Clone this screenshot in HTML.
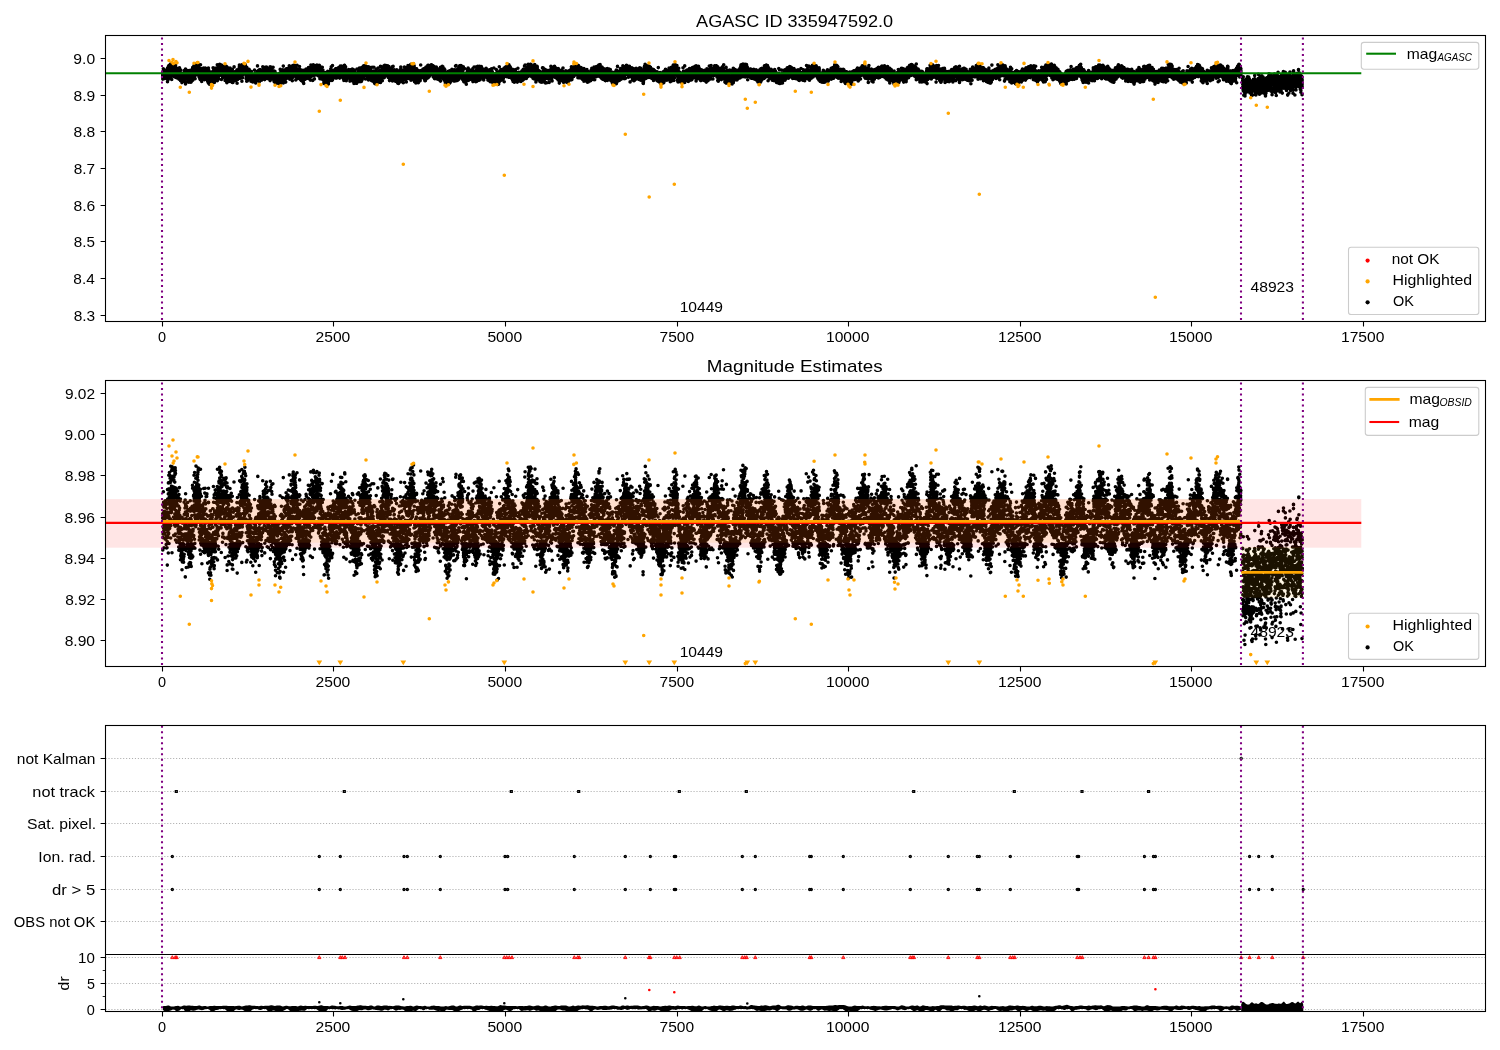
<!DOCTYPE html>
<html><head><meta charset="utf-8"><title>AGASC ID 335947592.0</title>
<style>html,body{margin:0;padding:0;background:#fff}body{width:1500px;height:1050px;overflow:hidden;font-family:"Liberation Sans",sans-serif}</style></head>
<body>
<svg width="1500" height="1050" viewBox="0 0 1500 1050" style="display:block;will-change:transform">
<rect width="1500" height="1050" fill="#fff"/>
<defs>
<clipPath id="c1"><rect x="105.5" y="35.5" width="1380" height="286"/></clipPath>
<clipPath id="c2"><rect x="105.5" y="380.5" width="1380" height="286"/></clipPath>
<clipPath id="c3"><rect x="105.5" y="725.5" width="1380" height="286"/></clipPath>
</defs>
<g clip-path="url(#c1)">
<g font-family="Liberation Sans, sans-serif" fill="#000" style="font-kerning:none;opacity:.999">
<text x="679.65" y="312.2" font-size="14.2" textLength="43.42" lengthAdjust="spacingAndGlyphs">10449</text>
<text x="1250.49" y="292.2" font-size="14.2" textLength="43.53" lengthAdjust="spacingAndGlyphs">48923</text>
</g>
<path d="M162.8 73.4V76.9M163.3 71.1V76.2M163.9 70.7V75.6M164.5 70.8V75.5M165.1 70.5V76.2M165.7 71.1V74.5M166.3 74.0V77.0M166.9 70.9V78.7M167.5 70.0V77.5M168.2 69.1V76.6M168.7 68.4V76.2M169.3 68.2V74.8M169.9 66.3V73.7M170.5 66.9V73.5M171.1 68.1V72.2M171.7 64.9V73.8M172.3 64.7V71.6M172.9 66.1V71.1M173.5 67.8V73.2M174.1 64.5V71.5M174.8 65.3V74.6M175.4 64.9V76.2M175.9 68.8V72.8M176.5 70.2V77.4M177.1 70.2V73.5M177.7 70.2V74.8M178.3 69.7V76.0M178.9 71.9V78.5M179.5 71.6V77.1M180.1 72.9V78.8M180.7 73.5V80.2M181.3 76.1V80.0M181.9 76.5V80.5M182.4 78.2V80.2M183.1 77.9V80.6M183.7 75.2V80.3M184.3 72.7V78.1M184.9 72.8V77.2M185.5 70.2V78.6M186.1 74.2V79.1M186.7 74.7V77.3M187.3 72.6V77.5M187.9 71.9V78.2M188.4 74.9V79.9M189.1 74.3V81.5M189.7 75.7V81.5M190.3 71.6V79.8M190.9 75.6V81.9M191.5 72.0V77.3M192.0 71.9V80.0M192.7 68.1V78.3M193.3 74.2V75.7M193.9 68.5V76.5M194.5 67.0V77.1M195.1 69.2V73.3M195.7 66.3V73.6M196.3 67.9V73.5M196.9 67.1V73.3M197.6 66.1V72.8M198.1 64.8V70.5M198.7 67.8V73.3M199.3 69.0V76.7M199.9 68.9V76.8M200.5 68.2V77.8M201.1 72.0V76.1M201.7 74.2V78.2M202.3 72.3V77.6M202.9 71.4V78.2M203.5 72.4V74.1M204.0 72.1V77.8M204.7 70.2V79.5M205.3 70.8V78.5M205.9 70.7V77.7M206.6 73.8V78.8M207.1 75.4V78.1M207.7 76.4V79.4M208.4 70.5V80.0M208.8 72.9V79.4M209.5 75.1V83.5M210.1 73.6V82.2M210.7 75.3V83.1M211.3 73.2V78.1M211.9 76.3V80.9M212.5 73.3V79.3M213.1 71.7V77.5M213.6 76.0V80.6M214.3 69.8V81.9M214.9 72.1V79.1M215.5 68.9V78.2M216.1 69.8V77.1M216.7 69.9V73.4M217.3 67.8V75.2M217.9 69.4V78.3M218.6 68.7V76.5M219.1 66.9V73.1M219.7 65.2V73.1M220.3 66.5V70.6M220.9 66.0V73.5M221.4 65.7V74.6M222.1 67.7V71.9M222.7 68.8V76.7M223.3 68.5V71.7M223.9 69.3V74.5M224.5 67.4V74.4M225.1 69.0V74.4M225.7 67.0V74.9M226.3 69.4V72.5M226.9 67.8V81.7M227.5 68.0V74.0M228.1 69.6V75.2M228.7 70.1V78.6M229.3 69.8V76.2M230.0 73.9V79.5M230.5 70.2V77.4M231.1 72.3V78.9M231.7 71.7V78.0M232.3 71.6V81.7M232.9 73.3V80.8M233.5 73.2V79.8M234.1 75.8V79.7M234.7 74.0V79.7M235.3 71.9V79.6M235.8 74.6V80.3M236.5 73.0V79.3M237.1 70.6V78.9M237.6 72.2V78.7M238.3 73.7V78.6M238.9 71.7V78.1M239.4 66.7V76.6M240.1 70.8V77.9M240.7 68.6V76.0M241.4 69.7V76.3M241.9 65.9V76.0M242.5 67.5V74.9M243.2 66.5V73.7M243.7 66.7V70.6M244.3 66.5V73.0M245.0 65.4V72.4M245.4 67.7V72.4M246.1 68.3V76.0M246.7 67.9V74.0M247.3 71.0V79.1M247.9 71.4V78.7M248.5 70.5V76.6M249.1 70.7V76.0M249.7 74.0V78.6M250.3 71.6V77.3M250.9 73.5V78.6M251.4 74.3V79.9M252.1 77.7V78.7M252.7 77.4V80.0M253.3 76.8V80.2M253.8 75.9V79.9M254.5 74.4V79.1M255.1 73.7V80.0M255.7 74.7V79.3M256.3 75.2V78.9M256.9 76.8V79.6M257.5 71.2V80.2M258.1 73.5V77.2M258.7 71.7V78.1M259.3 72.8V78.6M259.9 69.8V73.7M260.5 71.4V75.3M261.2 70.5V77.2M261.7 73.7V79.3M262.3 71.1V76.1M262.8 71.6V75.3M263.5 69.1V72.2M264.1 69.2V73.3M264.7 68.7V77.8M265.3 68.7V73.8M265.9 68.8V75.6M266.5 67.8V75.1M267.1 69.7V75.7M267.7 69.9V77.4M268.3 72.2V77.1M268.9 70.2V74.3M269.5 71.6V77.0M270.1 68.4V76.4M270.7 70.9V76.8M271.3 73.5V77.5M271.9 68.7V76.5M272.5 71.6V77.7M273.1 71.3V77.4M273.7 73.0V77.0M274.3 73.4V81.2M274.9 73.8V79.1M275.5 74.4V82.7M276.1 75.8V79.9M276.7 76.0V80.6M277.3 76.4V80.2M277.9 76.4V79.9M278.5 74.4V81.5M279.1 75.2V80.6M279.7 75.4V84.0M280.2 72.9V82.9M280.9 75.3V78.9M281.5 72.7V81.1M282.1 72.9V79.6M282.7 75.0V78.0M283.3 73.3V78.2M283.9 73.2V79.2M284.5 72.2V79.4M285.0 71.3V78.0M285.7 71.9V78.9M286.3 70.1V78.3M286.9 73.9V77.4M287.5 70.4V75.1M288.1 69.3V76.9M288.7 71.5V77.3M289.3 71.9V78.0M289.8 73.5V74.5M290.5 71.9V77.2M291.1 67.3V75.6M291.6 69.5V74.4M292.3 69.9V78.1M292.9 65.8V71.9M293.5 66.3V72.1M294.1 67.4V72.3M294.7 65.6V71.5M295.3 66.2V73.3M295.8 67.9V77.0M296.5 69.6V75.5M297.1 69.1V77.0M297.7 70.9V76.5M298.4 72.6V76.0M298.9 72.0V77.3M299.5 69.2V77.9M300.1 72.8V78.3M300.6 75.6V78.6M301.3 73.0V80.1M301.9 75.4V78.8M302.5 73.9V80.6M303.1 72.2V80.9M303.7 73.2V79.6M304.4 75.1V79.4M304.9 71.3V77.9M305.5 72.7V76.4M306.1 71.1V78.0M306.7 70.9V77.9M307.3 73.8V76.0M307.9 71.7V77.3M308.5 68.3V75.0M309.1 72.9V78.0M309.7 68.2V77.4M310.3 69.1V75.2M310.9 70.6V74.1M311.5 70.6V75.4M312.1 68.2V73.9M312.7 68.2V75.6M313.3 67.7V73.7M313.9 66.9V74.1M314.4 68.3V75.1M315.1 66.9V72.3M315.7 68.3V70.2M316.3 67.2V71.7M316.9 66.3V71.8M317.5 67.6V70.5M318.0 67.8V74.1M318.7 66.6V75.8M319.3 66.4V74.4M319.9 66.9V75.1M320.5 68.0V76.6M321.1 69.4V76.9M321.7 72.0V78.2M322.3 70.6V77.7M322.9 72.2V79.3M323.6 76.4V78.1M324.1 75.9V83.5M324.7 75.0V80.1M325.3 72.8V79.9M325.9 75.5V82.0M326.4 73.6V80.0M327.1 72.9V81.6M327.7 72.9V81.9M328.3 72.5V83.5M328.9 76.3V80.8M329.6 73.5V78.4M330.1 72.8V79.1M330.7 72.6V79.6M331.3 72.0V75.8M331.9 73.1V80.1M332.5 71.3V77.1M333.1 71.9V75.9M333.7 71.0V76.4M334.3 71.5V76.9M334.9 71.3V77.1M335.5 70.6V76.5M336.1 73.6V76.7M336.7 71.7V77.5M337.3 70.3V76.4M337.9 69.4V75.1M338.5 69.0V76.8M339.1 67.6V71.5M339.7 68.9V75.4M340.3 68.1V74.6M340.9 67.9V74.1M341.5 67.2V73.3M342.1 68.2V74.1M342.7 69.2V71.1M343.3 69.0V77.6M343.9 69.1V73.7M344.5 65.5V76.0M345.1 70.3V75.8M346.3 71.2V76.0M346.9 70.6V78.1M347.5 70.7V78.0M348.0 72.9V73.5M348.7 71.8V74.2M349.4 71.4V75.1M349.9 72.7V75.5M350.5 71.4V77.6M351.1 72.0V77.8M351.7 71.6V77.4M352.3 74.3V78.7M352.9 70.8V80.9M353.5 73.9V79.8M354.0 74.1V80.0M354.7 72.3V79.4M355.2 77.1V81.3M355.8 75.1V79.9M356.5 78.3V83.2M357.0 76.4V81.5M357.7 74.4V80.0M358.3 77.7V80.6M358.8 70.6V78.5M360.0 69.4V81.0M360.7 73.8V76.2M361.3 69.8V79.7M362.0 67.8V78.2M362.5 69.6V72.5M363.1 68.9V72.3M363.7 66.6V73.7M364.2 67.1V70.7M364.8 66.1V70.8M365.5 67.3V74.6M366.1 68.8V71.8M366.7 67.5V73.5M367.3 69.6V76.1M367.9 70.5V75.6M368.5 68.7V76.6M369.2 70.4V76.5M369.7 70.0V76.5M370.3 68.2V76.9M370.9 72.0V77.7M371.5 73.3V78.7M372.1 71.9V78.1M372.7 72.2V80.6M373.3 73.6V80.2M373.9 71.1V80.3M374.5 77.7V82.6M375.1 74.1V80.5M375.7 76.9V82.4M376.3 77.2V82.9M376.9 75.6V82.1M377.5 72.4V81.4M378.1 72.7V78.6M378.7 75.5V81.2M379.4 76.5V78.8M379.8 73.1V79.8M380.5 72.2V80.4M381.2 71.3V75.9M381.8 70.3V75.4M382.3 67.9V76.5M382.8 68.6V75.2M383.5 69.1V75.6M384.0 66.6V77.5M384.7 66.1V75.5M385.2 68.9V73.6M386.0 67.1V72.4M386.6 67.3V70.0M387.0 69.3V74.7M387.7 67.7V72.8M388.3 68.2V74.3M388.9 68.8V74.7M389.5 73.6V75.0M390.1 72.7V76.2M390.7 73.6V78.5M391.2 69.6V74.9M391.9 74.0V76.2M392.5 71.6V79.2M393.1 73.8V75.7M393.7 72.1V77.4M394.3 71.8V78.1M395.0 74.9V78.5M395.5 75.0V80.5M396.1 76.0V81.1M396.7 70.8V80.2M397.3 75.9V80.7M397.9 74.6V83.0M398.5 74.3V82.6M399.2 73.3V81.0M399.7 74.5V78.5M400.3 74.3V80.7M400.8 70.5V79.8M401.5 72.1V78.4M402.0 74.4V78.8M402.7 70.4V77.6M403.3 75.1V80.2M403.9 70.9V76.2M404.4 70.8V75.6M405.1 70.8V77.0M405.7 72.2V76.3M406.3 69.2V76.6M406.9 69.8V77.9M407.4 70.5V74.9M408.0 68.8V76.2M408.7 68.3V77.2M409.3 69.9V75.9M409.8 67.8V71.5M410.5 65.5V74.6M411.0 66.3V73.8M411.6 66.4V76.2M412.3 66.9V73.1M413.0 66.8V72.4M413.5 68.0V69.8M414.1 67.2V78.6M414.6 74.6V80.9M415.3 70.0V81.3M415.9 73.6V82.3M416.5 69.1V79.1M417.1 71.9V81.2M417.7 72.5V79.8M418.3 74.5V81.2M418.9 72.2V79.4M419.5 72.0V80.8M420.1 72.2V79.2M420.7 70.9V76.0M421.3 70.8V76.0M421.9 70.5V75.7M422.5 72.0V77.1M423.1 71.6V76.5M423.7 71.0V74.6M424.3 70.3V78.4M424.9 71.6V79.5M425.5 73.8V77.4M426.1 70.2V76.2M426.7 71.8V76.6M427.3 71.8V77.1M427.9 68.8V76.7M428.6 67.5V75.8M429.1 69.0V76.1M429.7 67.5V75.0M430.3 68.4V72.4M430.9 65.4V72.2M431.5 65.6V73.7M432.1 65.8V72.0M432.7 66.6V72.3M433.3 67.5V72.9M433.8 67.8V74.1M434.5 69.8V75.9M435.1 68.8V73.2M435.7 68.4V75.9M436.3 70.4V75.9M436.9 70.6V76.3M437.5 70.9V77.8M438.1 70.9V78.8M438.7 72.0V77.7M439.3 72.6V75.1M439.9 72.3V74.7M440.5 70.9V78.3M441.1 71.1V75.7M441.7 70.4V75.1M442.3 70.4V77.0M442.9 72.6V76.9M443.4 71.4V78.0M444.2 72.9V75.5M444.8 75.0V79.6M445.3 72.7V80.5M445.9 75.1V81.8M446.4 74.2V79.0M447.0 74.0V83.2M447.8 75.1V83.2M448.4 72.7V82.4M448.9 75.9V83.6M449.6 71.6V78.8M450.1 74.0V81.8M450.7 73.7V80.2M451.3 74.8V79.0M451.9 70.9V79.1M452.5 74.5V78.9M453.1 72.6V77.7M453.7 72.5V79.9M454.3 72.0V77.7M454.9 71.0V77.3M455.5 70.1V77.1M456.1 71.3V79.2M456.7 71.5V78.1M457.3 73.2V78.4M457.9 69.4V77.8M458.5 70.0V77.1M459.1 67.5V73.3M459.7 66.3V75.7M460.2 67.9V70.6M460.9 67.9V73.2M461.4 67.7V72.4M462.1 68.1V77.9M462.7 70.0V78.0M463.3 75.0V80.0M463.9 75.7V80.4M464.5 75.1V81.7M465.1 77.7V79.6M465.7 74.8V80.6M466.3 73.9V79.9M466.9 75.8V78.6M467.5 69.8V76.9M468.1 74.5V77.0M468.7 72.1V78.1M469.3 72.2V79.2M469.9 73.0V78.6M470.5 73.5V78.3M471.1 71.0V73.0M471.6 71.8V76.7M472.3 71.8V77.5M472.9 71.0V79.5M473.5 75.4V77.2M474.1 72.9V78.8M474.7 74.4V80.0M475.3 73.9V80.3M475.8 70.7V80.6M476.5 72.8V79.5M477.1 69.4V79.7M477.7 67.0V78.9M478.3 67.8V79.8M478.9 68.4V79.9M479.6 67.0V75.8M480.1 67.2V75.6M480.7 67.4V75.6M481.3 67.4V75.7M481.9 69.8V73.0M482.5 69.6V76.9M483.1 70.0V75.7M483.7 70.7V74.4M484.3 71.2V76.9M484.9 70.3V76.3M485.5 70.0V75.5M486.1 70.7V76.5M486.7 72.0V76.7M487.3 71.6V76.2M487.9 73.4V77.7M488.5 72.3V77.5M489.1 71.5V76.9M489.7 70.0V78.5M490.3 72.6V77.8M490.9 71.7V78.6M491.5 70.5V78.7M492.1 72.1V79.1M492.7 77.0V80.0M493.3 78.6V83.2M493.9 74.6V82.5M494.5 76.7V81.8M495.1 74.8V83.0M495.6 76.3V81.2M496.3 74.9V82.2M496.9 75.0V82.4M497.5 72.9V80.5M498.2 76.0V79.9M498.7 74.7V79.0M499.3 72.4V79.8M499.9 71.9V77.3M500.5 73.5V77.1M501.1 72.1V78.4M501.7 71.8V77.3M502.3 72.7V78.2M502.9 74.2V78.8M503.4 70.0V77.3M504.2 71.1V76.0M504.7 72.7V75.7M505.4 70.1V76.2M505.9 68.2V73.4M506.5 68.7V75.8M507.1 68.9V70.3M507.6 66.5V75.1M508.4 66.1V74.3M508.9 66.4V74.0M509.5 66.6V76.6M510.1 67.6V76.6M510.6 70.3V74.8M511.3 70.7V75.0M511.9 72.0V72.4M512.5 72.7V79.6M513.1 71.3V77.9M513.7 72.2V78.0M514.3 71.8V77.1M514.9 72.0V78.1M515.5 72.8V78.6M516.2 73.9V79.8M516.7 75.2V78.8M517.3 77.9V79.7M517.9 73.1V80.3M518.5 73.1V79.5M519.2 76.3V79.7M519.7 75.2V79.1M520.3 73.4V79.5M520.9 73.4V79.6M521.4 73.5V76.8M522.1 72.4V77.5M522.7 72.3V77.9M523.3 70.8V74.4M523.9 70.9V77.1M524.5 69.7V77.4M525.1 69.0V74.7M525.7 72.3V74.9M526.3 71.1V76.8M526.9 70.2V74.1M527.5 69.6V72.7M528.2 66.4V72.5M528.7 65.5V70.7M529.3 65.9V73.1M529.9 65.0V72.8M530.4 67.4V72.1M531.1 65.9V75.5M531.7 68.0V75.1M532.3 66.8V72.9M533.0 67.8V76.7M533.4 70.4V75.8M534.2 69.5V74.8M534.7 68.3V78.4M535.3 69.5V75.7M535.9 69.1V78.1M536.5 71.0V76.6M537.1 67.2V79.0M537.7 71.7V77.5M538.3 70.8V78.5M538.8 72.0V76.1M539.5 71.3V76.7M540.1 73.1V81.0M540.7 75.6V81.1M541.3 76.7V81.2M541.9 74.7V80.3M542.5 71.8V78.9M543.0 76.4V81.0M543.8 70.0V81.3M544.3 73.6V78.9M544.9 70.8V78.9M545.5 71.8V78.7M546.1 70.4V78.1M546.7 72.0V77.2M547.3 72.9V75.4M547.9 71.4V76.2M548.5 70.9V78.2M549.1 72.8V76.6M549.7 72.3V76.5M550.3 70.9V76.6M550.9 71.3V73.6M551.5 70.4V77.8M552.1 67.7V73.3M552.7 68.0V72.7M553.3 68.2V76.2M553.9 67.7V72.3M554.5 67.8V74.4M555.2 70.3V77.1M555.7 68.4V77.0M556.3 69.6V75.5M556.9 70.4V74.4M557.5 70.3V74.5M558.1 68.9V76.8M558.7 72.1V76.1M559.3 72.9V79.2M559.9 71.5V79.2M560.5 73.2V78.0M561.2 72.4V78.2M561.7 73.0V79.3M562.3 72.7V78.9M563.0 71.6V78.1M563.5 75.7V81.8M564.1 74.8V81.7M564.7 76.0V80.6M565.4 73.9V81.1M565.8 72.9V79.5M566.5 73.5V81.7M567.1 74.9V79.4M567.7 75.2V82.3M568.3 74.5V80.0M568.9 72.8V77.9M569.5 72.1V76.9M570.1 73.8V78.3M570.7 72.0V79.2M571.4 69.2V74.8M571.9 70.0V77.4M572.5 69.8V75.7M573.1 69.1V74.2M573.7 69.5V75.7M574.3 67.1V73.5M574.9 68.5V71.8M575.6 65.4V70.6M576.0 67.2V72.1M576.7 68.0V73.3M577.3 67.8V73.9M577.9 68.5V71.6M578.5 68.6V73.0M579.1 68.7V77.0M579.7 69.0V75.3M580.3 70.7V76.4M580.9 67.9V74.9M581.5 69.7V76.7M582.1 74.5V77.1M582.7 71.0V78.1M583.3 72.0V79.4M583.9 72.7V78.7M584.5 70.4V77.2M585.1 70.9V75.9M585.6 71.6V78.2M586.3 75.1V79.4M586.9 73.5V81.2M587.5 74.1V80.9M588.8 76.4V79.0M589.3 74.9V80.0M589.9 72.9V80.5M590.5 72.6V80.3M591.1 74.2V77.8M591.8 71.0V77.8M592.3 71.4V77.6M592.9 71.5V77.2M593.5 70.3V78.6M594.1 71.1V76.0M594.7 70.5V76.7M595.3 69.1V73.4M595.9 68.1V72.4M596.5 68.0V74.6M597.1 67.5V72.9M597.7 67.6V73.2M598.3 67.9V72.6M598.9 65.3V74.1M599.5 67.8V73.6M600.1 68.5V74.2M600.7 69.0V71.8M601.3 69.6V77.6M601.9 68.5V74.6M602.5 70.6V78.0M603.1 70.3V77.2M603.7 71.3V74.4M604.3 71.1V79.2M604.9 70.9V76.8M605.4 71.2V80.5M606.1 74.9V77.9M606.7 70.8V78.1M607.3 69.7V78.1M607.9 71.2V76.8M608.5 70.8V77.8M609.1 73.0V77.3M609.7 71.6V79.5M610.3 72.5V79.6M610.9 76.4V79.2M611.5 76.6V80.4M612.1 72.7V80.7M612.7 73.3V83.3M613.3 76.8V82.9M613.9 74.0V80.0M614.6 74.7V83.0M615.1 78.2V80.9M615.7 72.4V81.1M616.3 72.6V82.0M617.0 73.1V78.7M617.5 72.5V80.1M618.1 72.3V77.4M618.7 74.3V78.1M619.3 74.0V78.0M619.9 72.4V76.6M620.4 70.6V77.2M621.1 69.9V78.4M621.7 71.0V77.3M622.3 70.0V74.1M622.9 67.5V76.2M623.5 69.0V77.0M624.1 67.3V77.8M624.7 68.3V75.8M625.3 67.8V74.3M626.0 67.7V73.3M626.5 67.4V71.0M627.1 68.1V71.8M627.7 70.0V72.8M628.4 68.8V72.4M628.9 68.2V71.7M629.5 69.5V74.8M630.1 69.9V73.8M630.7 69.1V75.6M631.3 70.6V75.6M631.9 71.9V72.9M632.5 70.4V77.7M633.1 71.0V77.3M633.7 72.5V77.6M634.3 72.8V76.5M634.9 72.5V76.2M635.5 72.2V77.3M636.1 70.1V77.4M636.7 71.8V77.6M637.3 71.3V74.8M637.9 72.1V77.8M638.5 73.1V78.5M639.1 71.5V77.9M639.7 71.3V78.8M640.3 72.9V78.0M640.9 76.5V79.8M641.6 70.9V80.0M642.1 72.3V79.4M642.7 74.2V78.7M643.3 74.3V82.9M643.8 70.0V79.3M644.5 67.0V74.4M645.1 68.9V76.2M645.8 66.5V71.1M646.3 67.9V74.4M646.9 68.6V71.8M647.5 67.5V73.0M648.1 67.3V75.4M648.6 69.2V72.5M649.3 67.4V74.7M649.9 69.8V76.0M650.5 67.5V75.1M651.1 71.5V75.7M651.7 69.9V77.8M652.3 70.8V78.4M652.9 72.9V77.8M653.5 70.5V77.1M654.1 73.0V77.3M654.7 71.1V75.8M655.3 72.0V75.4M655.9 72.5V78.3M656.6 72.9V78.5M657.1 74.6V79.3M657.6 75.9V78.5M658.3 73.2V80.2M658.9 76.8V81.6M659.5 74.7V81.6M660.1 74.3V80.9M660.7 76.4V81.4M661.3 75.1V80.2M661.9 76.3V82.4M662.5 76.6V82.7M663.2 73.6V80.2M663.7 75.6V81.9M664.3 71.9V80.2M664.9 71.4V79.5M665.5 73.4V76.6M666.1 73.0V78.4M666.8 75.8V77.9M667.3 74.2V76.3M667.9 70.6V78.3M668.5 71.6V77.0M669.1 72.3V77.8M669.7 73.1V76.3M670.3 70.2V79.8M670.9 72.9V77.9M671.5 68.6V79.6M672.1 70.2V75.1M672.7 72.0V74.6M673.3 68.0V73.3M673.9 68.9V76.1M674.5 66.3V72.1M675.1 65.0V73.2M675.7 67.1V72.3M676.3 68.7V72.8M676.9 69.7V71.5M677.5 69.1V76.5M678.1 71.1V81.2M678.7 72.2V80.3M679.3 73.4V80.8M680.0 74.7V79.0M680.4 75.4V80.6M681.1 77.3V79.8M681.8 77.7V78.9M682.3 75.2V81.0M683.0 73.5V80.7M683.5 72.3V81.2M684.1 73.4V80.1M684.7 74.5V78.1M685.3 76.2V79.1M685.9 71.6V79.4M686.5 73.1V77.3M687.0 71.3V76.2M687.7 70.5V78.5M688.3 71.1V78.9M688.9 71.5V77.0M689.5 70.1V77.8M690.1 71.8V77.0M690.7 71.9V76.5M691.3 70.4V78.5M691.9 69.9V76.9M692.5 69.8V73.6M693.1 69.6V75.5M693.8 67.4V75.3M694.3 69.2V75.5M694.9 67.8V70.8M695.5 67.0V73.0M696.1 66.6V76.1M696.7 67.3V73.8M697.3 68.4V73.3M697.9 68.6V74.1M698.5 69.3V74.0M699.1 69.7V75.9M700.3 70.5V78.7M700.9 70.6V80.2M701.5 71.7V78.7M702.1 70.8V78.1M702.7 75.5V79.1M703.2 77.5V79.4M703.8 73.8V79.9M704.5 73.2V79.9M705.0 74.4V78.7M705.7 75.6V79.6M706.3 74.3V80.3M706.9 70.7V78.0M707.5 71.1V77.1M708.1 72.2V76.9M708.7 71.5V76.0M709.3 70.3V76.0M709.9 71.5V74.9M710.5 71.3V76.4M711.1 70.2V75.9M712.3 70.9V74.3M712.9 70.6V75.3M713.5 69.6V74.5M714.2 68.6V70.9M714.7 66.3V72.7M715.3 68.1V71.4M715.9 66.7V71.1M716.4 66.5V69.1M717.1 68.0V71.3M717.7 69.7V76.5M718.3 69.7V74.2M718.9 68.9V77.1M719.5 70.9V77.5M720.1 70.5V77.8M720.7 71.3V77.2M721.3 72.9V78.5M721.9 68.2V74.5M722.5 70.1V76.2M723.1 71.7V76.4M723.7 68.2V78.1M724.3 71.7V77.8M724.9 73.0V79.3M725.5 72.3V79.5M726.1 72.4V79.5M726.7 72.7V79.7M727.3 70.7V78.3M727.9 72.4V80.4M728.4 73.4V80.8M729.1 76.2V83.1M729.7 76.8V82.3M730.3 77.2V80.7M731.0 75.8V81.8M731.5 77.9V82.4M732.1 75.8V81.8M732.6 74.3V80.8M733.3 74.5V81.6M733.9 72.8V78.7M734.5 72.8V78.6M735.1 72.2V79.3M735.7 72.1V76.8M736.3 73.1V77.5M736.9 71.7V78.8M737.6 72.0V78.2M738.1 72.0V75.8M738.7 71.1V75.7M739.3 71.9V76.0M739.9 70.0V76.2M740.4 67.8V77.0M741.1 65.8V76.8M741.7 67.1V74.5M742.3 66.1V72.8M743.0 67.7V73.5M743.5 65.8V73.9M744.1 65.9V75.1M744.7 65.2V69.6M745.2 67.8V71.4M745.9 67.4V75.4M746.5 68.3V74.9M747.2 68.3V75.0M747.7 70.9V76.5M748.4 70.7V75.6M748.9 69.5V73.4M749.5 72.7V73.1M750.1 71.5V73.7M750.7 69.9V76.2M751.3 70.5V76.1M751.9 71.6V77.4M752.5 71.6V76.7M753.1 71.7V77.2M753.7 74.9V77.8M754.3 72.9V78.1M754.9 71.8V76.2M755.6 75.3V77.8M756.1 70.6V77.6M756.7 75.1V79.4M757.3 73.2V77.9M757.9 73.1V80.5M758.5 76.7V79.8M759.1 72.0V80.0M759.8 73.1V82.5M760.3 73.3V80.2M761.0 69.1V79.5M761.5 72.3V78.5M762.0 72.4V78.2M762.7 70.7V76.5M763.3 68.7V73.7M763.9 69.1V77.9M764.5 67.5V75.5M765.1 67.4V70.8M765.7 65.7V71.6M766.3 65.6V73.3M767.0 67.9V74.5M767.5 67.1V73.0M768.1 67.8V75.5M768.7 70.2V76.9M769.3 70.0V76.5M769.9 73.2V76.8M770.5 70.1V74.0M771.1 70.1V74.8M771.7 70.9V76.1M772.3 71.5V76.4M773.0 75.5V77.3M773.6 74.3V76.6M774.1 71.4V79.5M774.7 73.0V78.9M775.3 71.4V79.2M776.0 72.8V79.8M776.6 77.1V81.8M777.1 73.6V78.1M777.7 75.5V81.7M778.3 78.0V81.9M778.8 73.2V80.9M779.5 74.8V83.1M780.1 77.7V83.0M780.7 75.1V82.4M781.3 74.8V82.4M781.9 74.4V79.8M782.5 75.6V80.9M783.1 73.0V77.4M783.7 76.3V76.9M784.3 73.2V78.7M784.9 73.6V79.7M785.5 70.7V74.7M786.1 71.8V77.4M786.7 70.8V77.4M787.3 69.2V75.1M787.9 68.5V72.8M788.4 68.4V76.1M789.1 68.6V72.4M789.7 67.8V73.1M790.3 67.2V75.5M791.0 67.6V71.7M791.5 68.1V75.6M792.1 70.3V76.4M792.7 71.5V76.7M793.3 70.3V78.2M793.9 70.6V76.5M794.5 71.1V76.0M795.1 72.8V77.0M795.7 72.1V77.5M796.2 71.9V77.9M797.5 71.8V74.7M798.1 72.1V76.1M798.7 74.1V79.6M799.3 74.1V77.9M799.9 72.5V75.7M800.5 75.9V77.9M801.0 75.3V77.8M801.7 73.6V77.6M802.4 73.5V79.6M802.9 74.1V78.6M803.5 71.5V78.7M804.1 71.8V78.5M804.7 74.1V79.4M805.3 74.4V78.4M805.9 72.7V77.9M806.5 69.9V76.0M807.1 71.7V76.2M807.7 72.7V77.0M808.3 70.3V76.6M808.8 70.3V78.6M809.5 72.9V76.7M810.1 70.4V76.1M810.6 72.6V76.3M811.3 68.1V76.8M811.9 69.0V76.2M812.5 68.8V74.4M813.1 69.4V75.0M813.7 65.6V72.7M814.3 66.5V70.5M814.9 68.5V73.4M815.5 69.3V72.0M816.1 66.7V75.0M816.7 68.5V73.0M817.3 69.9V73.3M817.9 69.9V76.0M818.5 70.8V76.7M819.1 69.3V79.9M819.7 74.9V77.9M820.3 74.7V79.8M820.9 75.1V79.1M821.5 75.0V79.2M822.1 73.5V81.5M822.6 76.9V80.1M823.3 72.9V79.6M823.9 73.7V82.1M824.5 76.3V79.7M825.1 78.1V80.4M825.7 75.8V80.4M826.3 74.0V79.2M826.9 72.8V74.7M827.5 70.7V79.1M828.1 73.3V80.4M828.7 71.0V75.5M829.3 72.1V77.3M829.9 72.7V74.2M830.6 70.9V76.6M831.2 69.4V74.6M831.7 71.2V75.2M832.3 72.6V76.1M832.9 69.2V76.4M833.4 71.9V78.1M834.1 69.8V71.9M834.7 66.3V73.9M835.3 66.9V73.3M835.9 68.3V71.8M836.5 67.4V72.0M837.1 67.2V72.8M837.7 67.1V73.4M838.3 69.6V77.0M838.9 71.8V77.5M839.5 72.1V75.5M840.1 72.9V77.5M840.7 71.9V77.9M841.2 74.9V78.4M841.9 72.7V79.0M842.5 72.1V78.6M843.2 70.6V77.4M843.7 71.9V80.5M844.3 73.1V78.9M844.9 75.1V80.7M845.5 72.9V81.6M846.1 73.2V79.6M846.7 74.9V80.3M847.3 77.8V81.4M847.9 77.6V82.7M848.5 73.9V83.5M849.1 74.0V79.8M849.7 73.0V82.9M850.3 75.3V80.0M850.9 75.2V80.7M851.5 74.5V83.9M852.1 72.9V79.6M852.7 72.5V78.6M853.3 73.8V78.5M853.8 71.2V78.8M854.6 71.8V75.7M855.1 72.4V79.2M855.7 72.4V76.0M856.3 70.5V75.1M856.9 71.3V77.5M857.5 71.6V77.7M858.2 71.1V79.1M858.7 73.2V77.5M859.3 70.0V76.5M860.0 73.2V75.6M860.5 69.4V75.7M861.1 68.8V71.5M861.8 68.6V73.7M862.3 67.1V72.0M862.9 66.9V74.3M863.5 66.3V72.0M864.0 66.5V73.5M864.7 66.4V73.7M865.3 68.2V77.9M865.9 70.1V75.3M866.5 69.6V78.1M867.1 68.5V78.0M867.7 68.5V78.7M868.3 70.1V78.5M868.9 70.4V76.5M869.5 73.6V78.0M870.2 74.4V78.1M870.7 70.4V78.0M871.3 71.6V76.9M871.9 72.8V76.9M872.5 72.6V78.9M873.1 71.6V78.8M873.7 72.1V75.7M874.3 70.5V78.0M874.9 70.6V73.5M875.5 71.5V75.8M876.1 70.9V77.0M876.7 71.8V76.5M877.3 71.2V76.5M877.9 70.3V74.6M878.5 69.6V76.6M879.1 69.7V77.0M879.7 71.5V77.2M880.3 71.3V76.0M880.9 70.5V74.7M881.5 67.7V74.5M882.0 69.8V73.7M882.7 68.7V75.0M883.3 68.8V74.5M883.9 68.3V72.1M884.5 67.5V76.7M885.1 68.5V76.8M885.8 69.8V77.6M886.2 69.4V73.6M886.9 69.8V77.2M887.6 73.9V75.7M888.0 73.8V79.5M888.7 73.3V76.7M889.2 71.9V78.1M889.8 74.7V81.2M890.5 71.4V78.0M891.1 70.1V78.4M891.7 74.6V78.7M892.4 75.7V80.1M892.9 72.7V78.5M893.5 72.0V81.0M894.1 72.9V81.7M894.8 78.2V80.3M895.2 77.4V81.9M896.0 79.2V81.1M896.5 73.5V78.9M897.1 75.9V80.2M897.7 72.9V81.1M898.3 72.8V80.3M898.9 72.9V81.0M899.5 74.1V78.8M900.1 75.2V79.7M900.7 72.9V74.9M901.4 74.0V78.8M901.9 72.7V74.1M902.6 71.5V76.6M903.1 72.0V74.8M903.7 73.9V79.6M904.3 69.6V75.3M904.9 72.7V78.8M905.5 71.7V77.0M906.1 73.0V79.9M906.7 72.8V75.0M907.3 70.6V75.8M907.9 69.5V75.6M908.5 69.4V75.9M909.1 69.3V75.2M909.7 68.7V74.8M910.3 66.7V74.4M910.9 67.5V74.5M911.5 64.7V73.5M912.1 66.7V72.0M912.7 66.2V74.5M913.3 67.9V72.2M914.0 66.7V73.1M914.5 68.8V75.8M915.1 69.6V72.2M915.8 68.7V75.4M916.3 68.9V76.4M916.9 73.6V77.8M917.5 70.0V76.1M918.1 69.8V76.5M918.7 74.0V77.8M919.3 71.8V77.0M919.9 72.4V77.9M920.5 73.4V79.4M921.1 73.5V78.9M921.7 77.0V80.1M922.3 73.9V80.6M922.9 74.9V80.6M923.5 77.4V79.8M924.1 75.2V79.9M924.7 74.4V81.2M925.3 75.5V79.4M925.9 77.1V81.8M926.5 72.6V79.2M927.1 69.1V79.3M927.7 73.0V79.0M928.3 72.7V78.1M928.9 72.1V75.7M929.5 70.2V77.1M930.1 67.7V74.1M930.8 66.1V71.1M931.3 68.9V72.1M931.9 67.7V73.6M932.5 66.5V72.2M933.1 67.5V73.1M933.7 66.9V76.8M934.3 69.9V73.6M934.9 67.9V74.9M935.5 69.8V72.7M936.1 68.7V77.3M936.7 69.2V77.4M937.3 69.9V75.0M937.9 72.1V77.6M938.5 71.4V76.0M939.1 71.1V76.3M939.7 73.6V78.2M940.4 69.9V76.9M940.9 71.4V81.8M941.5 71.7V79.0M942.1 72.1V76.4M942.7 71.5V75.2M943.3 70.2V74.7M943.9 70.9V74.9M944.5 71.8V78.2M945.1 72.8V81.3M945.7 75.2V79.2M946.3 74.1V78.1M946.9 71.7V79.1M947.5 74.2V80.0M948.1 76.7V81.3M948.7 76.1V80.7M949.3 74.2V80.9M949.9 74.3V79.2M950.5 71.9V79.5M951.1 74.5V77.8M951.7 70.3V77.9M952.3 72.4V76.9M952.9 70.7V79.1M953.5 69.8V73.9M954.1 69.0V76.6M954.7 67.8V75.4M955.3 68.4V74.8M955.9 68.2V73.5M956.5 68.7V74.6M957.1 69.4V72.8M957.7 68.9V76.5M958.3 69.8V75.7M958.9 73.0V74.4M959.5 70.0V77.2M960.1 70.1V76.9M960.7 71.4V75.2M961.3 73.6V76.9M961.9 71.1V77.3M962.5 70.8V78.6M963.1 72.1V75.2M963.7 71.6V77.4M964.3 70.4V78.3M964.9 71.7V78.1M965.5 73.4V77.9M966.1 72.1V78.7M966.7 72.4V78.7M967.3 74.8V79.4M967.9 74.6V79.1M968.5 75.5V79.9M969.1 74.6V80.2M969.7 75.0V78.6M970.3 72.2V77.9M970.9 74.2V80.2M971.5 70.4V75.1M972.1 70.5V75.7M972.7 70.4V76.0M973.3 70.7V75.9M974.0 70.2V74.4M974.5 69.7V74.9M975.2 69.4V73.0M975.7 69.2V74.8M976.3 69.6V75.0M976.9 68.1V74.2M977.5 68.7V73.6M978.1 66.1V77.4M978.7 66.0V72.9M979.3 65.1V72.4M979.9 65.8V75.2M980.5 68.5V75.3M981.2 71.1V72.7M981.7 68.2V72.9M982.3 69.5V75.6M982.9 71.0V76.4M983.5 68.7V79.9M984.0 70.1V77.8M984.8 74.4V78.7M985.2 70.6V79.0M985.9 70.3V79.8M986.5 77.0V80.9M987.1 77.0V80.2M987.7 77.1V79.7M988.3 77.8V80.8M988.9 70.2V80.9M989.5 76.0V79.0M990.1 75.3V80.7M990.7 75.2V81.5M991.3 73.6V79.9M991.9 72.6V78.5M992.5 71.8V78.5M993.1 72.2V76.8M993.7 71.0V77.0M994.3 70.6V75.8M994.9 70.4V76.5M995.5 70.9V75.0M996.1 69.8V77.2M996.7 69.4V73.1M997.4 69.6V75.3M997.9 68.0V74.4M998.5 69.5V76.1M999.1 69.2V73.6M999.7 67.1V75.3M1000.3 69.6V73.8M1000.9 67.8V71.4M1001.6 67.9V74.5M1002.1 65.0V74.7M1002.8 68.0V72.1M1003.3 68.3V73.2M1003.9 67.3V72.7M1004.5 68.0V75.6M1005.1 67.0V75.9M1005.7 73.6V74.7M1006.3 69.9V75.2M1007.5 73.9V77.8M1008.1 71.8V78.3M1008.7 72.7V77.9M1009.3 71.5V77.2M1009.9 71.1V74.8M1010.5 70.7V75.5M1011.1 74.7V76.3M1011.7 73.0V78.7M1012.3 73.0V79.4M1012.9 73.8V78.0M1013.5 75.2V80.2M1014.1 76.4V80.0M1014.7 76.7V81.7M1015.3 77.2V81.6M1015.8 74.3V83.7M1016.5 72.5V82.1M1017.1 75.9V79.9M1017.7 74.2V82.9M1018.3 73.3V80.8M1018.9 78.1V79.7M1019.5 73.9V79.5M1020.0 74.5V81.2M1020.7 74.2V77.9M1021.3 73.2V77.9M1021.9 72.2V79.4M1022.5 70.3V75.8M1023.1 72.8V79.2M1023.8 73.8V78.6M1024.3 73.5V78.1M1024.9 72.8V77.8M1025.5 69.8V77.1M1026.1 69.6V73.8M1026.7 69.1V75.6M1027.3 70.2V75.4M1027.8 69.9V76.8M1028.5 67.5V75.4M1029.1 68.5V75.8M1029.7 67.2V74.8M1030.3 66.7V72.1M1030.8 67.6V74.9M1031.4 68.9V74.9M1032.1 71.8V74.7M1032.8 69.9V73.2M1033.3 69.3V73.7M1033.9 68.5V78.4M1034.5 69.6V76.9M1035.1 72.6V78.4M1035.7 71.0V78.2M1036.2 71.8V78.2M1036.9 76.1V76.4M1037.5 75.9V80.0M1038.1 76.4V79.9M1038.7 73.0V79.0M1039.3 72.6V77.5M1039.9 73.2V78.7M1040.5 71.3V77.8M1041.1 72.1V78.9M1041.7 70.3V77.2M1042.3 69.6V78.4M1042.9 69.8V76.0M1043.5 72.7V76.4M1044.1 70.8V75.6M1044.6 73.3V76.2M1045.3 70.3V75.9M1045.9 66.3V76.3M1046.5 68.0V76.0M1047.1 69.0V71.9M1047.7 68.1V72.8M1048.3 65.9V72.2M1049.0 66.7V72.3M1049.5 66.0V73.4M1050.1 67.2V73.6M1050.7 66.3V75.5M1051.4 64.6V73.6M1051.9 70.5V76.0M1052.4 68.9V76.0M1053.0 69.3V75.1M1053.7 68.6V76.9M1054.3 68.8V74.3M1054.9 68.6V76.7M1055.5 70.1V74.1M1056.1 70.2V76.9M1056.7 70.9V76.6M1057.3 72.0V75.9M1057.9 70.7V79.2M1058.5 71.2V78.2M1059.1 72.8V78.9M1059.7 73.5V78.9M1060.3 74.3V78.1M1060.9 74.2V83.1M1061.5 76.7V83.3M1062.1 77.0V83.0M1062.7 77.9V80.1M1063.3 75.7V82.3M1063.9 76.8V82.9M1064.5 75.4V81.0M1065.1 75.7V80.4M1065.7 73.7V80.2M1066.3 74.7V79.6M1066.9 72.4V79.1M1067.6 72.5V73.6M1068.1 71.7V75.0M1068.7 70.9V78.8M1069.3 70.7V76.9M1069.9 72.4V77.1M1070.5 72.8V75.6M1071.1 71.2V79.2M1071.7 71.6V73.0M1072.3 71.6V78.9M1072.9 75.5V77.9M1073.4 71.8V74.6M1074.2 72.0V79.1M1074.7 73.6V77.8M1075.3 69.4V76.6M1075.9 70.0V76.8M1076.5 68.9V76.1M1077.1 68.6V72.1M1077.8 67.8V74.8M1078.3 69.3V74.5M1078.9 68.2V71.6M1079.5 65.9V71.5M1080.1 65.2V72.0M1080.7 67.7V75.4M1081.3 69.8V74.8M1081.9 69.7V77.4M1082.4 73.8V80.2M1083.2 72.0V78.0M1083.7 70.3V79.9M1084.3 73.3V79.4M1084.9 73.0V80.4M1085.5 74.0V80.4M1086.1 77.1V81.5M1086.7 75.2V79.2M1087.3 76.9V79.4M1087.9 75.6V79.8M1088.6 72.2V80.2M1089.1 76.9V77.9M1089.7 75.5V78.9M1090.2 74.2V78.8M1090.9 73.3V79.5M1091.5 77.9V79.7M1092.1 73.1V78.3M1092.8 74.4V80.3M1093.3 70.0V78.6M1093.9 70.8V78.3M1094.5 70.4V78.4M1095.1 71.2V76.9M1095.7 67.1V76.2M1096.3 70.7V73.5M1096.9 70.3V75.9M1097.5 68.0V75.8M1098.1 68.3V73.6M1098.7 69.2V73.9M1099.4 66.5V73.6M1099.9 65.6V74.5M1100.5 66.0V75.9M1101.1 71.1V74.1M1101.7 68.0V76.4M1102.4 66.4V70.9M1102.9 66.5V76.6M1103.6 70.1V72.3M1104.1 67.4V74.5M1104.8 70.6V77.5M1105.4 71.4V78.2M1105.9 70.4V78.6M1106.6 70.1V77.3M1107.1 70.2V78.5M1107.7 71.0V78.0M1108.3 69.1V78.3M1108.9 71.5V78.4M1109.5 71.7V78.9M1110.1 74.4V79.7M1110.7 74.3V79.8M1111.3 75.5V78.7M1111.9 71.4V79.7M1112.5 73.6V79.8M1113.2 75.9V78.2M1113.7 73.9V82.1M1114.3 73.1V78.6M1114.9 70.3V79.3M1115.5 71.8V75.6M1116.1 71.3V76.6M1116.6 69.8V76.8M1117.3 70.6V76.9M1117.8 68.2V72.1M1118.4 67.1V75.4M1119.0 66.5V71.4M1119.7 68.5V73.6M1120.2 67.8V72.6M1120.9 68.2V72.8M1121.5 68.2V73.9M1122.1 68.2V75.1M1122.7 68.6V77.8M1123.3 70.6V74.6M1123.9 69.4V75.7M1124.5 70.9V74.7M1125.1 71.4V76.9M1125.7 69.6V76.8M1126.3 71.1V73.7M1126.9 70.3V77.8M1127.5 69.6V76.9M1128.1 70.1V79.0M1128.7 71.8V75.2M1129.3 70.7V77.1M1129.9 71.1V79.0M1130.4 72.1V78.5M1131.1 71.5V80.0M1131.7 71.3V79.0M1132.3 76.5V80.5M1132.9 76.0V81.6M1133.4 71.7V81.2M1134.1 76.0V81.5M1134.7 73.2V81.2M1135.3 75.9V79.7M1135.9 75.5V78.4M1136.5 76.3V79.4M1137.1 72.1V78.9M1137.7 73.5V79.2M1138.3 74.6V80.3M1138.9 71.4V78.0M1139.5 71.8V76.4M1140.1 70.2V74.9M1140.7 74.4V79.2M1141.3 71.2V76.2M1141.9 71.0V76.9M1142.5 71.6V80.3M1143.1 70.1V74.2M1143.7 68.7V76.5M1144.3 68.7V75.8M1144.9 73.5V76.8M1145.6 71.4V74.3M1146.1 69.0V75.0M1146.8 69.3V74.7M1147.3 66.8V74.8M1147.9 66.7V76.2M1148.5 69.3V74.6M1149.1 66.6V76.6M1149.7 67.6V73.7M1150.3 68.7V75.2M1150.9 69.8V75.8M1151.5 69.3V76.2M1152.1 72.5V74.0M1152.7 73.7V78.6M1153.3 69.5V79.3M1153.9 73.4V79.8M1154.4 75.8V80.0M1155.0 73.7V81.4M1155.6 77.0V79.8M1156.3 73.4V79.9M1156.9 75.0V79.4M1157.5 72.7V78.8M1158.1 73.8V80.4M1158.7 72.2V78.2M1159.3 71.7V77.9M1159.9 71.3V77.0M1160.5 70.6V78.0M1161.2 72.8V79.3M1161.7 72.1V79.1M1162.3 71.7V80.1M1162.9 70.3V78.6M1163.4 72.8V79.6M1164.1 71.4V79.8M1164.7 70.8V76.7M1165.3 70.2V76.5M1165.8 68.6V79.0M1166.5 71.2V74.5M1167.0 75.3V77.1M1167.7 69.3V75.0M1168.3 68.0V74.1M1168.9 68.0V71.3M1169.5 66.2V72.4M1170.2 65.1V73.3M1170.7 71.0V75.0M1171.3 67.2V75.2M1171.9 66.2V73.6M1172.5 70.4V77.4M1173.1 70.0V73.0M1173.7 73.5V77.4M1174.2 71.1V73.7M1174.9 71.2V76.7M1175.5 72.0V77.6M1176.1 72.7V77.8M1176.8 70.6V78.6M1177.3 72.1V77.7M1177.9 71.9V78.9M1178.5 71.9V78.7M1179.1 72.3V78.4M1179.7 74.6V79.4M1180.3 73.9V81.7M1180.8 75.6V80.1M1181.5 73.6V81.1M1182.1 77.0V81.2M1182.7 78.1V81.6M1183.2 74.2V80.9M1183.9 75.4V82.5M1184.5 75.5V80.3M1185.1 75.3V81.2M1185.7 78.3V80.9M1186.3 76.1V80.0M1187.5 72.8V78.2M1188.1 73.6V78.1M1188.7 72.0V76.3M1189.3 71.3V76.2M1189.9 72.6V77.3M1190.5 69.9V74.4M1191.0 74.4V76.1M1191.7 70.7V76.5M1192.3 72.6V78.7M1192.9 69.9V75.7M1193.5 70.1V72.6M1194.1 69.8V75.4M1194.7 71.0V76.3M1195.3 69.7V74.3M1195.9 70.0V75.0M1196.5 66.7V74.4M1197.1 67.2V71.1M1197.7 64.8V72.3M1198.2 68.2V74.5M1198.9 65.6V71.0M1199.5 66.4V74.7M1200.0 69.7V72.7M1200.7 68.5V74.3M1201.3 68.3V77.4M1201.9 71.2V76.2M1202.5 69.9V74.8M1203.0 72.6V79.1M1203.7 72.4V77.8M1204.3 72.8V79.0M1204.9 73.6V79.1M1205.5 75.1V80.2M1206.1 75.3V78.9M1206.7 75.1V80.9M1207.3 75.0V79.6M1207.9 75.1V79.2M1208.6 72.0V75.0M1209.1 71.6V77.3M1209.6 71.7V75.9M1210.3 73.8V79.0M1210.9 71.7V78.1M1211.5 71.6V77.9M1212.1 72.5V75.4M1212.7 70.4V77.2M1213.3 69.3V76.1M1213.9 68.0V73.4M1214.5 68.7V74.0M1215.1 68.2V74.8M1215.6 66.2V72.7M1216.3 67.2V74.3M1216.9 67.1V75.2M1217.4 66.5V71.6M1218.2 66.7V77.4M1218.6 69.0V70.4M1219.3 68.0V73.1M1219.8 67.5V73.7M1220.5 67.1V75.4M1221.1 68.3V73.0M1221.7 69.5V74.6M1222.3 68.7V75.9M1222.9 68.6V73.9M1223.5 69.2V77.7M1224.1 70.0V78.5M1224.7 69.8V75.5M1225.3 70.4V75.0M1225.9 70.6V75.6M1226.5 70.5V75.7M1227.1 70.1V79.8M1227.7 66.5V75.0M1228.3 71.4V79.6M1229.0 75.1V79.8M1229.5 74.2V79.9M1230.1 75.2V80.6M1230.7 71.4V81.6M1231.3 74.4V83.2M1231.9 76.6V81.1M1232.5 75.6V79.8M1233.1 73.1V79.2M1233.7 73.6V78.8M1234.4 72.5V76.9M1234.9 72.3V78.1M1235.5 70.9V78.7M1236.1 69.7V74.1M1236.7 68.5V75.7M1237.3 68.2V74.7M1237.9 66.2V72.1M1238.5 67.4V73.9M1239.0 64.8V72.5M1239.7 67.8V71.6M1240.4 68.6V74.8M1240.8 70.2V76.2" stroke="#000" fill="none" stroke-linecap="round" stroke-width="3.6"/>
<path d="M162.8 72.6h0m0 6.5h0m.5-10.4h0m0 7.5h0m.6-5.7h0m0 8.2h0m.6-8.2h0m0 5h0m.6-5.2h0m0 6.8h0m.6-6.2h0m0 4h0m.6-2.3h0m0 5.5h0m.6-7.4h0m0 8h0m.6-10.4h0m0 13.5h0m.7-14.7h0m0 12.5h0m.5-13.9h0m0 12.2h0m.6-12.6h0m0 10h0m.6-9.6h0m0 9.5h0m.6-11.1h0m0 12.8h0m.6-10.4h0m0 8.2h0m.6-10.3h0m0 15.1h0m.6-15.3h0m0 7.5h0m.6-6.9h0m0 6.9h0m.6-5.8h0m0 10.5h0m.6-11.9h0m0 9h0m.7-8.5h0m0 11.4h0m.6-12h0m0 12.9h0m.5-9.3h0m0 5.6h0m.6-5.3h0m0 9.4h0m.6-9.1h0m0 4.9h0m.6-5h0m0 8.2h0m.6-7.4h0m0 6.7h0m.6-6.8h0m0 9.9h0m.6-11.2h0m0 9.8h0m.6-7.4h0m0 8.7h0m.6-9h0m0 10.8h0m.6-5.4h0m0 5.1h0m.6-7.3h0m0 9.4h0m.5-8.3h0m0 6.9h0m.7-3.9h0m0 3.5h0m.6-7.2h0m0 7.6h0m.6-10.6h0m0 9.2h0m.6-8.2h0m0 7.2h0m.6-9.8h0m0 14.9h0m.6-12.7h0m0 11h0m.6-10.9h0m0 7.4h0m.6-6.6h0m0 6.1h0m.6-7.6h0m0 8.1h0m.5-4.7h0m0 8.1h0m.7-8h0m0 7.9h0m.6-8.4h0m0 8.4h0m.6-11.7h0m0 9.7h0m.6-6.4h0m0 8.4h0m.6-10.4h0m0 6.3h0m.5-6.6h0m0 9.2h0m.7-13h0m0 12.7h0m.6-10.7h0m0 7.1h0m.6-10.9h0m0 12.9h0m.6-13.4h0m0 12.7h0m.6-9.6h0m0 10.4h0m.6-14.6h0m0 10.8h0m.6-7.1h0m0 6.8h0m.6-8.8h0m0 7.5h0m.7-7.7h0m0 8.1h0m.5-9.3h0m0 6.7h0m.6-3.6h0m0 7.8h0m.6-7h0m0 9h0m.6-8.6h0m0 10.4h0m.6-14.4h0m0 15.1h0m.6-10.3h0m0 7.9h0m.6-6.3h0m0 10.4h0m.6-9.4h0m0 6.1h0m.6-7.3h0m0 8.4h0m.6-11.2h0m0 7.5h0m.5-4.9h0m0 7.9h0m.7-9.7h0m0 10.7h0m.6-11.5h0m0 11h0m.6-9.6h0m0 9.1h0m.7-9.1h0m0 9.8h0m.5-10.2h0m0 9.6h0m.6-5.7h0m0 8.4h0m.7-13.4h0m0 15.1h0m.4-12.5h0m0 9.1h0m.7-5.2h0m0 9.8h0m.6-12.2h0m0 10.4h0m.6-8.8h0m0 9.9h0m.6-10.9h0m0 8.8h0m.6-8h0m0 8.4h0m.6-10.2h0m0 10h0m.6-14h0m0 10.2h0m.5-7.3h0m0 10.6h0m.7-12h0m0 13.2h0m.6-14h0m0 10.7h0m.6-10.8h0m0 11.1h0m.6-9.6h0m0 10.7h0m.6-11.2h0m0 7.7h0m.6-12.3h0m0 16.1h0m.6-12.3h0m0 9.9h0m.7-10.2h0m0 10.7h0m.5-12.2h0m0 7.2h0m.6-9.6h0m0 10.8h0m.6-10.3h0m0 7.3h0m.6-6.5h0m0 9.5h0m.5-10.1h0m0 14.5h0m.7-12.8h0m0 5.6h0m.6-4.9h0m0 10.3h0m.6-10.4h0m0 5.3h0m.6-6.3h0m0 10.5h0m.6-10.2h0m0 10.3h0m.6-8h0m0 11.5h0m.6-14h0m0 11.7h0m.6-11.9h0m0 8.7h0m.6-7.8h0m0 15.6h0m.6-14.9h0m0 8.9h0m.6-7.1h0m0 10.5h0m.6-10.2h0m0 11.2h0m.6-11.7h0m0 7.6h0m.7-8.9h0m0 13.4h0m.5-11.8h0m0 9.1h0m.6-9.8h0m0 11.1h0m.6-9.7h0m0 9.7h0m.6-10.6h0m0 13h0m.6-9.2h0m0 9.2h0m.6-10.2h0m0 8.1h0m.6-13.5h0m0 12.9h0m.6-7.8h0m0 8.5h0m.6-8.8h0m0 8.2h0m.5-5.5h0m0 6.1h0m.7-7.7h0m0 7.3h0m.6-10.4h0m0 13.5h0m.5-11.6h0m0 7.8h0m.7-6.7h0m0 6.1h0m.6-8.1h0m0 7.6h0m.5-13.3h0m0 12.6h0m.7-7.1h0m0 7.7h0m.6-11.3h0m0 9.9h0m.7-10.1h0m0 9.8h0m.5-11.8h0m0 16.6h0m.6-15.1h0m0 11.5h0m.7-12.3h0m0 8.7h0m.5-9h0m0 6.4h0m.6-6.5h0m0 8.5h0m.7-9.2h0m0 8.4h0m.4-6.9h0m0 7.7h0m.7-5.9h0m0 10.9h0m.6-11.2h0m0 13.9h0m.6-12.2h0m0 11.9h0m.6-11.7h0m0 10.2h0m.6-9.2h0m0 7.2h0m.6-8.1h0m0 8.6h0m.6-6.6h0m0 7.5h0m.6-7.8h0m0 7h0m.6-5.9h0m0 9.1h0m.5-9.6h0m0 8.7h0m.7-4.4h0m0 3.1h0m.6-1.8h0m0 4.7h0m.6-5.8h0m0 4.5h0m.5-5.3h0m0 5h0m.7-10.2h0m0 9.3h0m.6-5.8h0m0 7.4h0m.6-7.7h0m0 9.7h0m.6-9.8h0m0 7.1h0m.6-5h0m0 4.6h0m.6-14h0m0 14.5h0m.6-8.9h0m0 7.6h0m.6-8.8h0m0 8.2h0m.6-5.8h0m0 9.1h0m.6-12.3h0m0 7.5h0m.6-6.3h0m0 7.5h0m.7-7.8h0m0 7.7h0m.5-7.8h0m0 9.8h0m.6-9.7h0m0 8.2h0m.5-11.9h0m0 9.1h0m.7-7.2h0m0 4.5h0m.6-4h0m0 5.6h0m.6-6.3h0m0 11.2h0m.6-12.2h0m0 7.9h0m.6-7.1h0m0 9.2h0m.6-10.4h0m0 8.1h0m.6-5.5h0m0 8.9h0m.6-8.7h0m0 7.6h0m.6-6h0m0 7.2h0m.6-10.1h0m0 7.6h0m.6-5.1h0m0 6.6h0m.6-10.8h0m0 13.8h0m.6-12.7h0m0 11.1h0m.6-5.7h0m0 4.9h0m.6-10.8h0m0 9.2h0m.6-5h0m0 7h0m.6-11.3h0m0 12h0m.6-6.6h0m0 4.8h0m.6-6.4h0m0 10.6h0m.6-10.4h0m0 8h0m.6-6.2h0m0 10.5h0m.6-8.1h0m0 5.1h0m.6-5.9h0m0 6h0m.6-4.4h0m0 6.8h0m.6-8.5h0m0 5.6h0m.6-6.2h0m0 8.4h0m.6-7.2h0m0 7.9h0m.6-8.8h0m0 9.8h0m.5-14.7h0m0 14.6h0m.7-11.1h0m0 6.1h0m.6-7.8h0m0 10.3h0m.6-8.7h0m0 7.7h0m.6-10.8h0m0 8.7h0m.6-12.3h0m0 16.9h0m.6-11h0m0 8.3h0m.6-8.4h0m0 9h0m.5-11.1h0m0 9h0m.7-7.6h0m0 10.9h0m.6-13.2h0m0 9.5h0m.6-8.9h0m0 8.6h0m.6-7.7h0m0 7h0m.6-9h0m0 9.3h0m.6-8.1h0m0 8.2h0m.6-12.1h0m0 12.4h0m.5-5.3h0m0 6.4h0m.7-10.7h0m0 8.9h0m.6-10.7h0m0 9.1h0m.5-7.2h0m0 8h0m.7-8.2h0m0 12.3h0m.6-15.2h0m0 6.5h0m.6-6.8h0m0 9.9h0m.6-8.1h0m0 6.9h0m.6-8.3h0m0 6.4h0m.6-6.3h0m0 8.3h0m.5-6.5h0m0 12.4h0m.7-11.2h0m0 7.2h0m.6-10.6h0m0 13.4h0m.6-8.5h0m0 6.8h0m.7-6.1h0m0 5.8h0m.5-7.2h0m0 8.1h0m.6-11h0m0 11.5h0m.6-7.2h0m0 8.1h0m.5-6.7h0m0 7.5h0m.7-9.7h0m0 10.5h0m.6-8.3h0m0 7.4h0m.6-6.8h0m0 8.1h0m.6-10.6h0m0 11.6h0m.6-10.1h0m0 11.5h0m.7-11h0m0 7h0m.5-9.3h0m0 8.9h0m.6-7.1h0m0 5.7h0m.6-8.5h0m0 9.6h0m.6-9.2h0m0 8.8h0m.6-5h0m0 3.1h0m.6-6h0m0 7.5h0m.6-10.4h0m0 8.8h0m.6-5.2h0m0 7.6h0m.6-11.1h0m0 10.6h0m.6-9.5h0m0 11.4h0m.6-15h0m0 11.7h0m.6-10.1h0m0 8.7h0m.6-8.1h0m0 7.9h0m.6-7.8h0m0 13h0m.6-15.6h0m0 10.2h0m.6-9.7h0m0 9.7h0m.5-8.1h0m0 12h0m.7-12.9h0m0 8.5h0m.6-8.1h0m0 3.9h0m.6-5h0m0 9.7h0m.6-9.9h0m0 7h0m.6-5.1h0m0 3.6h0m.5-3.2h0m0 7.3h0m.7-9h0m0 10.3h0m.6-10.7h0m0 9.9h0m.6-8.6h0m0 12.2h0m.6-10.8h0m0 8.7h0m.6-7.4h0m0 9.5h0m.6-7.1h0m0 6.6h0m.6-11.1h0m0 10.8h0m.6-7.9h0m0 9.4h0m.7-3.2h0m0 2.9h0m.5-4h0m0 8.3h0m.6-10.8h0m0 9h0m.6-9.1h0m0 7.6h0m.6-6.9h0m0 9.1h0m.5-8.8h0m0 8.4h0m.7-9.3h0m0 10.3h0m.6-11.6h0m0 10.6h0m.6-10.2h0m0 12.3h0m.6-7.9h0m0 4.8h0m.7-7.6h0m0 6.1h0m.5-8.2h0m0 9h0m.6-11.3h0m0 10.9h0m.6-13.1h0m0 10.5h0m.6-6.1h0m0 9.2h0m.6-14.8h0m0 14.1h0m.6-9.4h0m0 6.5h0m.6-6h0m0 6.3h0m.6-5.9h0m0 6.2h0m.6-6.2h0m0 6.3h0m.6-8.8h0m0 9.2h0m.6-9.3h0m0 8.8h0m.6-7.3h0m0 7.8h0m.6-8.9h0m0 7.5h0m.6-7.4h0m0 7.5h0m.6-8.7h0m0 9h0m.6-9.4h0m0 8.7h0m.6-8.4h0m0 10.3h0m.6-12h0m0 9.8h0m.6-8.9h0m0 7.6h0m.6-8.5h0m0 9.3h0m.6-8.1h0m0 9.8h0m.6-9.9h0m0 6.7h0m.6-5.6h0m0 10.3h0m.6-10.2h0m0 12h0m.6-15.1h0m0 11h0m.6-6.5h0m0 8.1h0m.5-11h0m0 4.6h0m0 1h0m0 4.3h0m.7-5.7h0m0 9.6h0m.6-10.6h0m0 8.4h0m.6-8.3h0m0 8.1h0m.5-5.4h0m0 1.4h0m.7-4.8h0m0 5h0m.7-3.1h0m0 6.9h0m.5-7.8h0m0 10.6h0m.6-11.2h0m0 8.7h0m.6-6.8h0m0 7.8h0m.6-9.2h0m0 9.4h0m.6-10.8h0m0 10.5h0m.6-10.3h0m0 11.9h0m.6-8.7h0m0 8.5h0m.5-9h0m0 11.6h0m.7-13.3h0m0 9.2h0m.5-4.3h0m0 7.8h0m.6-10.1h0m0 8h0m.7-4h0m0 6.5h0m.5-14.2h0m0 13.1h0m.7-7.9h0m0 6.6h0m.6-8.3h0m0 9.2h0m.5-12.9h0m0 10.1h0m.6-11h0m0 6.2h0m0 2.2h0m0 1.1h0m.6-8.2h0m0 12.3h0m.7-11.6h0m0 10.5h0m.6-10.9h0m0 11.9h0m.7-14.1h0m0 12.5h0m.5-12.3h0m0 6.6h0m.6-7.3h0m0 7.2h0m.6-8.3h0m0 12.1h0m.5-10.9h0m0 8.6h0m.6-9.9h0m0 7.8h0m.7-7.6h0m0 13.1h0m.6-12.5h0m0 5.4h0m.6-5.4h0m0 8.9h0m.6-7.7h0m0 10.7h0m.6-8h0m0 5.6h0m.6-9.3h0m0 13.3h0m.7-10.2h0m0 8.6h0m.5-8.9h0m0 7.5h0m.6-9.5h0m0 11.3h0m.6-7.6h0m0 8.6h0m.6-7h0m0 7.8h0m.6-13.4h0m0 11.4h0m.6-7.2h0m0 9.5h0m.6-7.8h0m0 7.1h0m.6-12.9h0m0 13.2h0m.6-3.3h0m0 5.9h0m.6-11.8h0m0 12.5h0m.6-7.1h0m0 6.9h0m.6-14.2h0m0 14h0m.6-11.1h0m0 11.4h0m.6-11.8h0m0 10.3h0m.6-14.2h0m0 12.1h0m.6-4.9h0m0 6.4h0m.7-5.6h0m0 6.2h0m.4-11.7h0m0 10.8h0m.7-14.9h0m0 16h0m.7-11.2h0m0 7.2h0m.6-8.5h0m0 6.8h0m.5-9h0m0 13.1h0m.5-13.7h0m0 10.1h0m.7-9h0m0 8.4h0m.5-10.9h0m0 12h0m.7-12.3h0m0 10.4h0m.5-8.5h0m0 7.5h0m.8-9.3h0m0 10.3h0m.6-9.3h0m0 4.8h0m.4-3.2h0m0 7.8h0m.7-10.1h0m0 9.7h0m.6-7.4h0m0 9.4h0m.6-10.9h0m0 11h0m.6-7.2h0m0 10.2h0m.6-11.4h0m0 8.6h0m.6-8.5h0m0 9.2h0m.5-9.3h0m0 6.9h0m.7-7.8h0m0 9.7h0m.6-11.5h0m0 14.4h0m.6-14.5h0m0 9.8h0m.6-4.4h0m0 6.6h0m.6-8.5h0m0 9.9h0m.7-5.4h0m0 6h0m.5-10.2h0m0 11.1h0m.6-7.7h0m0 7.8h0m.6-11.5h0m0 11.2h0m.6-6.1h0m0 6.4h0m.6-7h0m0 8.7h0m.6-10.1h0m0 10.4h0m.7-12.2h0m0 10h0m.5-8.8h0m0 7.9h0m.6-10.7h0m0 12.1h0m.5-14.7h0m0 14.6h0m.7-10.4h0m0 7.6h0m.5-8.2h0m0 10.2h0m.7-10.6h0m0 8.2h0m.6-5.1h0m0 9.4h0m.6-13h0m0 7.4h0m.5-10.1h0m0 10.5h0m.7-7h0m0 9.1h0m.6-10.2h0m0 8.7h0m.6-10.3h0m0 14.1h0m.6-14h0m0 10.7h0m.5-9.6h0m0 8.5h0m.6-12h0m0 11.5h0m.7-8.9h0m0 10.3h0m.6-9.2h0m0 7.1h0m.5-9.2h0m0 4.5h0m.7-6.8h0m0 11.6h0m.5-12h0m0 15.9h0m.6-14h0m0 11.6h0m.7-13.5h0m0 14.2h0m.7-13.5h0m0 7.6h0m.5-8.8h0m0 6.5h0m.6-4.7h0m0 14.6h0m.5-10h0m0 11.5h0m.7-12.6h0m0 12.2h0m.6-8h0m0 9.5h0m.6-14h0m0 12.3h0m.6-9.7h0m0 10.7h0m.6-11.9h0m0 12.2h0m.6-8h0m0 8.2h0m.6-10.8h0m0 8h0m.6-8.4h0m0 9.4h0m.6-10.1h0m0 9.9h0m.6-15.7h0m0 11.1h0m.6-5.4h0m0 5.4h0m.6-5.9h0m0 5.8h0m.6-4.7h0m0 5.9h0m.6-8.2h0m0 8.7h0m.6-6.8h0m0 5.8h0m.6-8.2h0m0 10h0m.6-6.9h0m0 9.1h0m.6-10.7h0m0 10.6h0m.6-13.5h0m0 10.4h0m.6-6.1h0m0 6.5h0m.6-9.9h0m0 10.3h0m.6-13.1h0m0 12.1h0m.7-11.7h0m0 11.6h0m.5-9.4h0m0 8.7h0m.6-9.8h0m0 8.8h0m.6-8.2h0m0 7.8h0m.6-10h0m0 7.2h0m.6-7.6h0m0 9.6h0m.6-8.8h0m0 8.9h0m.6-8.9h0m0 8h0m.6-7.2h0m0 10.6h0m.5-10.6h0m0 8h0m.7-5.5h0m0 9.8h0m.6-10.6h0m0 7.9h0m.6-8.2h0m0 8.6h0m.6-9.2h0m0 11.6h0m.6-9h0m0 7.2h0m.6-8.2h0m0 10h0m.6-8.8h0m0 9.4h0m.6-7.4h0m0 7.7h0m.6-8.6h0m0 5.2h0m.6-5.6h0m0 5.2h0m.6-8.4h0m0 13.7h0m.6-10.6h0m0 5.9h0m.6-6.4h0m0 7.1h0m.6-10.8h0m0 11.6h0m.6-11h0m0 10.4h0m.5-6.2h0m0 7.7h0m.8-10h0m0 11.5h0m.6-10.5h0m0 10.5h0m.5-8.2h0m0 10.7h0m.6-8.9h0m0 8h0m.5-7.9h0m0 8.4h0m.6-10.4h0m0 12.1h0m.8-11.6h0m0 11.1h0m.6-12.4h0m0 12.5h0m.5-11.8h0m0 11.8h0m.7-13h0m0 10h0m.5-7.5h0m0 9.4h0m.6-8.9h0m0 6.5h0m.6-6.5h0m0 6.4h0m.6-10.7h0m0 9.9h0m.6-5.1h0m0 5h0m.6-7.1h0m0 6h0m.6-5.7h0m0 8.6h0m.6-11.3h0m0 9.2h0m.6-8.7h0m0 10.8h0m.6-14.9h0m0 12.6h0m.6-13.1h0m0 15.1h0m.6-9.4h0m0 7.2h0m.6-6.6h0m0 8.5h0m.6-11.6h0m0 11.2h0m.6-11.1h0m0 10.5h0m.6-12h0m0 8.2h0m.6-9.8h0m0 10h0m.5-10h0m0 5.6h0m.7-5.8h0m0 8.8h0m.5-7.6h0m0 10.6h0m.7-11.2h0m0 12.8h0m.6-10.9h0m0 10.6h0m.6-11.9h0m0 13.5h0m.6-5.5h0m0 7h0m.6-13.2h0m0 13.2h0m.6-8.1h0m0 6h0m.6-5.7h0m0 7.2h0m.6-7.7h0m0 10.7h0m.6-11.5h0m0 8.2h0m.6-11.6h0m0 9.9h0m.6-11.2h0m0 9.1h0m.6-8.1h0m0 11.3h0m.6-9.7h0m0 8.9h0m.6-7.2h0m0 7.1h0m.6-6.4h0m0 6.3h0m.6-8.9h0m0 3h0m.5-1.9h0m0 6.6h0m.7-8.1h0m0 8.1h0m.6-9.5h0m0 13h0m.6-6.5h0m0 3.5h0m.6-11.5h0m0 11.7h0m.6-5h0m0 6.2h0m.6-6.9h0m0 7.9h0m.5-14h0m0 14.8h0m.7-12h0m0 11.6h0m.6-13.7h0m0 12.4h0m.6-13.7h0m0 14.2h0m.6-13.9h0m0 13.4h0m.6-12.1h0m0 12.2h0m.7-13.9h0m0 9.8h0m.5-8.9h0m0 12.6h0m.6-13.1h0m0 11.4h0m.6-11.5h0m0 9.9h0m.6-8.4h0m0 6.6h0m.6-5.7h0m0 8h0m.6-7.1h0m0 8.1h0m.6-8.5h0m0 10.4h0m.6-10h0m0 7.2h0m.6-7.7h0m0 7h0m.6-6.6h0m0 6.6h0m.6-8.1h0m0 8.3h0m.6-4.7h0m0 5.6h0m.6-6.6h0m0 6.4h0m.6-7.3h0m0 10.1h0m.6-9.6h0m0 8.8h0m.6-8.1h0m0 6h0m.6-7.4h0m0 11.2h0m.6-10.2h0m0 10.9h0m.6-10.5h0m0 9.2h0m.6-11.6h0m0 10.5h0m.6-7.5h0m0 9.4h0m.6-5.1h0m0 5.3h0m.6-7.8h0m0 9.7h0m.6-15.3h0m0 15h0m.6-6.3h0m0 5.6h0m.6-8.3h0m0 9.4h0m.5-8.6h0m0 8.1h0m.7-13.3h0m0 13.4h0m.6-10.6h0m0 10.5h0m.6-10.1h0m0 11.6h0m.7-8.4h0m0 4h0m.5-8h0m0 12.1h0m.6-17.3h0m0 15h0m.6-11h0m0 8.1h0m.6-5.9h0m0 7.6h0m.6-11h0m0 8.8h0m.6-6.7h0m0 8.3h0m.6-8.1h0m0 6.3h0m.6-8.1h0m0 9h0m.5-10h0m0 9.1h0m.8-10.1h0m0 13.6h0m.5-10.1h0m0 4.9h0m.7-6.5h0m0 6.3h0m.5-9.6h0m0 9h0m.6-7.5h0m0 8.4h0m.6-9.5h0m0 4.6h0m.5-6.1h0m0 10.3h0m.8-11.3h0m0 12.5h0m.5-12.2h0m0 10.8h0m.6-9.6h0m0 11.2h0m.6-10.4h0m0 10.1h0m.5-8.4h0m0 7h0m.7-5.1h0m0 7.2h0m.6-6.7h0m0 7.5h0m.6-9.3h0m0 10.6h0m.6-9.5h0m0 11.2h0m.6-10.1h0m0 7.5h0m.6-8.1h0m0 11.4h0m.6-11h0m0 7.1h0m.6-8.8h0m0 10.7h0m.7-7.8h0m0 7.4h0m.5-5.8h0m0 5.8h0m.6-3.9h0m0 6.2h0m.6-13.8h0m0 12.3h0m.6-8.2h0m0 7.8h0m.7-6.3h0m0 7h0m.5-7.1h0m0 6.4h0m.6-7.4h0m0 6.9h0m.6-7.6h0m0 9.3h0m.5-9.3h0m0 6h0m.7-7.4h0m0 7.9h0m.6-7.6h0m0 9.2h0m.6-10.9h0m0 5.1h0m.6-4.8h0m0 9.6h0m.6-13.2h0m0 11.9h0m.6-12.8h0m0 10.8h0m.6-3.9h0m0 4.7h0m.6-6.1h0m0 7.8h0m.6-10.6h0m0 8.2h0m.6-8.5h0m0 8.2h0m.7-11.4h0m0 12.2h0m.5-11.2h0m0 6.3h0m.6-6.7h0m0 9.2h0m.6-9.4h0m0 9.4h0m.5-9.8h0m0 10.5h0m.7-10.3h0m0 11.1h0m.6-9.8h0m0 11h0m.6-10.2h0m0 8.2h0m.7-7.9h0m0 11.3h0m.4-8.3h0m0 8.7h0m.8-11.9h0m0 10.5h0m.5-12.6h0m0 14.3h0m.6-10.1h0m0 7.3h0m.6-8.9h0m0 14.8h0m.6-13.4h0m0 10.3h0m.6-12.5h0m0 13.5h0m.6-9.7h0m0 8.7h0m.6-8.5h0m0 8.3h0m.5-7.3h0m0 4.9h0m.7-5h0m0 8.5h0m.6-6.7h0m0 8.6h0m.6-6.2h0m0 5.6h0m.6-6.1h0m0 7.3h0m.6-9.8h0m0 8.8h0m.6-13.4h0m0 13.3h0m.5-13.3h0m0 14.1h0m.8-13.5h0m0 13.1h0m.5-9.2h0m0 6.8h0m.6-9.7h0m0 12.5h0m.6-10.7h0m0 11.7h0m.6-12.6h0m0 7.7h0m.6-7.3h0m0 11.9h0m.6-12.1h0m0 6.3h0m.6-6h0m0 6h0m.6-6.4h0m0 8.6h0m.6-7.4h0m0 10.8h0m.6-12.4h0m0 8.8h0m.6-9.2h0m0 7.9h0m.6-11.2h0m0 7.8h0m.6-5.2h0m0 10.2h0m.6-11.7h0m0 13.4h0m.6-13.3h0m0 5.3h0m.6-5.7h0m0 9.6h0m.6-10h0m0 5.7h0m.6-6.3h0m0 9.2h0m.7-6.4h0m0 8.2h0m.5-9.2h0m0 9.3h0m.6-8.5h0m0 7.2h0m.6-5.8h0m0 8.2h0m.6-8.8h0m0 8.9h0m.6-10h0m0 11.5h0m.6-8.7h0m0 4.9h0m.6-3.9h0m0 10.8h0m.6-12.7h0m0 10.3h0m.6-7.7h0m0 5.9h0m.7-8.7h0m0 8.8h0m.5-6.2h0m0 7.5h0m.6-8.6h0m0 8.9h0m.7-12.5h0m0 13.5h0m.5-7.1h0m0 7.7h0m.6-8.5h0m0 8.2h0m.6-6.5h0m0 5.6h0m.7-9.3h0m0 9.8h0m.4-10.6h0m0 10.5h0m.7-10.1h0m0 10.4h0m.6-10.3h0m0 8.3h0m.6-4.8h0m0 7.9h0m.6-9.8h0m0 8.3h0m.6-10.6h0m0 9.4h0m.6-8.5h0m0 6.8h0m.6-5.4h0m0 6.4h0m.6-9.6h0m0 10.2h0m.7-13.2h0m0 11.8h0m.5-10.2h0m0 11.2h0m.6-10.2h0m0 7.5h0m.6-9.5h0m0 7.1h0m.6-6.4h0m0 8.4h0m.6-10.5h0m0 8.2h0m.6-8.4h0m0 6.2h0m.7-7h0m0 6.5h0m.4-6.9h0m0 8.6h0m.7-5.5h0m0 7.3h0m.6-9.5h0m0 8.7h0m.6-8.9h0m0 12.5h0m.6-12.2h0m0 9.4h0m.6-7.9h0m0 10.6h0m.6-9.7h0m0 7.6h0m.6-5.2h0m0 7.6h0m.6-10.5h0m0 9.9h0m.6-8.3h0m0 7.6h0m.6-4.4h0m0 5h0m.6-8h0m0 10.2h0m.6-9.7h0m0 9.8h0m.6-11.1h0m0 12.7h0m.6-10.9h0m0 7.6h0m.6-7.6h0m0 6.4h0m.5-5.4h0m0 7.2h0m.7-5h0m0 7.1h0m.6-11.1h0m0 11.7h0m.6-9.9h0m0 10.9h0m.7-6.8h0m0 .6h0m0 2.5h0m0 3.4h0m.6-5.9h0m0 4.7h0m.5-7.9h0m0 8.5h0m.6-9.5h0m0 8.8h0m.6-8.8h0m0 9h0m.6-10.5h0m0 7.6h0m.7-9.7h0m0 10.4h0m.5-7.3h0m0 6.9h0m.6-8.5h0m0 9.8h0m.6-9.3h0m0 9.3h0m.6-12.5h0m0 9.6h0m.6-6.4h0m0 9.5h0m.6-11.2h0m0 5h0m.6-5.7h0m0 4.9h0m.6-6.2h0m0 10.1h0m.6-9.5h0m0 7.7h0m.6-7.5h0m0 5.9h0m.6-5.3h0m0 4.9h0m.6-7.8h0m0 11.2h0m.6-9.4h0m0 7.6h0m.6-9.8h0m0 12.2h0m.6-8.9h0m0 7.5h0m.6-7.1h0m0 9.8h0m.6-11.1h0m0 9h0m.6-8.3h0m0 11.4h0m.6-9.4h0m0 8h0m.6-6.6h0m0 5.1h0m.6-7.2h0m0 10.7h0m.6-10.7h0m0 8.2h0m.5-6.6h0m0 10h0m.7-6.2h0m0 3.7h0m.6-7.8h0m0 9.1h0m.6-10.9h0m0 12h0m.6-10.8h0m0 7.6h0m.6-7.3h0m0 9.4h0m.6-10.4h0m0 9.6h0m.6-7.2h0m0 8.4h0m.6-10.2h0m0 10.4h0m.6-6.3h0m0 6.8h0m.6-6h0m0 5.9h0m.6-8.1h0m0 9.9h0m.6-9.9h0m0 11h0m.6-6.5h0m0 6.4h0m.6-9.4h0m0 7.6h0m.7-6.9h0m0 9.4h0m.5-6h0m0 5.3h0m.6-11.6h0m0 12.1h0m.6-13.6h0m0 13.7h0m.7-12.3h0m0 10.6h0m.5-15.7h0m0 14h0m.6-8.7h0m0 8.6h0m.6-9h0m0 9h0m.6-8.6h0m0 8.8h0m.6-8.6h0m0 5.3h0m.5-8.7h0m0 9.7h0m.7-8.4h0m0 9.4h0m.6-9.3h0m0 8h0m.6-8.3h0m0 5.2h0m.6-9h0m0 11.1h0m.6-9.9h0m0 11h0m.6-11.5h0m0 12.1h0m.6-10.5h0m0 8h0m.6-8.6h0m0 10.9h0m.7-10.9h0m0 7h0m.5-9.1h0m0 7.4h0m.6-6.3h0m0 5.5h0m.6-4h0m0 6.2h0m.7-7.8h0m0 10.8h0m.5-9.1h0m0 5.2h0m.6-6.9h0m0 8.5h0m.6-5.8h0m0 12.8h0m.6-14.2h0m0 9h0m.6-7.4h0m0 6.6h0m.6-8h0m0 7.1h0m.6-4.7h0m0 9.5h0m.6-10.3h0m0 9.6h0m.6-10.2h0m0 11.9h0m.6-8.4h0m0 8.2h0m.6-9.2h0m0 6.4h0m.6-6.2h0m0 6.2h0m.6-9.4h0m0 9.6h0m.6-6.7h0m0 7.7h0m.6-10.3h0m0 7h0m.6-5.1h0m0 7.4h0m.6-6h0m0 7.1h0m.6-8.8h0m0 9.2h0m.6-11.8h0m0 12h0m.6-10.7h0m0 9.1h0m.6-9.9h0m0 12.1h0m.7-10h0m0 9.7h0m.5-8.2h0m0 7.9h0m.6-6.8h0m0 6.4h0m.6-6.8h0m0 11h0m.5-13.6h0m0 9.6h0m.7-13.1h0m0 10.3h0m.6-12.5h0m0 14.3h0m.7-13.2h0m0 13.2h0m.5-11.6h0m0 7.8h0m.6-7.2h0m0 5.6h0m.6-5.7h0m0 9.6h0m.6-11.1h0m0 11.5h0m.5-8.6h0m0 3.9h0m.7-6.3h0m0 9.4h0m.6-7.1h0m0 8.8h0m.6-10.1h0m0 8.8h0m.6-5.1h0m0 6.5h0m.6-8h0m0 8.7h0m.6-9.1h0m0 9.3h0m.6-6.6h0m0 6.9h0m.6-9.2h0m0 10.9h0m.6-8.1h0m0 5h0m.6-6.6h0m0 6.4h0m.6-5.4h0m0 4.8h0m.6-4.4h0m0 6.7h0m.7-6.1h0m0 6.6h0m.5-7.7h0m0 9.1h0m.5-5.5h0m0 4.5h0m.7-12.2h0m0 12.7h0m.6-3.7h0m0 5h0m.6-7.8h0m0 8h0m.6-9.2h0m0 9.3h0m.6-7h0m0 8.5h0m.6-8.6h0m0 7.1h0m.6-6.8h0m0 8.3h0m.6-7.1h0m0 6.8h0m.7-11.4h0m0 8.7h0m.5-5.5h0m0 7.9h0m.6-11.3h0m0 8.8h0m.6-9.8h0m0 9.2h0m.6-10.3h0m0 7.6h0m.6-5.3h0m0 7.6h0m.7-4h0m0 5h0m.5-6.3h0m0 4.6h0m.6-8.3h0m0 9.4h0m.6-8.2h0m0 5.6h0m.6-9h0m0 10.3h0m.6-7.5h0m0 5.8h0m.6-7.4h0m0 12.5h0m.6-12.5h0m0 10.8h0m.6-12.7h0m0 13.5h0m.6-11.5h0m0 9.3h0m.6-8.4h0m0 4.6h0m.6-9.8h0m0 8.7h0m.6-6.7h0m0 13.3h0m.6-14.1h0m0 11.5h0m.6-13.1h0m0 10h0m.6-9.5h0m0 8h0m.6-6.6h0m0 6.8h0m.6-7.8h0m0 7.7h0m.6-5.3h0m0 12.2h0m.6-9.3h0m0 11.1h0m.6-13.8h0m0 12.4h0m.6-7.4h0m0 7.6h0m.7-8.6h0m0 7.5h0m.4-4.4h0m0 5.5h0m.7-4.4h0m0 5.9h0m.7-5.4h0m0 2.1h0m.5-5.3h0m0 7.6h0m.7-13.6h0m0 14.6h0m.5-11.1h0m0 10.1h0m.6-9.5h0m0 9.6h0m.6-15.5h0m0 16.6h0m.6-6.8h0m0 4.4h0m.6-9.2h0m0 9.6h0m.6-9.7h0m0 6.8h0m.5-7.6h0m0 8.3h0m.7-7.9h0m0 9.3h0m.6-10h0m0 11.7h0m.6-10.5h0m0 6.4h0m.6-8.7h0m0 10.2h0m.6-7.1h0m0 8.6h0m.6-10.9h0m0 7.2h0m.6-6.5h0m0 9.9h0m.6-11.9h0m0 11.3h0m.6-11.9h0m0 9h0m.6-7.3h0m0 7.9h0m.7-9.7h0m0 10.4h0m.5-10.6h0m0 9.9h0m.6-9.5h0m0 3.3h0m.6-4.9h0m0 12h0m.6-12.1h0m0 15.1h0m.6-14h0m0 9.1h0m.6-8.3h0m0 6.7h0m.6-6.6h0m0 10.6h0m.6-12.3h0m0 9.6h0m.6-7.7h0m0 10.6h0m.4-9.7h0m0 .1h0m0 4.5h0m0 1.9h0m.8-5.2h0m0 9.6h0m.6-10h0m0 10.7h0m.6-10.9h0m0 9h0m.6-8.1h0m0 8.5h0m.6-6.7h0m0 7.3h0m.5-4.7h0m0 4.6h0m.6-6.6h0m0 7.1h0m.7-9.8h0m0 10.3h0m.5-8.8h0m0 7.8h0m.7-4.8h0m0 4.8h0m.6-9.1h0m0 11.6h0m.6-13.4h0m0 10.5h0m.6-8.3h0m0 6.2h0m.6-5.2h0m0 8.7h0m.6-10.8h0m0 8.6h0m.6-12.3h0m0 12.8h0m.6-9.3h0m0 7h0m.6-6.8h0m0 9.2h0m.6-13.4h0m0 10.5h0m.6-8h0m0 1.3h0m0 4h0m0 5.3h0m.6-8h0m0 4h0m.6-5.5h0m0 9.8h0m.6-9.6h0m0 6.3h0m.7-7.9h0m0 5.2h0m.5-7.1h0m0 9.3h0m.6-8.8h0m0 6.5h0m.6-7.1h0m0 6.1h0m.5-6.2h0m0 5.4h0m.7-3.4h0m0 9.5h0m.6-10.3h0m0 13.6h0m.6-12.2h0m0 13h0m.6-13.1h0m0 9h0m.6-6.6h0m0 8.2h0m.6-8.9h0m0 8.5h0m.6-7.4h0m0 6.4h0m.6-6.3h0m0 8.5h0m.6-12h0m0 8h0m.6-8.9h0m0 12h0m.6-8.7h0m0 8.4h0m.6-13.6h0m0 13.9h0m.6-7.5h0m0 7.2h0m.6-7h0m0 10.6h0m.6-10.5h0m0 11.1h0m.6-15.2h0m0 15.7h0m.6-10.7h0m0 8.5h0m.6-10.7h0m0 8.8h0m.6-7.9h0m0 11.7h0m.5-10.7h0m0 9h0m.7-6.2h0m0 8.3h0m.6-13.1h0m0 12.4h0m.6-5.4h0m0 4.9h0m.7-9.9h0m0 11.4h0m.5-7.2h0m0 7.2h0m.6-13.2h0m0 13.6h0m.5-12.8h0m0 10h0m.7-12.9h0m0 14.5h0m.6-11.5h0m0 9.2h0m.6-8.1h0m0 7.5h0m.6-10.3h0m0 9.8h0m.6-7.6h0m0 6.9h0m.6-6.4h0m0 5.3h0m.6-6.9h0m0 9.4h0m.7-8.4h0m0 7.5h0m.5-7.3h0m0 4.3h0m.6-6.2h0m0 8h0m.6-8.4h0m0 8.2h0m.6-8.6h0m0 8.8h0m.5-10.3h0m0 9.5h0m.7-12.2h0m0 12h0m.6-10.9h0m0 8.8h0m.6-9.8h0m0 8.5h0m.7-9.5h0m0 12.6h0m.5-10.9h0m0 9.1h0m.6-10h0m0 10.5h0m.6-10.4h0m0 9.8h0m.5-10.3h0m0 12.5h0m.7-9.9h0m0 9.1h0m.6-11.6h0m0 11.6h0m.7-9.3h0m0 8.6h0m.5-4.9h0m0 9.2h0m.7-9.8h0m0 6.2h0m.5-6.8h0m0 5.2h0m.6-2.2h0m0 1.9h0m.6-5.1h0m0 7.5h0m.6-7.5h0m0 8.7h0m.6-7.4h0m0 7.9h0m.6-8.1h0m0 8h0m.6-8.2h0m0 7h0m.6-5.3h0m0 6.1h0m.6-8.4h0m0 9.3h0m.6-8.9h0m0 8.9h0m.6-7h0m0 7.6h0m.7-7.1h0m0 5.6h0m.5-8.1h0m0 8.9h0m.6-6.5h0m0 8.2h0m.6-7.6h0m0 6.3h0m.6-6.7h0m0 9.7h0m.6-5.8h0m0 4.3h0m.6-9.9h0m0 9.5h0m.7-10.4h0m0 13.1h0m.5-11h0m0 10.2h0m.7-13.1h0m0 12.3h0m.5-10.7h0m0 8.2h0m.5-10.5h0m0 11.3h0m.7-10.4h0m0 8.7h0m.6-9.5h0m0 7.1h0m.6-7.4h0m0 10.5h0m.6-12.7h0m0 11.4h0m.6-10.7h0m0 11.1h0m.6-11.9h0m0 6.1h0m.6-6.7h0m0 8.9h0m.7-7.4h0m0 9.6h0m.5-10.6h0m0 8.8h0m.6-7h0m0 13.3h0m.6-12.1h0m0 8.4h0m.6-7h0m0 7.3h0m.6-6.6h0m0 7.7h0m.6-8.8h0m0 7.4h0m.6-7.8h0m0 6.3h0m.6-5.3h0m0 7.2h0m.6-6.6h0m0 9.5h0m.7-5.2h0m0 3h0m.6-5.6h0m0 4.5h0m.5-6.6h0m0 10.3h0m.6-11.1h0m0 10.2h0m.6-8.6h0m0 8.5h0m.7-7.1h0m0 7.3h0m.6-4.4h0m0 7h0m.5-9h0m0 4.7h0m.6-3.7h0m0 7.6h0m.6-5.9h0m0 6.7h0m.5-14.3h0m0 14h0m.7-12.8h0m0 13.6h0m.6-7.9h0m0 7.9h0m.6-9.1h0m0 9h0m.6-13.2h0m0 12.5h0m.6-8.7h0m0 6.1h0m.6-6.5h0m0 9.4h0m.6-12.7h0m0 9.9h0m.6-5.8h0m0 3.5h0m.6-6.4h0m0 7.7h0m.6-8.2h0m0 9.4h0m.6-10.8h0m0 8.6h0m.6-7.1h0m0 7.4h0m.6-8h0m0 7.5h0m.6-10.1h0m0 8.2h0m.6-7.6h0m0 5.8h0m.5-6.6h0m0 10.6h0m.7-9.9h0m0 5h0m.6-6.7h0m0 9.8h0m.6-9.5h0m0 9.3h0m.7-8.7h0m0 6.4h0m.5-6.1h0m0 9.5h0m.6-7.4h0m0 6.9h0m.6-7h0m0 8.6h0m.6-8.7h0m0 8.6h0m.6-9.7h0m0 8.2h0m.6-6.4h0m0 7.4h0m.6-5.6h0m0 6.3h0m.6-8.3h0m0 8.1h0m.5-6.7h0m0 7.2h0m.6-5.2h0m0 .4h0m0 4.1h0m0 .7h0m.7-7.4h0m0 6.1h0m.6-7.7h0m0 7.2h0m.6-4.2h0m0 7.1h0m.6-9.3h0m0 9.8h0m.6-8.6h0m0 5.5h0m.6-2h0m0 3.7h0m.5-10.5h0m0 10.3h0m.7-5.4h0m0 4.3h0m.7-5.1h0m0 7.1h0m.5-5.7h0m0 6.3h0m.6-10.4h0m0 9.2h0m.6-8h0m0 7.6h0m.6-6h0m0 8h0m.6-6.7h0m0 4.5h0m.6-6.8h0m0 6.8h0m.6-13h0m0 10.7h0m.6-5.6h0m0 5.8h0m.6-9.4h0m0 10.4h0m.6-7.5h0m0 7.6h0m.5-11.4h0m0 13.4h0m.7-7.6h0m0 8.4h0m.6-13.5h0m0 10h0m.5-5.5h0m0 6.6h0m.7-10.1h0m0 10.4h0m.6-9.5h0m0 7.7h0m.6-11.2h0m0 10.6h0m.6-6.6h0m0 7.8h0m.6-12.2h0m0 9.9h0m.6-8.4h0m0 5.4h0m.6-4.2h0m0 6.1h0m.6-6h0m0 7.9h0m.6-9.7h0m0 9.4h0m.6-7.3h0m0 6.1h0m.6-6.3h0m0 9.6h0m.6-7.8h0m0 8.9h0m.6-10h0m0 9h0m.6-9.5h0m0 12.1h0m.6-5.1h0m0 3.5h0m.6-4.5h0m0 7.5h0m.6-6.3h0m0 4.3h0m.6-4.5h0m0 5.8h0m.6-7.8h0m0 9.4h0m.5-6.8h0m0 5.1h0m.7-10.4h0m0 11.6h0m.6-11h0m0 11.3h0m.6-8.4h0m0 7.1h0m.6-5.1h0m0 6.3h0m.6-6.5h0m0 5.4h0m.6-7.9h0m0 6.6h0m.6-7.5h0m0 4.4h0m.6-6.6h0m0 9.9h0m.6-8h0m0 9.5h0m.6-10.6h0m0 6.2h0m.6-5.1h0m0 6.7h0m.6-6.4h0m0 6.2h0m.7-8.1h0m0 6.8h0m.6-8.7h0m0 10.9h0m.5-10h0m0 7.2h0m.6-6.4h0m0 6.1h0m.6-8.6h0m0 9.3h0m.5-6.3h0m0 7.8h0m.7-11h0m0 4.7h0m.6-7.1h0m0 9h0m.6-8.6h0m0 8.3h0m.6-7.6h0m0 8.2h0m.6-8.8h0m0 11.7h0m.6-11.4h0m0 9.7h0m.6-8.9h0m0 7.2h0m.6-4.3h0m0 8.9h0m.6-6.9h0m0 6.3h0m.6-6.2h0m0 6.5h0m.6-6.4h0m0 6.6h0m.6-8.9h0m0 9h0m.5-3.9h0m0 7h0m.7-9.4h0m0 7.8h0m.6-7.8h0m0 7.4h0m.7-10h0m0 9.2h0m.5-9h0m0 11h0m.6-9.4h0m0 8.1h0m.6-6.2h0m0 9.5h0m.6-11h0m0 11.8h0m.6-10.6h0m0 7h0m.6-8.1h0m0 9.6h0m.6-6.2h0m0 6.7h0m.6-7.7h0m0 9h0m.6-10.5h0m0 11.5h0m.6-11.2h0m0 8h0m.6-8.8h0m0 11.2h0m.6-8.5h0m0 5.4h0m.6-7.9h0m0 8.8h0m.6-6.9h0m0 9.7h0m.6-12h0m0 7.8h0m.6-7.4h0m0 7.1h0m.6-6.1h0m0 5.6h0m.5-8h0m0 8.7h0m.8-8.4h0m0 6.1h0m.5-6h0m0 8.2h0m.6-9.3h0m0 8.8h0m.6-9.2h0m0 7.6h0m.6-7h0m0 7.5h0m.6-9.8h0m0 9.9h0m.7-8.2h0m0 11.2h0m.5-9.1h0m0 8.3h0m.6-11.4h0m0 8.4h0m.7-8.1h0m0 6.7h0m.5-7.7h0m0 10.9h0m.6-10.7h0m0 4.6h0m.7-5.8h0m0 6.9h0m.5-8.3h0m0 8.4h0m.6-7.6h0m0 8.6h0m.6-9.4h0m0 7h0m.5-6.7h0m0 10.2h0m.7-10.6h0m0 9.5h0m.6-7.3h0m0 10.2h0m.6-8.1h0m0 5.8h0m.6-6.6h0m0 9.1h0m.6-9.9h0m0 9.8h0m.6-9.8h0m0 10.4h0m.6-10.9h0m0 14.6h0m.6-16.8h0m0 13.1h0m.6-6.7h0m0 6.3h0m.7-7.8h0m0 7.6h0m.5-8.3h0m0 8.3h0m.6-9h0m0 9.6h0m.6-6h0m0 8.5h0m.6-10.3h0m0 8.7h0m.6-9.5h0m0 11.9h0m.6-11.8h0m0 6h0m.6-6.4h0m0 9.4h0m.6-8.8h0m0 3.8h0m.6-3.7h0m0 5.7h0m.6-7.1h0m0 8.2h0m.6-6.4h0m0 6.2h0m.6-8.7h0m0 8.2h0m.6-6.8h0m0 7.4h0m.6-9.9h0m0 10.6h0m.6-8.3h0m0 7.5h0m.6-7.5h0m0 7.7h0m.6-7.9h0m0 6.8h0m.6-6.6h0m0 5.9h0m.6-9h0m0 9.6h0m.5-10.1h0m0 10.4h0m.7-8.7h0m0 8.6h0m.6-8.1h0m0 6.6h0m.6-7.6h0m0 6.3h0m.6-7.6h0m0 11.2h0m.6-10h0m0 10.2h0m.7-8.3h0m0 9h0m.4-10.2h0m0 11.1h0m.7-10.7h0m0 10.7h0m.7-12.4h0m0 10.1h0m.4-7.5h0m0 10.8h0m.7-9.2h0m0 6.9h0m.5-7.3h0m0 8.6h0m.6-10.6h0m0 14.7h0m.7-12.4h0m0 7.8h0m.6-8.9h0m0 9h0m.6-6.4h0m0 6.9h0m.7-3.9h0m0 5.3h0m.5-8.5h0m0 7.3h0m.6-7.3h0m0 10.3h0m.6-11.1h0m0 12.9h0m.7-6.6h0m0 3.9h0m.4-4.3h0m0 6h0m.8-6.1h0m0 4.5h0m.5-8h0m0 7h0m.6-4.6h0m0 5h0m.6-8.5h0m0 9.3h0m.6-12h0m0 12.6h0m.6-9.5h0m0 9.8h0m.6-9.3h0m0 5.6h0m.6-5.5h0m0 6.9h0m.6-8.7h0m0 7.4h0m.7-10.7h0m0 11.6h0m.5-9.6h0m0 3.9h0m.7-5.6h0m0 9.7h0m.5-7.5h0m0 4.5h0m.6-1.9h0m0 8.8h0m.6-12.9h0m0 8.9h0m.6-7.1h0m0 8.7h0m.6-8.7h0m0 9h0m.6-10h0m0 11.7h0m.6-10.6h0m0 5.6h0m.6-8.9h0m0 8.2h0m.6-8.6h0m0 10.4h0m.6-8.5h0m0 8.5h0m.6-10.8h0m0 8.5h0m.6-10.2h0m0 10.2h0m.6-9.8h0m0 9.9h0m.6-8.7h0m0 8.5h0m.6-10.9h0m0 9.9h0m.6-9.7h0m0 7.9h0m.6-7.1h0m0 9.2h0m.6-8.7h0m0 9h0m.7-9h0m0 9.5h0m.5-7.4h0m0 7.8h0m.6-9.4h0m0 6.5h0m.7-5.7h0m0 9.6h0m.5-12.9h0m0 15.8h0m.6-8.4h0m0 6.5h0m.6-7.9h0m0 8.7h0m.6-9.7h0m0 10h0m.6-8.8h0m0 7.6h0m.6-6.9h0m0 6.5h0m.6-5.1h0m0 9.6h0m.6-9.3h0m0 7.1h0m.6-6.3h0m0 7.3h0m.6-9.3h0m0 10.5h0m.6-10.3h0m0 9.7h0m.6-6.8h0m0 7.1h0m.6-6h0m0 4.5h0m.6-6.6h0m0 7.4h0m.6-7.6h0m0 8.4h0m.6-7.2h0m0 6.3h0m.6-4.8h0m0 6.3h0m.6-10.9h0m0 8.3h0m.6-11h0m0 14.9h0m.6-10.8h0m0 6.6h0m.6-10h0m0 9.2h0m.6-7.2h0m0 4.6h0m.6-6.1h0m0 7.4h0m.6-12.1h0m0 11.2h0m.7-10.8h0m0 6.6h0m.5-3.4h0m0 10.2h0m.6-14.2h0m0 10.7h0m.6-10.6h0m0 12.1h0m.6-11.1h0m0 9.4h0m.6-9.3h0m0 11.1h0m.6-8.1h0m0 7h0m.6-10h0m0 9.7h0m.6-8.4h0m0 9.8h0m.6-9.6h0m0 14.6h0m.6-16.5h0m0 12.8h0m.6-9.6h0m0 8.9h0m.6-10.2h0m0 10.2h0m.6-12.2h0m0 11.2h0m.6-6h0m0 5.7h0m.6-4.4h0m0 8.4h0m.7-11.3h0m0 8h0m.5-7.3h0m0 12.5h0m.6-10.7h0m0 8.6h0m.6-8.6h0m0 5.2h0m.6-8.2h0m0 8h0m.6-8.1h0m0 8.3h0m.6-7.3h0m0 6.2h0m.6-7.3h0m0 10.5h0m.6-7.3h0m0 10.9h0m.6-11.1h0m0 9.9h0m.6-7.7h0m0 6.2h0m.6-8.3h0m0 8.4h0m.6-5.7h0m0 6.9h0m.6-5.2h0m0 5.6h0m.6-9.1h0m0 8.7h0m.6-9.9h0m0 10.4h0m.6-7.3h0m0 5.9h0m.6-8.5h0m0 8.5h0m.6-8.4h0m0 7h0m.6-9.3h0m0 9.1h0m.6-8.4h0m0 6.9h0m.6-7.3h0m0 12.2h0m.6-12.7h0m0 9.6h0m.6-10.1h0m0 9.4h0m.6-10.4h0m0 8.7h0m.6-9.5h0m0 9.8h0m.6-10.1h0m0 13.9h0m.6-13.4h0m0 7.5h0m.6-7.5h0m0 8h0m.6-6.8h0m0 9.6h0m.6-9.7h0m0 10.9h0m.6-8.7h0m0 6h0m.6-10.2h0m0 16.1h0m.6-12.4h0m0 10.3h0m.6-9.1h0m0 5.3h0m.6-5.8h0m0 6.4h0m.6-8h0m0 8.6h0m.6-7.2h0m0 9.2h0m.6-10.8h0m0 8.6h0m.6-9.2h0m0 10.4h0m.6-10.5h0m0 10.2h0m.6-8.2h0m0 9h0m.6-6.5h0m0 5.5h0m.6-9h0m0 9.6h0m.6-6.9h0m0 7.9h0m.6-6.3h0m0 6.7h0m.6-8.5h0m0 8.2h0m.6-5.9h0m0 5.9h0m.6-5.9h0m0 6.8h0m.6-5.8h0m0 4.1h0m.6-9.7h0m0 9.1h0m.6-8.6h0m0 13.8h0m.6-14.1h0m0 5.6h0m.6-5.1h0m0 10.2h0m.6-13.3h0m0 9.5h0m.6-6.5h0m0 6.1h0m.7-6h0m0 6.6h0m.5-8.5h0m0 6.7h0m.7-5.5h0m0 7.3h0m.5-9h0m0 9.1h0m.6-11.3h0m0 10.1h0m.6-7.7h0m0 6.7h0m.6-7.4h0m0 8h0m.6-10.9h0m0 15h0m.6-14.9h0m0 8.9h0m.6-8.7h0m0 9.4h0m.6-9.4h0m0 11.2h0m.6-8h0m0 11h0m.7-9.7h0m0 4.8h0m.5-6h0m0 7.4h0m.6-5.8h0m0 8.5h0m.6-10.5h0m0 10.4h0m.6-10.1h0m0 13h0m.5-11.8h0m0 10.3h0m.8-9.2h0m0 9.4h0m.4-10.1h0m0 10h0m.7-9.5h0m0 9.9h0m.6-4.3h0m0 6.1h0m.6-4.7h0m0 3.8h0m.6-7.5h0m0 7h0m.6-6.3h0m0 8.5h0m.6-14.3h0m0 13.6h0m.6-6h0m0 5h0m.6-8.9h0m0 11.3h0m.6-10.5h0m0 10.4h0m.6-11.6h0m0 10.6h0m.6-16.9h0m0 14.5h0m.6-8.1h0m0 7.9h0m.6-8.7h0m0 7.2h0m.6-7.6h0m0 7h0m.6-6.9h0m0 5.7h0m.6-5.7h0m0 6.1h0m.6-7.3h0m0 6.7h0m.6-6.1h0m0 8.6h0m.6-9.2h0m0 5.3h0m.7-5.8h0m0 7h0m.5-11h0m0 10.6h0m.6-6h0m0 8.7h0m.6-11.6h0m0 8.9h0m.6-8.2h0m0 12.7h0m.6-10.4h0m0 6.8h0m.6-8.6h0m0 4.8h0m.7-4.8h0m0 7.4h0m.5-10h0m0 9.7h0m.7-9.7h0m0 9.4h0m.5-6.9h0m0 8.2h0m.6-8.8h0m0 8.8h0m.6-8.2h0m0 13.6h0m.6-15.2h0m0 13.5h0m.6-7.4h0m0 2.9h0m.6-6.2h0m0 9h0m.7-6.6h0m0 1.8h0m.5-3.3h0m0 8.4h0m.6-6.6h0m0 7.6h0m.6-9h0m0 8.3h0m.6-6.8h0m0 5.8h0m.6-6.9h0m0 11.4h0m.6-14.5h0m0 9.3h0m.6-4.7h0m0 7.2h0m.6-10.3h0m0 14.2h0m.6-10.8h0m0 7.8h0m.6-7h0m0 5.8h0m.6-5.1h0m0 7.2h0m.6-5.6h0m0 7.1h0m.6-6h0m0 5.7h0m.6-10.6h0m0 11.5h0m.5-9.3h0m0 10h0m.7-13.2h0m0 12.1h0m.6-9.1h0m0 9.6h0m.6-8.9h0m0 9.3h0m.6-12h0m0 12.3h0m.6-7.8h0m0 5.6h0m.6-7.8h0m0 7.5h0m.5-8.9h0m0 9.1h0m.7-7.7h0m0 6.4h0m.6-9.1h0m0 10.8h0m.6-10.5h0m0 8.6h0m.6-11h0m0 9.4h0m.6-7.8h0m0 9.5h0m.7-6.5h0m0 5.8h0m.5-7.7h0m0 6.7h0m.6-8.3h0m0 8.2h0m.6-9.4h0m0 11.2h0m.6-12.3h0m0 8.3h0m.6-7.1h0m0 7.1h0m.6-7.6h0m0 9.6h0m.5-8.7h0m0 7.5h0m.7-10h0m0 10.1h0m.6-10.1h0m0 10.2h0m.6-10.5h0m0 10.2h0m.6-10.5h0m0 11.3h0m.5-11.9h0m0 9.2h0m.6-6.9h0m0 8.6h0m.7-5.9h0m0 5.4h0m.7-6.3h0m0 3.6h0m.5-6.1h0m0 12.3h0m.6-13.9h0m0 13.3h0m.6-10h0m0 9h0m.6-6.9h0m0 7.8h0m.6-12.6h0m0 14.1h0m.5-9.2h0m0 7.6h0m.7-4h0m0 5.1h0m.6-4.4h0m0 6.6h0m.6-10.5h0m0 9.2h0m.6-10h0m0 8.8h0m.6-8.4h0m0 7.5h0m.6-6h0m0 6.4h0m.6-8.1h0m0 6.9h0m.6-6.2h0m0 7.6h0m.6-12h0m0 10h0m.6-8h0m0 10.9h0m.6-11.6h0m0 9.8h0m.6-7.1h0m0 10.7h0m.6-14.8h0m0 9.4h0m.5-6.6h0m0 11.3h0m.7-13.5h0m0 13.8h0m.6-16.5h0m0 13.4h0m.6-11.9h0m0 12.8h0m.6-10.7h0m0 3.3h0m.6-4.5h0m0 5.9h0m.6-9.1h0m0 9h0m.7-6.8h0m0 8.1h0m.5-9h0m0 9.7h0m.6-10.6h0m0 10.1h0m.6-9.9h0m0 10.9h0m.7-11.8h0m0 11.4h0m.5-8.3h0m0 10.9h0m.5-11.2h0m0 9.6h0m.6-9.1h0m0 12.5h0m.7-13.5h0m0 11.8h0m.6-12.7h0m0 10.8h0m.6-9.5h0m0 11.9h0m.6-9.5h0m0 9.2h0m.6-10.6h0m0 11h0m.6-9.5h0m0 8.9h0m.6-7.2h0m0 7.2h0m.6-8.9h0m0 10.2h0m.6-8.3h0m0 7.9h0m.6-7.1h0m0 7h0m.6-7.1h0m0 9.3h0m.6-6.8h0m0 7.7h0m.6-8.7h0m0 10.1h0m.6-9h0m0 9.6h0m.6-7.7h0m0 7.2h0m.6-7h0m0 5h0m.6-6.7h0m0 8.6h0m.6-8.1h0m0 8.1h0m.6-8.6h0m0 6.3h0m.6-6.2h0m0 5.5h0m.6-7.6h0m0 9.5h0m.6-10.9h0m0 12.5h0m.6-12.4h0m0 9.7h0m.7-10.6h0m0 4.8h0m.5-4.8h0m0 7.3h0m.6-7.3h0m0 9.6h0m.6-9.6h0m0 6.7h0m.6-7.3h0m0 8.7h0m.6-8.6h0m0 6.4h0m.6-9.9h0m0 12.6h0m.6-8.4h0m0 4.4h0m.6-4.1h0m0 8.3h0m.6-4.1h0m0 2.7h0m.5-8.8h0m0 9.5h0m.8-8.6h0m0 9h0m.5-5.6h0m0 4.4h0m.6-8.9h0m0 8.3h0m.6-8.2h0m0 8.5h0m.6-9.8h0m0 10.7h0m.6-10.7h0m0 4.6h0m.7-4.8h0m0 8.1h0m.5-8h0m0 8.2h0m.6-9h0m0 7.6h0m.6-9.3h0m0 8.1h0m.6-8.2h0m0 7h0m.6-7.9h0m0 12.4h0m.6-9.1h0m0 9.1h0m.6-7.5h0m0 9h0m.5-8.3h0m0 10.5h0m.8-8.9h0m0 11h0m.5-12.5h0m0 10.1h0m.6-8.2h0m0 8.1h0m.6-8.1h0m0 10.2h0m.6-8.3h0m0 8.1h0m.6-6.9h0m0 7.4h0m.6-9.4h0m0 8.3h0m.6-8h0m0 6.8h0m.6-6.8h0m0 8.3h0m.7-10.9h0m0 12.4h0m.5-9.9h0m0 5.7h0m.6-4.4h0m0 4.6h0m.5-6.8h0m0 7h0m.7-6.7h0m0 7h0m.6-2.3h0m0 3.3h0m.6-7.7h0m0 7.3h0m.7-6h0m0 6.5h0m.5-12.7h0m0 11.3h0m.6-9.7h0m0 9h0m.6-8.9h0m0 11.1h0m.6-11h0m0 7.6h0m.6-10.3h0m0 11.1h0m.6-8.9h0m0 7.9h0m.6-8.4h0m0 7.6h0m.6-9.8h0m0 12h0m.6-11.8h0m0 7h0m.6-8.6h0m0 9.6h0m.7-8.5h0m0 10.3h0m.5-11.4h0m0 9.6h0m.6-9h0m0 12h0m.6-10.6h0m0 9.7h0m.6-9.3h0m0 11.2h0m.7-13.2h0m0 7.8h0m.5-8.1h0m0 12.6h0m.7-9.5h0m0 7.2h0m.5-8.6h0m0 7.8h0m.7-4.4h0m0 7.5h0m.6-7.9h0m0 8.7h0m.5-10.1h0m0 10.1h0m.7-9.4h0m0 9.1h0m.5-9.5h0m0 10.1h0m.6-12.6h0m0 11.8h0m.6-10.6h0m0 11.8h0m.6-10.9h0m0 10.2h0m.6-9.5h0m0 10.7h0m.6-8.7h0m0 9.6h0m.6-7.5h0m0 6.6h0m.6-6.5h0m0 6h0m.6-9.1h0m0 11.5h0m.6-8.5h0m0 8.1h0m.7-7.1h0m0 4h0m.5-5h0m0 9h0m.6-9.3h0m0 6.2h0m.6-9.6h0m0 10h0m.6-11.7h0m0 11.1h0m.6-8.7h0m0 8.8h0m.5-10.6h0m0 8.9h0m.7-8.7h0m0 8.3h0m.5-10.5h0m0 7h0m.6-8.6h0m0 11.4h0m.6-10.1h0m0 9.8h0m.7-7.9h0m0 6.2h0m.5-7.1h0m0 6.6h0m.7-7.1h0m0 6.3h0m.6-7h0m0 11.3h0m.6-10.8h0m0 9.2h0m.6-8.6h0m0 11.1h0m.6-8.4h0m0 5.4h0m.6-7.6h0m0 8.7h0m.6-5.9h0m0 6.2h0m.6-7.3h0m0 9.1h0m.6-8.9h0m0 11.6h0m.6-11.5h0m0 7.6h0m.6-7h0m0 8.9h0m.6-9.6h0m0 9.6h0m.6-9.5h0m0 11.9h0m.6-11.9h0m0 7.8h0m.6-6.9h0m0 7.8h0m.6-7.3h0m0 8.2h0m.5-8.3h0m0 10.4h0m.7-10.3h0m0 9.3h0m.6-11h0m0 10.4h0m.6-3.4h0m0 5.2h0m.6-5.4h0m0 6h0m.5-10.6h0m0 10.8h0m.7-7.8h0m0 9.7h0m.6-12.1h0m0 10h0m.6-7.6h0m0 5.8h0m.6-7.5h0m0 7.1h0m.6-4.1h0m0 4.4h0m.6-10.1h0m0 9.7h0m.6-7.3h0m0 7.3h0m.6-6.5h0m0 7.8h0m.6-13.4h0m0 13.6h0m.6-10h0m0 6.9h0m.6-9h0m0 13.1h0m.6-8h0m0 5.1h0m.6-8.8h0m0 6.4h0m.6-6.8h0m0 7.7h0m.6-6.9h0m0 10.6h0m.6-11.6h0m0 7.8h0m.6-11.1h0m0 14.8h0m.6-15h0m0 10.3h0m.6-6.8h0m0 9.4h0m.7-7.9h0m0 4.2h0m.5-6.6h0m0 6.2h0m.7-6.2h0m0 7.2h0m.5-10h0m0 11.3h0m.6-10.9h0m0 9.7h0m.6-10.7h0m0 10.6h0m.6-9.6h0m0 10.5h0m.6-11.7h0m0 14.6h0m.6-11.6h0m0 8.2h0m.6-9.1h0m0 9.9h0m.6-8.2h0m0 8.4h0m.6-10.1h0m0 8h0m.6-1.8h0m0 6.8h0m.6-11.2h0m0 10.5h0m.6-6.6h0m0 8.1h0m.5-8.4h0m0 7.5h0m.6-8.8h0m0 12.5h0m.6-7.7h0m0 5.2h0m.7-10.1h0m0 8.4h0m.6-5.7h0m0 5.9h0m.6-8h0m0 7.3h0m.6-7h0m0 10h0m.6-11.2h0m0 7.6h0m.6-8.7h0m0 8.2h0m.6-7.9h0m0 7.5h0m.6-7.8h0m0 8.8h0m.7-7.3h0m0 9.3h0m.5-12.5h0m0 11.9h0m.6-9.4h0m0 10.5h0m.6-13.1h0m0 10.5h0m.5-7.1h0m0 10h0m.7-10.6h0m0 8.8h0m.6-9.4h0m0 6.4h0m.6-7h0m0 9.2h0m.5-10.9h0m0 13.9h0m.7-11.8h0m0 5.4h0m.5-5.1h0m0 6.9h0m.7-9.7h0m0 13h0m.6-16.3h0m0 12.3h0m.6-8.9h0m0 4h0m.6-7.5h0m0 8.7h0m.7-8.9h0m0 12.1h0m.5-7.9h0m0 7.3h0m.6-11.2h0m0 12.5h0m.6-11.2h0m0 8.4h0m.6-4h0m0 7.8h0m.6-8.3h0m0 3.9h0m.6-4.1h0m0 9.8h0m.5-8.6h0m0 4.6h0m.7-5.8h0m0 7.8h0m.6-5.7h0m0 6.2h0m.6-5.5h0m0 6.4h0m.7-9.1h0m0 9h0m.5-6.8h0m0 7.2h0m.6-7.7h0m0 7.6h0m.6-7.6h0m0 9h0m.6-12.1h0m0 10.7h0m.6-5.6h0m0 7h0m.6-6.5h0m0 8.1h0m.5-8h0m0 6.8h0m.7-8.6h0m0 9h0m.6-5.3h0m0 6.7h0m.6-5.9h0m0 6.5h0m.5-12.3h0m0 10.2h0m.7-7h0m0 8.9h0m.6-9.6h0m0 7.8h0m.6-6.9h0m0 7.8h0m.6-4.6h0m0 4.4h0m.6-8.5h0m0 9.6h0m.7-12h0m0 8h0m0 .8h0m.5-7.9h0m0 6.9h0m.6-12.2h0m0 12.8h0m.6-7.4h0m0 7.5h0m.6-8.2h0m0 8.4h0m.6-8.8h0m0 6.9h0m.6-8.4h0m0 8.3h0m.5-3.7h0m0 6h0m.7-11.6h0m0 8.2h0m.6-6h0m0 11.6h0m.6-12.7h0m0 8.5h0m.6-8.3h0m0 8.2h0m.6-8.9h0m0 6.8h0m.6-6.4h0m0 8.1h0m.6-8h0m0 6.5h0m.6-8.1h0m0 7.7h0m.6-8.9h0m0 9.7h0m.6-9.9h0m0 7.4h0m.6-9.2h0m0 10.6h0m.5-8.9h0m0 10.3h0m.7-11.6h0m0 6.3h0m.6-5.6h0m0 10.3h0m.5-6.6h0m0 5.1h0m.7-6.2h0m0 7.7h0m.6-7.8h0m0 12.7h0m.6-12h0m0 10h0m.6-10h0m0 13.1h0m.5-9.4h0m0 10.1h0m.7-11.1h0m0 6.9h0m.6-6.4h0m0 8.9h0m.6-8.8h0m0 8.5h0m.6-7.4h0m0 7h0m.6-7.4h0m0 6.1h0m.6-5.6h0m0 8h0m.6-11.1h0m0 13.2h0m.6-8.7h0m0 4.6h0m.7-8.1h0m0 7.1h0m.5-7.1h0m0 6.6h0m.5-6.3h0m0 5.3h0m.7-4.6h0m0 8.5h0m.6-10.2h0m0 7.7h0m.6-10.6h0m0 11.1h0m.6-7.2h0m0 6.3h0m.6-8.2h0m0 9.9h0m.6-11.3h0m0 8.6h0m.6-10.3h0m0 9.5h0m.6-8.9h0m0 7.5h0m.6-7.5h0m0 8.1h0m.5-9.6h0m0 8h0m.7-8.5h0m0 13h0m.6-12.6h0m0 9.7h0m.5-9h0m0 8.7h0m.8-8.4h0m0 15.1h0m.4-14.4h0m0 6.2h0m.7-7.5h0m0 14.7h0m.5-15.3h0m0 10.9h0m.7-11.3h0m0 10.8h0m.6-9.1h0m0 9.4h0m.6-6.9h0m0 5.4h0m.6-8.3h0m0 10.8h0m.6-9.9h0m0 7h0m.6-5.4h0m0 11h0m.6-11.3h0m0 10.8h0m.6-9.8h0m0 6.7h0m.6-6.2h0m0 6.5h0m.6-7h0m0 9.7h0m.6-9.3h0m0 11.3h0m.6-11.2h0m0 9.9h0m.6-13.5h0m0 9.7h0m.6-5h0m0 8.9h0m.7-7.4h0m0 8.8h0m.5-10h0m0 9.7h0m.6-8.5h0m0 8.3h0m.6-9.8h0m0 11.9h0m.6-9.5h0m0 10.1h0m.6-10.1h0m0 8.1h0m.6-8.6h0m0 8.2h0m.6-10.7h0m0 10.6h0m.6-8.7h0m0 7.5h0m.7-9.2h0m0 6.8h0m.5-6.4h0m0 9.9h0m.6-11.3h0m0 10.9h0m.6-11.1h0m0 5.2h0m.6-6.7h0m0 14.7h0m.6-14.7h0m0 7.1h0m.6-9h0m0 8.5h0m.6-8.2h0m0 9h0m.5-11.1h0m0 8.6h0m.7-7.3h0m0 11.3h0m.7-8.4h0m0 6.5h0m.4-6.5h0m0 7.9h0m2 2.4h0m0 0h0m0 1.4h0m0 .9h0m0 .2h0m0 1.5h0m0 1.8h0m0 2.4h0m0 .9h0m0 0h0m0 .7h0m.5-11.9h0m0 3.4h0m0 2.2h0m0 1.3h0m0 2h0m0 .1h0m0 .1h0m0 2.1h0m0 .3h0m0 1.3h0m0 .4h0m0 0h0m0 .1h0m0 .8h0m.5-10.8h0m0 .1h0m0 .5h0m0 .8h0m0 .2h0m0 .7h0m0 2.4h0m0 1.3h0m0 .3h0m0 2.7h0m0 .2h0m0 1h0m0 5h0m.6-14.4h0m0 .2h0m0 5.2h0m0 .3h0m0 .8h0m0 3.2h0m0 .1h0m0 1.6h0m.6-10.3h0m0 .4h0m0 1.5h0m0 .4h0m0 2.2h0m0 .1h0m0 .6h0m0 2.1h0m0 .4h0m0 0h0m0 4.6h0m0 1.7h0m.7-15.1h0m0 1.5h0m0 1h0m0 2h0m0 .3h0m0 1.4h0m0 2.1h0m0 1.3h0m0 .7h0m0 .8h0m.6-12.8h0m0 1.5h0m0 .4h0m0 3.7h0m0 .2h0m0 1.3h0m0 .2h0m0 .3h0m0 .6h0m0 1h0m0 .5h0m0 .7h0m0 .4h0m.5-10.8h0m0 .9h0m0 1.1h0m0 .9h0m0 1.9h0m0 .2h0m0 .5h0m0 .5h0m0 .6h0m0 .1h0m0 .6h0m0 1.3h0m0 4.2h0m.7-15.2h0m0 2.5h0m0 .8h0m0 .5h0m0 .4h0m0 .8h0m0 2.5h0m0 1.3h0m0 .1h0m0 .6h0m0 .1h0m0 .6h0m.6-7.9h0m0 .7h0m0 1h0m0 .1h0m0 1.6h0m0 .2h0m0 .5h0m0 .2h0m0 .2h0m0 .2h0m0 1.5h0m0 .8h0m0 1.4h0m0 .8h0m0 1.4h0m.6-12.5h0m0 3.2h0m0 .1h0m0 .7h0m0 .5h0m0 .2h0m0 1.1h0m0 .1h0m0 .6h0m0 .5h0m0 .2h0m0 1.1h0m0 .9h0m0 2.2h0m0 .6h0m0 .9h0m0 .5h0m.6-11.7h0m0 1.3h0m0 .7h0m0 4.2h0m0 2.2h0m0 .8h0m0 2.2h0m0 .5h0m0 .8h0m.7-11h0m0 .1h0m0 1h0m0 1.6h0m0 1h0m0 .3h0m0 .1h0m0 1.4h0m0 1.9h0m0 2.1h0m0 0h0m0 1.2h0m0 1.8h0m.5-12.3h0m0 1.1h0m0 2.9h0m0 1.2h0m0 .8h0m0 .1h0m0 2.6h0m0 .3h0m0 .6h0m0 1h0m0 .3h0m0 0h0m0 .3h0m.7-10.2h0m0 1.7h0m0 .4h0m0 2.3h0m0 4.7h0m0 2.1h0m.5-11.4h0m0 .1h0m0 .3h0m0 1h0m0 2h0m0 .1h0m0 .1h0m0 0h0m0 1.3h0m0 .8h0m0 0h0m0 .5h0m0 1.5h0m0 .8h0m0 5.2h0m.6-13.4h0m0 2h0m0 1h0m0 5h0m0 .3h0m0 .3h0m0 4.5h0m0 .4h0m.7-14.9h0m0 .3h0m0 2.5h0m0 1h0m0 .6h0m0 1.1h0m0 2.1h0m0 .1h0m0 1.9h0m0 1.3h0m.5-12h0m0 3.4h0m0 .3h0m0 .4h0m0 .9h0m0 .1h0m0 .1h0m0 .8h0m0 2.2h0m0 1.7h0m0 .5h0m0 .5h0m.6-9.6h0m0 .1h0m0 .3h0m0 2.3h0m0 2.4h0m0 1h0m.6-11.1h0m0 3.2h0m0 .5h0m0 .1h0m0 .7h0m0 .2h0m0 1h0m0 3.5h0m0 .4h0m0 .2h0m0 .3h0m.6-5.8h0m0 .4h0m0 1.2h0m0 1.2h0m0 2.1h0m0 1.1h0m0 .1h0m0 .5h0m0 .9h0m0 6.9h0m.6-13.6h0m0 1.1h0m0 .1h0m0 1.8h0m0 .4h0m0 .1h0m0 1.9h0m0 3.4h0m0 3.2h0m0 1.5h0m0 .7h0m.6-14.1h0m0 5.6h0m0 0h0m0 .5h0m0 2.9h0m0 1h0m.5-10.4h0m0 .6h0m0 .3h0m0 1.4h0m0 .7h0m0 1.6h0m0 4.8h0m0 .8h0m.7-10.3h0m0 .4h0m0 .2h0m0 0h0m0 .8h0m0 .5h0m0 1.4h0m0 .7h0m0 .2h0m0 .3h0m0 .2h0m0 .2h0m0 0h0m0 .8h0m0 1.3h0m0 .3h0m0 .2h0m0 4.8h0m.6-18.3h0m0 4.2h0m0 .4h0m0 1.5h0m0 1h0m0 2.7h0m0 0h0m0 .2h0m0 5.5h0m.5-15h0m0 5.5h0m0 .3h0m0 .6h0m0 .5h0m0 1h0m0 .2h0m0 6.7h0m.7-8.2h0m0 .7h0m0 1h0m0 0h0m0 .3h0m0 2.2h0m0 1.2h0m0 1.5h0m0 2h0m0 3.9h0m.6-16.8h0m0 4.6h0m0 .2h0m0 1.6h0m0 .5h0m0 .9h0m0 1.2h0m0 .4h0m0 .2h0m0 .4h0m0 .1h0m0 5.4h0m.6-15.5h0m0 0h0m0 0h0m0 1.1h0m0 1.3h0m0 1.3h0m0 1h0m0 1h0m0 2.3h0m0 0h0m0 1.8h0m0 1.6h0m0 .8h0m0 .1h0m0 .5h0m0 1.3h0m0 1.8h0m.6-17.1h0m0 4.5h0m0 .5h0m0 1h0m0 .4h0m0 .3h0m0 .4h0m0 .3h0m0 .5h0m0 .8h0m0 .7h0m0 2.4h0m0 0h0m0 .5h0m0 .8h0m0 .9h0m.6-14.4h0m0 2.7h0m0 1.1h0m0 3.1h0m0 .9h0m0 .9h0m0 .3h0m0 .5h0m0 .1h0m0 1.5h0m0 1.2h0m0 2.4h0m.6-12h0m0 1.2h0m0 .1h0m0 .1h0m0 .4h0m0 .5h0m0 .3h0m0 1h0m0 .4h0m0 2.2h0m0 1.2h0m.6-8.8h0m0 2h0m0 .4h0m0 .8h0m0 .1h0m0 0h0m0 2h0m0 1.3h0m0 .2h0m0 2.3h0m.5-6.3h0m0 1.6h0m0 2.9h0m0 1.3h0m0 .5h0m0 2.4h0m0 .7h0m0 3.5h0m0 .1h0m.7-14h0m0 1.9h0m0 1.1h0m0 1.8h0m0 .1h0m0 2.7h0m0 .1h0m0 0h0m0 .5h0m0 1.5h0m.6-7.2h0m0 1.4h0m0 .2h0m0 1.2h0m0 .1h0m0 .3h0m0 1.3h0m0 5.4h0m0 1h0m.6-11.1h0m0 .6h0m0 .4h0m0 .8h0m0 .4h0m0 .2h0m0 .9h0m0 .3h0m0 2.5h0m0 4.8h0m0 2.8h0m0 1h0m.5-16.1h0m0 1.9h0m0 0h0m0 1.2h0m0 .6h0m0 .7h0m0 1.4h0m0 .4h0m0 .8h0m0 .6h0m0 2.4h0m0 1.5h0m0 1.6h0m.8-15.2h0m0 2.3h0m0 .4h0m0 .6h0m0 3.2h0m0 .1h0m0 .1h0m0 .1h0m0 .9h0m0 .5h0m0 .5h0m0 .4h0m0 .1h0m.5-4.6h0m0 .4h0m0 .6h0m0 1.5h0m0 .2h0m0 .8h0m0 3.3h0m0 1.1h0m.6-10.7h0m0 .7h0m0 0h0m0 1.7h0m0 .2h0m0 2.1h0m0 .6h0m0 0h0m0 .2h0m0 .4h0m0 .5h0m0 2.1h0m0 2.3h0m.7-14h0m0 3h0m0 .1h0m0 1.5h0m0 1.9h0m0 .2h0m0 .5h0m0 .8h0m0 .8h0m0 2.7h0m0 1.7h0m0 .6h0m.4-16.3h0m0 5.9h0m0 .1h0m0 .9h0m0 2h0m0 1.1h0m0 .7h0m0 2.3h0m.8-9.9h0m0 2.9h0m0 0h0m0 0h0m0 .2h0m0 .2h0m0 1h0m0 .4h0m0 .5h0m0 .9h0m0 1.7h0m0 .2h0m0 .4h0m0 1.3h0m.5-12.3h0m0 1.4h0m0 2h0m0 1.9h0m0 .2h0m0 .7h0m0 .3h0m0 4h0m0 .6h0m0 .2h0m0 .3h0m0 .6h0m0 3.5h0m.6-12.2h0m0 2.2h0m0 1.2h0m0 1h0m0 .2h0m0 .6h0m0 .3h0m0 1.1h0m0 .6h0m0 .3h0m0 .7h0m0 .4h0m0 1.3h0m0 0h0m0 .1h0m0 .7h0m0 1h0m0 1.6h0m.4-10.7h0m0 1.8h0m0 6.5h0m.8-10.5h0m0 2.7h0m0 1h0m0 1.2h0m0 0h0m0 .9h0m0 .7h0m0 3.3h0m0 2.3h0m0 1.9h0m0 2.5h0m.6-19h0m0 5.3h0m0 .3h0m0 .3h0m0 .4h0m0 1.6h0m0 8.4h0m.5-12.3h0m0 2.3h0m0 .1h0m0 1h0m0 .3h0m.6-6.2h0m0 1.6h0m0 1.4h0m.7-6.1h0m0 1.8h0m0 .9h0m0 3.1h0m0 .6h0m0 2.9h0m0 3.4h0m0 4.2h0m.6-16h0m0 1.5h0m0 2.2h0m0 .4h0m0 1.4h0m0 .6h0m0 1.1h0m0 .7h0m0 1.6h0m0 1.1h0m0 .7h0m0 2.2h0m0 .7h0m.5-11.8h0m0 2h0m0 1.5h0m0 .3h0m0 .5h0m0 .5h0m0 .7h0m0 1.3h0m0 1.6h0m0 .1h0m0 3.2h0m0 2.5h0m0 1.1h0m.7-16.3h0m0 4.5h0m0 1.1h0m0 1.2h0m0 1h0m0 .4h0m0 1h0m0 2h0m0 2.1h0m0 1.2h0m0 4.6h0m.5-20.4h0m0 1.6h0m0 .2h0m0 2.1h0m0 1.8h0m0 1.1h0m0 1.3h0m0 .5h0m0 .3h0m0 .7h0m0 1.2h0m0 5.1h0m.6-15.7h0m0 2h0m0 2.4h0m0 0h0m0 .6h0m0 1.2h0m0 0h0m0 1.5h0m0 1h0m0 .8h0m0 .3h0m0 4.1h0m.7-17h0m0 3.5h0m0 .3h0m0 2.6h0m0 .3h0m0 .7h0m0 .2h0m0 .8h0m0 2.4h0m0 .1h0m0 .2h0m0 .8h0m0 .6h0m0 .7h0m0 1.7h0m.5-10.2h0m0 .7h0m0 2.8h0m0 1.3h0m0 .1h0m0 1.2h0m0 .4h0m0 0h0m0 .1h0m0 .3h0m0 .1h0m0 1.3h0m.7-6.1h0m0 4.8h0m0 2.1h0m0 .7h0m0 1.6h0m0 1.4h0m.7-13.1h0m0 1.9h0m0 .1h0m0 1.1h0m0 .4h0m0 1.1h0m0 1h0m0 1.6h0m0 1.4h0m0 6.8h0m.5-13.8h0m0 2.1h0m0 .4h0m0 .2h0m0 .8h0m0 1h0m0 .4h0m0 .2h0m0 2.1h0m0 .1h0m0 1.1h0m0 .2h0m0 0h0m0 .9h0m0 2.1h0m0 1.1h0m.6-10.9h0m0 .5h0m0 .5h0m0 .2h0m0 .5h0m0 .5h0m0 .2h0m0 .4h0m0 .4h0m0 .2h0m0 2.1h0m0 .9h0m0 2.6h0m0 .2h0m0 1.2h0m0 .6h0m.6-16.4h0m0 2.9h0m0 .9h0m0 1h0m0 .2h0m0 .7h0m0 1.2h0m0 .2h0m0 .3h0m0 .3h0m0 1.2h0m0 2.2h0m0 .8h0m0 .2h0m.6-11.7h0m0 .6h0m0 4.3h0m0 3.7h0m0 1.9h0m0 7.6h0m.6-18.5h0m0 .7h0m0 .9h0m0 6h0m0 .3h0m0 .1h0m0 3.2h0m0 1.3h0m0 .8h0m.5-16.3h0m0 .5h0m0 6.8h0m0 .2h0m0 .9h0m0 .7h0m0 5h0m0 1.2h0m0 1.2h0m.7-13h0m0 4.1h0m0 .8h0m0 1h0m0 1.7h0m0 1.6h0m.7-9.6h0m0 .9h0m0 .8h0m0 3h0m0 2.5h0m0 .7h0m0 2.7h0m.5-12.9h0m0 .9h0m0 2.6h0m0 1.5h0m0 2h0m0 1h0m0 .6h0m0 .2h0m0 .5h0m0 1.4h0m0 1.5h0m0 .6h0m.5-8.9h0m0 .9h0m0 1h0m0 1.7h0m0 .7h0m0 .9h0m0 0h0m0 1.2h0m0 .8h0m0 5.3h0m.7-14.2h0m0 1h0m0 3.3h0m0 1.7h0m0 1.3h0m0 1.8h0m0 .1h0m0 0h0m0 2h0m0 4.7h0m.6-13.4h0m0 .3h0m0 .7h0m0 3.9h0m0 .5h0m0 .9h0m0 .2h0m0 1.8h0m.6-8h0m0 1.7h0m0 1.7h0m0 .2h0m0 .9h0m0 .4h0m0 .3h0m0 0h0m0 2.1h0m0 .3h0m0 .6h0m0 1.7h0m0 7.4h0m0 .4h0m.6-19.3h0m0 .9h0m0 4.4h0m0 1.4h0m0 1.5h0m0 .5h0m0 1.4h0m0 .3h0m0 .4h0m0 .5h0m.6-13.1h0m0 1.1h0m0 .8h0m0 .2h0m0 5.2h0m0 .7h0m0 .5h0m0 1.1h0m0 .7h0m0 0h0m0 .9h0m0 1.7h0m0 1.6h0m0 4.7h0m.6-12.9h0m0 1.1h0m0 .8h0m0 .3h0m0 .7h0m0 .7h0m0 0h0m0 1.5h0m.5-13.3h0m0 1.5h0m0 1h0m0 .3h0m0 1.2h0m0 .3h0m0 5.9h0m0 1h0m0 .3h0m0 .4h0m.7-7.2h0m0 0h0m0 .8h0m0 3.1h0m0 .2h0m0 1.3h0m0 1.7h0m0 .3h0m0 4.6h0m0 1.7h0m.6-14.3h0m0 5.4h0m0 0h0m0 2.9h0m0 0h0m.6-7.4h0m0 2.3h0m0 1h0m0 .7h0m0 .1h0m0 .6h0m0 .5h0m0 .1h0m0 1.1h0m0 1.9h0m0 .2h0m0 .1h0m0 .4h0m.7-9.1h0m0 1.5h0m0 .9h0m0 .3h0m0 .8h0m0 .8h0m0 1.5h0m0 2.2h0m0 .4h0m0 .9h0m0 1.6h0m.4-12h0m0 3.6h0m0 3.4h0m0 .9h0m0 0h0m0 1h0m0 5.5h0m0 2.9h0m.6-22.3h0m0 .1h0m0 .7h0m0 3.3h0m0 .8h0m0 .6h0m0 0h0m0 2.1h0m0 .8h0m0 .5h0m0 .3h0m0 1h0m0 .7h0m0 .3h0m0 .2h0m0 .2h0m0 0h0m0 .5h0m0 2.2h0m0 1.5h0m.7-10.3h0m0 1.2h0m0 5.2h0m0 1.2h0m0 1.2h0m0 1.1h0m.6-10.2h0m0 1.5h0m0 .1h0m0 1.7h0m0 1.6h0m0 1.8h0m0 .1h0m0 .8h0m0 .4h0m0 1.9h0m0 1.3h0m0 7.7h0m.6-16.8h0m0 4h0m0 .4h0m0 1.8h0m0 1.1h0m0 1.2h0m0 .3h0m.5-9.6h0m0 .1h0m0 .2h0m0 .8h0m0 .5h0m0 .5h0m0 2.3h0m0 1.4h0m0 3h0m0 1.1h0m0 2.7h0m.7-16.4h0m0 1.3h0m0 .4h0m0 .2h0m0 .6h0m0 1.1h0m0 1.4h0m0 1.6h0m0 .5h0m0 1.6h0m0 .4h0m0 .5h0m.6-9.8h0m0 5.6h0m0 .5h0m0 .5h0m0 .5h0m0 1.5h0m0 .8h0m0 1h0m0 1.9h0m.6-9.8h0m0 2.7h0m0 .1h0m0 .1h0m0 1.1h0m0 1.6h0m0 1.7h0m0 .1h0m0 .9h0m0 .7h0m0 .3h0m0 .2h0m.6-15.8h0m0 .1h0m0 4.6h0m0 .3h0m0 1h0m0 .2h0m0 .8h0m0 .1h0m0 0h0m0 2.1h0m0 .5h0m0 .7h0m0 2.8h0m0 .3h0m0 0h0m0 0h0m0 .6h0m.7-10.9h0m0 3.7h0m0 .2h0m0 .5h0m0 1.6h0m0 .1h0m0 .1h0m0 1.2h0m0 .4h0m0 .6h0m0 1.1h0m0 .4h0m0 .5h0m0 1.6h0m0 2h0m.5-10.4h0m0 .5h0m0 .4h0m0 .2h0m0 1.3h0m0 1.7h0m0 .1h0m0 1.5h0m0 .2h0m0 .2h0m0 1.4h0m0 .1h0m0 .1h0m0 .5h0m0 .1h0m0 .5h0m0 .1h0m0 .1h0m0 0h0m.6-10.7h0m0 .1h0m0 2.2h0m0 2.5h0m0 3.2h0m0 2.3h0m0 .5h0m0 .1h0m0 .2h0m0 3.4h0m.6-10.6h0m0 2.9h0m0 .4h0m0 1.6h0m0 2.8h0m0 .1h0m0 .1h0m0 3.8h0m0 2h0m.6-16.3h0m0 .6h0m0 1.4h0m0 1.1h0m0 0h0m0 .2h0m0 1.9h0m0 .4h0m0 2.9h0m0 1.5h0m0 1.3h0m.6-10.4h0m0 .4h0m0 2h0m0 .8h0m0 .3h0m0 1.9h0m0 .3h0m0 .7h0m0 1.3h0m0 1.5h0m0 .7h0m0 8h0" stroke="#000" fill="none" stroke-linecap="round" stroke-width="3.6"/>
<path d="M173.2 63.6h0m24.1-1.1h0m47.4 1.3h0m36 21.9h0m131.3-21.9h0m1.6-.2h0m34.8 21.1h0m48.4-.2h0m77-20.7h0m2.6-.3h0m183 21.1h0m54.7-21.4h0m50.6 .2h0m29.8 21.4h0m83.8-21.4h0m59.7 21.1h0m23.8 .2h0m155.7-22.3h0m-1037.2 24.9h0m9 5h0m130 19h0m21-11h0m63 64h0m26-73h0m75 84h0m121-41h0m18.4-40h0m5.5 102.7h0m25.1-12.7h0m71-85h0m2 9h0m8-6h0m40-11h0m16 1h0m137 21h0m31 81h0m26-107h0m18 0h0m26-2.3h0m36 2.3h0m68 12h0m2 198h0m95.4-199.6h0m5.6 7.6h0m11 2h0m-1094.3-47.8h0m-4 1h0m3 1.8h0m4-.7h0m1 1.1h0m-3 .5h0m20 0h0m4-.7h0m27 1.2h0m19-.5h0m4-1.8h0m47 .7h0m71 .9h0m167-2.1h0m-26 2.7h0m67-1.5h0m75 .9h0m26-1.2h0m160 .3h0m30 0h0m0 1.6h0m71-2.5h0m-5 2.4h0m48-.2h0m3 .3h0m19-.9h0m23 .6h0m24-.9h0m51-2h0m68 1.4h0m24 .8h0m25 .1h0m0 .8h0m-1004.5 20.9h0m.3 .6h0m.7 .3h0m-1 .5h0m0 2.2h0m39.5-1h0m8-2.7h0m0 .9h0m16 0h0m4 1.2h0m42-1.9h0m5 .9h0m1 1h0m37 .9h0m13-2.6h0m68 .5h0m1 .9h0m47-.9h0m1-.4h0m30-.7h0m9 2.3h0m31-.7h0m5-1.6h0m44 .9h0m1 .4h0m47-1.3h0m0 1.1h0m0 1.8h0m21-.4h0m0-2.7h0m47 0h0m0 1.5h0m30-.7h0m69-.4h0m20-.2h0m1 2h0m1 .9h0m4-2.7h0m42-.4h0m2 1.1h0m-3 .9h0m122-1.6h0m2 .9h0m-1 1.1h0m31-2.2h0m14 0h0m0 1.1h0m121-.7h0m1-.4h0" stroke="#ffa500" fill="none" stroke-linecap="round" stroke-width="3.6"/>
<path d="M105.5 73.176H1361.3" stroke="#008000" stroke-width="2.08"/>
</g>
<g clip-path="url(#c2)">
<g font-family="Liberation Sans, sans-serif" fill="#000" style="font-kerning:none;opacity:.999">
<text x="679.65" y="657.2" font-size="14.2" textLength="43.42" lengthAdjust="spacingAndGlyphs">10449</text>
<text x="1250.49" y="637.2" font-size="14.2" textLength="43.53" lengthAdjust="spacingAndGlyphs">48923</text>
</g>
<path d="M162.7 518h0m.1-4.2h0m0 36.2h0m.1-28.9h0m.1 16.5h0m0-20.3h0m.1 16.6h0m0 0h0m.1-28.6h0m.1 10.4h0m0-3h0m.1-21h0m0 36h0m.1-5.3h0m.1 11.4h0m0-31.6h0m.1 .6h0m0 12.9h0m.1 10.1h0m.1-2.3h0m0 6.9h0m.1-23.3h0m0 40.7h0m.1-33.7h0m.1 12.2h0m0-14.6h0m.1 18.2h0m0-9.6h0m.1-8.9h0m.1 7.9h0m0-2.1h0m.1 10.2h0m0-25.3h0m0 27.7h0m.1-24.1h0m.1-1.9h0m0 29.6h0m.1-.7h0m0 1.5h0m.1-22.7h0m.1-6.5h0m0 20.3h0m.1 13.8h0m0-17.9h0m.1-20.3h0m.1 1h0m0 13.9h0m.1-9.5h0m0-1.8h0m.1 1.5h0m.1 8.5h0m0 8.1h0m.1 4.2h0m.1-2.4h0m0-6.4h0m.1-12.9h0m0 16.6h0m.1 16.9h0m.1 5.9h0m0-7h0m.1-.4h0m0-11.3h0m.1-2.4h0m.1-9.8h0m0 14.5h0m.1-3.3h0m0 23.2h0m.1-43.8h0m.1 4.3h0m.1 13.5h0m0 7.6h0m.1 18.2h0m.1-22h0m0 10.2h0m.1-33h0m0 38.5h0m.1 23.6h0m.1-36.5h0m0-5.4h0m.1-33.6h0m0 22.5h0m0 3.9h0m.1-12.6h0m.1 25.2h0m0-29.6h0m.1 38.4h0m0-1.3h0m.1-4.4h0m.1-28.9h0m.1 27.4h0m0-17.6h0m.1 1.7h0m.1 38.7h0m0-59.1h0m.1 5.6h0m0-16.6h0m0 44.6h0m.1 .2h0m.1 6h0m0-39.6h0m.1 6.3h0m0-10.4h0m0 43.3h0m.1-33.1h0m0 3.7h0m0-28.7h0m.1 41.2h0m0 1.8h0m.1 25.3h0m.1-25.8h0m0-28.8h0m0 12h0m.1 24.9h0m0-28.6h0m.1 25.5h0m.1-25.3h0m0-24.8h0m0 56.2h0m.1-2.8h0m0-24.2h0m.1 11h0m.1-4.9h0m0 20.3h0m.1-25.2h0m0-27.8h0m0 18.6h0m.1 10.9h0m.1-2.4h0m0-9.9h0m0 6.6h0m.1 2.5h0m0-1.3h0m0 19.8h0m0-41.7h0m.1 17.7h0m0-13.2h0m.1 12.9h0m0 23.1h0m.1-37.2h0m0 25h0m0-9.1h0m.1 14.9h0m0-10.6h0m.1-11.2h0m0 7h0m0 12h0m.1-43.4h0m0 71.8h0m0-33.6h0m.1 21.2h0m.1-19.7h0m0-15.7h0m.1 7.5h0m.1 5h0m.1-23.3h0m0 9.4h0m0 17h0m.1 5.6h0m0-15.2h0m.1 6h0m0 10.4h0m.1-26.3h0m.1-15.7h0m0 31.1h0m0 19h0m.1-11.1h0m.1-23.4h0m0 8.9h0m0-18.6h0m0 24.1h0m0-33h0m.1 34h0m0-7.7h0m.1 58.8h0m.1-58.7h0m0 3.3h0m0-30.6h0m.1 2.6h0m0 26.4h0m0 7.8h0m.1-25h0m0 12.4h0m0 18h0m.1-7.9h0m0-23h0m0 30.4h0m.1-2.1h0m.1-36.2h0m0 31.6h0m.1 3.9h0m.1-1.7h0m0-5.5h0m.1-10.5h0m0 20.8h0m.1-9.1h0m0-20.1h0m.1 15.6h0m.1-.8h0m0-17.1h0m0 18.2h0m0 7.5h0m.2-4h0m.1-11.9h0m0-10.9h0m0 26.2h0m0 4h0m.1 10.7h0m0-15.5h0m0 2.3h0m.1 31.6h0m.1-55.7h0m.1-3.1h0m0 30.3h0m0-15.8h0m0-22.7h0m.1 12.8h0m.1-4.4h0m.1-8.7h0m0 51h0m.1-11.6h0m.1-20h0m0 30.4h0m.1-11.1h0m0 18.1h0m.1-.4h0m.1-28.8h0m0 13.8h0m.1 4.4h0m0-42.6h0m0 10.8h0m0 53.3h0m.2-62.8h0m0 1h0m0 29.9h0m0-29h0m0 21.3h0m.1-6.8h0m.1 37.3h0m0-58.4h0m.1 66.1h0m0-14.3h0m.1-26.2h0m0-3.1h0m0-19.8h0m.1 2.8h0m0 66.7h0m.1-46.4h0m0 27.6h0m0-11h0m0-15.8h0m.1 2.8h0m.1 17.4h0m0 4.8h0m0-23.7h0m0-3.3h0m.1-4.5h0m0 8.4h0m.2-.1h0m.1 14.7h0m0 2.5h0m.1 3h0m.1-16h0m0 1.7h0m0-12.8h0m.1 28.8h0m.2 24.1h0m0-1.6h0m.1-22.7h0m0-2.2h0m.1-12.2h0m.1 15.3h0m0-27.7h0m0 22.5h0m.1 5h0m0-12.8h0m.1 6.8h0m.1 6.1h0m0-18.4h0m.1 13h0m.1 11.4h0m.1-13.3h0m0-11.1h0m.1-9.4h0m0 21.3h0m.1 1.4h0m.1 12.2h0m0 11.1h0m.1-18.4h0m.1 10.8h0m.1-13.7h0m0 17.4h0m.1-35.8h0m0 34.7h0m.1-16.6h0m0 17.5h0m0-37.8h0m.1 34.3h0m.1-23.4h0m.1 6.8h0m0 34.3h0m.1 3.1h0m.1-7.7h0m.1-2.8h0m0-45.2h0m.1 21.6h0m.1-6.2h0m.1 21.8h0m0-3.5h0m.1-40.6h0m0 54.5h0m.1-23.2h0m.1-10.8h0m.1 30.9h0m0-23.3h0m.1-.3h0m.1 22.2h0m0-4h0m.1 13.7h0m0-3.5h0m.1 3.5h0m.1-46.2h0m.1 47.5h0m0 .8h0m0-27.4h0m.1-3.5h0m0-19.5h0m0 44.6h0m.1 2.5h0m0 13.7h0m0-32.5h0m.2 20.3h0m0-2.2h0m0 1.9h0m.1 8.5h0m0-5.1h0m0-4.2h0m.1-2.5h0m0 12.2h0m.2-11.3h0m0 9.3h0m.1 .9h0m0-21.6h0m0 18.3h0m.1-22.1h0m.2 18h0m0 10.2h0m.1-5.2h0m0-5.9h0m0 2.9h0m0 5.8h0m.2 .4h0m0-16.5h0m.1 15.5h0m0-8.6h0m0 11.5h0m0-14.2h0m.1 26.1h0m.1-52.5h0m.1 18.4h0m0 14.8h0m.1 6.1h0m0-8h0m0-3.5h0m0-21.9h0m.1 38.9h0m0-11.7h0m.1-5h0m.2 9.5h0m.1-9.6h0m.1 4.3h0m0-1.2h0m0 5.4h0m0 3.8h0m.1-14.3h0m.1 2.3h0m0 4.1h0m0 10.3h0m.1-19.9h0m0 8.5h0m.1-1.7h0m0 9.4h0m0 2.6h0m.1-.1h0m0-19.4h0m.1-4.7h0m0-15.2h0m.1 42.8h0m0-14.9h0m.1 9.5h0m0-28.3h0m0 19.5h0m.1 1h0m0-20.3h0m.1 27.8h0m0-2.3h0m.1-25.5h0m.1-26.4h0m.1 42.3h0m0-16.7h0m0 26.3h0m.1-39.9h0m.1 23.4h0m.2-3.6h0m0 14.4h0m.1-8.8h0m.1-14.3h0m0-10.7h0m.1 20.3h0m.1-27h0m.1 19.2h0m0 10.4h0m.1-1.6h0m0-36h0m.1 76.9h0m.1-58.2h0m0-6.6h0m0 35.1h0m.1-26.7h0m0-15.9h0m.1-10.8h0m.1 12.3h0m0 33.5h0m.1-33.4h0m0 21.9h0m.1 10.5h0m.1-15.9h0m0 27.8h0m.1-44.7h0m0 27.9h0m.1-7.3h0m.1 2.3h0m0 20.2h0m0 18.6h0m.1-38.5h0m0 6.6h0m.1 .7h0m.1-29.8h0m0 33.4h0m.1-12.5h0m0-1.7h0m.1 22.2h0m0-13h0m.1 .3h0m0-9.3h0m.1 12.9h0m0 2.3h0m.1-4.1h0m.1-25.8h0m.1 27.7h0m.1-12.5h0m0-10.5h0m.1 22.3h0m0-24.2h0m.1 31.1h0m.1-42.6h0m0 41.3h0m.1-24.1h0m0 24h0m0 4h0m0-6.4h0m.2-31.7h0m0 26.7h0m.1 8.6h0m0 .1h0m.2-18.3h0m0 25.6h0m0 14.7h0m.1-45.2h0m0 25h0m0 .7h0m0-13.1h0m.2 5.6h0m0 14.5h0m.1-25.3h0m.1-7.3h0m.1 4h0m0 6.6h0m.1 31.2h0m0-40.2h0m.1 23.9h0m0-15.8h0m.1 8.8h0m0 7.1h0m.1 18.8h0m0-25.6h0m.1 7.5h0m0 1.4h0m.1 8h0m0-38.2h0m.1 46.9h0m0-32.7h0m.2 3.4h0m0-2.8h0m.1 18.1h0m0-2.2h0m0-9.2h0m0 21.6h0m0 1.3h0m0-32.5h0m.2 2.3h0m0 20.5h0m.1-43h0m0 40.1h0m.1-50.4h0m.1 40.3h0m0 14h0m0-1.2h0m0-45.5h0m.1 9.9h0m.1 30.1h0m0-10.4h0m0 24.8h0m0 2.1h0m.1-19.6h0m0-14.3h0m.1 19.6h0m0 4.8h0m0 2.9h0m.1-19.1h0m0 26.9h0m.1-15.1h0m0-20.6h0m0 9.3h0m.1 4.4h0m0-24.7h0m.1 47h0m0-23.2h0m.1-2.8h0m.1-3.1h0m.1-29.3h0m0 17.6h0m.1 8.3h0m.1-23.3h0m.1 33.4h0m0-28.4h0m0 31h0m.1-13.1h0m0 21.6h0m0 2.9h0m0-24.6h0m.1-1.9h0m.1 17.2h0m0-16.9h0m.1-25.5h0m.1 3.5h0m.2-24.4h0m0 51h0m.1 9.4h0m0-57.5h0m.2 68.3h0m0-33.9h0m.1 7.9h0m.1 .5h0m.1-1.9h0m.2-6.5h0m.1 .4h0m.1 13.3h0m.1-40.1h0m0-1.1h0m.1 16.1h0m0-14.9h0m.1 39.2h0m0-29.4h0m.1 .2h0m.1-5.5h0m0 46.4h0m0-24h0m0-32.7h0m0-15.3h0m.1 49.8h0m0-27.5h0m.1 13.9h0m0-2.3h0m.1-10.6h0m.1-16.4h0m0 22.8h0m.1 1.6h0m0 32.7h0m.1-66.8h0m0 20.4h0m.1 21.9h0m0-7.8h0m.1 36.4h0m0-42.7h0m0-5.2h0m.1-.9h0m0-5.2h0m0 58.8h0m.1-30.6h0m0-20.5h0m0-1.7h0m.1 12.2h0m0-8.6h0m0-.5h0m.1-1.4h0m0 2h0m.1 18.5h0m.1-7.2h0m0-.9h0m.1-16.9h0m0 8.2h0m0-9.1h0m0 16.2h0m0-15.7h0m.1 27h0m0-32.1h0m.1 7.8h0m0 21.4h0m.1-27.1h0m0 37.6h0m0-48.5h0m0 11h0m.1 12.1h0m0 15.6h0m0-21.2h0m.1-7.9h0m0-21.8h0m0 25.2h0m0-3.8h0m.1 37.5h0m.1-26.3h0m0-2.3h0m.1-9.8h0m0 13.8h0m0 2.3h0m0 1.6h0m.1 14.3h0m.1-28.1h0m.1 .2h0m.1 27h0m0-23.7h0m0 16.5h0m0-25.8h0m.1 11.4h0m.1-13.1h0m0 9.8h0m.1 24.9h0m0-27.2h0m.1 10h0m0-8.7h0m0 8.1h0m0-1.9h0m0-22.4h0m.2 44.2h0m.1-34.1h0m0 29.2h0m.1-37.6h0m.1 13h0m0 10.1h0m.1-1.5h0m0-7.5h0m0 13.4h0m.1-30.5h0m0 31.8h0m0-5.7h0m.1 1.6h0m0-13.6h0m0 6.5h0m0 10.5h0m.1-14.2h0m0-19.3h0m0 8.4h0m.1 8.6h0m0 9.1h0m.1-7.1h0m0-20.8h0m.1 22.9h0m0-25h0m0 33.4h0m0-31.3h0m.1 30.1h0m.1-8.2h0m0-4.9h0m0 23.8h0m.1-2.3h0m0 5.4h0m.2-3.9h0m0 18.9h0m0-43.9h0m.1 32.4h0m0-20.3h0m.1-7.5h0m.1 3.7h0m0 1.1h0m0 9h0m.1 36.5h0m0-41.6h0m.1 9.2h0m.1-8.8h0m0 33.5h0m.1 4.5h0m.1-22.3h0m0-18h0m0 18.3h0m0-19.7h0m.1 37.3h0m0-39.6h0m0 8.4h0m.1-7h0m.1 55.9h0m0-58.1h0m0 13.1h0m.1 11.6h0m0 20.7h0m.1-24.8h0m.1-3.4h0m0 24.3h0m.1-3.3h0m.1 1.6h0m0-37.8h0m0-4.7h0m.1 36.3h0m0-56.3h0m.1 63.6h0m0 21.4h0m.1-11.1h0m.1-18.3h0m0-14.6h0m.1 30.2h0m0-21.6h0m.2 14.4h0m.1-17.3h0m0 14.5h0m.1-11.6h0m.1-22.6h0m0 48.7h0m.1-7h0m0-32.6h0m.1 29.4h0m.1-12h0m0 5.9h0m.1 2.2h0m0 9.4h0m.1 23.5h0m.1-21.3h0m0-9.2h0m.1-12.5h0m0 18.5h0m.1-5.2h0m.1-.9h0m0 8.7h0m.1-30.9h0m0 1.2h0m.1 15.7h0m.1 17.3h0m0-27.4h0m0-5.7h0m.1 3.1h0m.1-8h0m0 31.5h0m.1-30.1h0m0 42.9h0m0-47h0m.1 22.5h0m0 18.4h0m.1-30.4h0m0-1.7h0m.1 12.8h0m0-4.6h0m.1-3.2h0m.1 12.3h0m0-18h0m.1 9.4h0m.1-1.4h0m.1-32.1h0m.1 26.5h0m0 5.3h0m.1-17.3h0m.1 15.9h0m0 28.5h0m0-27.7h0m.1 23.5h0m.2-17.3h0m0-14.7h0m.2 41.6h0m.1-26.6h0m.1 2.6h0m0 23.8h0m0-6.1h0m.1 3.3h0m0-56.7h0m.2 7.3h0m0 32.6h0m.1-44.7h0m.1 57.5h0m0-12.2h0m.1 6.9h0m0-19.6h0m.1 22.5h0m0 2h0m0-26h0m.1 30.7h0m0-3.1h0m0-43.1h0m.1 32.9h0m.1-6h0m0-27.5h0m.1 5.6h0m.1 26.1h0m.1 7.4h0m0 4.8h0m0-25.5h0m.1 1.3h0m0-26.4h0m.1 17.7h0m.1 22.1h0m0-6.4h0m.1 15.4h0m0 3h0m0-18.3h0m.2-9.5h0m0 12.3h0m.1-36.5h0m0 42.6h0m.1 5.7h0m0 6.8h0m0-18.2h0m.1 7h0m0-46.4h0m.1 35.6h0m.1 18.5h0m.1-3.4h0m.1-7h0m0-5.3h0m.1 10.7h0m.1-8h0m.1 6.9h0m0 8.1h0m0 13.1h0m.1-15.1h0m.1-31.8h0m0 35.5h0m.1-4.5h0m0-6.1h0m.1 6.3h0m.1-11.6h0m.1 18.1h0m.1-14.6h0m0 9.2h0m.1-13.2h0m0 15.7h0m0-16.5h0m.1 10.2h0m0-56.5h0m0 67.2h0m0 17.5h0m0-70.6h0m.1 .3h0m0 48.3h0m.1-7.3h0m0 10h0m0-4.9h0m.1-33h0m.1 10.1h0m0 21.9h0m0-4.2h0m0 4.6h0m0-1.8h0m0-9.4h0m.1-3.5h0m0 18.8h0m.1-2.2h0m.1 1.7h0m.1-23.8h0m0 18.8h0m.2 15h0m.1-8.7h0m0 21.9h0m0-50.2h0m.2 54.6h0m.1-10h0m0-25.6h0m0 1.3h0m0-2.3h0m.2-6h0m0-17.2h0m0 48.2h0m.2-56.8h0m.1 13.4h0m0 29.4h0m0-33.7h0m.1 52.7h0m0-44h0m.3 18.5h0m0-3.8h0m0 10.6h0m.1 .5h0m0 12.1h0m0-18.8h0m0 27.5h0m.1-30.6h0m0-27.8h0m.1 26.5h0m.2-24.4h0m0-4.5h0m.1 49.3h0m0-25.9h0m0-16.7h0m.1 18h0m.1-15.1h0m0 36.3h0m.1-23.6h0m.1-18.2h0m0 26.9h0m0 14.9h0m0-12.5h0m.1-9.4h0m0 27.4h0m.1-6.7h0m0-15.7h0m0-8.8h0m0 23.1h0m.1-20.8h0m.1 14.9h0m0-16.6h0m0-17.7h0m.1 29.4h0m0 .9h0m.1-6.7h0m0 23.7h0m0-15.1h0m0-6.9h0m0 8.4h0m.1-8.5h0m0 1.1h0m.1-16.9h0m0 17.8h0m.1-24.1h0m0-11.9h0m.1 6.1h0m.1 12.4h0m.1-18.6h0m0 32.7h0m0 1.9h0m.1-22.1h0m.1 19.3h0m.1-19.3h0m.1-34.7h0m0 58.6h0m.1 13.3h0m.1-56.1h0m0 30.3h0m.1 29.2h0m0-13.2h0m.1-2.7h0m.1-7.4h0m.1-40.7h0m.1 70.9h0m.1-74h0m0 62.9h0m0 8.5h0m0-14.5h0m0-4.7h0m.1 18.7h0m0-13.9h0m.1-6h0m.1-1.2h0m0-32.4h0m.1 32.6h0m.1-34h0m.1 34.6h0m0-24.1h0m0 28.8h0m.1 .1h0m.1-8.7h0m0 3.3h0m.1-2.7h0m0 6h0m.1-58h0m.1 12.5h0m0 41h0m0-8.8h0m.1-41.7h0m0 58.8h0m0-6.6h0m.1-22.7h0m.1 9.5h0m0-7.3h0m.1-3.9h0m0-31.1h0m0 21.8h0m.1 19.5h0m.1-12.3h0m0-20.5h0m0 59.8h0m.1-59.7h0m.1 40.3h0m0-36.1h0m.1 12.7h0m0 24h0m.1-36.1h0m0 12.5h0m.1-1.1h0m.1-15.8h0m0 19.5h0m.1-23.1h0m.1 20.2h0m.1-4.5h0m0 27.9h0m.1-22.8h0m0-2.7h0m.1 13.4h0m.1-14.1h0m.1-19h0m0-.1h0m0 17.2h0m.1-24h0m0 41.8h0m.1-16.2h0m0-42.9h0m0 40.5h0m.1 50.1h0m0-60.9h0m0 9h0m.1 25.4h0m.1-2.5h0m0 15.1h0m0-44.4h0m.1 33.6h0m.1-30h0m.1-9.3h0m.2 50.3h0m0-45.9h0m0-9.6h0m0-1.3h0m.1 23.1h0m.1 4.4h0m.1 18.9h0m0-28.6h0m.1 15.8h0m0-30.9h0m0 19.8h0m0-11.7h0m.1 29.1h0m0 19.9h0m0-49.9h0m.1 8.5h0m0-9.9h0m0-7.8h0m.1 2.6h0m0 20.5h0m0-31.6h0m.1 12.6h0m0 7.9h0m0-20.1h0m.1 16.4h0m0 22.7h0m0-38.2h0m.1-2h0m0 20.6h0m0 8.5h0m.2-19.1h0m0 25.5h0m0-18.5h0m0 29.8h0m.1-18.4h0m.1-7.5h0m0-34.6h0m0 29h0m.1 1.6h0m0-19.7h0m0-5.6h0m.1 7.9h0m0 36.4h0m.1-21.2h0m0 5.5h0m.1-12.4h0m0 11.4h0m.1 2.4h0m0-32.2h0m0 9.2h0m0 19.5h0m.1 .1h0m.1-12h0m.2 8.5h0m0-5h0m0 9.2h0m.1 11.2h0m0-11h0m0 1.2h0m0 13.2h0m.1-7.6h0m0-10h0m.1 2.3h0m.1 .1h0m0 11.1h0m0-16h0m.1 24.5h0m0-44.4h0m.1 9.8h0m0 43.8h0m0-51.3h0m.1 22.9h0m.1-1.4h0m0 54.3h0m0-27.6h0m0-24h0m.1 10.1h0m0-39.6h0m0 3.8h0m0 33.3h0m.1 15.9h0m.2-41.2h0m0 11.9h0m.1 4.9h0m0-19.2h0m.1 21h0m0 5h0m0-10h0m.1-10.2h0m0 22.2h0m.1-9.1h0m0 7.7h0m.1 2.5h0m.1-16.4h0m0 15.6h0m.1 2.8h0m0-14.1h0m0 9.1h0m.1-11.7h0m0 47.1h0m.1-5.4h0m.1-16.9h0m0-7.9h0m.2-27.3h0m0 7.8h0m0 6.1h0m0 34.7h0m.1-34.3h0m0 4.7h0m0 4.9h0m.1-12.5h0m0-2.7h0m.1 8.1h0m0-10.6h0m0 5.4h0m.1 5h0m0 1.7h0m.1-19.3h0m0 30.1h0m.1-16.4h0m.1-2.1h0m.1 4.8h0m.1 24.2h0m0-46.2h0m0 19.8h0m0 6.3h0m.1-.5h0m.1-4.3h0m0-4.4h0m.1 42.2h0m0-37.3h0m.1 0h0m.1-5.6h0m0-3.1h0m.1 28.7h0m0 1.3h0m.1 16.8h0m0-37.2h0m.1 16.3h0m0-36.9h0m0 4.3h0m.1 39.3h0m.2-31h0m0 27h0m.1 1.5h0m0-27.9h0m.1 64h0m.1-40.8h0m0 7.4h0m.1-21.7h0m0-7.4h0m.1 16.9h0m.1-29.5h0m0-3.2h0m0 30.7h0m.1-7.7h0m0-8.6h0m0 26.5h0m.1 6.8h0m0-29.1h0m.1 2.8h0m0-3.5h0m0 4.1h0m.1-.8h0m.1 44.2h0m.1-66.7h0m0 17.9h0m.1 12.9h0m.1-11.4h0m.1 4.6h0m.1 24.9h0m0-13.7h0m.1-18.2h0m0-8h0m.1 4.6h0m0 16.3h0m.1 21h0m0-14.3h0m.2 23.7h0m0-55.2h0m.1 87.5h0m.1-5.6h0m0-64.8h0m.1 21.6h0m0-33.7h0m.2 15.5h0m.1-6h0m0-10.6h0m.1 21.6h0m.1 28.5h0m0-40.3h0m.1 5h0m0 26.4h0m.1-8.3h0m.1 36.2h0m0-43.3h0m.1-15.9h0m0 26.8h0m0-24.5h0m.1 14.8h0m.1-12.6h0m0 3h0m.1-4.5h0m0 39h0m.1-33.7h0m.1 4.8h0m0 6.6h0m.1-.4h0m0 45.4h0m.1-62.6h0m.1 48.4h0m0-38.2h0m.1 7.8h0m0 17.3h0m.1-8.1h0m.1-30.5h0m0 2.7h0m.1 39.9h0m0-5.3h0m.1-7.9h0m.1-11.8h0m.1 14.4h0m.1-2.7h0m.1 27.3h0m0-8h0m0-12.5h0m.1 32.2h0m0-75.4h0m.2 61.1h0m0-28.8h0m.1 19.8h0m.1-25.7h0m0 22h0m.1 1.1h0m0-28.7h0m.1-9h0m.1 27.9h0m0 20.4h0m.1-51.3h0m0 28.3h0m.1 12.9h0m.1-21.8h0m0 32.4h0m0 6.6h0m.1-26.1h0m0 17.8h0m0-2.5h0m0-25.2h0m.1-7.4h0m.1-19h0m0 42.9h0m.1 7.1h0m0 2.2h0m0-8.9h0m.1 5.5h0m.1-40.8h0m0 54.8h0m.2-12.1h0m.1-1.6h0m0-33.5h0m.1 33h0m0 3.3h0m0-14.9h0m.1 1.5h0m0 23h0m.1-22.6h0m.1-36h0m0 47.8h0m0 25h0m.1-24.7h0m0 20.6h0m.1-31.5h0m0-25.4h0m.1 47.5h0m0-1.2h0m0 5.3h0m0-42.2h0m.1 .2h0m.1 17.9h0m.1 33.8h0m0-16.4h0m0-8h0m.2 6.1h0m0-1.8h0m.1-18.3h0m.1-18.7h0m0 45.4h0m0-25.4h0m0 22.1h0m.1-8.1h0m0-14.5h0m.1-14.6h0m.1 17.6h0m0 3.8h0m0 5.8h0m.2-12.2h0m0 21.3h0m.1-20.7h0m0 21.2h0m.1-71.9h0m0 49.8h0m.2 21.5h0m0-8h0m.1-1.1h0m0-7h0m.1 9.3h0m0 .5h0m.1-12.6h0m0-23.9h0m0 39.6h0m.1-21h0m0 15.2h0m.1-22.9h0m.1 32.4h0m0 4.1h0m.1-29.7h0m0 15.4h0m.2-8.6h0m0 8.9h0m0-.1h0m.2-34.2h0m0 43.3h0m.2-16.6h0m0 18.3h0m0-45.6h0m.1 15.9h0m.1 .3h0m0 24.9h0m0-22.9h0m0 20.6h0m.1-20h0m0 30.2h0m.1-34.1h0m.1 26.9h0m0-3.2h0m.1-9.1h0m0 18.2h0m.1-42h0m.1 19.8h0m0 8.9h0m0-21h0m.1 24.6h0m.1-30.9h0m0 35.3h0m.1-5.5h0m0-18.3h0m.1 2.9h0m0 25.3h0m.1-30.7h0m0 8.9h0m.1-31.4h0m0 35.8h0m.1-23.4h0m.1 30.9h0m0-.8h0m0-34.7h0m.1 38.6h0m0 24.1h0m.1-44.7h0m.1 12.5h0m0-43.4h0m0 54.2h0m.1-40.2h0m.1 33.9h0m.1 2.4h0m0-3.7h0m.1-36.2h0m.2 15.7h0m.1-9.5h0m.1 8.3h0m.1 26.3h0m.1-28.8h0m.1 15.4h0m.1 12.3h0m0-3h0m0-28.4h0m.1 7.7h0m0 3.8h0m.1-16.9h0m.1 15.3h0m0-15.8h0m.1-1.7h0m0 35.8h0m0-.3h0m.1 1.8h0m0-42.9h0m.1 15.9h0m0 14h0m.1-18.4h0m0-19.7h0m.1 46.8h0m.1-19.4h0m0-51.1h0m.1 9.6h0m.1 55.5h0m.1 8.9h0m.1-21.1h0m.1 19.2h0m0-41.2h0m.1 35h0m0-9.7h0m.2-23.7h0m0 10.2h0m.1 29.7h0m0-10.4h0m0-32h0m.1 16.3h0m.1-2.6h0m0-33.1h0m0 21.5h0m.1 18.4h0m0-16.1h0m.1-13.8h0m0 35.3h0m.1-7.7h0m0-16.4h0m0 34.2h0m.1-45.6h0m.1 6h0m0 36.9h0m.1-16.7h0m.1 15.3h0m0-52.4h0m0 22h0m.1 1.8h0m.1-3.2h0m0 17.5h0m.1-17.1h0m0-2.9h0m0 36.7h0m0-40.8h0m.1-18.2h0m.1 86h0m0-71.4h0m0-21.5h0m.1 17.9h0m0 8.3h0m.2 36.9h0m.1-32.3h0m0 5.5h0m.1-27.7h0m0 6.9h0m0 41.9h0m.1-23h0m0 20.7h0m.1-1h0m0-26.6h0m.1 3.8h0m.1-12.7h0m0 6.4h0m0 48.1h0m0-45.6h0m0 26.1h0m.1-4.7h0m.1 .5h0m.1-18.8h0m.1 13.4h0m0-22.7h0m.1 31.6h0m0-43h0m0 .6h0m.1 8.3h0m0 3.4h0m0-18.2h0m0 46.3h0m.1-21.2h0m.1-11h0m0 10.5h0m.1 .9h0m0-15.4h0m.1 18.8h0m.1-14.9h0m0-.1h0m0-6.7h0m.1-.1h0m0-9h0m0 36.1h0m0-23.3h0m0 17.7h0" stroke="#000" fill="none" stroke-linecap="round" stroke-width="3.6"/>
<path d="M243.9 490h0m.1 9.7h0m.1 19h0m0-20h0m.1-3.6h0m0-2.1h0m0-11.7h0m.1 16.5h0m0 1.7h0m.1-12.6h0m0-15.6h0m0 39.3h0m.1-31.3h0m0 10.2h0m0 13.4h0m0-18.7h0m0 31.8h0m.2-3.4h0m.1-10.1h0m0-22.5h0m0 21.8h0m.1-34.6h0m0 25.4h0m.1 12.1h0m0-13.8h0m0 23.5h0m.1-25.4h0m0-2.7h0m0 3.4h0m.1-16.2h0m0 39.1h0m.1-14.3h0m0 .1h0m0-4.3h0m0 14.9h0m0-13.9h0m.1 1.9h0m0 12.4h0m.1-14.3h0m0 3.8h0m.1 9.7h0m0-22.5h0m.1-10.3h0m.1 43.2h0m0-19h0m.1 22.7h0m0 24.1h0m.1-33.5h0m.1-27.4h0m0 7.6h0m0-3.2h0m.1 42.5h0m.1-43.3h0m.1 6.8h0m0 65.7h0m.1-62.8h0m0 22.3h0m.1-33.2h0m0 9.4h0m.1 7.2h0m0-14.1h0m0 7.5h0m0-8.8h0m.1 32.3h0m0-28h0m.1-10h0m.1 3.7h0m0 72.8h0m.1-47.7h0m0-5.5h0m.1 19.1h0m.1 .6h0m0-6.7h0m.1 20.7h0m0 9.7h0m.1-56.8h0m.1 11.3h0m0 43.1h0m.1-41.2h0m0 21.9h0m.1 7.2h0m0-41.4h0m.1 37h0m0 4.9h0m.1 15.3h0m.1-20.4h0m.1-8.7h0m0-11.9h0m.1 30.1h0m0-32.8h0m.1 1.2h0m.1 17.9h0m0-25.4h0m.2 21.6h0m0-23.1h0m0 35.7h0m.1-13.4h0m0 10.3h0m.1-23.1h0m.1 22.4h0m.1 11.1h0m0-48.1h0m.1 28.9h0m0-21.2h0m.1 13.1h0m.1-.6h0m0 21.7h0m.1-13.3h0m.1 4.7h0m0 19.9h0m0-1.2h0m.1-24.1h0m0 7.4h0m.1-23.9h0m.1 38.6h0m0-23.6h0m0 5.7h0m.1 7.8h0m0-6.9h0m.1-4.4h0m.1 16.4h0m0-32.2h0m.1 25.3h0m0-14.9h0m.1-13.8h0m.1 39.4h0m0-7.8h0m.1 2.5h0m0-27.7h0m.1 25.9h0m.1 25.3h0m0-43.5h0m.1 7.8h0m0 10.4h0m.1 5.7h0m.1-14.7h0m0 19.7h0m.1-6.8h0m0 14.1h0m0-23.2h0m.1 19.7h0m0-9.2h0m.1-19.2h0m0-14.9h0m0 37h0m.2-17.6h0m0 12h0m.1 2.2h0m0 15.4h0m.2-7.2h0m0-2.1h0m.1-2.8h0m.1-.3h0m.1 1.5h0m0-13.8h0m.1 9.9h0m0 3.5h0m.1 .1h0m0 5.8h0m0-3.9h0m.1 4.4h0m0-5.8h0m.1-5.3h0m.2 11h0m0-12.5h0m0 26.2h0m.1-24.8h0m.1 5.3h0m0 9h0m0-2.3h0m.1-11.8h0m0 6h0m.1-13.7h0m0 17.9h0m.1-.9h0m0-12.9h0m.1 19h0m.1-10.5h0m0 12.4h0m.1-16.5h0m.1-4.8h0m0 17.5h0m0-8h0m0 10.4h0m.1-16.7h0m0 3.4h0m.1-11.6h0m.1 16.7h0m0-3.5h0m0-11.5h0m0 13.6h0m.1-18.8h0m.1-1.1h0m.1 20h0m0-23.8h0m.1 28h0m0-1.5h0m0-3h0m.1-23.1h0m.1-24.7h0m.1 42.5h0m.1 3.8h0m0 9.2h0m0-9.8h0m.1-20.7h0m0 23.8h0m0-7.1h0m.1-14.3h0m0 22h0m.1 6.3h0m0-2.7h0m0 2.4h0m.1-7.2h0m0-18h0m.1-9.5h0m0 40.9h0m.1-41.7h0m0 35.5h0m0-23.8h0m.1-5.7h0m0 16h0m.2 30.8h0m.1-54.5h0m0 28h0m.1 5.4h0m.1-1.8h0m0-.1h0m.1-16h0m.1 23.8h0m.1-27.8h0m.1-11.9h0m0 11h0m.1 9.6h0m.1-7.4h0m0 22.3h0m.1-15.4h0m.1 8.8h0m0 5.3h0m0-12.3h0m.1-10.1h0m.1 20.3h0m0 1.4h0m0-4.5h0m.1 8.6h0m.1-11.9h0m0 12.3h0m.1 2.4h0m0-19.2h0m.1 11h0m.1 6.7h0m0-4.9h0m0-.2h0m0-11.3h0m.1 6.9h0m.1-40.8h0m.1-29.5h0m0 53h0m.1 .9h0m.1 20h0m0-16.6h0m.1-25.9h0m0 31.8h0m.1-20.8h0m.2 20.4h0m.1-21.3h0m0 25.4h0m.1-27.5h0m0 2.2h0m0 29h0m.1-33.1h0m0-13h0m.1 35.9h0m.1-8.5h0m0 16.5h0m0-36.1h0m.1 29.8h0m0-20.7h0m.1 29.8h0m0-25.1h0m.1 5.1h0m0 37.9h0m.1-35.3h0m0 3.4h0m.1-18.7h0m.1-.3h0m0 17.3h0m.1-7.7h0m.1-22.5h0m.1 18h0m0-14.3h0m.1-8.9h0m0 11.7h0m.1-9.9h0m.1 20.5h0m0-21h0m.1 40.7h0m0-31.4h0m.1 21.6h0m.1 16.4h0m.1-32.3h0m0-9.5h0m.1 5.7h0m.1 11.8h0m0-5.4h0m.1-7h0m.1 24.3h0m.1 11.9h0m0-32.2h0m0 .6h0m.1 2.2h0m.1 24.6h0m.1-3.9h0m0-34.1h0m.1-.4h0m0 4.4h0m.1 28.1h0m0-11.2h0m.1 28.4h0m0-14.3h0m.2-17h0m0 13.2h0m.1 22.6h0m0-35.8h0m.1-19h0m.1 19.6h0m0 12.7h0m.1 14.5h0m0-42.2h0m.1 16.5h0m.1 6.2h0m0-26.8h0m0 16.3h0m.1-2h0m0 17.2h0m.1-22.2h0m.1-2.2h0m0-27.7h0m.1 28.9h0m.1 19.4h0m.1-14.2h0m0 16.8h0m.3-40.3h0m0 12.4h0m0-3.6h0m.1-6.2h0m0 12.5h0m.1 4.9h0m.1-11.6h0m0-3.2h0m0 .5h0m0 14.5h0m.1 5.1h0m.1-17.1h0m.1 3.5h0m0-3.9h0m0 9.9h0m.1-10.2h0m0-.7h0m.1 19.3h0m.1-3.7h0m0-3.3h0m.1-16.1h0m.1 31.2h0m0-31h0m0 8.6h0m0 2.4h0m.1-3.6h0m0 10.7h0m0 1.8h0m.1-14.4h0m0 .7h0m.1 52.2h0m0-62.6h0m0 3.2h0m0 20.1h0m.1 29.6h0m0-51.4h0m.1 16h0m.1-7.4h0m0-8.4h0m.1 28.4h0m.1-21h0m0 29.7h0m.1-12.5h0m0-16.6h0m0 5h0m.1 6.7h0m0-13.3h0m.1-13.9h0m0 29.6h0m0-12.4h0m.1 17.1h0m0-29.9h0m.1 32.3h0m0-13.1h0m.1-15.7h0m.1 48.1h0m.1-41.2h0m.1 31.1h0m.1-17.1h0m0-15.2h0m0 6.4h0m.1-1.1h0m0 3.8h0m.1-25.1h0m0 17.7h0m0-.7h0m.1 28.9h0m0-29.3h0m.1 1.7h0m0-7.6h0m0 34.9h0m.1-23.6h0m.1-17.2h0m0 10.4h0m.2 23.3h0m.1-16.6h0m.1-6.8h0m0 49.6h0m.1-15.5h0m0-10.9h0m.1-19.7h0m0 .3h0m.1 39.5h0m.1-20.1h0m0 20.4h0m.1-33.4h0m0 13.8h0m.1-18.4h0m0 21.5h0m.1-21.4h0m0-4.8h0m0 .6h0m0 27.2h0m.1 12.3h0m0-26.4h0m.1 2.2h0m.1 .5h0m0 9.4h0m.1-7.9h0m0 11.2h0m.1 20.4h0m.1-40.7h0m0 32.3h0m.1-5.4h0m0-43.2h0m.1 10.8h0m.1 32h0m.1-9.9h0m.2-11.4h0m0-12h0m.1 26.3h0m.1 11.9h0m.1 3.3h0m0-18.6h0m.1-14.9h0m0 9.8h0m.1 20.2h0m.1-33.6h0m0 29.4h0m.1-6h0m0 2.6h0m.1 2.8h0m0-32h0m.1 21h0m0 12.7h0m.1-1.1h0m.1-43.9h0m0 44.7h0m.1-53.5h0m0 18.8h0m.1 58.6h0m.1-45.9h0m0-3.9h0m.1 28.1h0m0 12.8h0m.1-16.6h0m.1 4h0m0-49.7h0m.1 16.7h0m0 16.2h0m.1-3.3h0m.1 1.8h0m0 19.4h0m.1 1.7h0m0-8.3h0m.1 13.6h0m.1-27.7h0m0 23.8h0m.1-20.2h0m.1-11.9h0m.1-17.6h0m0 14.4h0m.1-21.5h0m0 41.5h0m.1 3.2h0m.1-34.9h0m0 27.3h0m.1 14.2h0m0 .2h0m.1-3h0m.1-20.7h0m0 26h0m.1-13.1h0m0 9.7h0m.1-23.6h0m.1-3h0m0 39.3h0m0-39.4h0m.1 1.3h0m0 33h0m.1-29.6h0m.1-1.4h0m0-27.7h0m.1 22.7h0m.1 33.1h0m0-1.3h0m.1 2.2h0m0-7.6h0m.1-15.6h0m.1 34.3h0m0-13.1h0m.1-21.3h0m0-.2h0m.1 21.5h0m.1-9.1h0m0 11.8h0m.1-20.8h0m0-4.4h0m.1 22h0m.1-23.5h0m0 9h0m.1 3.2h0m0 7.7h0m.1-3.7h0m.1 18.2h0m0 2.2h0m0 10.6h0m0-20.6h0m.1 23.5h0m0-46.3h0m.1-12.9h0m.1 17.1h0m0 27.5h0m.1-2.1h0m0-23.4h0m0-4.3h0m.1 2.6h0m.1 18.2h0m0-5.9h0m.1-10.2h0m0 26.3h0m0-3.5h0m.1-41.3h0m.1 37.8h0m0-15.3h0m.1-12.6h0m0 25.4h0m.1-1.3h0m.1 7.9h0m0 27.4h0m0-9.3h0m0 3.8h0m.1-46.6h0m0 30.8h0m.1 4.5h0m0-5.5h0m.1-26h0m0 22.5h0m.1 .8h0m0 8.1h0m.1-8.2h0m0 2.8h0m.1 1.6h0m0-22.8h0m0 14.8h0m0-15.2h0m.1 10.2h0m.1-9.1h0m0 11.9h0m.1-14.7h0m0-4.3h0m.2 23.5h0m0-16.3h0m.1 25.4h0m.1-8.5h0m0 9.1h0m.1-15h0m.1 0h0m0 14.9h0m0-4.2h0m.1 1.9h0m.1-22h0m0 38h0m0-37.7h0m.1 13.6h0m.1 5.3h0m0-.7h0m.1-17.1h0m.1 12h0m0-12.7h0m.2 9.8h0m.1-20h0m.1 22.8h0m0 8.8h0m0-2.1h0m.1-8.4h0m.2 17.5h0m0-23.6h0m0 12.4h0m.1-31h0m0 47.1h0m0-24.8h0m0 9.6h0m.1-29.4h0m.2 30.7h0m0 .1h0m0-8.3h0m0 9.1h0m.1-22h0m.1-5.4h0m0 19.8h0m.1-17.1h0m.1 25.2h0m.1-5.6h0m0-22.1h0m0 44.5h0m.1-14.3h0m.1-7.9h0m.1-17.8h0m0 14.1h0m.1 8.7h0m0-26.1h0m.1 47.5h0m0-13.4h0m0 14.1h0m0-14.9h0m.1-19.5h0m0 1.4h0m0 1.8h0m.1 1.7h0m0 2.1h0m0 10.4h0m0-37.5h0m.1 39.7h0m0 15.3h0m0-11.7h0m0 11h0m.1-81.9h0m0 51.1h0m0 6.4h0m0 1.6h0m.1 16.8h0m0-17.5h0m.2-38.5h0m0 34.7h0m.3-4h0m.1 2.6h0m.1-20.2h0m.1 20.9h0m0-34.3h0m.2 23.2h0m0 6.9h0m.1 16.2h0m0-11.2h0m.1-36h0m0-8.2h0m.1 16.4h0m0 29.7h0m.1-14.1h0m0-7.4h0m0 18.4h0m.1-14.5h0m0-14.4h0m.1 28.6h0m0-3.2h0m0-1.4h0m0 19.3h0m0-48.9h0m0 36h0m.2-8.2h0m0 15.7h0m0-5.3h0m0-5.6h0m.1-18.8h0m.1-11.1h0m0-2.1h0m.1 11.9h0m.1-6.8h0m0-22.8h0m.1 29.9h0m.1 18.8h0m.1-7.6h0m0 5.5h0m0-15h0m.1 9.5h0m.1-.6h0m.1 4.3h0m0-24.5h0m.1 27.3h0m.1-22.5h0m.1-45.1h0m0 63.8h0m.1-17.2h0m0 19.7h0m.2 28.4h0m0-21.6h0m0-8.8h0m.1-1h0m0 16.1h0m.1-11.2h0m.1-20.8h0m0-7.7h0m.1 14.9h0m0-7.2h0m.1-14.4h0m.1 13.5h0m0-14.5h0m.1 28.1h0m0 14.2h0m.1-14.9h0m.1-25.3h0m0 30.4h0m.1 18.3h0m0-32.5h0m.1 11.9h0m.1-6.7h0m0 6.2h0m.1-32.6h0m0 28.1h0m.1 7.9h0m.1 6.1h0m0-11.9h0m.1-38.8h0m.1 45.9h0m.1-15.8h0m.1-.8h0m.1 39.8h0m0-54h0m.1 35.9h0m0-39.4h0m0 15.6h0m.1 23.1h0m0-13.9h0m.1-19.1h0m0-9.3h0m.1 7.2h0m0 22h0m.1-42.5h0m.1 34.3h0m0 18.7h0m.1-5.5h0m0-31.8h0m.1-8.7h0m.1 6.1h0m0 40.2h0m.1-10.6h0m.1-39.2h0m0 31.6h0m.2-3h0m0 15.9h0m.2-10h0m0 13.8h0m.1-23.5h0m0 19.3h0m.1-39.2h0m.1 .3h0m0 20.3h0m.1 2.6h0m0 3.3h0m.1-23.1h0m.1 2.9h0m0-.6h0m.1 3h0m0 3.1h0m.1-12.5h0m.1-5.5h0m0 42.8h0m.1 4.4h0m0-4.1h0m.1-39.5h0m.1-8.6h0m0 36.1h0m.1-7.7h0m0-21.3h0m.1 25.7h0m0-12.3h0m.1-3.1h0m0 32.1h0m.1-7.4h0m.1 7.8h0m0-2.5h0m.1 5.6h0m0-27.3h0m.1-8.3h0m.1 16.8h0m0 19.7h0m.1-34.1h0m0 17h0m.1-51.9h0m0 38.1h0m.1 26.1h0m.1-28.9h0m.1 34.2h0m.1-29.3h0m.1 5.9h0m0-2.2h0m.1 5.5h0m.1 26.3h0m.2-31.8h0m.2-28h0m0 46.5h0m0 2.5h0m.1-3.4h0m.1-15h0m0 6.1h0m.1-17.4h0m0 30.5h0m.1-10.3h0m.1-13.5h0m0-14.2h0m0 29h0m.1-47.4h0m0 .9h0m0 18h0m.1 9.4h0m.1-11.5h0m.1-20.4h0m0 50.1h0m.1-26.9h0m0-1.9h0m.1-.9h0m0-3.2h0m0 21.4h0m.2 17h0m0-44.9h0m0 32.4h0m.1-11.2h0m.1-16.2h0m.1 6.7h0m0 16.7h0m.1 25.1h0m0-35.9h0m.1 22.8h0m.1-21.2h0m0 20.5h0m.1-32.5h0m0 20h0m0-28.4h0m.1 69.3h0m.1-43h0m0-20.5h0m0 14h0m.1-12.8h0m0-7.2h0m0 7.5h0m.1-8.7h0m.1-13h0m0 4.5h0m.1 10.7h0m0-16.8h0m0 36.2h0m.1-13.8h0m.1 11.5h0m.1-2.2h0m0-27.3h0m0-6.4h0m.1 56h0m0-35.3h0m.1 10.6h0m.1-1.4h0m0-13.5h0m.1 13.6h0m.1 8.6h0m0 .3h0m.1-28.7h0m0 7.6h0m0 5.4h0m0 5.2h0m0-3.4h0m.1 2.5h0m0 21.2h0m.1-25.6h0m0 7.6h0m0-2.5h0m.1-9.9h0m0 21.7h0m0-18h0m0-9.5h0m.1 12.6h0m0-3.3h0m.1 7.8h0m0 5.8h0m.1-29.1h0m0 16.7h0m0 15.6h0m.1-22.2h0m0 2.1h0m0 13.9h0m0-29.7h0m0 4.6h0m.1 14.5h0m0-19.2h0m0 13h0m.1 6.2h0m.1 5.8h0m0-4.2h0m0-14.6h0m.1 10.9h0m0 3.1h0m.1-8.4h0m0 7h0m.1 16.4h0m0-27.2h0m0 25.3h0m0-30.2h0m.1-2.7h0m.1 11.2h0m0 11.3h0m0 6h0m.1-18.2h0m0 32.2h0m0-26.3h0m.1 30.1h0m0-36.2h0m0 33.2h0m.1-30.8h0m0 67.1h0m.1-24.7h0m0-13.7h0m.1 13.2h0m0-32.3h0m0 .7h0m0 3.6h0m0 27h0m.1-33.3h0m.1 43.1h0m0-26.7h0m.1-19.6h0m0 7h0m.1-2.1h0m.1 6.8h0m0 8.5h0m.1-2h0m0-9.3h0m.1-2.2h0m0 33.3h0m.1-8h0m0 6.1h0m.1-28.9h0m0-7.1h0m.1 25.8h0m.1 11.9h0m0-59h0m0 75.4h0m0-53.4h0m.1 10.9h0m0 6.3h0m.1 26.5h0m.1-31h0m0 12.7h0m.1-5.1h0m.1-15h0m0 34.4h0m.1-18.3h0m0-1.8h0m.1 21.3h0m.1-6.7h0m0 9.3h0m.1-33.8h0m0 22.5h0m.1-18h0m.1 12.6h0m.1 15.4h0m0-22.7h0m.1 18.8h0m.1-14.9h0m0-14.1h0m.1 23.9h0m0-14.2h0m.1 16.5h0m.1 6.3h0m0-18.1h0m.1-7.9h0m0 25.1h0m.1 6h0m.1-1.7h0m0-4.2h0m.1-24h0m0-15.2h0m.1 21.8h0m.1 7.3h0m0-10.7h0m.1 29.8h0m0-50.1h0m0 47.9h0m.1-24.7h0m0 25.6h0m.1-63.6h0m0 44.3h0m.1-13.7h0m.1-15.2h0m0 29.3h0m.1-1.9h0m0-18.4h0m.1 39.4h0m0-1.6h0m.1 3.7h0m.1-30.6h0m0 34.3h0m0-21.7h0m.1 14.1h0m0-5h0m.1 7.3h0m.1-8.6h0m0 18.5h0m0-6.7h0m.2-35.2h0m0 30h0m.1-11.5h0m.2 17.9h0m0-32.7h0m.1-15.9h0m0 58.9h0m.1-13.2h0m.1-12.9h0m.1 4h0m0-3.8h0m.1 8.7h0m.1 14.4h0m0-43.8h0m.1 21.7h0m0-4.4h0m.1 15.8h0m0 1.5h0m.1-2.1h0m0 3.6h0m.1 4.9h0m0-12.8h0m.1 6h0m0-2.2h0m.2-16.9h0m0-.4h0m.1 21.3h0m0-33.1h0m0 42.4h0m.1-26.8h0m0 28.1h0m.1 2.1h0m0-40.1h0m0 15.5h0m.2 8.1h0m0-32.8h0m0 46.7h0m.1-8.2h0m0-10.6h0m.2-9.4h0m0 14.1h0m0-42.7h0m.1 48.1h0m.1 10.5h0m0-21.3h0m0 27.9h0m.1-35.8h0m0 19.2h0m0-7.6h0m0 6.3h0m.1 4.1h0m0-9.4h0m0 8.6h0m0-19.7h0m.1 42h0m.1-57.4h0m0 31.6h0m0-38.6h0m.1 21.3h0m.1 16h0m0-.5h0m0-.3h0m.1-5h0m.1 9.9h0m0-4.2h0m.1-19.3h0m0 22.6h0m.1-37.9h0m0 28.2h0m0 9.8h0m.1-6.9h0m.1 .9h0m0-9.5h0m.1 16.6h0m0-7.3h0m0 7.5h0m0-45.3h0m.1 17.9h0m.1-6.3h0m.1 31.6h0m0-17.4h0m0 8.3h0m.1-41.3h0m.1 11h0m0 2.8h0m.1 30.4h0m0-3.4h0m0-8.7h0m.2-22h0m0 25.2h0m.1-18.6h0m0 16.3h0m.1-18.3h0m.1 27.6h0m0-22.3h0m.1 15.6h0m0 8.3h0m0 4.7h0m.1-42.6h0m.1 5h0m0 27.2h0m.1-43.3h0m0 49.7h0m0-12.8h0m.2-9h0m0 .5h0m.1 11.1h0m0-37.6h0m.1 49.7h0m0-31h0m.1-1.6h0m0 .1h0m.1 17.5h0m.1-3.8h0m0-15h0m.1-3.2h0m0-4.8h0m0 39.2h0m.2-11.8h0m0 .6h0m.1-9.6h0m0 12.2h0m.1-12.4h0m.1 2.1h0m0 8.6h0m.1-15.1h0m0 2.6h0m.2 22.7h0m0-18.9h0m.1-1.3h0m0-21.4h0m.1 17.9h0m.1-7.4h0m0 2.1h0m.1-5.4h0m0 31.1h0m.1-28.7h0m.1-26.1h0m0 40.8h0m0-24.3h0m.1 13.9h0m0-17.2h0m.1 17.1h0m.1-25.7h0m0 37.5h0m.1 7h0m0-31h0m.1 41h0m.1-39h0m0 28.4h0m.1 14.4h0m.1-6.7h0m.1-7.1h0m.1-17.7h0m0-1.2h0m.1 25.3h0m.1 4.7h0m0-9.4h0m.1-17h0m0-15.7h0m.1 22.4h0m.1-40.2h0m0 46.5h0m0-30.3h0m0-12.7h0m.2 25.8h0m0 .6h0m0-21.4h0m.2 22.5h0m0-15.5h0m.1 55h0m0-50.5h0m.1-11h0m0-2.8h0m0 8.1h0m.1 28.7h0m.1-13.7h0m.1 4h0m0 3.6h0m.1 14.7h0m0-65.2h0m.1 30.5h0m0 10.9h0m.1 1.3h0m0-1.6h0m.1-3h0m.1 7.2h0m0-9.4h0m.1 8.4h0m.2 13.3h0m0-11.2h0m.1 11.3h0m.1-49.2h0m.1 41h0m0-19.1h0m.1 16.4h0m0-34.8h0m0 5h0m0 39.6h0m.2-7.3h0m0-19.5h0m0 .9h0m0 12.8h0m.1 5.8h0m0-21h0m0-4.2h0m0 18.2h0m.1-12.2h0m.1-5.2h0m0 60.7h0m.1-57.6h0m0-10.8h0m.1 11.3h0m0-15.9h0m.1 17h0m0 17.8h0m0 11.1h0m.2-23.4h0m0-15.4h0m.1 23.6h0m0-21.4h0m.1-6.2h0m.1 26h0m0-23.1h0m.1 29.3h0m0-17.9h0m.1-15.8h0m0-15.9h0m.1 38.7h0m0-5.9h0m0 24.3h0m.1-35.9h0m0 28.5h0m0-47.3h0m.2 44.2h0m.1-15.7h0m0-14.2h0m0 23.8h0m.1-28.9h0m0 15.7h0m.1 29.5h0m0-24.9h0m.1 20h0m0-21.8h0m.1 27.2h0m.1-45.9h0m0 41.6h0m.1-33.8h0m0 59.7h0m.1-31.3h0m.2-27.3h0m.1 18.4h0m.1 3.3h0m.1 12.5h0m.2-42.8h0m0-5.2h0m.2 19.1h0m0-5.1h0m.1 9.4h0m0 .7h0m0-.4h0m.2-21.5h0m.2 10.9h0m0-17.1h0m.1 25.6h0m0 0h0m0 2.8h0m.1 7.6h0m.1-18.9h0m0 4.3h0m0-10.7h0m.1 2.3h0m0 2h0m0 8.8h0m.1 30.9h0m.1-40.8h0m0-7.6h0m.1-.8h0m0 28.7h0m0-10.1h0m.1-6.7h0m0-4.4h0m0 4.3h0m.1-18.5h0m.1 28.3h0m.1 10.9h0m0-14.6h0m0-9.7h0m0 23.1h0m.1-18h0m.2-3.4h0m0 14.4h0m0-20.1h0m.1 3.3h0m.1 13.3h0m0-.7h0m0 3.8h0m.1-14.4h0m.1 16.2h0m.1-14.7h0m0 8.9h0m0-3.1h0m.1 .9h0m0-.8h0m.2 27h0m0-37.2h0m0 2h0m.1 38.6h0m.1-20.4h0m.1 18.5h0m0-43.3h0m0 52.8h0m.1-26.6h0m0-12.7h0m.1 10.2h0m.1 14.2h0m0 10.9h0m.1 2.6h0m.1-56.4h0m.1 19.7h0m0 8.2h0m0 5.1h0m.1-4.1h0m.1-4.7h0m0-26.5h0m.1 50.8h0m0-1.9h0m.1-32.8h0m0-9.9h0m0 49.2h0m.1-28.1h0m0-20.4h0m0 5.1h0m0-3.4h0m.1 5.7h0m0 21.3h0m.1-8.1h0m0 27h0m.1-23.8h0m0-3.3h0m0 6.5h0m.1-6.8h0m0 4.5h0m0 44.2h0m0-25.6h0m.1-9.7h0m.1-9.4h0m0-4.3h0m0 27.4h0m.1-22.5h0m0 31.5h0m.1-45.6h0m0 46h0m.1-48.6h0m0 .2h0m0 6.8h0m0 34.1h0m.1-4.9h0m0-10.5h0m.1-1.8h0m.1-9.8h0m0 4.3h0m.1 31.5h0m0-19.3h0m.1 4.1h0m.1-.5h0m0-21.8h0m0-4.7h0m0 52.8h0m0-49.7h0m.1 12.9h0m0-16.2h0m0 4.7h0m.1 8.4h0m.1 11.8h0m0-11.7h0m.1 36.4h0m0-24.3h0m.1-.5h0m.1 21.5h0m0 3.9h0m.1-30.1h0m0-5h0m.1 27.6h0m.1 4.2h0m.1-19.2h0m.1-1.9h0m0-37.7h0m0 40.9h0m.1-13h0m0-9.1h0m.1 13.1h0m.1 23.1h0m0-15.8h0m.1 21.4h0m0 2h0m.1-12.9h0m.1-15.5h0m0-6.2h0m.1 39.7h0m0-32h0m.1 33.4h0m0-12.9h0m.1 9.1h0m.1-49.3h0m0 39.8h0m.3 5.4h0m0-10.4h0m.1 .8h0m.1 15.5h0m0-6.3h0m.1-2.5h0m0-13.3h0m.2 3.7h0m0 19.7h0m.1-6.8h0m0 29.8h0m0-29.5h0m.1-5.6h0m.1 7.5h0m.1-3.7h0m0 31.1h0m.1-46.3h0m.1-14.1h0m0 50.2h0m.1-32.7h0m.1 17.2h0m0 1.7h0m.1-23.4h0m0 28.2h0m.1-3h0m.1-37.5h0m0 28.5h0m.1-21.7h0m.1 12.1h0m0 13.7h0m0-2.9h0m.1-28.2h0m0-2.8h0m0 40.7h0m.1-4.3h0m0-17.2h0m0 13.2h0m0 10.3h0m.2-26.6h0m0 20.5h0m0 16h0m.1-9.3h0m0-39.3h0m.2 22.2h0m0 28.8h0m.1-17.3h0m0 11.6h0m0-27.9h0m.2 .5h0m0 15.3h0m0 4.5h0m.1 11.2h0m0-14.3h0m0-2.9h0m.1-30.1h0m.1 31.1h0m0-30.9h0m0 31.9h0m.2-9.4h0m0 14.9h0m.1-42.6h0m0 30.1h0m.1 19.5h0m0-48.3h0m.1 56.2h0m0-25.9h0m0 10.3h0m0-12.7h0m0 9.4h0m0-14.2h0m.1 21.1h0m.1-37.6h0m0 27.3h0m0 11.1h0m.1-20.2h0m.1 18.6h0m0 6.8h0" stroke="#000" fill="none" stroke-linecap="round" stroke-width="3.6"/>
<path d="M327.6 537.8h0m0 11.4h0m.1 5.8h0m0-13.5h0m.1 10.8h0m.1-36.8h0m0-8.3h0m.1 59.3h0m0-21.9h0m0-3.2h0m0 33.7h0m.1-5.4h0m0-34.5h0m0 7.9h0m.1 4.3h0m.1-34.5h0m0 53.2h0m0-11.8h0m0-20h0m.1 9.3h0m0-34.3h0m.1 35.1h0m0 3.5h0m0 2.8h0m.1 27.5h0m0-31.1h0m.1 2h0m0-14.7h0m0 14.6h0m.1-4.8h0m0 6.5h0m0-.3h0m.1-3.6h0m0 5.3h0m.1-7.2h0m0 .3h0m0-.4h0m.1 1.4h0m0-1.2h0m0 16h0m.1-27.3h0m0 26.3h0m0-32.7h0m.2 11.4h0m.1 7.6h0m0 6.5h0m0-23.8h0m.1-10.1h0m.1 6.4h0m.1-6.8h0m0 28h0m.1-21.6h0m.1 32.3h0m.1-50.6h0m0 8.3h0m.1 18.7h0m.2 16.5h0m0-21.9h0m0 26.4h0m0-24h0m.1 22.2h0m0-59h0m.1 22.3h0m.1 .4h0m0-2.8h0m.1 10.4h0m0 11.3h0m.1-5.2h0m.1-6.1h0m0-6.3h0m.1 22.1h0m.1-23.1h0m0 5.8h0m.1 9.3h0m0-21.6h0m.1-29.1h0m.1 44.3h0m0-7.6h0m.1-2.9h0m.1-9h0m.1 10.7h0m0 38.9h0m0 2.1h0m.1-4.3h0m0-10.7h0m.1-24.9h0m.1 7.8h0m0 .8h0m.1 10.6h0m0 2.2h0m.1-22.3h0m.1 10.5h0m0-20.9h0m.1 23.4h0m0-20.5h0m.1 44h0m.1-79h0m0 64.4h0m.1-11.8h0m0 5.3h0m.1 5.2h0m.1-22.1h0m0 16.6h0m.1-10.1h0m0 1h0m.1-21.8h0m.1 9h0m0 9.6h0m.1 4h0m0-14.6h0m.1 29.8h0m.1-3.5h0m0-27.7h0m.1-3.2h0m0-.8h0m.1 4h0m.1 20.7h0m0-17.6h0m.1 13.3h0m0 2h0m.1 14.4h0m.1-20.3h0m0-12.3h0m.1 16.1h0m.1-10h0m0-5.4h0m.1 29.4h0m0-19.9h0m.1-12.4h0m.1 33.1h0m0-3.9h0m.1-18.4h0m0 18.6h0m.1-11.8h0m.1 4.6h0m0-7.9h0m.1-13.9h0m0 35h0m.1-34.7h0m.1-4h0m0 19.2h0m.1 22h0m0-51.7h0m0 43.9h0m.1-3.1h0m.1-16.6h0m0-13.4h0m.1 21.6h0m0-9.3h0m.1 25.6h0m.1-21.2h0m0 4h0m.1-32.1h0m0 45.6h0m.2-17.8h0m0 3.3h0m.1 9.7h0m0 3.7h0m.1 1.5h0m.1-9.5h0m0 3.9h0m.1 4.5h0m0 7.4h0m.1-2.3h0m.1-32.5h0m0-9.2h0m.1 12.4h0m0 14h0m.1-8.5h0m.1 3.3h0m0 14.9h0m.1-22.4h0m.1-6h0m.1-6.2h0m0 34.1h0m.1-2.5h0m.1-21.5h0m0-17.5h0m0 26.1h0m.1 7.8h0m0 8.4h0m.1-38.7h0m.1 21.9h0m0-23.4h0m0 18.1h0m.1-10.8h0m0-9h0m.1 15.6h0m.1 .7h0m0-16.7h0m.1 33.4h0m0-9.5h0m.2 19.3h0m0-16.4h0m0-19.5h0m.1 2.8h0m0 34.2h0m.1-.8h0m.1-50h0m0 20.2h0m.1-1.5h0m0-20.8h0m0 13.4h0m.1 3.1h0m.1 32.2h0m.1-30.6h0m0-5.1h0m0-12.1h0m.2 20.9h0m0-10.2h0m0 32.7h0m.1-17.4h0m.1-17.5h0m0 17h0m0-24.6h0m.1 42.4h0m0-36h0m.1 7.7h0m0 26.4h0m.1 17.2h0m.1-37.8h0m0 0h0m.1-3.7h0m0 3.1h0m0-4.7h0m0-7.7h0m0-1.5h0m0 40.2h0m.1-35.2h0m0 27.6h0m.1-28.4h0m0 14h0m.1-22h0m.1-11.2h0m0 22.3h0m0 15.9h0m0-15.2h0m.1 9h0m0-7.5h0m0 13.4h0m.1-20.3h0m.1 27.2h0m0-34.4h0m0 8.7h0m.1 19.8h0m0-33.9h0m0 20.6h0m.1-15.7h0m0 33h0m.1-23.6h0m0-7.6h0m0 11.2h0m0 1.7h0m.1 23h0m0-26.8h0m.1-2.2h0m0-.9h0m.1-11.5h0m0 34.2h0m.1-23h0m.1 35h0m0-28.7h0m.1-3.1h0m0-7.8h0m0 18h0m.1-30.6h0m0 21.4h0m0-.1h0m.1-14.8h0m0 10.8h0m.1 10.7h0m0-14.5h0m0 5.6h0m.1 25.6h0m0-25.5h0m.1 4.2h0m0-12h0m.1 50.3h0m0-42.7h0m0-2.8h0m.1 18.8h0m0-23.3h0m0 13.1h0m0-1.7h0m.1-2.7h0m0 4.9h0m0-3.9h0m.1-4.4h0m.1 5.1h0m0 5.9h0m.1-22.1h0m0 37.8h0m.1-18.9h0m0-4.3h0m0 1.7h0m0-4.2h0m.1 7.7h0m0 13.8h0m.1 14.7h0m.1-16.6h0m0-25.2h0m.1 17.3h0m0 8.4h0m.1 31.7h0m.1-5.3h0m0-48.2h0m0 4.8h0m.1 26.6h0m0-31h0m.1-3.8h0m0 27h0m.1 2.3h0m0 37.6h0m.1-49.5h0m.1-9.3h0m0 5.4h0m.1-9.3h0m.1 12.3h0m.1 27.5h0m0-39.5h0m.1 29h0m0-7.6h0m.1 16.6h0m.1-4h0m0-23.9h0m.1 23.3h0m0-55.4h0m.1 1h0m.1 58h0m0-4.1h0m.1-9.9h0m0-14h0m.1 7.6h0m.1 16.8h0m0 15.1h0m.1-11.5h0m0-30.9h0m0 30.2h0m.1-33.1h0m.1 39.4h0m.1-24.5h0m0-5.2h0m.2-26.1h0m.2 30.1h0m.1 2.8h0m.1-9.1h0m0 53.6h0m.1-32.6h0m.1-2.9h0m0-17.4h0m.1 26.5h0m.1-26.2h0m0 27.2h0m.1 2.4h0m0 10.5h0m.1-5.6h0m0-38.2h0m.1 11.5h0m0 7.7h0m.1 16.4h0m0-38.7h0m.1 41.4h0m.1 3.5h0m0-41.4h0m.1 40.8h0m0-3.8h0m.1 2.2h0m.1-24.4h0m0-5.3h0m.1-12.2h0m0 20.6h0m.1 1.7h0m.1 23.2h0m0-30.6h0m.1 .9h0m0 6.8h0m.2-7.7h0m.1 3.3h0m.1-.9h0m.1 6.7h0m.1-28.1h0m.2 12.9h0m.1 1.1h0m0 3.8h0m.1-2.4h0m.1 11.1h0m.1 5h0m.2 18.1h0m.1-38.9h0m0 2.7h0m.1-2.7h0m.1 20.9h0m0-13.8h0m.1 14.1h0m.1-9.1h0m0-.4h0m.1 6.7h0m0 4.5h0m.1 31.7h0m.1-36.8h0m0-23h0m.1 27.6h0m0-7.5h0m.1-14.7h0m.1 15.3h0m0 4h0m.1 15.3h0m0-15.2h0m.1-28.1h0m.1 8.5h0m.1 40.5h0m0-18.8h0m.1 14.1h0m.1-32.4h0m0 3.5h0m.1 27.5h0m0-32.4h0m.1 44h0m.1-20.9h0m0-1.6h0m.1 7.1h0m0-29.5h0m.1-6.7h0m0 52.8h0m.1-28.2h0m0 14.4h0m.1-16.3h0m0-.5h0m.1 4.7h0m.1-16.1h0m0 26.7h0m.1-11.9h0m0-3.7h0m.1 16.7h0m.1 7.4h0m0-19.2h0m.1-34.7h0m0 50.9h0m0 3.6h0m.1-17.5h0m.1-5.4h0m0 17.6h0m.1 9.4h0m.1-6h0m0-10.8h0m.1-31.8h0m0-8.8h0m0 52.4h0m.1-23.3h0m.1 36.4h0m0-19h0m.1 19.9h0m0-55.1h0m.1 17.9h0m.1 26.7h0m0-7.1h0m0-30.9h0m.1 47.9h0m0-15.8h0m0 .2h0m0 9.3h0m.1-33h0m.1 15.1h0m0-2.3h0m.1 4.9h0m0 14.8h0m.1-4.1h0m.1-9.8h0m0 15.2h0m0-32.9h0m.1 21.8h0m0-13.1h0m0-.4h0m.1 17.9h0m0 26.8h0m.1-65.4h0m.1 45.5h0m.1-43.4h0m.1 23.4h0m0-2.8h0m.1 19.2h0m.1-.9h0m0 1.3h0m.1-16.4h0m0-2.9h0m.1-13.7h0m0-18.8h0m.1 51.4h0m0 10.4h0m0-.7h0m.1-11.5h0m.1-22.3h0m0 11.2h0m.1 23.5h0m0-16h0m.1 12.9h0m0-3.5h0m.1 16.1h0m.1-30.2h0m.1-13.6h0m0 18.8h0m0 1.9h0m0-2h0m.1-16.5h0m0 24.8h0m.1-17.4h0m0 22.3h0m0-16.2h0m.1-.3h0m0-11.4h0m0-17.3h0m.1 30.9h0m.1 .4h0m0 27.7h0m.1-27h0m0-9.6h0m.1 17.4h0m.1-.4h0m0 8.9h0m0-17.2h0m.1 19.1h0m0-18h0m0 6.2h0m.1 12.6h0m0-18.8h0m.1 5.3h0m0 21.2h0m0-23.9h0m0-9h0m0 12h0m0 10.7h0m.1-28.3h0m0 32.8h0m0-18.8h0m0 14.6h0m0-11.1h0m.1 8.7h0m.1-9.6h0m0-7.9h0m0 11.4h0m.1-14.6h0m.1-.8h0m0-45.5h0m0 49.2h0m0 17.8h0m.1-.5h0m0-13.8h0m.1-18.1h0m0-5h0m.1 31.6h0m0-8.2h0m.1-4.9h0m0 4.5h0m.1-13h0m0 4.1h0m.1 9.2h0m0-2.6h0m.1-21.2h0m.1 27.9h0m0-5.3h0m0-.5h0m.1 19.9h0m.1-51.4h0m0 28.6h0m0 12.4h0m.1-4.3h0m0 1.1h0m.1 2h0m0 5.3h0m.1-66.1h0m0 9.7h0m.1 43.7h0m0 .2h0m.1-11h0m0-6.5h0m0 17.8h0m.1-13.2h0m0-.9h0m.1-14.5h0m.1 31.8h0m0-6.5h0m.1-8.5h0m.1-12.3h0m.1 18.8h0m.2-53.6h0m.2 76.6h0m0-3.4h0m.1-55.7h0m0-10.1h0m.1 39h0m0-16.3h0m.1-14.8h0m.2-7.2h0m.1 3.9h0m0 22.6h0m.1 35.5h0m.1-24h0m0-13.5h0m.1-21.5h0m.1 22.4h0m.1 3.7h0m.1 3.7h0m0-26h0m0 15h0m.1-19.7h0m.1 55.6h0m0-10.1h0m0-46.6h0m.1 35.1h0m.1 31.7h0m.1-42.1h0m0-16.5h0m.1 24.5h0m0-30.9h0m.1 46.3h0m0 9.8h0m.1-42.3h0m.1-2.7h0m.1-19.4h0m0-3.8h0m0 7.7h0m.1-5.6h0m0 31.7h0m.1-23.5h0m0 3.7h0m0-15.8h0m0 45.9h0m.1-24h0m.1 6.6h0m0 9.5h0m.1-14.9h0m.1-21.9h0m0 22.7h0m.1-1.5h0m.1-10.4h0m0 5.8h0m.1 4.1h0m0-.5h0m.1 5.8h0m0-11.4h0m0 3.7h0m.1-22.4h0m0 21.2h0m0 0h0m.1 19h0m.1-29.1h0m0 5.6h0m0 11.8h0m.1 9.3h0m.1-29h0m0 52.9h0m0-61.5h0m0 29.4h0m.1-13.1h0m0-18.2h0m0 33.1h0m0-10.6h0m.1-3.3h0m.1-23.6h0m.1 22h0m0-12.3h0m0 19.9h0m0-12.8h0m.1 1.2h0m0 4.1h0m.1 32.9h0m0-36.7h0m.1 7.7h0m0-4.7h0m.1-.8h0m0-8.9h0m0-5.1h0m.1 .5h0m0 16.2h0m0 4.1h0m.2-25.8h0m0 20.4h0m.1 5.8h0m0-23.6h0m0 22.3h0m.1-23.9h0m0 20.3h0m.1 20.5h0m0-36.6h0m0 4.9h0m0-7.6h0m0 16.6h0m0-21.6h0m.3 18.1h0m.1 56.6h0m0-73.5h0m.1 43.6h0m0-25.6h0m.1 5.3h0m0-.7h0m0 .4h0m0-14.9h0m.1 13.6h0m0-9h0m0 21.3h0m.1-9.4h0m.1 24.2h0m0-22h0m0-9.2h0m.1-14.1h0m0 30.4h0m.1-10.2h0m.1 9.4h0m.1-10.7h0m0-6h0m.1 6.2h0m0 10h0m.2-8h0m0 7.8h0m0-8.1h0m0-5.9h0m0 7.5h0m.1-2.3h0m0 19.3h0m.1-15.5h0m.1 26.1h0m0-44.2h0m0-5.6h0m.1 15.3h0m.1 16.7h0m.1 8h0m0-33.6h0m0 10.6h0m0 12.3h0m.1 20.6h0m.1-16.6h0m0 20.5h0m.1-7.4h0m0-27.3h0m0 47.3h0m.2-31.3h0m0 15.8h0m.1-11.9h0m.1-1.6h0m0-15.5h0m.1 .8h0m0 9.7h0m.1 20.5h0m.1-30.8h0m0 10.3h0m.1 16.1h0m.1-47.7h0m.1 29.2h0m0 12.9h0m.1 4.3h0m0-35.1h0m.2 63.2h0m0-20.7h0m.1 1.9h0m.2-29.7h0m0 10.8h0m.1-15.9h0m0-3.1h0m0 48.1h0m.2-25.5h0m0-2.1h0m.1 17.1h0m0-25h0m.1-3.4h0m.1 28h0m0-39.1h0m0 22.6h0m.1-14h0m0 27.4h0m.1-9.3h0m.1 7.8h0m0-31.9h0m0 3.6h0m.1 35.6h0m0-53h0m0 23.1h0m.1 22.2h0m.1-18.5h0m0 25.9h0m.1-2.2h0m0-46.4h0m0 45.6h0m.1-39.1h0m.1 53h0m0-14.2h0m.1 1h0m0-25.1h0m.1 8.9h0m.1 34.5h0m0-47.8h0m.1 5.5h0m.1 24.8h0m0 6h0m.1-4.2h0m0-7.1h0m.1-2.2h0m.1-13.8h0m0 3.6h0m.1-1.1h0m0 40.8h0m.1-28h0m.1-3.9h0m0 21.2h0m.1-6.1h0m0-13h0m.2-9.4h0m0-9.5h0m.1 5.7h0m0-31.7h0m.1 29.6h0m.1 3.4h0m0 30.9h0m.1-21h0m0-13.6h0m0 31.7h0m.1-4.3h0m.1-11.8h0m0 31.5h0m.1-29.3h0m0 2.4h0m.1 5.6h0m.1-27.2h0m0 47.1h0m0-30.1h0m.1 10.1h0m0-31.7h0m.1 26.5h0m0 22.9h0m.1-9.6h0m0-21h0m0-9.4h0m0 36.5h0m.1-33.7h0m0 27.5h0m0-.7h0m.1-3.3h0m0 9.4h0m.1-8h0m.1 2.3h0m0-10.5h0m0 9.5h0m0-13.8h0m.1 24.6h0m.1-72.4h0m0 63.1h0m0 10.2h0m.1-18.6h0m.1 4.2h0m0 15.2h0m.1-21.1h0m0 16h0m0-25.3h0m.1-22h0m.1 28.7h0m0 13.6h0m.1-1.2h0m0 1.7h0m0-3.6h0m.1-.8h0m0 22.2h0m.1 3.6h0m0-29.9h0m.1 29.8h0m0-3.4h0m0-23.8h0m.1 14.2h0m0 16.2h0m0-26.3h0m.1-.6h0m0-39.2h0m.1 51.1h0m0-2.9h0m.1-11.2h0m0 3.1h0m.1 4.4h0m0-29.2h0m.1 54.8h0m0-50.2h0m.2 27.8h0m0-17.6h0m0 20.5h0m.1-15.8h0m0 20.4h0m.1 13.3h0m0-30.1h0m0 23.5h0m.1-24.3h0m.1 21h0m0-27.6h0m.1 27.1h0m0-6.3h0m.1 3.9h0m0-13.7h0m0 .4h0m0 2.9h0m.2-56.4h0m.1 78.5h0m.1-34.6h0m0 16.2h0m.1-4.4h0m.1 20.3h0m0-18.5h0m0-22.7h0m.1 2.7h0m0 34.1h0m.2-55.3h0m.2 63.9h0m.1-25.6h0m0-14.9h0m0 14.3h0m.1-40h0m0 57.8h0m.1-51.1h0m0 46h0m.1-10.3h0m0-1.6h0m0-35.3h0m.1 27.2h0m0 18.2h0m.1-48h0m0 42.3h0m0 8.5h0m0-45.5h0m.1 8.7h0m0 21.6h0m0-60.2h0m.1 37.7h0m.1 21.9h0m0-13.3h0m.1-6.5h0m0 28.2h0m.1-41.5h0m.1 28.3h0m0-19.3h0m.1 1.1h0m0 26.2h0m0-20.8h0m.1 31.9h0m.1-8.2h0m0-18.9h0m.1 1.1h0m.1 14.7h0m0 5.4h0m0-3.4h0m.1-24.1h0m.1 29.8h0m0 5.8h0m.2-19.2h0m0 22.7h0m.1-19.1h0m.2-15.8h0m.1 2.8h0m0 12.8h0m0 14.4h0m0-22.2h0m.1 13.8h0m0-23.8h0m.1-28.7h0m.1 33.8h0m0 14.3h0m.1-33.2h0m.1 25.5h0m0-6.2h0m.2 12.4h0m0 20.4h0m0-50.3h0m.1-7h0m0-32.4h0m.1 78.6h0m.1-44.2h0m0 11.2h0m.1 .2h0m0 16.8h0m.1 12.7h0m.1-22.2h0m.1-17.9h0m0-7.8h0m.1 39.7h0m.1-29.5h0m.1-5.8h0m0-4.9h0m.1 7h0m.1 24.1h0m.1-38.7h0m0 10h0m.1 5.7h0m.1 15.7h0m0-22h0m.1-1.9h0m0 .4h0m.1-5.6h0m0 22.2h0m.1 37.2h0m0-47.9h0m0-25.8h0m.1 45.3h0m0-12.9h0m.1-2.8h0m.1-5.3h0m0 16.7h0m.1-10.3h0m0-26.2h0m0 44.9h0m.1-48.1h0m0 52.2h0m0-38.4h0m0 1.1h0m.1 25.7h0m.1-36.9h0m0 27.2h0m.1-35.8h0m0 30.4h0m.1-7h0m0 21.5h0m.1-32h0m0 15.8h0m.2 24.9h0m0-23h0m.1 17.5h0m.1-13.2h0m.1 8h0m.1-31.5h0m0-5.1h0m.1 40.6h0m0 12.9h0m0-47.5h0m.1 24.2h0m0-38.5h0m.1 60.6h0m0-61.1h0m.1 35.9h0m0-25.1h0m0 39.6h0m0-33.7h0m.1 18.9h0m0-.6h0m.1-40h0m.1 56.6h0m.1-27.1h0m0 25.3h0m.1-41.3h0m.1 15.2h0m0-14.2h0m0 .4h0m0-7h0m0 41.6h0m.1-51.3h0m0 3.8h0m0 36.2h0m.1 5.9h0m.1-30.9h0m0 8.7h0m.1-12.9h0m0 35.2h0m.1 6.9h0m.1-19.4h0m0-14.1h0m.1 .9h0m0 12.7h0m.3 25.4h0m.1-45.6h0m0 6h0m0 14.4h0m.1 2.3h0m0-17.9h0m0-17.3h0m0 30.8h0m.1-21.3h0m.1 18.1h0m0-6.2h0m0-9h0m0-1.2h0m.1 27.5h0m0-27.7h0m0 2.8h0m.2 11.8h0m.1-14.2h0m0-5.8h0m.1 15.5h0m0-7.7h0m.1 19.4h0m.1-22.2h0m0 28.5h0m.1-11.9h0m0-5.5h0m0-6.9h0m.1 28.5h0m.1-18h0m0-2.9h0m0-.9h0m.1 30.2h0m.1 6.6h0m.1-27.9h0m.1-6.2h0m.1-11.6h0m0 43.9h0m0-32.6h0m.1 10h0m0 7.3h0m.1-1.5h0m.1-37.9h0m.1 31.6h0m0-5.7h0m0 21.8h0m.1-30.6h0m0 20h0m0-9.7h0m.1 5.6h0m0 .1h0m.1-20.3h0m0 .8h0m0 21.1h0m.1 30.8h0m.1-47.6h0m0 7.8h0m0-10h0m.1 1.3h0m.1 1.1h0m.1 .7h0m0-14.2h0m0 33.8h0m.1 27.8h0m0-16h0m.1-25.4h0m.1 4.7h0m0 14.6h0m.2 39.2h0m.1-38.1h0m0-1.4h0m.2 3.3h0m.1 .3h0m0-21.5h0m.1 25.7h0m.1-32.2h0m.1 25h0m0 14.1h0m.1-8h0m.1-11.6h0m.1 28.3h0m.1-14.6h0m.1 1.1h0m0 13.6h0m.1-18.7h0m0 22.8h0m.1-26.8h0m.1-.8h0m0 27.3h0m.1-51.2h0m.1 1.4h0m.1 27.7h0m0-25.6h0m.1 34.4h0m0-22h0m.1 15.4h0m.1-24.1h0m0-8.1h0m.2 32.5h0m.1-5.2h0m0 22.3h0m.1-54.3h0m.1 34.1h0m.1 10.3h0m0-6.6h0m.1 2h0m.1-1.1h0m.1-6.8h0m.1 9.9h0m.1 19h0m0-16.5h0m.1-25.9h0m0-28.8h0m.1 58.5h0m.1 22.3h0m0-26.4h0m.1-13.4h0m0-41.3h0m.1 47.6h0m.1 4.6h0m0-1.7h0m.1 .3h0m0 .7h0m.1 .6h0m.1-10h0m0 7.4h0m.1-17.7h0m0 17.8h0m.1-6h0m.1-13.4h0m0 31.7h0m.1-8.6h0m0-12.3h0m.1 15.4h0m.1 10.6h0m0-31.1h0m.1 22.9h0m0 6.5h0m.1-34.5h0m.1 4.6h0m0 8.8h0m.1-24.5h0m0 55.3h0m0-44.6h0m.1 17.9h0m.1-8.5h0m.2 4.7h0m.1 16h0m.1-12.9h0m0 20.1h0m.1-15.9h0m0 26.8h0m.1-28.9h0m0 15.8h0m.1-10.7h0m0 28.8h0m0-35.4h0m.1-26.8h0m.1 53.2h0m0-17.5h0m.1 11h0m.1 1.5h0m0 9.2h0m.1-10.6h0m0-9.6h0m.1-18.2h0m.1 13.6h0m0 28.3h0m0-21.6h0m.1-6h0m0 29.1h0m0-25.9h0m.1 22h0m0-15.1h0m.1-3h0m0 6.7h0m.1 2h0m.1-46h0m.1 51.2h0m0-56.2h0m.1 56.4h0m.1 1.6h0m0-12.3h0m0-23.8h0m0 40.9h0m.1-14.4h0m0 8.8h0m.1-28.5h0m0 8.9h0m.1 7.8h0m0-16.6h0m.1 31.4h0m0-3.4h0m0-.1h0m0-2.5h0m.1-2.2h0m0 1.6h0m0 6.2h0m.1-12.5h0m0 .5h0m.1-14.1h0m0 27h0m.1 3.9h0m0 9.3h0m.1-47.5h0m.1 24.1h0m0 10h0m0-19.4h0m0 23.2h0m0-21.3h0m0 5.2h0m.1 25.2h0m0-15.1h0m0-10.6h0m0-22.7h0m.1 20.9h0m0 2.7h0m.1 8.9h0m0-7h0m0-8h0m.1-5.1h0m0 18.6h0m0 14.4h0m.1 .8h0m0-25.5h0m0 22.1h0m.1-13h0m0-29.9h0m.1 50.8h0m.1-26.1h0m0-2.4h0m.1-.4h0m0 2.1h0m0-3.3h0m0-11.1h0m.1-17.1h0m0 29.6h0m.1 .8h0m0 3.7h0m.1-15.4h0m0 11.1h0m0-23.2h0m.1-4.7h0m.1 5.5h0m0 21.4h0m0 17.1h0m0-26.6h0m.1 12.4h0m0 13.1h0m0-54.8h0m0 47.9h0m.1 5.7h0m0-23.9h0m.1-23.2h0m0 31.2h0m0-7.9h0m.1-2h0m.1-9.1h0m.1 21.4h0m.1 .9h0m0 9.8h0m0-25.3h0m.1 15h0m.1-20.9h0m0 2.7h0m0 21.5h0m.1-6h0m0 15.3h0m0-3.7h0m.1-31.1h0m.1-27.5h0m.1 26.4h0m0 28.6h0m0 12.8h0m.1-18.6h0m0-8.6h0m.1-11.5h0m0 38.1h0m.1-81.8h0m0 37h0m.1 5.3h0m0 20.9h0m.1-43.4h0m0 52.3h0m0-13.6h0m.1 12.4h0m.1-41.7h0m.1 34.8h0m0-40.4h0m.1 35.9h0m0 6.7h0m0-12.1h0m.1-6.6h0m.1-3.5h0m.1-15.1h0m.1 16.9h0m0 20.3h0m.1-23.3h0m0 34.8h0m0-30.5h0m.1-26.9h0m.1 35.8h0m0 1.9h0m.1-13.7h0m0-2.5h0m.2 8.3h0m.1-15.3h0m.1-15.5h0m.1 31.3h0m0-4.4h0m.1 13.5h0m0 4.5h0m.1-45.7h0m.1 55.8h0m.1-15.5h0m0-12.9h0m.1-10.5h0m.1 15.9h0m0 21.8h0m.1-27.2h0m0 9.8h0m.1 10.1h0m.1 22.5h0m0-47.1h0m.1 2.9h0m0 12.6h0m.1-41.5h0m.1 31.1h0m0 2.9h0m.1 2.5h0m0-29.5h0m.1 19.2h0m.1-17.8h0m0-2h0m.1 5.1h0m0 32.7h0m.1-14.8h0m.1 4.2h0m0-8.6h0m.1-39.7h0m.1 45.1h0m.1-3.9h0m.2 29.2h0m0-49.3h0m.1 17.6h0m.1-19.6h0m.1 28.7h0m.1 8h0m0-18.1h0m.3 24.4h0m0-16.6h0m.1-32.2h0m.1 38.7h0m0-23.1h0m.1-5.4h0m.1-11.3h0m0 71.4h0m.1-35h0m0-9.7h0m.1-34.8h0m0 35.7h0m.1 13.9h0m.1-11.3h0m0-22.8h0m0 11.1h0m.1-14.9h0m0 7.9h0m.1 41.1h0m.1-25.5h0m0-23.7h0m0 24.7h0m.1-10.5h0m0 2.8h0m.1 28.2h0m.1-18h0m0 8.3h0m.1-46.1h0m0 16h0m0 10.1h0m.1-11.7h0m0 22.9h0m.1 16.2h0m0-17.4h0m.1-.6h0m.2 3.5h0m.1-33.1h0m.1 37.4h0m0-38.4h0m0 38.2h0m.1-56.9h0m0 46.8h0m.1 18.1h0m.2-4.8h0m.2-10.5h0m0-7.4h0m.1 30.3h0m0-57.9h0m0 43.8h0m.1-28.4h0m.1 7.1h0m0-21h0m.1 15.5h0m.1 34.1h0m0-39.7h0m.1 34.9h0m.1-31.8h0m0 21.2h0m.2-29.3h0m0 37.4h0m0-33.8h0m.1 3.8h0m0 .6h0m0 26.7h0m0-30.2h0m.1-8.7h0m.1 16.9h0m.1-20.8h0m0 1.7h0m0-5.4h0m0 25.4h0m.1-11.9h0m0 2.9h0m.1 .3h0m.1 6.6h0m.2 18.5h0m0-54.9h0m0 43.8h0m.1-13.7h0m0-2.1h0m0-11.7h0m0 9.8h0m.1-1.1h0m0-15.4h0m.1 55.7h0m0-48.9h0m.1 32.9h0m.1-45.2h0m0 4.2h0m0 16.1h0m.1 26.3h0m0-25h0m0 7.1h0" stroke="#000" fill="none" stroke-linecap="round" stroke-width="3.6"/>
<path d="M410.9 497.7h0m0-13.7h0m0 27.5h0m0-12.4h0m.1-31.1h0m0 21.5h0m.1 7h0m.1-9.7h0m0 17.5h0m.1-8.2h0m0 17h0m0 44h0m0-66h0m.1 8.3h0m0-5.8h0m.1 40.6h0m0-49.6h0m0 12.2h0m0 1.5h0m.1 .6h0m0-15.1h0m.1 9.1h0m0-4.4h0m0-10.3h0m0 8.1h0m0 12.4h0m.1-19.9h0m0 38.8h0m.1 25.8h0m.1-60.2h0m.1 19.5h0m0-35h0m0 30.9h0m0 17.5h0m.1-21.5h0m.1 17.5h0m0-30.2h0m0 15.5h0m.1 49.8h0m0-30.4h0m.1-26.6h0m0 6h0m.1 16.3h0m.1 2h0m0-33.5h0m.1 16.5h0m0-25.9h0m.2 25.8h0m.1-9.6h0m0 5.5h0m.1-6.2h0m0 7.1h0m0 .7h0m.1-7.1h0m0 9.1h0m.1-5.6h0m.1 4.9h0m0-1.8h0m0 2h0m0-31.4h0m.1 36.4h0m.1-6.4h0m0 3.2h0m0-5.9h0m.2 18h0m0-35.4h0m0 8.5h0m.1 14.9h0m0 48.9h0m0-19.2h0m0-37.6h0m.1 31.4h0m.1-15.6h0m.1-9.4h0m.1 49.2h0m0 11.2h0m0-56.2h0m0 64.2h0m.1-29.3h0m.1 24.2h0m.1-35h0m0 17.5h0m.2-15h0m.1 5.2h0m0 6.3h0m0-39.8h0m.1-4.5h0m0 51.3h0m0 17.2h0m.1-19.8h0m0 10.5h0m0-9.7h0m.1 11h0m0-10.7h0m.1 17.7h0m0-41.1h0m0-19.5h0m.2 61h0m0-35.9h0m0 40.2h0m0-47.5h0m.2 36.8h0m.1-12.3h0m0 .1h0m.1 12.3h0m0-6.2h0m.1 21.2h0m0-3.3h0m.1-50.1h0m.2 28.2h0m0 15.7h0m0-44.8h0m.1 32.9h0m0-55.6h0m0 42.1h0m0 10.3h0m0-14.7h0m.1 11.2h0m0-50.1h0m.1 41h0m.1-13.4h0m.1 12.1h0m.1 11h0m0 23.8h0m0-20.6h0m.1-2.3h0m0-12.6h0m.1-22.1h0m.1 52.2h0m0-1.3h0m0-53.4h0m.2 36.8h0m0 7.6h0m0-5.3h0m.1-20.9h0m.1 43.5h0m.1-23.8h0m0 8.4h0m0-52.9h0m.1 12.5h0m0 30.6h0m.2 .7h0m.1-20.6h0m.1 19.3h0m0 3.3h0m0-.1h0m0 23.9h0m.1-10.7h0m0-12h0m0 6.3h0m.1 7.9h0m0-37.4h0m0 32.2h0m.1-5.2h0m.1-40.4h0m.2 38.1h0m0-23.4h0m.1 4.1h0m0 24.7h0m.1-15.2h0m0-29.8h0m.1 .7h0m0 49h0m.1-26.8h0m0 11.4h0m.1-36.7h0m0 25.7h0m.2 10.8h0m0-31.7h0m0 16.9h0m.1-7.9h0m0 38.9h0m0-41.9h0m.1 20.5h0m.1-12.9h0m0 10.1h0m.2 5h0m0-29.6h0m0 34.3h0m.1-22.7h0m0-19.4h0m0 55.7h0m.1-8.5h0m.1-21.8h0m.1 3.8h0m.1-28.5h0m.1-33.2h0m0 48.4h0m.1 13.8h0m.1-2.2h0m.1-20.2h0m0-7.1h0m.1 29.5h0m0-1.5h0m.1-28.7h0m.1 26.5h0m.1-16.7h0m0 20h0m.1-27.4h0m.1 19.8h0m0-23.2h0m.1 28.8h0m0-30.4h0m.1 30.7h0m.1-13.3h0m0 13h0m.1-22.6h0m0 24.8h0m.1-3.1h0m.1-24h0m0 33.9h0m.1-28.2h0m0 7.4h0m.1-1.1h0m.1 14.6h0m0 4h0m.1-30h0m0 32.4h0m.1-28.3h0m.1 21.3h0m0-38.1h0m.1 27h0m0-12.8h0m.1 20.4h0m.1-6.3h0m0 4.4h0m.1 16h0m.1-7.1h0m0-21.8h0m.1 6.3h0m0 5.4h0m.1-12.1h0m.1-8.2h0m0 10.8h0m.1-.2h0m0-2.6h0m.1-2h0m.1-6.9h0m0 32.6h0m.1-13.7h0m0 23.4h0m0 .4h0m.1-56.1h0m.1 45.3h0m0-13.2h0m.1 12.1h0m0-28.1h0m.1 2.7h0m.1 18h0m0-26.4h0m.1 7.2h0m0 11.3h0m.1 32.7h0m.1-14.1h0m0-19.3h0m.1 20.6h0m0-31.6h0m.1 51.6h0m.1-24.1h0m0-27.4h0m.1 20.7h0m0 1.5h0m.1 4.8h0m.1 .1h0m0 23.4h0m.1-38h0m0-21.4h0m.1 22.6h0m.1 18.8h0m0-12.8h0m.1 8h0m0-1.6h0m.1-9.5h0m.1-41.5h0m0 26.6h0m.1 14.2h0m.1-.6h0m0-21h0m.1-1.9h0m0 40.7h0m.1-38.1h0m.1 27.3h0m0-7.8h0m.1 13.7h0m0 7.1h0m.1-23h0m.1-13h0m0 16h0m.1-13.8h0m.2 0h0m0-21.8h0m0 57.8h0m.2-33.2h0m.1 7.9h0m.1 18.7h0m0-11.9h0m.2-32.3h0m0-22.6h0m.1 35.9h0m0 5.6h0m.1-1.3h0m0-19.9h0m.1 6h0m0 38.3h0m.1-2.1h0m0 5.7h0m.2-65.6h0m.1 17.4h0m0 8.8h0m.1 16.6h0m.1 14.4h0m0-18.6h0m.1 26.1h0m0-38.1h0m0-4.4h0m.1-11.9h0m0 31.4h0m.1 6.6h0m0-29.5h0m0 40.1h0m0-31.4h0m.1 7.8h0m0-4.5h0m.1 30.3h0m.1-48.7h0m0 20h0m.1 8.9h0m.1 14h0m0-10.8h0m.1 7.8h0m.1-5h0m.1 8.2h0m0-44.9h0m0 16.2h0m.1-20.8h0m0 42.5h0m0-35.8h0m0 37.4h0m.1-18.3h0m.1-2.3h0m0-9.1h0m0-4.8h0m0 11.8h0m.2 10.5h0m.1-28.6h0m.1 13.7h0m0-7.5h0m0 11.2h0m.1 26.5h0m.1-20.7h0m.1 1.4h0m0-32.9h0m0 10.5h0m.1-13h0m.1 26h0m0 12.2h0m0-21.7h0m.1 13.1h0m.1-31h0m0 9.3h0m.1 30.8h0m0 8.1h0m.1-22.7h0m0-5.9h0m.1 31.8h0m0-48.9h0m0 18.2h0m.1-10.3h0m0 6.4h0m0-7.6h0m0 9.8h0m.1-4.3h0m0 13.3h0m0-1.7h0m.1-.7h0m0-28.1h0m.1 39.9h0m0-20.5h0m.1 17.6h0m0-21.8h0m0-4.8h0m0-4.3h0m0 29.2h0m.1-22.2h0m0-.2h0m.1 13.2h0m0-8.1h0m0-1.4h0m.1 37.9h0m0-49.8h0m0 14h0m.1 22.6h0m.1-11.7h0m0-2.4h0m.1-9.7h0m0 14h0m.2-17.4h0m0 35.7h0m0-19.9h0m.1-2.8h0m0-16.1h0m0-6.5h0m.1 38.3h0m.1-12.2h0m0 3.1h0m0-4.1h0m.1 39.1h0m0-41.5h0m0-.3h0m.1-5.7h0m0 11.6h0m0-17h0m0 3.4h0m.3 15.4h0m.1-25.2h0m0 36.7h0m0 6.2h0m.1-8.8h0m0-26.2h0m0 14.5h0m0-22.4h0m.1 12h0m0 5.6h0m.1 19.8h0m0 7.5h0m.1-1.6h0m.1-22.4h0m.1 21.4h0m0-15.6h0m.1-7.5h0m0-5.3h0m0 29.1h0m.1-14.2h0m0-9.2h0m.1 18.8h0m0-18.6h0m0 33.8h0m.1-30h0m0 44.9h0m.1-20.7h0m0-25h0m0 5.2h0m.1 10.4h0m0-6.9h0m.1 22.3h0m0-44.4h0m.1 13.3h0m0-3.2h0m.1 19h0m0-24.6h0m.1 11.2h0m.1 6.5h0m.1-3.2h0m.1 17h0m0 10.6h0m.1-44.5h0m0 27.6h0m0 9.1h0m.2 5.1h0m0-45.7h0m.1 29.1h0m.1-16.9h0m0-15.6h0m.1 21.1h0m.1 28.4h0m.2 15.5h0m0-17.5h0m.1-2.8h0m0-11.5h0m.1-14.6h0m.1 27.2h0m0-31.3h0m.1 18.6h0m0 18.7h0m.2-11.6h0m.1 14.6h0m0-6h0m.1-29.4h0m0 45.8h0m.1-5.4h0m0-37.3h0m.1 24.3h0m.1 .4h0m.1-25.6h0m.1-12.9h0m0 34.3h0m.1-27.4h0m.1 41.4h0m0-13.7h0m.1-22.1h0m0 19.5h0m.1 3.9h0m.1 24.1h0m0-11.8h0m.1-7.5h0m.1 16h0m0-18.8h0m.1-14.7h0m0 3.3h0m.1 5.5h0m.1-7.6h0m0 26.5h0m.1-31.9h0m0 42.2h0m.1-42.9h0m.1 32.2h0m0-27.7h0m.1 9.3h0m0 10.4h0m.1-7.6h0m.1-3.1h0m0-18.7h0m.1 9.2h0m0 4.3h0m.1 9.7h0m.1-5.2h0m0-10.4h0m.1 5.5h0m0-4.3h0m.1 18.2h0m.1-14.8h0m0-.2h0m.1 8.7h0m0-5.2h0m.1-4.8h0m.1-13h0m0 14.8h0m.1 17.5h0m0 26.6h0m.1-16h0m0-11.2h0m.1-30.1h0m0-19.7h0m.1 35.5h0m0 10.6h0m.1-5h0m.1-4.9h0m0 25.5h0m0-36h0m.1 5.3h0m0-1.4h0m.1 17.3h0m.1-25.8h0m0-3.4h0m.1 33.2h0m0-8.3h0m.1-4.9h0m.1-14.3h0m0 0h0m.1 20.3h0m.1-21.2h0m0 32.5h0m.1-30.4h0m0-9.9h0m.1 14.2h0m.1 4.1h0m0-4.4h0m.1-11.6h0m0 17.3h0m.1 19.6h0m.1-17.7h0m0-7.9h0m.1-11.1h0m0 41.9h0m.1-21.5h0m.1 1.6h0m0 12.3h0m.1-57.3h0m0 35.8h0m.1 5h0m.1-5.6h0m0 10.3h0m.1 11.6h0m0-13.7h0m.1 16.1h0m.1-12.6h0m0 14.6h0m.1-58.2h0m0 66.9h0m0-4.6h0m.1-10.2h0m.1-26.9h0m0 32.5h0m.1-16.8h0m0-17.6h0m.2 8.6h0m0 11.2h0m.3 3.4h0m.1-12.8h0m0 41.5h0m0-64.8h0m.1 27.5h0m.1 10.2h0m0-10.5h0m.2 11.7h0m.1 13.4h0m0 8.3h0m.1-16.3h0m.1-.1h0m0-38.6h0m0 51.8h0m.1-22.1h0m0 29.5h0m.1-7.8h0m.1-13.3h0m0-6.1h0m.1 11.1h0m0 5.9h0m.1 24.4h0m.1-26.2h0m0-30.5h0m0 38.9h0m0 4.6h0m0-46.9h0m.1 33h0m0 11.7h0m0-27h0m.1 23.1h0m.1-4.5h0m0 18h0m.1-25.3h0m0 26h0m.1-15.7h0m0-14.5h0m.1 12.8h0m.1-27.9h0m0 6.8h0m.1 1h0m.1 5h0m0 16.3h0m.1-4.2h0m0-23h0m.2 22.5h0m0 23.7h0m.1-47.2h0m.1 17.4h0m.1-9.6h0m.1 43.9h0m0-14.8h0m0-11.1h0m0 8h0m0-45.3h0m.1 63.1h0m0-13.6h0m0 18.5h0m.1-42.4h0m.1-14.1h0m.2 9.7h0m0 20h0m0-13.1h0m.1 34.8h0m.1-31.2h0m0 11.7h0m.1 4.2h0m0-8.7h0m0-2.8h0m.1 5.9h0m0-39h0m0 34.3h0m.1-19.8h0m0 47.7h0m0-30.7h0m.1-24.6h0m.2-14.3h0m0 30.4h0m0 10.3h0m.1 29.5h0m0-22.8h0m.1-.4h0m0 16h0m.1-54.7h0m0 22.7h0m0 20.1h0m.1 15.4h0m0-21.6h0m.1 25.3h0m0-43.7h0m.1 43.4h0m0-11.7h0m0 2.9h0m.1-57.1h0m0 39.7h0m.2-13.5h0m0 8h0m0 3.1h0m.1-19.9h0m.1-24.3h0m.1 33.6h0m.1 7h0m0 5.1h0m.1-4.2h0m0 3.2h0m0-39.4h0m0 50.9h0m0-15.8h0m.1 5h0m0-25.8h0m0 26.1h0m.1 16.9h0m.1-7.1h0m.1-41.4h0m0 52.9h0m.1-25.4h0m0 13.5h0m0-16.1h0m.2 3.8h0m0-24h0m.1 34h0m0-35.1h0m0 35.7h0m0-34.1h0m.1 21.4h0m.1 6.8h0m0-6.4h0m0 .1h0m.1 1.4h0m0 8.2h0m0 2.9h0m.1-36.9h0m0 0h0m.1 16.8h0m.1 11.3h0m0-22h0m.1 23.7h0m0 6.4h0m0-27.6h0m.1 17.6h0m0 4h0m0-19h0m.1 4h0m.1-15.1h0m0 18.4h0m.1 5.1h0m0-13h0m.1-26h0m.1 17.7h0m0-8.1h0m.1 7.1h0m0-6.6h0m.1 36.7h0m0-7.8h0m.1 7h0m0-54.4h0m.1 47.7h0m0-7h0m.1 8.7h0m.1-11.7h0m0-3.2h0m.1-5.8h0m0 26.4h0m0-24.4h0m.1 17h0m.1-20.7h0m.1 26.1h0m.1-38.2h0m.1 6.6h0m0 25.1h0m.1-3.8h0m0 2.7h0m.1 .9h0m.1 2.4h0m0-23.7h0m.1-7.2h0m0 31.5h0m.1-1.6h0m0 11.2h0m.1-28.8h0m.1-12.9h0m.1 47.6h0m0-28.7h0m.1-4.2h0m.1-15.3h0m.1 7.4h0m0 18.3h0m.1-3h0m0-18.7h0m.1-6.1h0m.1 18.6h0m0-31.6h0m.1 44.9h0m0-10.7h0m.1 17.4h0m.1-23.8h0m0-24.7h0m.1 11.6h0m0 28.1h0m.1-30.5h0m.1-5h0m0 55.8h0m0-43.7h0m.1 19.6h0m0-6.8h0m.1-13.2h0m.1 2.9h0m0 6.6h0m.1 13h0m0 8.7h0m.1-14h0m.1-24h0m0-10.1h0m.1-22.4h0m0 59.4h0m.1-.5h0m.1-29.8h0m0 44.7h0m.1-76.6h0m0 72.8h0m.1 .6h0m.1-23h0m0 15.6h0m.1 18.7h0m0-23.3h0m.1-15.4h0m.1 15.9h0m0-28.8h0m.1 37h0m0-26.2h0m.1-4.1h0m.1-7.8h0m0 34.6h0m.1 5.8h0m.1-8.3h0m0 3.5h0m.1 4h0m0-29h0m.1 6.1h0m.1-3.4h0m.1 12.9h0m0-12h0m.1 37.1h0m.1-47.7h0m0 45.3h0m.1-41.4h0m.1 4.9h0m.1-23.1h0m0 47h0m.1-50h0m0 48h0m0-10.5h0m.1-18.6h0m.1 25.3h0m0-22.4h0m0-12.6h0m.1 50.3h0m0-49.5h0m.2 18.7h0m0-28.6h0m.1 12.2h0m0 34h0m.1-9.2h0m0-30.7h0m.1 28.6h0m0-11.8h0m.1-12.1h0m0-18.9h0m0 29.2h0m.2-14.6h0m0-15.1h0m0 1.8h0m0 13h0m.1 31.5h0m0-12.9h0m.1-4.1h0m.1 4.1h0m0-19.6h0m.1 32.7h0m0-55.1h0m0 22.1h0m0-19.4h0m0 22h0m.1-16.6h0m0 14.5h0m.1 18.9h0m0-20.6h0m0 35h0m.1-29.1h0m.1-5.5h0m0 7.7h0m.1 18h0m0-26.9h0m0-1.3h0m.1 .5h0m0 7.7h0m0-11.3h0m.1-15.9h0m0 11.6h0m.2 9.7h0m.1 10.4h0m0-5.3h0m0-2h0m.1-25.3h0m0 27.2h0m.1-14.3h0m0 36.4h0m0-27.7h0m.1 9.3h0m0 11.5h0m0-15.6h0m.1-4h0m0-2.7h0m0 11h0m.1 .1h0m.1-2.9h0m0-12.1h0m.1-2.2h0m0 13.1h0m0 11h0m.1-20.4h0m0 8h0m.1-14.2h0m.1 1.1h0m0 11.8h0m.1-17.7h0m0 18.2h0m0 41.2h0m.1-53.1h0m.1 1h0m0 6.3h0m.1 11.5h0m0 37.1h0m.1-16.1h0m0-33.6h0m.2 2.3h0m0 10.4h0m0-6.1h0m.1-.5h0m0 14.2h0m0-36.2h0m0 71.6h0m.1-50h0m0 1h0m0 1.5h0m.1 42.2h0m.1-6.4h0m0-38.8h0m.1 21.9h0m.2-2.2h0m0 29.3h0m.1-59.3h0m0 58.1h0m0 1.7h0m.1-16.4h0m.1 17.8h0m0-5.1h0m0-17.6h0m.2-45.9h0m0 55.4h0m.1 18.6h0m0-7.3h0m0 4.8h0m.1-7.9h0m0 11.9h0m.1-30.6h0m0 20.3h0m0 18.8h0m0-16.3h0m.1-9.7h0m.1-8.4h0m0 18h0m.1-3.6h0m0-5.6h0m.1-2.7h0m0 9.7h0m.1 10.5h0m.1 4.4h0m0-15.9h0m0-2.4h0m.1 21.7h0m.1-3.7h0m0-1.8h0m0-12.8h0m.1-19h0m0 37.8h0m0-33.7h0m.1-40.4h0m0 62.5h0m0-6h0m0 8.9h0m0-.4h0m.2-10.1h0m0-26.4h0m.1 31.1h0m0-2.5h0m0-5.9h0m.2 11.1h0m0-9h0m0-.1h0m0 1.4h0m.1-.9h0m0 7.7h0m.2-15.9h0m0 24.8h0m.1-3.4h0m.1-32.3h0m.1 7.7h0m0 16.4h0m0-28.5h0m.1 17.5h0m0 13.1h0m.1-15h0m0-16.5h0m.1-1.8h0m0 16.1h0m.1 19.6h0m0-7.7h0m.1 5.9h0m0 .9h0m.1 24.9h0m0-27.8h0m0 .8h0m0 2.9h0m.1-2.3h0m.2 8.2h0m0-13h0m.1-15.8h0m.1 12.2h0m.1-10.4h0m0-19.3h0m.1 23h0m.1 .3h0m0-39.6h0m.1 39.8h0m.2-3.7h0m0-10.4h0m.1-23.6h0m0 51.1h0m0-32.7h0m.1-23.2h0m.1 34.4h0m0-2.9h0m.1 6.9h0m0-9h0m.1 13.6h0m.1-2h0m0-6.6h0m.1 2.8h0m.1 6.4h0m.1-50.8h0m0 25.7h0m.1-2.5h0m0 12h0m.1-29.5h0m.1 63h0m0-17.6h0m.1-6.2h0m0 1.3h0m.1-6.2h0m.1 16.6h0m0-41.9h0m.1 43.9h0m.1 5.9h0m0-8.8h0m.1-27h0m0 4h0m.1 15.1h0m.1-13.1h0m0 28h0m.1-39.4h0m0 12.6h0m.1-3.8h0m.1 10.2h0m0-18h0m.1 29.4h0m0 5.6h0m0-31.4h0m.1 2.5h0m.1 11h0m0 22.3h0m.1-14.8h0m0-12.7h0m.1 16h0m.1-10.8h0m0-10.7h0m.1 5.7h0m0-8.5h0m.2 35.5h0m0-28.3h0m.1 22.6h0m.1-33.8h0m.1 4.1h0m0-14.4h0m.1 3.2h0m0 10.9h0m.1-1.8h0m.1 4.4h0m.1-4.4h0m0 30.7h0m0-36.9h0m.1 19.4h0m.1 1.1h0m0 8.7h0m.3-11.8h0m.1-15.9h0m.1 31.9h0m0-6.5h0m.1-35.5h0m.2 9.9h0m0 35.7h0m.1-13.1h0m0-18.7h0m.1 3.6h0m.1 10.4h0m0 37.3h0m.1-59.7h0m0 12.1h0m.1 33.1h0m0-43.3h0m.1-15.3h0m0 32.8h0m.1 28.6h0m0-16.2h0m0 8.2h0m.1 1.5h0m0-39.7h0m.1 31.3h0m0 2.2h0m.1-12.2h0m.2 4.4h0m0 15.7h0m0-16.4h0m.1-1.7h0m.2-14.1h0m0 32.2h0m.1-19.6h0m.1 20.2h0m0 .3h0m.1-20h0m.1 8.4h0m0-53.9h0m.1 65.4h0m0-27.9h0m.1 13.3h0m0 10.6h0m0-20.8h0m.1 13.3h0m0 18h0m.2-10.4h0m0 4.5h0m.1-7.2h0m0 13.2h0m0-18h0m.2-9h0m0 28.9h0m0-9.6h0m0-26.1h0m.1 26.5h0m.1-3.2h0m.1 12.5h0m0 4h0m.1-44.8h0m.1 21.8h0m0-3.1h0m0 12.3h0m.1-44.3h0m0 28.7h0m0 33.8h0m.1-28.1h0m.1 2.9h0m0 13.1h0m0-1.8h0m.1 7.2h0m0-33.9h0m0-42.8h0m.2 47.3h0m0 6.8h0m.1-21.1h0m0 34.7h0m.1-51.8h0m0 18.6h0m.1 27h0m.1-17.8h0m0 37.4h0m0-32.7h0m.1-4.4h0m0 26.4h0m.1 .2h0m0-7.3h0m.1 1.6h0m0-32.5h0m.1 41.4h0m.1-69.8h0m0 54.2h0m0 12.3h0m0-6.1h0m0-20.7h0m0-29.7h0m.1 57.7h0m0-3.6h0m0-36.4h0m.2 39.6h0m0-31.2h0m0-22.1h0m0 43.1h0m0-20.6h0m.1 4.7h0m0 17.9h0m.1-43.1h0m0 56.5h0m0-9.7h0m.1-35h0m.1 29.1h0m.1-23.1h0m.1-41.1h0m0 3.5h0m0 55.8h0m.1 16h0m0-1.9h0m0-50.5h0m.1-21.3h0m.1 51h0m0 15.1h0m0-55.4h0m0 26.3h0m.1-20.9h0m0 14.4h0m0-8.2h0m.1-5.7h0m0 0h0m.1-10h0m0 68.7h0m0-53.4h0m0 52.4h0m0 1.9h0m.1-63.1h0m.1 19.2h0m0-22.3h0m.1 6.4h0m0 3.2h0m0-2.5h0m.1-9.7h0m.1 14.1h0m0-7.5h0m0 56.5h0m.1-72.6h0m.1 4.2h0m.1 51h0m0-2h0m.1-25.1h0m0-13.8h0m.1-3.4h0m0 23.7h0m.1-14.1h0m0-11.5h0m0 13.5h0m0-2.1h0m.1 .4h0m0-8h0m0-.7h0m0 17.4h0m.1-24.1h0m0 13.9h0m0-6.1h0m0-7.7h0m.1 46.6h0m.1-22.4h0m.1 46.1h0m0-52.7h0m0-6.8h0m.1 25.8h0m0 10.1h0m.1-34.5h0m.1 34.6h0m0-43.1h0m.1 26.1h0m0-13h0m0 .9h0m.1 10h0m0-26.8h0m0 29.6h0m.1-33.4h0m0 32.4h0m.1-21.8h0m0-6.2h0m0 14.7h0m0 44.7h0m.1-37.1h0m.1-23.2h0m0 10.1h0m0 36.5h0m.1-41.9h0m0 9.2h0m.1 37.3h0m.1-32.6h0m0 18.1h0m0-18h0m.1 9.4h0m0-32.5h0m0 12.5h0m0 29.6h0m.1-34.1h0m.1 22.9h0m0-12.7h0m0 13.6h0m.1-11.3h0m0 13.7h0m0-.3h0m.1 1.1h0m.1 .1h0m.1-12.2h0m0-14.6h0m0 28h0m.1-17.2h0m0 26.5h0m.1-4.6h0m0 .3h0m.1 16.1h0m0 1.2h0m.1-36.6h0m.1 15.2h0m0-23.6h0m0 44.6h0m.1-32.1h0m0-8.9h0m.1 15.3h0m.1 12.7h0m0 6h0m.1-6.4h0m0-16.1h0m.1 14.5h0m.1 3.4h0m0 17.4h0m.1-24.2h0m0-20.6h0m0-.6h0m.1 17.4h0m.1-6.5h0m0-6.5h0m.1 20.7h0m0-.2h0m.1 .5h0m.1-.9h0m0-26.7h0m.1 21.3h0m0 37h0m.1-33.6h0m.1-4h0m0 8.3h0m.1-19.6h0m0 32h0m.1-18.2h0m.1-7.6h0m0-13.3h0m.1 10h0m.1 30.5h0m0-31.2h0m.1-5.9h0m0 32.5h0m.1-34h0m.1 9.8h0m0 .5h0m.1-8.3h0m0 3.2h0m.1-9.8h0m.1 39.1h0m0-35.9h0m.1 14.1h0m0 16.1h0m.1-18.6h0m.1-8.1h0m0 32.2h0m.1-4.9h0m0-32h0m.1 29.9h0m.1-10h0m0 6.5h0m.1-16.1h0m0-18.9h0m.1 46h0m.1-19.9h0m0 1.2h0m.1 19.5h0m0-11.5h0m.1-3.2h0m.1-18.2h0m0 27.5h0m.1-20.5h0m0 2.2h0m.1-2.6h0m.1 8.2h0m0 18.7h0m.1-15.7h0m0 13.2h0m.1 6.8h0m.1-11.7h0m0-21h0m.1 .9h0m0-5.2h0m.1 29.9h0m.1-23.9h0m0 22.9h0m.1-23.8h0m.1 30.7h0m.1-7.2h0m0 9.5h0m.1-23.4h0m.1-.8h0m0-18.7h0m.1 41.3h0m.1-7.5h0m.1 22.7h0m0-15.9h0m.1-2.5h0m.1 13.8h0m.1-20.8h0m0-8.2h0m.1 1.1h0m0-8.9h0m.1 15.9h0m.1-28.2h0m0 39.1h0m.1-28.9h0m0-6.3h0m.1 27.2h0m.1 4.5h0m0-6.5h0m.1-6.7h0m0-16.9h0m.1 .7h0m.1 14.9h0m0 16.1h0m.1-28.7h0m0 36.4h0m0-47.5h0m.1-1.4h0m.1 38.9h0m0-6.5h0m.1-4.2h0m0 34.7h0m0-27.1h0m.1-8.7h0m.1 21.5h0m0-11.3h0m.1-1h0m0 30.1h0m.1-46.8h0m.1-14.2h0m.2 10.3h0m.1 29.2h0m0-26.5h0m.1-2.2h0m.1 16.7h0m.1 26.6h0m0-25.4h0m.1 3.6h0m.1-30h0m0 3.1h0m.2 38.5h0m0-34.1h0m.1-20.8h0m0 10.3h0m.1 40.7h0m0-41.3h0m.1 49.3h0m.1-40.3h0m0 36.9h0m0-37.6h0m.1 19.5h0m.1 1.6h0m.1 9.8h0m.1-30.1h0m0-.1h0m.1-1.8h0m.1 52.9h0m0-22.7h0m0 7.7h0m0 3.1h0m.1-10h0m.1 23h0m.1-24.8h0m.1-4.9h0m.1 13.1h0m0-3h0m.1 1.8h0m0 1.1h0m.1 8.4h0m0-16.1h0m.1 10.5h0m.1 2h0m0-3.1h0m.1 1.2h0m0-2.2h0m.1 26.5h0m0-25.7h0m.1-28.8h0m0 53.7h0m0-20.7h0m.2 1.7h0m0-10.3h0m.1-1.8h0m0-17.2h0m0 44.4h0m.1-31.7h0m0 20.2h0m.1-70h0m0 57h0m0 4.6h0m0-5.7h0m0 28.8h0m.1-3.5h0m0-23.4h0" stroke="#000" fill="none" stroke-linecap="round" stroke-width="3.6"/>
<path d="M494 549.1h0m.1-10.2h0m.1 5.5h0m0 20h0m0 3.7h0m.1-6.1h0m0-2.9h0m.1 6.3h0m.1-14.4h0m0-7.3h0m0 4.2h0m0 14.1h0m.1-12.4h0m0-12.6h0m.1 10h0m.1-10h0m0 15.1h0m0-1.2h0m0 23.3h0m.1-7.1h0m0-36.4h0m0 12.6h0m0 3.2h0m0-12.2h0m.1 14.4h0m0 10.9h0m.1 5.6h0m0-10.8h0m0 16.7h0m0-25.3h0m.1-23.9h0m0 50.1h0m0-46h0m.1 5.3h0m0 12.4h0m.1 20.2h0m0-19.2h0m0 27h0m.1-24h0m0-2.8h0m0-3.6h0m.1 3.6h0m0 .8h0m0 16.4h0m.1-25.9h0m0 .1h0m.1 12.8h0m0-1.1h0m.1-21.7h0m.1 8h0m0 33h0m0-12.3h0m.1-18.3h0m0 5.2h0m.1 14.9h0m.1 1.9h0m0 7.2h0m.1-69.1h0m0 47.2h0m0-17.4h0m.1 29.3h0m.1 16.2h0m0-44.5h0m0 16.5h0m0 15h0m0 12.2h0m0-5.7h0m.1-53h0m0 43.8h0m0 11h0m.1-3.2h0m0-7.5h0m.1 .2h0m0-12.2h0m.2 11.5h0m0-28.9h0m0 23.2h0m0 18.5h0m.1-14.7h0m0 25.7h0m.1-51.4h0m.1-13.1h0m0 27.5h0m.1-16.9h0m0 18.1h0m.1-29.5h0m.1 43.3h0m0-40.3h0m.1 35.1h0m.1-2h0m.1-17.8h0m.1 16.1h0m0-6h0m.1-10.2h0m0 13.7h0m.1-9.2h0m0 18h0m0-3.9h0m0 3h0m.1-6.9h0m0 2.1h0m.1 28.8h0m.1-52.2h0m0-.9h0m.3-14.8h0m0 15.2h0m.2-1.6h0m.1 22.4h0m0-65.4h0m.1 58.4h0m0-22.4h0m.1 27.2h0m0-16.8h0m.1 38h0m0-52.8h0m.1 41.6h0m.1-44.6h0m0-6.2h0m.1 20.6h0m0 15.9h0m.1 9h0m0-9.3h0m.1-22.4h0m0 9.2h0m.1-8.9h0m.1-1.9h0m.1 6.4h0m0-1.4h0m.1 16.8h0m0-21.4h0m.1 22.6h0m.1-1h0m0 21h0m.1-19.7h0m0-2.8h0m.1-17.6h0m.1 4h0m0 10.5h0m.1-13.4h0m0 13.3h0m.1-1h0m.1-6.7h0m0 20.8h0m0-35.1h0m.1-14.3h0m0 49.6h0m0-9.2h0m.1-21.8h0m.1 8.6h0m0 31.3h0m0-46.5h0m.1 12.4h0m0 14.3h0m.1-8h0m.1 12.9h0m0-2.9h0m.1-17.3h0m0-11.2h0m.1 35.9h0m.1-2.4h0m0-13.3h0m.1-14.9h0m0 20.3h0m.1-13.5h0m.1-11.3h0m0 9.2h0m.1 13h0m0 13.4h0m.1-19.5h0m.1-26h0m.2 27.1h0m0-2.4h0m.1 25.6h0m0-27.3h0m.1 25.9h0m.1-15.6h0m0 6.7h0m.1-14h0m0-26.6h0m.1 46.1h0m.1-39.1h0m.1-12.4h0m.1 45.1h0m.1-13.7h0m.2 7.6h0m.1-15.3h0m0 3.8h0m.1 11h0m0-26.9h0m.1 59.5h0m0-76.4h0m.1 22.6h0m0 15.5h0m.1-12.6h0m0-6.1h0m.1 23.1h0m.1-13h0m.1 3.7h0m0 6.6h0m.1 0h0m.1 7.4h0m0-9.2h0m.1 8.2h0m.2-1h0m0-32.1h0m.1-2.5h0m0 15.8h0m.1 9.4h0m0-24.9h0m.1 19.7h0m0-18.8h0m0-5.2h0m.1 22.9h0m.1-26.4h0m.1 39.7h0m0-50.6h0m0 16.2h0m.2-8.2h0m0 24.3h0m0-12.1h0m.1 8.3h0m0-6.5h0m0 29h0m.1-34.2h0m.1-8.3h0m.1 46.8h0m0-27.6h0m.1-16.5h0m.1 21.9h0m0-13.1h0m.1-3h0m0 3h0m0-.1h0m.1-17.7h0m0 10.6h0m.2 7.1h0m0-1.9h0m.1 9.9h0m.1-15.5h0m.1-.1h0m0 34.6h0m0-29.7h0m.1 27.8h0m0-51.1h0m.1 43.9h0m0-30.3h0m0-5.6h0m0 15h0m0-18.2h0m0 17.7h0m.1 .1h0m0 34.7h0m0-26.3h0m.1-6.5h0m0 4.9h0m0-4.2h0m.1-19h0m.2 20.3h0m.1 7.1h0m.1 12.5h0m0-51.7h0m0 69.8h0m.1-42.4h0m0-11h0m0 37.7h0m.1-19.2h0m0-26.9h0m0 29.7h0m.1-25.5h0m0 1.3h0m0 16.9h0m.1-17.7h0m.1 18.6h0m0-21.3h0m0 29.7h0m.1-38.1h0m.1 45.9h0m0 5.1h0m.1-9.2h0m0 18.5h0m.1-48.6h0m0 7.8h0m.1 34.5h0m0-23.6h0m0-17.1h0m.1 32.4h0m0-39.2h0m0 43.8h0m.1-21.1h0m.1 40.3h0m0-39.7h0m.1 35.7h0m0-56.1h0m.1 28.7h0m0-23.2h0m.1 53h0m.1-7.8h0m0-29.5h0m0 17.2h0m.1 3.7h0m.1 11.2h0m0 2.9h0m0-54.5h0m.1 34.6h0m0-.6h0m.1-8.9h0m0-6.2h0m0 1.4h0m.1 7.7h0m0 1.1h0m.1-19.4h0m0 25.2h0m0-3.5h0m.1-5.4h0m.1 14.6h0m0 3.7h0m.1-11.6h0m0 15.9h0m.1-15.7h0m.1 7.5h0m0-15.1h0m.1-3.8h0m0 23.7h0m.1 15.2h0m.1-33.3h0m.1-6.7h0m0 17.4h0m.3 27.1h0m.1-42h0m0 6.9h0m.1 1.1h0m.2-2.2h0m0-16h0m.1 20.5h0m0 38.2h0m.1-31.4h0m.1 32.1h0m0-26.9h0m.1-12.4h0m0 11.6h0m.1 .8h0m.1 3.3h0m0 12.9h0m.1 20.7h0m0-63.2h0m.1 38.7h0m.1-15.5h0m0 19.8h0m.1-37.4h0m0 9.6h0m.1 18.4h0m.1-27.1h0m0 4.3h0m.1-4.6h0m0 31.5h0m.1 5.8h0m0-25.2h0m.1-5.9h0m0 23.4h0m.1-7.4h0m0-13.7h0m.1-1h0m.1 18.5h0m0 16.2h0m0 18.3h0m.1-56.1h0m0-7.5h0m.1 35.1h0m.1-8.7h0m.1-21.1h0m0 3.4h0m.1 .6h0m.1 24h0m0 7.7h0m.1-24.4h0m0-7.2h0m.1 6.1h0m.1 26.7h0m0-3.4h0m0-9.3h0m.1 9.7h0m.1-37.4h0m0 38.1h0m0-28h0m.1-5.5h0m0 37h0m0-8.3h0m.1-1.9h0m.1-22h0m.1 19.5h0m0 21.9h0m.2-60.2h0m.1 45.4h0m.1-14.1h0m.1 1.3h0m.1 17.8h0m0-33.9h0m0 8.2h0m.1 23.3h0m0 9.9h0m0-16.9h0m0 17.2h0m.1-9.2h0m0 4.1h0m0-.6h0m.1-3.8h0m0-.2h0m.2-23.3h0m.1 32.8h0m0-10.8h0m0 2.7h0m.2-17.6h0m.1 4.9h0m0 15.2h0m.1 18.6h0m.1-34.9h0m0 21.5h0m.1-9.5h0m0 2.6h0m.1 3.7h0m.1-6.8h0m.1-.2h0m0 2.6h0m.1 5.5h0m0-62.1h0m.1 46h0m0 10.2h0m.1-7.3h0m0 18.2h0m.1-26.3h0m0 28.2h0m.1-9.6h0m0-2h0m0-30.6h0m.1 29.6h0m.1-6.9h0m0-26.3h0m.1 22.7h0m0 14.8h0m0-19.8h0m.1 15.6h0m0-.9h0m0-5.9h0m.1 12.6h0m.1-20.3h0m0 20.7h0m0-35.5h0m.1 39.7h0m.2-12.7h0m0 3.9h0m.1 12.6h0m.1-39.5h0m0 26.9h0m.1 6.1h0m0-12.7h0m0-6.4h0m.1-.2h0m0 11.8h0m.1-1.8h0m0-9.7h0m.1 15.3h0m0-21h0m0 15.3h0m.1-16h0m.1-7.6h0m0 35.8h0m0-9.8h0m.1-.6h0m0-7.1h0m.1-24.1h0m0 38.7h0m.1-35.4h0m0 4.4h0m.1 10.9h0m.1 3.5h0m.1 10.4h0m0-5.5h0m0 4.1h0m.1 6.6h0m0-22.1h0m.1 10.9h0m.1 11.4h0m0-23.5h0m.1-18.3h0m0 35.2h0m0-27.9h0m.1 20.9h0m.1 24.1h0m0-30.8h0m0 16.7h0m.2-11.3h0m0-7.5h0m.1-11.9h0m0 25.8h0m0-6.9h0m.1-26.4h0m.1 24.7h0m0-13.3h0m.1-.4h0m0 11.1h0m.1 3.4h0m.1 3.3h0m.1 7.5h0m0-6.1h0m.1-38.4h0m.1 21.6h0m0-11.6h0m.1 24.7h0m0-12.6h0m.1-11h0m.1 8.4h0m0-2.6h0m.1 1.7h0m0 34.7h0m.1-34h0m.1-10.2h0m0 31.3h0m.2-38.8h0m.1 9.6h0m.1-10.5h0m.2 20.2h0m0-28.4h0m.1 13.8h0m.2 14.4h0m0-16.1h0m.1 15.4h0m0 16.3h0m.1-31.2h0m.1 29.9h0m0-41.1h0m.1 7.5h0m0 29.5h0m.1 17h0m.1-24.3h0m0-29h0m.2 25.5h0m0-3.7h0m.1-13.6h0m0 25.1h0m.1 .7h0m.1 11.8h0m0-2.6h0m.1-63.7h0m0 39.8h0m.1-6h0m.1 6.5h0m0 7.5h0m.1-20.3h0m0-32.8h0m.1 22.1h0m0 20.3h0m.1-4.8h0m0 16.4h0m.1 6.5h0m0-22h0m.1 6.9h0m.1 1.1h0m0 18.3h0m.1-24.1h0m0 3.2h0m.1-3.6h0m.1 10.2h0m0-3.3h0m.1 8h0m0-12.7h0m.1-6.7h0m.1-2.2h0m0 41h0m.1-39.9h0m0 31.1h0m.2-8.3h0m0-26.6h0m.1 2.5h0m0-18.2h0m.1 24.4h0m.1 8.5h0m0-14.4h0m.1 2.1h0m.1 25.4h0m.1-32.7h0m0 8.6h0m0 13.3h0m.1-5.3h0m0-13.9h0m.1 4.3h0m.1-7.9h0m0 14.9h0m0-29h0m.1 12.9h0m.1 13.6h0m0-12h0m0-2.6h0m.1 3.1h0m0 1.8h0m.1 29.3h0m.1-18.1h0m.1-6.3h0m.1-14.2h0m0 9.9h0m.1-10.2h0m0 13.3h0m.1-38.4h0m0 44.9h0m0-21.3h0m0 44.9h0m.1-56.8h0m0 3.6h0m0-7.2h0m0 19.5h0m.1 5.1h0m0-25.4h0m0 17.8h0m0-7.1h0m.1 22.6h0m0-34.2h0m0 19.6h0m.1 7.8h0m0-2.9h0m0-8.5h0m.1 13.4h0m.1-30.4h0m0 21.2h0m0-7.6h0m0 12.9h0m.1 3.5h0m0-7.2h0m.2 5.8h0m0-1.8h0m.1-12.1h0m0 13.7h0m0 3.7h0m.1-34h0m0 51.2h0m.1-5.3h0m0-40.3h0m.1 27h0m.1-17.8h0m0 19.9h0m0-36.1h0m.1 29.1h0m0-17.6h0m0 41.1h0m.1-22.3h0m0-28.6h0m0 27.9h0m0-16.7h0m0 32.8h0m.1-9.8h0m0-2.8h0m.1-11.8h0m0 7.8h0m.1-4h0m0-6.2h0m0 9.2h0m.1 28.8h0m.1-27.7h0m0-14.1h0m0 5.2h0m0-1.3h0m0-21.3h0m.1 36.4h0m0-12.1h0m0 5.7h0m.1-4.7h0m0 8.3h0m0 10.1h0m.1-20.2h0m.1 4.4h0m.1 4.3h0m0-9.6h0m0 20.4h0m.1-16.5h0m0-12.9h0m0 14.5h0m.1 35.5h0m0-37.9h0m.1-6.7h0m0 12.6h0m0 8.2h0m0-38.4h0m0 61.6h0m.1-28.1h0m.1-25.9h0m0 18.9h0m0 .3h0m.1-4h0m0 17.6h0m0-19.9h0m0 38.7h0m.1-24.3h0m.2 33.9h0m0-61.4h0m0 27.3h0m0-12.2h0m.1-1.4h0m0-1.6h0m.1 19.6h0m.1 4.9h0m0-31.1h0m0 44.4h0m.2-45.8h0m0 13.3h0m0 21.1h0m.1 1h0m.1-15.6h0m.2 45.2h0m.1-27h0m0-31h0m0 15.6h0m.1-11.3h0m.1-9.3h0m0 9.2h0m.1 5.8h0m0-3.8h0m.1 43.7h0m0-15.3h0m.1-13.1h0m0-9.7h0m.1 25h0m0 8.2h0m.1-29.2h0m0 14h0m.1-15.4h0m.2 45.9h0m.1-45.5h0m.1 10.8h0m.1 13.5h0m0-7.5h0m.1-11h0m.1-26.8h0m0 58.9h0m0-30.7h0m.1-12.5h0m0 .7h0m.2 51.8h0m0-18.3h0m.1 .1h0m0-20.4h0m.1-8.4h0m0 2.9h0m0-15.3h0m.1 21h0m0 35.5h0m.1-77h0m0 27.2h0m.1 34.9h0m.1-1.7h0m0-37.3h0m.1 7h0m0 2.2h0m0 19.5h0m.1-9.7h0m.1 22.4h0m0-18.2h0m.1 5.8h0m0-1.4h0m.1-25.5h0m0 50.5h0m.1 21.4h0m0-45.6h0m0-37.2h0m.1 16.8h0m0 21.8h0m.1-5.1h0m.1 16.5h0m0-34.3h0m.1 4.3h0m0 3.6h0m.1 27.6h0m.1-20.3h0m0 21.9h0m.1-19.6h0m0-25.1h0m.1 13.2h0m.1 44.5h0m0-16.1h0m.1-17.6h0m.1-32h0m0 60.7h0m0-31.3h0m.1-13h0m0-.4h0m0-20.7h0m.1 36.4h0m.1-21.8h0m0 61.3h0m.1-5h0m0-33.4h0m0-8.1h0m.1 3.1h0m.1 11.4h0m0 18.3h0m.1-8h0m0-17.3h0m.1 33.3h0m.1-24.6h0m0-13.8h0m.1-2.1h0m0-7.9h0m.1 8.7h0m.1-5.2h0m.1-.4h0m0 12.7h0m.1 30.4h0m0-45.6h0m.1 9.9h0m0 11.3h0m0 25.7h0m.1-25.7h0m0 2.2h0m.1-.4h0m.1 3.8h0m0-17.8h0m.1 23.1h0m0 1h0m.1-5.3h0m.1-3.9h0m.1-18h0m.1 9.9h0m.1 1.2h0m0-1.5h0m.1 4h0m.1 16.1h0m0-30.4h0m.1 .2h0m0 4.2h0m.1 43.4h0m.1-37.2h0m.1 24.2h0m0 5.1h0m.1 8.1h0m.1-20.3h0m0 9.7h0m0-26.5h0m.1 47.4h0m0-48.1h0m.1 .1h0m0 44.2h0m.1-44.5h0m0 16.2h0m.1 12.2h0m.1 11.3h0m0-25h0m0 30.3h0m.1-12.5h0m0-19h0m.1 5.9h0m0-5.1h0m0 26.5h0m.1-20.4h0m0 24.5h0m0-14.7h0m.1-19.3h0m.3 10.4h0m0 10.3h0m0 5.5h0m.1-9.7h0m0 18.4h0m0-25.2h0m.1 24.2h0m0 7.2h0m.1-37.5h0m.1 15.2h0m0 10.8h0m0-4.6h0m0-26.6h0m.1 23.2h0m.1 13.9h0m0-16.1h0m0-33.4h0m.1 32h0m0 10.9h0m.2-8.4h0m0-.9h0m0 1h0m0 1.1h0m0-12.1h0m.1 4h0m.1-15.7h0m.1 20.6h0m0 2.9h0m.1 13.2h0m.1-74.8h0m.1 22.3h0m0 38.1h0m.1 11.9h0m0-4.9h0m0-10.1h0m0 22.3h0m.1-79.2h0m.1 47.9h0m0 25.5h0m.1-14.6h0m.1-11.2h0m.2-17.6h0m.1 1.9h0m0 29.9h0m.1-21h0m0-37.8h0m.1 73.9h0m.1-27.5h0m0 24.4h0m0-9.9h0m0 11h0m0-21.3h0m.1-42h0m.1 35.3h0m.1-9.4h0m0 24.3h0m.1-36.4h0m.1 38.1h0m0-4.4h0m.1-27.4h0m.1 26.4h0m0-.2h0m0-3.2h0m.1-7.3h0m.1 14.1h0m0-40.8h0m0 40.6h0m.1-14h0m0-1.3h0m.1-29.8h0m0 42.9h0m.1-50.5h0m0 32.8h0m.1 37.8h0m0-42.3h0m.1-9.5h0m.1-8.3h0m0 41.6h0m0-31.3h0m.1-1.4h0m.1 16.1h0m0-22.6h0m.1 23.6h0m0 39.6h0m.1-56.7h0m.1-11.6h0m0 1.4h0m.1 11h0m0 28.2h0m0-1.3h0m.1-2.5h0m.1-3.9h0m0-20.9h0m.1 6.5h0m0 22.1h0m0-42.8h0m.1-.2h0m.1 19.7h0m0 49.1h0m.1-44.6h0m0-15.5h0m.1 1.3h0m.1 27.9h0m0-35.9h0m.1 26.1h0m0-4.8h0m.1 12.4h0m.1-34.9h0m0 14.5h0m.1 20.9h0m0-14.2h0m.2 5.5h0m0-13.8h0m.1 8.3h0m0 5.8h0m.1-22.5h0m.1 3.9h0m0 19.5h0m.1 1.7h0m0-6.6h0m.1 .2h0m.1-21.3h0m0 28.9h0m.1 5h0m0-4.4h0m.1-10.5h0m.1-17.7h0m0 10.7h0m.1 21.1h0m0 13.1h0m.1-5h0m0-43.2h0m.1 35.1h0m0-10.5h0m.1 5.1h0m.1-27.8h0m0 21.4h0m.1 4.1h0m0-20.8h0m.1 5.8h0m.1 19.7h0m0-12.5h0m.1 14.3h0m0-5.3h0m.1-9.3h0m.1 47.6h0m0-42.1h0m.1-15h0m0 14.1h0m.1 22.9h0m.1-17.9h0m.1 4.5h0m0-16.7h0m.2-19.1h0m0 5.5h0m.1 31.1h0m0-26.9h0m.1-12h0m.1 16.4h0m0-9.4h0m.1 5.1h0m0 9.5h0m.1-8.7h0m.1 31.5h0m.1-25.8h0m0-3.7h0m.1 10.5h0m.1-16.4h0m0-27.2h0m.2 39.9h0m.1-3.5h0m0-14.2h0m0 35.2h0m.1-18.4h0m.1 32.7h0m.1-32.3h0m0 24.4h0m.1-4.7h0m.1-34.2h0m0-1.9h0m0 37.4h0m.1-46h0m0 42.1h0m.1-50.7h0m0 12.7h0m.1-1.2h0m0-2.3h0m.1 5.8h0m0 17.9h0m0-15.9h0m0-9.1h0m.1 0h0m0-6.8h0m.1 74.1h0m.1-62.9h0m.1-9.6h0m0 24h0m.1 2.5h0m.1-10.8h0m0-11.1h0m0 1.3h0m0-.8h0m.1 6.6h0m0-13.5h0m.1 23.2h0m0 6.4h0m.1-13h0m0 31.5h0m.1-34.5h0m0 37.9h0m.1-30.2h0m0-9.8h0m.1 20.2h0m0-15h0m0-19.3h0m0 32.1h0m.2 9.7h0m0-25.9h0m.1-10.1h0m0 10.6h0m0 13.6h0m.1-27.3h0m0 25.7h0m.1-1.5h0m.2-20.8h0m0-1h0m0-7.1h0m.1 18.8h0m0 7.5h0m0 4.5h0m.1-5.3h0m.1-13.9h0m0-15.4h0m0 17.6h0m.2-8.5h0m.1 12.4h0m0 30.4h0m0-39.3h0m.1 6.6h0m.1 1.2h0m0 26h0m.1 15.6h0m.1-33h0m0-2.8h0m.1-10.3h0m.1 13.5h0m0-3.9h0m0 36h0m.1-29.8h0m0-8.7h0m.1 1.3h0m.1 1.4h0m0 4.9h0m.1 4.3h0m0 15.7h0m.1 5.9h0m.1-45.9h0m0 32.3h0m0-5.1h0m.1 23h0m0-48.3h0m0 50.2h0m.1-9.7h0m.1-10.4h0m0-9.7h0m.1 19.7h0m0-27.4h0m0 29.9h0m.1-33.7h0m0 16.2h0m0-22.7h0m.1 18.1h0m0-13.4h0m.1 11.4h0m0-11.5h0m0 .1h0m.1 26.5h0m.1-23.3h0m0 19.9h0m0 .5h0m.1-19.1h0m0 20.1h0m.1-6.2h0m.1-5.8h0m0 .6h0m.1 1.4h0m0 34.5h0m.1-43.4h0m.1 17.1h0m0-19.4h0m.1 12.6h0m0 11.1h0m.1-14.1h0m.1-13.3h0m0 5h0m0 44.9h0m.1-30.4h0m0-8.5h0m.2-8.8h0m0-8.2h0m.1 64.5h0m.1-50.8h0m0-11.3h0m.1 44.2h0m0-23.5h0m.2-12h0m0 7.2h0m0 1.8h0m.1 10.8h0m0 12.3h0m.1-5.9h0m.1-12h0m0-3.8h0m.1 .4h0m0 20.8h0m.1-21.9h0m.1-5h0m0 8.9h0m.1 2.4h0m0 24h0m.1-21.6h0m.1 18.9h0m0-.5h0m.1-10.1h0m0 1.4h0m.1-18.2h0m.1 60.7h0m0-21.9h0m0-43.2h0m.1 2.4h0m0 40.7h0m.1 8.6h0m.1-47.9h0m0-10h0m.1 37.9h0m0 8.7h0m.1 2.3h0m0-38.4h0m0 31.6h0m.1 2h0m0-17.1h0m.1 8.8h0m0 7.2h0m.1-.9h0m0-27.6h0m.1 1.4h0m0 31.7h0m.1-12.3h0m.1-10.3h0m.1-7.9h0m.1-4.1h0m.1 20.3h0m0 2.7h0m.1-24.6h0m0 28.9h0m.2-41.1h0m0 13.3h0m.1 12.1h0m0 19.1h0m0 4.7h0m0-34.8h0m.1 19.2h0m0 22.8h0m.1-32.9h0m0 20.7h0m0 .2h0m.1 6.4h0m0-35.1h0m0 15.1h0m.1 18.2h0m.1-3.7h0m.1 1.2h0m0-32.9h0m.1 34.6h0m0-16.1h0m.1-9h0m.1 15.3h0m0 1.2h0m.1 6h0m0 12.7h0m.1-27.6h0m0-22.7h0m.1 40.4h0m0-30.7h0m.1 16.5h0m.2 5.7h0m0-32.2h0m.2-19.9h0m0 40.5h0m0 35.7h0m.1-20h0m0-13.1h0m0 17.2h0m0-8.2h0m.1 5.5h0m0 19.4h0m.1-34h0m0 20.9h0m0-14h0m.1-4.2h0m.1 9.8h0m0-10.7h0m0 18.7h0m.1 3.5h0m0 12.4h0m0-43.5h0m.1 12.7h0m0-11h0m.1 22.8h0m.1-20.5h0m0 4.5h0m.1 33.3h0m0-4.9h0m0-15.1h0m.1 18.5h0m.1-44.6h0m.1 34.2h0m.1-24.9h0m0 25.6h0m0-9.9h0m.1 11.9h0m0-8.6h0m0-10h0m.1 20.2h0m0-14.2h0m.1-11.3h0m0 16.2h0m.1-4.7h0m0 16.4h0m.2-14.2h0m.2 8.4h0m0-19.6h0m0 8.9h0m.1-35.4h0m.1 46h0m0-33.9h0m.1 42.7h0m0-2.3h0m0-4.8h0m0-34.7h0m0 30.6h0m.1-22.4h0m0 18.8h0m0-14.5h0m.1 8.8h0m0-3.9h0m.1 11.8h0m0-31.4h0m.1-4.1h0m0 47.8h0m.1-59.4h0m.1 56.9h0m.1-19.7h0m0 23.6h0m0-14.5h0m0 14.7h0m.1-46.1h0m0 26.9h0m.1 10.1h0m.2-11.4h0m0-37.8h0m.1 36.6h0m0-9.6h0m.1 10.2h0m.1 2.2h0m0 3h0m0 2.8h0m.1-25.3h0m0 24.5h0m0-43.9h0m0 46.5h0m.1-17.1h0m0 10.1h0m0-12.6h0m.1 3.3h0m0 14.6h0m.1-6.2h0m.2 4.3h0m0-21.4h0m0 31.6h0m.1-33.8h0m0 1.7h0m0 42.7h0m.1-25.2h0m.1 22.4h0m.2-39.5h0m0 33.8h0m0-32.9h0m.1 25.9h0m.1-39.7h0m0 37.2h0m0-14.2h0m.1-11.5h0m.1 18h0m.1-20.5h0m0 15.7h0m.1-19.3h0m0-6.5h0m.1 .3h0m.1 21.2h0m0 7.1h0m.1 12.9h0m0-52.9h0m.1 38.5h0m.1-19h0m0-1.4h0m.1 16.5h0m0-29.9h0m.1 24.8h0m.1-13.2h0m.1-2.1h0m0 28.9h0m0-35.2h0m.1 17.3h0m.1-.9h0m0-7.2h0m.1-4.4h0m0 26h0m.2 10.3h0m0-31.5h0m.1 25.2h0m.1-2.1h0m0-7.7h0m.1-12.1h0m0 22h0m.1-34.3h0m.2 39.2h0m0-28.3h0m.1-12.3h0m0-12.1h0m.1 23.8h0m0 33.2h0m.2-58.5h0m.1-.4h0m0 51.4h0m.1-21.6h0m.2-30.3h0m0-14.4h0m0 13.2h0m.1 25.3h0m0-20.7h0m.1 27.7h0m.1-11.6h0m.1-9.4h0m0-15.7h0m0 11.7h0m.1 51h0m.1-25.6h0m0 13.1h0m.1-28.8h0m0-9.7h0m.1-6.3h0m.1 42.1h0m0-39.5h0m.1 24.4h0m0-4.9h0m.1 5.4h0m.1-11.5h0m0-1.9h0m.1 21.6h0m0-30.8h0m.1 22.3h0m.1-12h0m0 10.8h0m.1-27.4h0m.1 28.7h0m0 1.7h0m.1-28.7h0m0 16.2h0m0 9.7h0m.1-37.2h0m.1 27.5h0m0 19.1h0m.1-13.7h0m0-20.1h0m0 .2h0m0 38.1h0m.2-47h0m0 7.7h0m.1 7.1h0m.1 15.4h0m.1-17.7h0m0 16.7h0m.1-23.8h0m0 5.9h0m.1-11.7h0m0 19.4h0m.1 5.2h0m0-12.8h0m.1-23.4h0m0 41.9h0m0 4.2h0m.1-39.7h0m0 24.1h0m0-16.2h0m.1 2.5h0m0 9.5h0m.1-4.6h0m.1-3.3h0m0 14.2h0m0-6.8h0m.1-11h0m0-.6h0m.1 19.6h0m0-34.7h0m0 23.7h0m.2-7h0m0 3.5h0m.1-24.8h0m0 3.5h0m0 21.7h0m.1-16.8h0m0-2.5h0m0 12.6h0m.1-8.3h0m0 21.4h0m0 4.7h0m.1-33.9h0m0 4h0m0 7.7h0m0 8.1h0m0-7.1h0m0 15.6h0m.1-6.8h0m0 3.6h0m0 3h0m.1-16.7h0m0 14h0m0-2.6h0m.1-2.1h0m0 22.8h0m0-33.8h0m0 27.4h0m.1-10.8h0m0-31h0m0 27.1h0m.1 4.6h0m.1 2.3h0m.1-16.7h0m.1 41.1h0m0-20.6h0m0-18.9h0m0 2.9h0m.1 7.4h0m.1-6.3h0m.1 .2h0m0 7.8h0" stroke="#000" fill="none" stroke-linecap="round" stroke-width="3.6"/>
<path d="M576.8 498.8h0m.1 18.9h0m0-15.5h0m0-1h0m0 1.6h0m.1-15.7h0m0 19.2h0m0-16h0m.1 4.2h0m0-1.6h0m.1 29.7h0m.1-21h0m0-7.7h0m0 6.5h0m.1-26.5h0m0 14.2h0m0 24.6h0m.1-12.4h0m0 21h0m.1-48.4h0m.1 26.8h0m0-9h0m.1 17.2h0m.1 34.8h0m0-50.1h0m.1 11.2h0m.2 2.2h0m0-4.7h0m.1 3.1h0m.1 .1h0m0-30h0m.1 52.6h0m0-27.3h0m0 10.6h0m.1-19h0m0 16.3h0m.2 8.4h0m0 17.3h0m.1 5.3h0m0 3.8h0m.2-36.5h0m0-7h0m0-6.9h0m.1 9.9h0m.2 1h0m0-20.2h0m0 20.4h0m.1 13.4h0m.1-9.6h0m.1 23.5h0m0-36.9h0m0 7.8h0m.1 17.6h0m0-31.3h0m.1 26.7h0m.1 14.4h0m0 6.1h0m.2-27.8h0m0 6h0m.1 31.2h0m0-40.9h0m.2 29.5h0m0-4.2h0m.1-27.1h0m0 39.1h0m.1-55.4h0m.1 18.5h0m0 5.7h0m.1 11.9h0m0-3.5h0m.1-13.7h0m.1 22.2h0m0 .5h0m.1-39.7h0m0 20h0m0 12.8h0m.1 16.7h0m.1-30.2h0m0-9.1h0m0-.2h0m0 8h0m.1 28.9h0m0 2.4h0m.1-42.2h0m0 8.8h0m.2 11.2h0m0 24.6h0m.2 1.5h0m0-6.1h0m.1-2.3h0m.1-7.3h0m.1 0h0m0-12.7h0m.1 23.7h0m.1 17h0m0-57.7h0m.1 18.7h0m0-6h0m.1-3h0m.1 39.9h0m0-16.1h0m.1-4.3h0m0 1.4h0m.1-11.3h0m.1 19h0m0-35.1h0m.1 12.2h0m0 42.9h0m.1-41h0m.1 19.5h0m0-10.9h0m.1 11.8h0m0 19.4h0m.1-32.4h0m.1-2.7h0m0-26.1h0m.1 33.3h0m0 15.2h0m.1 8.8h0m0-8.5h0m.1-9.7h0m0-3.1h0m.1 35.3h0m0-47.7h0m.1-13.6h0m.1 38.5h0m0-6.9h0m.1 10.9h0m0-13.9h0m.1-28.2h0m.1 22.6h0m0-6.1h0m.1 10.5h0m.1 8.7h0m.1-5.4h0m0 .9h0m.1-21.3h0m0 5h0m.1 10.2h0m.1-21.9h0m.1-3.8h0m.1 20.3h0m0-4.1h0m.1 14.9h0m0-12.6h0m.1-7.6h0m0 35.1h0m0-1.4h0m.1-38.6h0m0 32.1h0m.1-30.4h0m0 17.1h0m.1 0h0m.1-6.6h0m.1 39.6h0m0-16.1h0m.2-1.3h0m0 8.7h0m0-2.6h0m.1-19h0m0 23.9h0m.1-24.4h0m.1 4.6h0m0 14h0m0-26.8h0m.1 4.1h0m0 38.4h0m0-23.8h0m.1 11.1h0m0-30.2h0m.1-.2h0m0 43.2h0m.1-14.5h0m0-51.2h0m.1 56.9h0m0-2.5h0m0-28.2h0m.1 24.1h0m0 .8h0m0-22.6h0m.1 3.3h0m0 30.2h0m.1-36.2h0m.1 45.2h0m0-61.2h0m0 51.3h0m.1-.1h0m0 2.9h0m0-9.4h0m.1 .6h0m.1-12.3h0m.1 7.8h0m.3 19.2h0m0-33.6h0m.2-3.3h0m.1 14.9h0m.1 .9h0m0-12.4h0m.1 14.9h0m0 1.9h0m.2-3.6h0m0-2.3h0m0 15.8h0m.1-24.1h0m0 14.5h0m.1-34.9h0m0 47.7h0m.1-35.8h0m0 28.1h0m.1 .6h0m0-21.7h0m0 14.9h0m0 .2h0m0-.5h0m0-1.6h0m.1 .9h0m.1-11.8h0m0-2.7h0m.1 7.5h0m0 17.4h0m.1-27.9h0m0 18.6h0m.1-10.9h0m0-22.6h0m.1 34.8h0m0-40.7h0m.2 22.4h0m0 14.6h0m0 12.4h0m.1-5.7h0m0-6.8h0m0-2h0m0-28.5h0m.1 34h0m.1-40.3h0m.2 31.6h0m.1-23.6h0m0 42.3h0m0-46.2h0m.1 35.9h0m0 7.7h0m0-16.8h0m.1-17.8h0m.1 8.1h0m0-2.7h0m.1 15.4h0m.1-15h0m.1 14.3h0m0-1.4h0m.1-40.7h0m.1 46.6h0m.1-42.5h0m0 36.5h0m.1 1.8h0m.1-15.8h0m0-19.5h0m.1-18.6h0m0 22.1h0m.1 23.7h0m.1-26.4h0m0-.9h0m.1 34h0m0 3.4h0m.1-28.4h0m.1 8.2h0m0-18.4h0m.1 .7h0m0 1h0m.1 33.9h0m.1-28h0m0-6.2h0m.1 16.5h0m0-26.5h0m.1 41.8h0m.1-6.5h0m0 19.2h0m0-19.9h0m.1-16.3h0m0 8.2h0m.1 3.2h0m.1-26.5h0m0 51.6h0m.1-10.4h0m0-41.8h0m.1 43.3h0m.1-34.2h0m.1 38.1h0m0-25.1h0m.1-4.4h0m.1-10.4h0m.1-25.3h0m.1 23.1h0m.1 26.6h0m0 1h0m.1 3h0m.1-16.6h0m.1 17.1h0m0-9.1h0m.1-25.7h0m.1 24.4h0m0 27.2h0m.1-35.3h0m0-18.1h0m.1 8.9h0m.1 1.6h0m0 8.2h0m.1-7.7h0m0-15.6h0m.1-1.3h0m.1 15.1h0m0-12.4h0m.1 21.5h0m.1-27.6h0m.1 7.3h0m0-11.2h0m.1 23.1h0m0 4.5h0m.1-15.4h0m.1 6.9h0m0-14.7h0m.1 4.6h0m.1-7.2h0m0 24.1h0m.1-19.7h0m.1-1.4h0m0 3.6h0m0 3.8h0m0-7.8h0m.1-3.5h0m0 7.9h0m.1-4.5h0m0-.1h0m0 5.9h0m0 9.9h0m.1-7h0m0 11.7h0m0-14.5h0m.1 27.9h0m0-23.8h0m.1 35.2h0m0-56.7h0m0 23h0m.1 12.9h0m0 10.8h0m.1-25.6h0m0 1.4h0m0 5.6h0m.1-12.2h0m0-.7h0m0 8.8h0m0-12.3h0m0 9.4h0m0-5.7h0m.1-9.7h0m0 2.3h0m.1 19.4h0m0-24.1h0m.1 19.4h0m0 1.2h0m0-13h0m0 7h0m.1-10.7h0m0 19.7h0m0-22.4h0m0 18.8h0m.1-4.9h0m0 8h0m.1 11.3h0m0-26.3h0m.2 26.4h0m0-31.8h0m0 11.2h0m.1 12.5h0m0 4.2h0m.1-7.8h0m0-3.2h0m.1-14.9h0m0 10.5h0m.1 6.8h0m.1-2.7h0m0-1.6h0m.1 9.9h0m0 4.2h0m.1-27.3h0m0 14.5h0m0 15.8h0m0-27.7h0m.1-2h0m0 2.4h0m0 9h0m.1 22.8h0m0-34.6h0m.2-14.6h0m0 61.2h0m0-31.2h0m0-31.6h0m.1 15h0m0-3.9h0m0 4.3h0m.1 32.8h0m.1-38.6h0m.1 6.1h0m.1 12.5h0m0-4.2h0m0 21.9h0m0-30.1h0m0 36.7h0m.1-23.3h0m.1-6h0m0 7.6h0m.1 1.3h0m0-2.4h0m0-32.3h0m.2 53.9h0m.1-31.9h0m0 11.3h0m0-9.3h0m0 4.5h0m.1 4.2h0m.2 35.7h0m0-34.7h0m0 26.8h0m.1-34.1h0m.1-1.5h0m0-6.3h0m.1 21.9h0m.1-15.9h0m0 1.7h0m.1 6.4h0m0-7.6h0m.1 2.6h0m.1 45.1h0m0-33.9h0m.1-10.2h0m0 26.5h0m0-20.7h0m.2 30.2h0m0-36.7h0m.1-7h0m0 38.3h0m0-16h0m.1 32.4h0m0-53.6h0m.1 16.3h0m0-11.8h0m.1 25.7h0m0-25.9h0m.1 29.6h0m.1-14.2h0m0 22h0m.1-50.2h0m0 18.5h0m0 16.4h0m.1-31h0m.1 32.6h0m0 1.8h0m.1 3.7h0m0 19.7h0m.1-22.5h0m.1-9.7h0m0 38.2h0m.1-12h0m0-35.6h0m.1-.1h0m.1 9.1h0m0 19.2h0m.1 9.1h0m0-39h0m.1-3.4h0m.1 12.3h0m0 32.5h0m.1-20.2h0m0 4.2h0m.1-4.2h0m.1 1.9h0m0-18.4h0m.1 28.6h0m0-19.4h0m.1 7h0m.1-6.6h0m0-8.9h0m.1 7.7h0m.1 7.1h0m0-15.7h0m.1 45.2h0m0-6.1h0m.2-9.3h0m0 6.4h0m.1-18.1h0m0-29.6h0m.2 59.6h0m0-22.9h0m.1-1.8h0m0-18h0m.1-17.2h0m.1 44.1h0m0-31.1h0m.1-2.1h0m0 17.4h0m.1-12.9h0m.1 30.7h0m0 18.7h0m.1-52.6h0m0-3.4h0m.1 25.5h0m.1-7.8h0m0 19.1h0m.1-4.1h0m.1 23.9h0m.2-29.4h0m0-3h0m.2 18.3h0m.1-20.9h0m0 19.7h0m.1-9.1h0m.1-3.1h0m.1-11h0m0-19.7h0m.1 32.1h0m0 11.7h0m.1-40.1h0m0 26.4h0m.1-27h0m.1 16.9h0m0 31.3h0m.1-44.6h0m.1 12.1h0m.1 8.8h0m0 16.2h0m0-41.5h0m.1 54.9h0m.1-66.9h0m.1 21.9h0m0-15.2h0m.1 27.8h0m.1-19.4h0m.1 25.6h0m0 5.7h0m.1-18.6h0m0-21.5h0m.1 28.1h0m.1-12h0m0 26.6h0m.1-33.6h0m0 27.9h0m.1 4.7h0m.1-21h0m0-19.1h0m.1 42.4h0m0-18h0m.1 28.4h0m0-48h0m.1 23.4h0m0 15.6h0m.1-10.8h0m0-4.5h0m.1 5.6h0m.1-5h0m0-34.5h0m.1 46.5h0m0-17.2h0m.1 5.6h0m.1-12.6h0m0 16.5h0m0 15.4h0m.1-8h0m0 8h0m0-24.1h0m.1 23.4h0m0-10.2h0m.1 10.2h0m0 5.5h0m0-45.7h0m.1 17.7h0m0 29.7h0m.1-45.8h0m.1 11.7h0m0-.9h0m.1 0h0m.1 4.5h0m0 29.3h0m0-1.6h0m.1-8.9h0m0-15h0m.1 14.7h0m.1-29.1h0m0 37.9h0m.1-54.1h0m.1 58.1h0m0-15.1h0m.1 2.9h0m0-6.5h0m.1-1.3h0m0 22.9h0m.1-9.2h0m0-28.9h0m.2 18.2h0m0 13h0m0-7.7h0m.1 3.1h0m0-4.5h0m.1 15.8h0m.1-6.5h0m0-15.3h0m.1-11.6h0m0 33h0m.1-10.7h0m0-1.8h0m0 10.7h0m0-7.1h0m.1 6.2h0m.1 2.5h0m0-44.8h0m0 33.3h0m.1 9.4h0m.1-7.8h0m0 7.9h0m0 4.3h0m0-3.2h0m.1-13.1h0m.1-20.3h0m0-8.6h0m.1 36.9h0m0-10.9h0m.1 27.2h0m0-49.6h0m.1 56.1h0m0-33.2h0m0 13.6h0m.1 19.6h0m0-9.9h0m0-16.1h0m0-35.9h0m.1 38h0m0 1.8h0m0-5.8h0m0 26.1h0m.1-6.4h0m0-22.3h0m0 9.2h0m.1-7.4h0m.1-1.3h0m0-5h0m0-1.8h0m.1 34.3h0m0 1.8h0m0-32.4h0m.1 4.2h0m.1 8.4h0m0 10.4h0m.1-10.1h0m0-16.3h0m.1 9.1h0m.1 1.8h0m0-2.1h0m0 8.2h0m0-7.9h0m.1 7h0m0-17.7h0m.1-9.9h0m.1-4.1h0m.1-1.2h0m0 34.9h0m.1-10h0m.1-14.9h0m0 32.8h0m0-29.1h0m.1-9h0m0 31.3h0m.1-2.4h0m0-2.4h0m.1 2.6h0m.1-30h0m0 40.1h0m0-12.7h0m.1 20.1h0m0-21.9h0m0 11.9h0m0-1.6h0m0 16.9h0m.1-24.4h0m.1 1h0m0 19.5h0m0-28.1h0m.1 6.1h0m.1-5.7h0m0-2.1h0m.1 13.1h0m0-3.2h0m.1-5h0m0-1.8h0m.1 13.7h0m0-15h0m.1 16.4h0m0-12.7h0m0-3.1h0m.1 15.1h0m0-10.2h0m.1 .8h0m.1-39.2h0m0 39.8h0m0-43.9h0m.1 30.5h0m.1 4.4h0m0 32.7h0m0 .5h0m0-28.7h0m.1-25.7h0m.1 16.5h0m0 13.2h0m.1-18.9h0m0 22h0m.1 11.8h0m0-14.4h0m0-6.2h0m.1-46.2h0m0 52.1h0m0 6.4h0m.1-44.7h0m0 2.7h0m.1 14.6h0m.1 8.6h0m.1-11.6h0m.1 20.2h0m.1-40.6h0m0 35.9h0m0-11.4h0m0 34.9h0m.1-26.6h0m0-61.1h0m.1 66.1h0m.1-8.9h0m0 21.3h0m0-41h0m.1 20.3h0m0 6.4h0m0-9h0m.1 21.4h0m.1-36h0m0 29.3h0m0-35.1h0m.1-.9h0m0 27.6h0m.1-13.1h0m.1-14.2h0m0 21.2h0m.1-26.1h0m0 3.9h0m.1 25h0m.1 19.4h0m0-35.4h0m0-9.2h0m.1 5.9h0m0 7h0m.1-.4h0m.1 20h0m0-7.5h0m0 19.6h0m0-21.2h0m.1-12.4h0m0 20.5h0m.2-37.4h0m.1 19.6h0m.1 6.7h0m0 1.6h0m.1-4.6h0m0 7.2h0m.1 21h0m0-13.8h0m.1-16.7h0m0 16.8h0m.1-7.6h0m0-27.5h0m.1 12.5h0m.1 13.6h0m0-21.1h0m.1 25.6h0m0-4.3h0m.1-2.5h0m.1-22.8h0m0 18.6h0m.1 7.4h0m0-7.4h0m.1-16h0m.1-22h0m0 35.4h0m0-23h0m.1 36.4h0m0 6h0m0-10.4h0m.2-22h0m0-10.3h0m.1 36.5h0m.1-28.3h0m.1 2h0m0 33.5h0m.1-7.8h0m0-28.4h0m.1 30.7h0m.1-25h0m0-17.5h0m0 36.4h0m.1-36.6h0m0 12.8h0m0 39.7h0m0-26h0m.1-1.1h0m.1 11.2h0m0 5.1h0m.1-9.2h0m.1-32h0m.1 6.3h0m0 21.5h0m.1 17h0m0-31.4h0m.1 10.2h0m.1-17.1h0m0-1.7h0m.1 22.5h0m.1-6.9h0m.1 0h0m0-20h0m.1-2.1h0m.1 8.1h0m0-3.9h0m0 7.3h0m.1-32.7h0m0 31.4h0m.2-22h0m0 18.5h0m.1 7.7h0m0 26.4h0m.1-4.1h0m0-32.6h0m.2 37.5h0m0-29.8h0m.1-4.9h0m.1 27.7h0m.1-49.2h0m.1 12.5h0m.1 49.3h0m0-50.9h0m0-13.9h0m0 21.5h0m0 14.9h0m0 31.4h0m.1-8.6h0m.1 4.6h0m0-40.3h0m.1 19.8h0m0-20.3h0m.1 19.9h0m0-21.9h0m0-1h0m0 19h0m.1-4.2h0m0-30h0m.1 49.1h0m.1-1.3h0m0-27.4h0m.1-13.1h0m0 7.7h0m.1 15.7h0m0-26.5h0m0 9.5h0m.1-8.4h0m0 16.1h0m.1 2.1h0m.1 9.3h0m0-18.6h0m0 4.6h0m0 43.4h0m.1-55h0m0 30.6h0m.1-37h0m.1 35.9h0m0-32.2h0m.1 11.4h0m.1 23h0m0-36.3h0m.1 8.4h0m0 15.5h0m.1-11.7h0m.1 7.7h0m.1-20.6h0m0 31.5h0m.1-20.1h0m.1 26.9h0m0-29.1h0m0 18.8h0m.1-25.6h0m0-3.2h0m0 16.8h0m.1-8.7h0m0 11.2h0m.1-14.5h0m.1 5.4h0m0-11.2h0m0 30.3h0m.1-21.8h0m.1 2.2h0m.1-21.4h0m0 26.9h0m0-11.9h0m.2-9.2h0m0 17.6h0m.1-.7h0m0 .9h0m0 10.4h0m0 .6h0m.1 1.1h0m.1 1h0m.1-11.3h0m0 2.3h0m0-5.7h0m0 27.2h0m.1-12h0m0-22.8h0m.2 14.2h0m0 11.1h0m.1 1.6h0m0-13.2h0m0-2.6h0m.1 .2h0m0 2.5h0m.1 9.8h0m0 27.9h0m.4-60.3h0m0 13.4h0m.1 19.6h0m0-15.1h0m0 15.4h0m.1-3.8h0m.1 .2h0m.1-8.7h0m0-11h0m0-.6h0m.1 18.4h0m.1 10.6h0m0-14h0m.2-1.4h0m.1 13.6h0m0 .1h0m.1 4.1h0m0-20.1h0m0-20.8h0m0 17.7h0m.1 29.9h0m.1-.6h0m0-2.6h0m.1-10.1h0m0-17h0m0 27.5h0m.1-3.2h0m.1-16.7h0m0 9.9h0m.1-11.5h0m0-8.5h0m0 13.6h0m.1 7h0m.1 51.4h0m.1-52.5h0m0-14.7h0m.1 1.1h0m0 5.6h0m.1 5h0m0 26.4h0m.1-12.3h0m0 5.9h0m.1-12.5h0m.1-13.2h0m0-6.3h0m.1-12h0m0 7.9h0m.1 25.3h0m.1 10.9h0m0-18h0m.1-17.5h0m0 16.7h0m.1 5.7h0m.1 15.1h0m0-10.9h0m.1-2.5h0m.1-16.7h0m0 11.3h0m.1-.7h0m0 2.6h0m.1-5.8h0m.2-22.6h0m.1 40.1h0m.1-14.6h0m0-.4h0m.1 26.4h0m.1-38.1h0m.1 53.3h0m0-28h0m.1 16.4h0m0-14.2h0m.1-26.8h0m.1 9.8h0m0 29.2h0m.1-32.5h0m0-3h0m.1 21.4h0m.1 24.3h0m0-53.9h0m.1 18.4h0m0 1.9h0m.1 13.8h0m.1-14.4h0m0 25.7h0m.1-49h0m0 66.6h0m.1-43.1h0m.1 .6h0m0-2.4h0m.1 5.4h0m0-7.1h0m.1 3.1h0m.1 10.1h0m0 .8h0m.1 7.5h0m0 1.4h0m.1-15.1h0m.1 37.7h0m0-39.2h0m.1-6.7h0m.1 3h0m0-.1h0m.1-.3h0m0-1.9h0m.2 4.3h0m.1 25.4h0m.1-21.2h0m.1-14.6h0m.1 26.8h0m0 9h0m.1-15.2h0m.1-7.2h0m.1-12.4h0m0 6.5h0m.1 25.4h0m.1-1.7h0m0-27h0m.1 8.8h0m0 1.8h0m.1-21.4h0m.1 37.2h0m0-19.2h0m.1-1.9h0m0-26.5h0m.1 9.4h0m.1 41.1h0m0-19.4h0m.1 22.7h0m0-32.5h0m.1-5.1h0m.1 35.6h0m0-32.9h0m.1 40.5h0m0-12.5h0m.1-11.6h0m.1 15.1h0m0-17.6h0m.1 6.9h0m0-38.1h0m.1 34.3h0m.1-13.2h0m0-5.8h0m.1 17.2h0m0-2.5h0m.1 9.6h0m.1-25h0m0 6.6h0m.1-3.8h0m.1 9.5h0m.1-7.1h0m0-.5h0m.1 16.9h0m.1-6.2h0m0-19.3h0m.1 40.4h0m.1 1.2h0m.1-26h0m0 11.3h0m.1-19.1h0m0 16.9h0m.1-10.6h0m.1 8.8h0m0 20.9h0m.1 4h0m0-16.6h0m0 13h0m.1-7.1h0m.1 12.6h0m0-22h0m.1-15.6h0m0 23.2h0m.1-37.2h0m.1 15.6h0m0 27.1h0m0-13.1h0m.1-22.7h0m0 28.6h0m.1-19h0m.1 25.3h0m0 6.1h0m0-30h0m.1 11.5h0m0-43.8h0m.1 52.7h0m.1-22h0m0-10.5h0m.1 35.7h0m0 11.5h0m0-37.9h0m.1 28.1h0m.1-22.2h0m0-28.1h0m.1 46.2h0m.1-24.1h0m.1 22.3h0m0-9.2h0m.1 4.8h0m.1 11.4h0m.1 9.4h0m0-17.9h0m0 1.4h0m.1-48.6h0m0 55.8h0m.1 4h0m0-.7h0m.1-12.8h0m0 14.5h0m0 2.3h0m.1 4.9h0m.1-11.1h0m0-41.7h0m.1 43.2h0m.1-1.9h0m0 7.6h0m.1-26.8h0m0 5.1h0m0 15.6h0m.1-14.1h0m0 17.1h0m0-6.7h0m0-38h0m0-4.4h0m.1 46.4h0m0 7.9h0m0-.2h0m.1-28.5h0m0 17.2h0m0 5.7h0m0-4.5h0m.1-33h0m0 37.9h0m0-7.1h0m.1 7h0m0 3.8h0m0-5.6h0m.1-2.5h0m0-36.4h0m.1 27.6h0m0 15.3h0m0-22h0m.2 17.3h0m0 3.8h0m.1-5.6h0m0-30.4h0m.1 11.5h0m0 21.4h0m.1-13h0m0 16.2h0m0-7.3h0m0-17.1h0m.1 16.7h0m0 .3h0m0 2.7h0m.1-6.2h0m.1-17.9h0m0 1h0m.1 51.2h0m0-2.9h0m.1-38.2h0m.1 3.9h0m.1 6.7h0m0 1.7h0m0-12.9h0m.1 5.6h0m.1-25.4h0m0 20h0m.1 16.9h0m0-51h0m.1 21.3h0m0 31.9h0m0-1h0m0-9.1h0m.2-43.6h0m.1 12.3h0m.1 24.7h0m0-16.1h0m.1 17h0m0-57.6h0m0 23.8h0m.2-11.7h0m0 33.1h0m0-23.8h0m0 20h0m.2-38h0m0 13.5h0m0 6.9h0m0-7h0m.2-1.2h0m0 7.6h0m.1-3.3h0m0 35.4h0m.1-34.7h0m0-6.5h0m0 18.7h0m.1 35.3h0m0-50.9h0m0 26h0m.1-55.7h0m0 49.5h0m0-21.2h0m.1 11.1h0m0-26.3h0m.1 22.2h0m.1-4.7h0m0 8.3h0m.2 41.8h0m0-54.8h0m0 6h0m.1-8.8h0m0-16.8h0m.1 15.4h0m0 .1h0m0 5.1h0m0-5.8h0m.1 3.7h0m.1 5.9h0m0-15.3h0m.1 11.9h0m.2 32h0m0-23.9h0m0 22h0m.1-12.7h0m0-25.8h0m.1 6.5h0m0 7.4h0m.1 5.1h0m.1-7.5h0m.1-5.2h0m.1 17.4h0m0 7.4h0m.1-9.7h0m.1-11.2h0m0 42.8h0m0-37.4h0m.1 4.6h0m0-19h0m0-1.8h0m0 19h0m.2 12.4h0m0-15.9h0m.1 1.6h0m0-4.5h0m0 12.8h0m.1-24.7h0m0 5.6h0m0-15.1h0m.1 12h0m0 13.3h0m0-6.2h0m0 34.7h0m.1-27.4h0m0 19.1h0m.1-37.3h0m0 3.3h0m0 3.1h0m.1 4.9h0m0 3.5h0m0-13.8h0m0 55.4h0m0-42.3h0m.1 19h0m.1-2.8h0m.1-19.9h0m0 18.7h0m0-15.9h0m.1 15.6h0m.1-14.5h0m0-5.9h0m.1 5.4h0m.1 5.2h0m0 4.4h0m.1-15.5h0m.1 15.1h0m.1 .3h0m0-28.2h0m0 24h0m.1-5.3h0m.1-.6h0m0 15.4h0m.1 12.9h0m0-40.8h0m0 47h0m.1-13.6h0m.1-2h0m0-7.9h0m.1-16.3h0m.1 15h0m0 10.1h0m.1-17.4h0m0-1.7h0m0 43.2h0m.1-8.3h0m.1-19h0m0 13.9h0m0-42.4h0m.1-.5h0m0 49h0m.1-11.7h0m.1-16.7h0m0 11.7h0m.1-5.4h0m0-8.6h0m.1 7.6h0m.1 15.4h0m0-30.9h0m.1 12.4h0m0 5h0m.1-7.3h0m.2 6.3h0m0 19.7h0m.1-3.7h0m.1 14h0m0 1.2h0m.1-3.2h0m0-5.7h0m.1 11.9h0m.1-48.9h0m0 33.2h0m.1-24.9h0m0 20.1h0m.1 14.1h0m.1-40.6h0m0 14.3h0m.1 33.8h0m0-52.3h0m.1 18.3h0m.1-9.3h0m0 14.2h0m.1 21.2h0m0-12.3h0m.1 19.4h0m0-36.7h0m.1 12.4h0m0 6h0m.1 10.8h0m0 10h0m.1-14.3h0m0-18.9h0m.1 23.7h0m0-8.5h0m.1-20.9h0m.1 28.5h0m0-2.1h0m.1 6.8h0m0-10.4h0m.1-30.8h0m0 37.1h0m.1-17.5h0m0-24.6h0m.1 61.3h0m0-20.5h0m.2-7.3h0m0-.9h0m.1-19.6h0m0 14.4h0m.1-8.2h0m.1 19.7h0m.1-9.3h0m0-13.9h0m.1 22.4h0m.1 5.3h0m.1 .6h0m.1-24.2h0m.1-7.7h0m0 30.6h0m.1-8.1h0m0-25.8h0m.1 23.5h0m.1 .8h0m0-26h0m.1 9.6h0m0-.7h0m.1 1.2h0m.1-4.6h0m0 19.9h0m.1-17.5h0m0 24.3h0m.1-15.7h0m.1-9.8h0m0 13.8h0m.1 19.3h0m.1 2h0m.1-32.5h0m0 36.1h0m.1-37.6h0m.3 21.4h0m.1-5h0m.2 4.1h0m.1 14.9h0m0-7.1h0m.1 12.1h0m0-20.5h0m0-16.6h0m.1 .2h0m.1 31.3h0m0-38h0m.1 27.7h0m0 23.8h0m0-26.2h0m.1-8.6h0m.1 7.6h0m.1 18.8h0m0-5.8h0m0-13.7h0m.1 5h0m.1-8h0m.1 6.3h0m0 6.8h0m.1-9.9h0m.1 14.7h0m0 7h0m.2-68.5h0m.1 50h0m0-18.6h0m0 34.3h0m.1-22.4h0m0 .5h0m.1 27.4h0m0-.5h0m.1-31.9h0m0 26.9h0m.1 1.7h0m0-6.3h0m.1 15.1h0m0-22.7h0m.1 1.1h0m0 16.1h0m.1-11.7h0m0 19.5h0m0 .5h0m.1-27.4h0m0 15.1h0m0-15.9h0m.1 13.8h0m0 5.5h0m.1 1.4h0m.1-1.6h0m0 4.1h0m0-16.5h0m.1-4.3h0m.1-13h0m0 39.8h0m0-1h0m.1-33.6h0m.1-10.3h0m0 43.4h0m0-30.7h0m.1 .6h0m.1 25.2h0m0 1.3h0m.1-4.8h0m0-7.7h0m.1-.2h0m.1-34h0m0 52.2h0m0-25h0m.1 4h0m0-16.9h0m0 22.9h0m.1-27.4h0m.1 29.5h0m0 3.1h0m.1-9.8h0m0 4.2h0m0-24h0m0 36.6h0m.2-4.1h0m0-24h0m.1 1.8h0m0 20h0m.1-1h0m0-3.5h0m.1-9.5h0" stroke="#000" fill="none" stroke-linecap="round" stroke-width="3.6"/>
<path d="M661 553.7h0m0 20.7h0m0-30.2h0m.1-17.9h0m0 39.6h0m0-18.2h0m.1 .1h0m0 7.6h0m0 1.1h0m.1-28.7h0m0 18.8h0m.1-7.1h0m0 12h0m.1-.9h0m.1 6h0m0-10.7h0m0 6.4h0m0 4.2h0m.1-17.8h0m0-3.9h0m.1 10h0m0 15.9h0m0-18.2h0m.1 8.5h0m0 .3h0m.2 17.6h0m0-12h0m.1-28.9h0m0 46.6h0m0-40.1h0m.1 36h0m0-23.8h0m0 5.6h0m.1 .9h0m0-5.9h0m0 9.3h0m.1 4.3h0m0-23.5h0m.1 35.2h0m.1-35.8h0m0 9.6h0m0 11.8h0m.1-22.1h0m.1-8.6h0m.1 29.8h0m0-3.3h0m.1-20.8h0m0-24.5h0m.1 47.9h0m0-32.8h0m.1 5.9h0m0 5.6h0m.1 20h0m0-35.8h0m0 27.5h0m0-16.5h0m.1 0h0m.1 6h0m0-2.3h0m.1 31.5h0m.1-19.5h0m.1-11.3h0m0 15.1h0m0 20.7h0m0-39.4h0m.1-4.8h0m0 30.5h0m0-16.8h0m0 4.8h0m.1-3h0m.1-24.1h0m0 21h0m0 17.3h0m.1-31.1h0m0 14.3h0m.1-31.8h0m.1 2.3h0m0 20.6h0m0 21h0m.2 .7h0m0-44.9h0m0 46.5h0m.1-14.4h0m0 9.8h0m.1-47.2h0m.1 19.9h0m.1-4.5h0m.1 14.5h0m.1-.8h0m.1-13.1h0m0-22h0m.2 40.1h0m.1-8.2h0m.1 10.8h0m.1-29.9h0m0 37.5h0m.1-8.7h0m.1-5.8h0m.1 19.6h0m0-35.5h0m.1 11h0m0 2.5h0m.1 8h0m.1-3.7h0m.1 23.2h0m.1-22.9h0m.1-1.6h0m0 11.3h0m0-.6h0m.1-14h0m0 2.6h0m.1 2h0m.2-1.5h0m0-7.8h0m.1 1.8h0m.1-3.4h0m.1-1.3h0m0 12.9h0m.1 12.9h0m0-8h0m.1-36.9h0m0 36.6h0m.1-12.2h0m0 8.8h0m.1-34.9h0m.1 44.8h0m0-23.4h0m.1 18.2h0m.1 13.5h0m0-41.3h0m.1-5.1h0m0 10.3h0m.1-9.7h0m.1 29.4h0m0-23.3h0m.1 3.9h0m0 14.8h0m.1 6.4h0m.1-.7h0m0-2.9h0m.1 10.9h0m0-23.4h0m.1 20h0m.1-19.8h0m0 5.6h0m.1-40.3h0m0 34.1h0m.1-10.9h0m.1 29.7h0m0-12.3h0m.1 7.5h0m0-10.9h0m.1-9.2h0m.1 7.2h0m0 4.8h0m.1-11.1h0m0-13.2h0m.1 30.4h0m.1-17.1h0m0 20.1h0m.1 16.4h0m0-14.9h0m.1-35.6h0m.1-8.5h0m0 5.2h0m0 65.3h0m.1-61.4h0m0 24.2h0m.1 4h0m.1-.8h0m0 9.5h0m.1-3.9h0m.2-41.8h0m0 20h0m0 13.3h0m.1 27h0m0-26.2h0m.1 13.8h0m.1-20.9h0m0-31h0m.1 31.1h0m.1 1.9h0m0-19.6h0m.1 55.5h0m.2-7.4h0m0-57.8h0m0 26.3h0m.1-36.7h0m0 25.1h0m.1 38.1h0m.1-47.7h0m0 15h0m.1 12.5h0m0-5.6h0m.1-17.2h0m0-9.3h0m.1 19.1h0m0 11.9h0m.1-1.2h0m0 1.2h0m.1-3.8h0m.1 1.3h0m0-14h0m.1 13.8h0m0 1.3h0m.1-10.3h0m.1-13.8h0m.1 19.8h0m0-3.4h0m.1-13.7h0m0-1.6h0m.1 18.6h0m0-16.7h0m.1-32.3h0m0 25.7h0m.2-6.3h0m0-3.2h0m.1 16.4h0m0-11.2h0m0 2.6h0m.1 2.8h0m0-1.5h0m.2 5.2h0m0 55.1h0m0-53.4h0m.1-2.8h0m0-2.2h0m.1-16.2h0m.1 50.8h0m.1-31.5h0m0 8.9h0m0-22.8h0m.1-10h0m0 16.9h0m0-16.5h0m.1 9.8h0m0-1.2h0m.1 55.8h0m0-44.3h0m.1 1.7h0m.1-1.7h0m0-21.9h0m.1 13.9h0m0 9.4h0m.1-13.7h0m0 .3h0m0-15.6h0m0 24.5h0m.1 19.3h0m.1 2.1h0m0-7.6h0m0-40h0m.1 31.4h0m0-2.3h0m0 27h0m.1-34.2h0m0 11.4h0m0-19.8h0m.1 3h0m0 26.3h0m0-23.6h0m.1 13.4h0m0 1.5h0m.1 0h0m.1-7.4h0m0 4.9h0m0 16.1h0m.1-33.2h0m0 24h0m0-17.3h0m.1-18.5h0m0 46.1h0m.1-12.4h0m0-26h0m0 30.5h0m.1-9.5h0m0-1.2h0m0 .9h0m0-5.2h0m.1-3.4h0m0 1.6h0m.1 17.9h0m0-2.5h0m.1 5.9h0m0-2.3h0m.1-9.8h0m0-1.1h0m0-.8h0m.1-26.1h0m.1 25h0m0 8h0m.2 10h0m0-20.2h0m.1 .3h0m0 6.5h0m.1-8.5h0m.1-7.6h0m0 5.9h0m0 20.4h0m.1-7.6h0m.1 0h0m0-.3h0m.1 29.2h0m0-19.8h0m.1-12.7h0m.1 4.1h0m0 48.8h0m0-50.8h0m.1 3.4h0m.1 3.9h0m.1 53.5h0m0-62.1h0m0 58.1h0m.1-38h0m0-11.7h0m.2 5.4h0m0-3.7h0m.1-2.4h0m0-22.7h0m.1 67.8h0m0-4.1h0m.1-9.2h0m0-17.4h0m.1 9.1h0m0 20.3h0m.1 1.5h0m0 1.6h0m0-15.6h0m.1-11.9h0m0-13h0m.1 41.7h0m0-30.9h0m.1 16.5h0m0-20.2h0m.1 1.5h0m0 32.8h0m0-12.7h0m0 .9h0m.1-23.8h0m0-7.1h0m.1 14.8h0m.1 2.6h0m.3 19.2h0m.1-27.8h0m0 23.4h0m0 .3h0m0-37.9h0m.1 22h0m.1 14.5h0m0-.5h0m0-11.9h0m.1 21.5h0m0-22.6h0m0 24.3h0m.1-29.8h0m0 19.1h0m0-4.8h0m.1-5h0m0 11.9h0m.1-20.6h0m0 30.1h0m.1-22.9h0m.1 10.5h0m.1-2.3h0m.1-.1h0m0 2.8h0m0 3.6h0m0 .6h0m.1-11.6h0m.1 28h0m.1-21.3h0m0-11.6h0m.1 18.8h0m0-16.2h0m.2 11.3h0m.2 .2h0m0-2.8h0m.1-.6h0m.1-3.9h0m0-22.3h0m.1 20.1h0m0 8.9h0m.1-10.4h0m0 7.1h0m0 6.2h0m0 2.3h0m.1-4.1h0m0-.4h0m0 12.9h0m.1-1.6h0m0-16.8h0m0 1.6h0m0 9.5h0m0-11.7h0m.1 16.6h0m0-16.3h0m.1-15.7h0m0 22.1h0m.2-31.4h0m0 30.7h0m0 7.6h0m.1 2.3h0m0-73.1h0m0 60.4h0m0-4.3h0m.1 9.6h0m0-4.6h0m.1-20.1h0m0 40.6h0m0-16.3h0m0-7.1h0m.1 2.3h0m0 11.2h0m0-12h0m0-40.3h0m.1 6.6h0m.1 10.1h0m0 22.6h0m0 .1h0m.1 17.4h0m0-14.8h0m.1-18.7h0m0 21.6h0m0 11.2h0m0-43.8h0m.1 18.1h0m0 20h0m0-20.8h0m0 8.4h0m.1 11.3h0m.1-45.8h0m.1 12.3h0m0 41.4h0m.1-7h0m.1-37.7h0m0 31.5h0m0-15.6h0m.1 5.6h0m.1-10.3h0m.1 5.9h0m0-11.1h0m.1 14.6h0m.1-6.5h0m.1 37.2h0m0-34.9h0m.1-58.5h0m0 56h0m0 12.4h0m.1-13.4h0m.1 13.7h0m0 1.2h0m0-6.6h0m0 10.6h0m.1-3.8h0m0-12.3h0m.1 10.4h0m.1 2.8h0m.1-.8h0m0 9.6h0m0-14.9h0m.1-21.5h0m.1 29.7h0m0-20.9h0m.1 8.6h0m0-28.5h0m.1 24.7h0m.1 1.6h0m0 17.4h0m.1 6.2h0m0-54.2h0m0 25.8h0m.1-13.5h0m.1 12.2h0m0-25h0m.1 38.3h0m.1-3.2h0m0-22.2h0m.1 23.4h0m.1-10.6h0m.1-7.7h0m0-14.5h0m.1 4h0m0 15.9h0m.1 7h0m0 11.5h0m.1-39.1h0m0 19.3h0m.1-12h0m0 19.1h0m.1-33.9h0m.1 30.1h0m.1-23.5h0m0 26.8h0m.1-30.3h0m.1 26.4h0m0 9.2h0m.1-13.3h0m0 29h0m0-6.7h0m.1-11h0m.1-34h0m0 47.5h0m.1-51.8h0m0 30h0m.1 10.9h0m.1-2.6h0m0-30.5h0m.1 31.5h0m0 26.4h0m.1-55.3h0m.1 5.5h0m0-9h0m.1 27.4h0m0 4.3h0m.1-28.3h0m.1 32.6h0m0-18.3h0m.1 11.2h0m0-5.4h0m.1-12.1h0m.1 22.8h0m0-22.5h0m.1 20h0m0-35.9h0m0 13.9h0m.1-.6h0m.1 35.3h0m0-39.3h0m0 7.4h0m.1-25.1h0m.1 26.7h0m0 18.5h0m.1 6.1h0m0-33.7h0m.1 18h0m.1 29.9h0m0-18.6h0m.1-29.7h0m0 11.3h0m.1-8h0m.1 1.1h0m0 24.7h0m.1-20.9h0m0-7h0m.1 26.4h0m.1-40.4h0m0 39.7h0m.1-6.7h0m.1 2.5h0m.1-.1h0m.1 2.4h0m0-6.7h0m.1 1.6h0m.1-29h0m0 36.8h0m0-35.3h0m.1 11.6h0m0 19.2h0m.1 15.1h0m.1-25.7h0m0 34h0m.1-12.7h0m0-20.2h0m.1 15.4h0m.1 14.1h0m0-24h0m.1-39.7h0m0 14.3h0m0 28.7h0m.2 6.6h0m0-39.5h0m0 1.7h0m.1 23.9h0m0-25.8h0m.1 18.4h0m.1 1.6h0m0 17.6h0m.2-50.7h0m0 34.5h0m.1-2.8h0m.1-2.1h0m.1-17.5h0m0 42h0m.1-26.4h0m0-8.6h0m.1-2h0m0-2.3h0m0 2.4h0m.1 7.9h0m0 5.3h0m.1-21h0m.1 35.7h0m.1-22.2h0m.1-9.6h0m0 44.6h0m0-58.3h0m.2 44.2h0m0-21.8h0m.1-18h0m0 22h0m0-26.7h0m0 13.1h0m.1-2.1h0m0-.5h0m.1 44.4h0m.1-42.2h0m0 3.7h0m.1-17.5h0m0 46.8h0m.1-13.4h0m0-14.3h0m.1-.8h0m0-3.6h0m0 11.3h0m.1-6.3h0m.1-11.2h0m.1-5.8h0m0 5.9h0m0 6.8h0m.1 2.9h0m0 2.3h0m0-5.1h0m0-12h0m.1 17.2h0m0-3.4h0m0 1.5h0m.1-.8h0m0-1.7h0m.2 9h0m0-26.5h0m.1 31.3h0m0-36.8h0m.1 31.7h0m0-12.9h0m.1 48.6h0m.1-43.9h0m0 15.9h0m.1-5.9h0m0-16.7h0m.1 28.6h0m0-5.3h0m.1 16.5h0m.1 27.9h0m0-79.4h0m0-5.7h0m0 24.6h0m.1 .8h0m0 11.3h0m.1-32.6h0m0 21.7h0m.1 2.5h0m.1 8.6h0m0-5.1h0m0-9.2h0m.1-1.4h0m0-14.6h0m.1 50.7h0m0-49.1h0m0 36.5h0m.1-27.3h0m0 15.3h0m.1-10.9h0m.1-2.7h0m0 22.4h0m.1-30.5h0m0 14h0m0 1.3h0m.1 7.4h0m.1-15h0m0 12.4h0m0-11h0m.1-5.5h0m.1 11.7h0m.1 22.3h0m0-34.3h0m0 32.1h0m.1-21.6h0m0-9.4h0m0 1.1h0m0 25.4h0m.1-30.2h0m0 5.2h0m.1 23.4h0m0 3h0m.1-24.7h0m0 5.6h0m.1-1.3h0m0 3.4h0m0 44.7h0m.1-37.3h0m0-31.7h0m.1 39.9h0m0-22.6h0m.1 4.4h0m0-1.6h0m.1 19h0m0-2.4h0m.1-18.1h0m.1 35.1h0m0-32.7h0m0 5.3h0m.1 17.1h0m0 26.8h0m.1-34.1h0m.1 18.4h0m0-23.3h0m.1-9.9h0m0 6.3h0m.1-7.6h0m0-9.5h0m0 12.3h0m.1-2.1h0m0 .2h0m.1 14.6h0m0-15.8h0m0 21.8h0m.1-25.9h0m0 .7h0m.2 35.5h0m.3-7.1h0m.1 16.9h0m.1 8.6h0m0-46.4h0m.1 28.1h0m0-29.3h0m0 22.2h0m.1 32h0m.1-51.7h0m.1 38.5h0m0-.8h0m.1-14.1h0m.1-22.6h0m0 40.6h0m0-3.1h0m.1-24.9h0m0 7.8h0m.1 26.8h0m0 1.6h0m.1-50.3h0m0-4.2h0m0 57.8h0m0 2.3h0m.1-25.9h0m0-1.4h0m.1 5.7h0m0 10.9h0m.1-24.8h0m0-6.6h0m0-18.9h0m.1 50.5h0m0-11.8h0m.2-11.3h0m0-16.2h0m.1 32.3h0m0 3.9h0m.1-28h0m0 17.8h0m.1-2.7h0m.1 5.3h0m.1-33.5h0m0 17.3h0m.1-18.8h0m0 47.7h0m.1-28.7h0m0 25h0m.1-5.4h0m0-10.7h0m.1 19.8h0m.1-18.2h0m.1 3.8h0m.1 1.1h0m0 16.9h0m0-41.1h0m.1 18.4h0m0 15.2h0m0-1.8h0m.1 9h0m0-1.1h0m0-24.8h0m.1 18.3h0m.1 .5h0m0-5.1h0m.1 7.8h0m.1-4.9h0m.1 10.9h0m0 1.2h0m.1-40.3h0m0 35.2h0m0-24h0m.1 25.9h0m.1-7.4h0m.1-25.3h0m.2 27.9h0m0-20h0m.1-27.1h0m0 42.7h0m.1 14.9h0m.1-25.1h0m.1 15.4h0m0-31.9h0m.1 37.9h0m0-25.9h0m.1 6.2h0m0 9.1h0m.1-2.6h0m0 4h0m0 7.5h0m0-14.6h0m.1 6.3h0m0-2.4h0m.1-33h0m.1 14.3h0m.1 19.7h0m.1 1.8h0m0 2.4h0m.1 5.4h0m.1-7.2h0m0-15.5h0m.1 9.4h0m0-13.9h0m0 27.3h0m0-1.2h0m.1-11.9h0m0-.3h0m.1 9.2h0m.1-14.6h0m0-11h0m.1 22.8h0m0 10.6h0m0-21.2h0m.1 4.6h0m.1-12.3h0m0 24.9h0m0 14.1h0m.1-35.6h0m0-7.7h0m.1-21.4h0m.1 27.4h0m0-3h0m.1-34.6h0m0 41h0m.1-12.3h0m0 23.5h0m.1 6.4h0m0-34.4h0m.1 15.6h0m0-27.3h0m.1-1.6h0m.1 28.9h0m0 5.6h0m.1-32.9h0m0 34.4h0m.1-32.4h0m.1 32.8h0m0-19.4h0m.1-2.1h0m0 1.3h0m.1 5.8h0m.1-19.6h0m0 29.6h0m.1-18.9h0m.1-2.4h0m0 .8h0m.1 44.5h0m.1-47.3h0m.1 14.7h0m0-16.5h0m.1 28h0m0-5.2h0m.1-25.2h0m.1 3.8h0m0 7.7h0m.1 27.4h0m0-19.5h0m.1-6.1h0m.1-5.9h0m0-16.6h0m.1 23.7h0m0-12.6h0m.1 17.6h0m.1-9.8h0m0 10.5h0m.1 21.7h0m0-71.8h0m.1 55.5h0m.1-23h0m0-.3h0m.1-9.1h0m0 26h0m.1-4.8h0m.1-14h0m0 15.8h0m.1 12.5h0m0-9.2h0m.1-29.9h0m.1 11.5h0m0 8h0m.1 .1h0m0 5.3h0m.1 12h0m.1-9.6h0m0-26.5h0m0 19.6h0m.1 17.7h0m.1-23.1h0m.1 37.4h0m0-42.8h0m.1 18.5h0m0-10.1h0m.1-7h0m.1 25.4h0m.1-22.9h0m.1-10.2h0m0-25.8h0m.2 57.6h0m.1-43.3h0m.1 59.2h0m.2-52.1h0m.1 22.3h0m.2-2.8h0m.1-12.5h0m0 22.6h0m.3-21.3h0m0 19.1h0m.1-19.8h0m.1 11.9h0m0 3.5h0m.1-24.4h0m0 12h0m0 4h0m.1 18.7h0m.1 20.6h0m0-47.3h0m.1 25.7h0m0-21.2h0m.1 17.4h0m.1-5h0m0-17.8h0m0-1.9h0m0 1.7h0m.1-4h0m.1 10.6h0m.1-9.2h0m0 32.4h0m0-8.4h0m.1-26.1h0m0-.8h0m.1 5.4h0m.1 .8h0m.1 .2h0m0 1.8h0m.1-6.7h0m0 5.4h0m.1-4.5h0m0 1.1h0m0 16.4h0m.1-24.2h0m0-.5h0m0 11.2h0m0 .3h0m.1-6.5h0m0-9.4h0m0 15.4h0m0-5.6h0m.1-11.5h0m0 3.6h0m0 14.3h0m.1-8.9h0m0 .4h0m0-3.7h0m.1 1.2h0m0-6.3h0m0 28.9h0m.1-38.5h0m0 7.5h0m0 13.3h0m0-11.3h0m0-7.3h0m0 49.9h0m.1-31.7h0m.1 12.8h0m0-8.7h0m.1-9.2h0m.1 24.3h0m.1-15.3h0m0-8.7h0m0 15.3h0m.1-27.8h0m0 9.5h0m.1 10.2h0m.1-14.3h0m.1-3.3h0m.1-5.6h0m0 25.7h0m0 .5h0m.1-18.6h0m0 26.5h0m.1-4.3h0m.2-24.5h0m0-1.5h0m0-4.3h0m.2 18.5h0m0-10h0m0 10.7h0m.2-4.2h0m.1 15.5h0m.2-19.2h0m.1 20.1h0m.1-9.6h0m0 42.6h0m.1-37.3h0m0-6.5h0m.1 1.9h0m.1-9.6h0m.1 9.7h0m0 60.1h0m.1-32h0m.1-44.2h0m0 54.2h0m.2-9.7h0m0-17.7h0m.2-18.8h0m.1 11.3h0m0 8.6h0m0 3.4h0m0-15.1h0m.1 8.8h0m0-9.1h0m0 19.7h0m.1-5.6h0m.1 6.1h0m0 45h0m.1-39.8h0m0-30h0m.1 7.9h0m0 16.1h0m0-15.7h0m.2 38.5h0m0-50.5h0m.1 16.3h0m.1-.3h0m0 33.9h0m.1-31.2h0m.1-5.5h0m.1 46.3h0m0-7.6h0m.1-29.6h0m.1 19.3h0m.1-5.4h0m0-20.9h0m.1 11h0m.1-13.3h0m.1 4.9h0m0 39.3h0m.1-6.6h0m.1-25h0m0 9h0m.1-25.1h0m0 25.7h0m.1 18.3h0m.1-3h0m0-18.3h0m.1-16.8h0m0 9.5h0m.1 20.8h0m.1 5.6h0m0-1.8h0m.1-8.3h0m0-23.8h0m.1 24.1h0m.1-5.1h0m0 2.5h0m.1-12.7h0m0-10.1h0m.1 41.8h0m.1-23.2h0m0 29.1h0m0-22.5h0m.1 5.8h0m0-19.5h0m.1 15.4h0m.1-43.3h0m0-3.2h0m.1 13.8h0m0 21.1h0m.1 9.8h0m.1-31.8h0m0 24.3h0m.1 .5h0m0 .8h0m.1-43.5h0m.1 32.2h0m0 7.5h0m.1 7.7h0m0-7h0m.1-21.4h0m.1 20.7h0m0 1.8h0m.1 12h0m0 13.8h0m.1-33.4h0m.1-5.8h0m0-9.6h0m.1 13.4h0m0 12.8h0m.2-7h0m0 16.6h0m.1-1.7h0m.1 13.1h0m0-57.2h0m.1-19.5h0m0 50.4h0m.1 9.3h0m.1 10.4h0m0-28.7h0m.1 37h0m0-3.7h0m.1-22.3h0m.1 6.8h0m0-22.7h0m.1 2.3h0m0 8.9h0m.1 16.7h0m.1-21.5h0m0 34h0m.1-3.6h0m0-8.6h0m.1-17.4h0m.1-.9h0m.1 12.2h0m0 18.3h0m.1-25.5h0m.1 30.3h0m.1-32.1h0m.1 46.9h0m.1-59.1h0m0 5.2h0m.1 11.5h0m0 46.1h0m.1-55.9h0m.1 35.6h0m0-26h0m0 24.4h0m0 4.2h0m.1-44.6h0m0 34.5h0m.1-15.3h0m.1 8.4h0m0 8.8h0m0-27.5h0m.1 15.9h0m0 40.5h0m.1-60.4h0m.1 23.5h0m0 16.5h0m.1-39h0m.1 13.8h0m0 1.3h0m.1-44.2h0m.1 64.5h0m0-2.3h0m.1-34.1h0m0 5.8h0m0 35.6h0m.1-21.2h0m0 14.8h0m0-16.9h0m.1 29.9h0m0-11h0m0-2.1h0m.1-15.6h0m0-17.3h0m.1 12.2h0m.1 19h0m.1 3.8h0m0-4.2h0m0-2.4h0m.1 .7h0m0-31.4h0m.1 33.6h0m.1-28.6h0m0-17.1h0m.1 2.8h0m.1 68.2h0m0-65.8h0m.1 17.5h0m0-1.4h0m.1 24.6h0m0 10.2h0m0-6.2h0m0 7.4h0m.1-26.8h0m0 16.1h0m.1-29.5h0m.1-4.5h0m0 34.2h0m.1-28.4h0m0 42.7h0m.1-14.5h0m0 6.9h0m0-9h0m0-.7h0m0 16h0m.1-15.7h0m.1 15.2h0m0-48.6h0m.2 41.7h0m0 14.7h0m.1-2.1h0m0-17h0m.1-21.5h0m0 42.1h0m0-34.8h0m.1 39.3h0m.2-24.3h0m0 24h0m.1-17h0m0-4.9h0m0-4.6h0m.1 .6h0m0-3.4h0m0 25.5h0m.1-11.3h0m0-11.2h0m.1 11.5h0m.1-.5h0m0 0h0m0-20h0m.1-37.8h0m.1 68.1h0m.1-28.5h0m0 2.9h0m.1 10.1h0m0 6.6h0m0 7.6h0m.1-24.6h0m.1-2.9h0m0 18.5h0m0-4.9h0m.1-1h0m.1-10.3h0m.1 2.4h0m.1-6.7h0m0 23.6h0m0 4.7h0m.1-9.6h0m0 4.6h0m.1-49.7h0m.1 53.8h0m0 10.7h0m0-16.3h0m0-27.2h0m.1 14h0m.1 10.1h0m0 12.8h0m0-20.8h0m0 27.4h0m0-21.5h0m.1-10.1h0m0-9.3h0m0 18.9h0m.3 4.8h0m0-10.1h0m.1 11.9h0m0-16.2h0m.1 22h0m0-16.1h0m0 7.5h0m.1-56h0m0 30.5h0m.1 .6h0m0 16.8h0m.1-16.9h0m.1 0h0m0 45h0m0-30h0m.1-13h0m0 19.7h0m0 6.2h0m.1-36.8h0m0 27.8h0m0 2.9h0m0-8.5h0m.1-5.9h0m.1-34.2h0m0 56.4h0m0-14.6h0m.1 6.7h0m.1-5.4h0m.1-2.1h0m.1 18h0m0-75h0m.1 52.2h0m.1 5.5h0m0 8.6h0m.1-10h0m0-21h0m.1 45.9h0m.1-20h0m0-31.6h0m.1-1.1h0m0 30.4h0m.1-4.7h0m.1-28.7h0m0 3.8h0m.1 38.9h0m0-23h0m.1-28.7h0m.1 28.2h0m0 13.9h0m0-16.5h0m.1-19.3h0m0 8h0m.1 27.4h0m.1-32.2h0m0 38.8h0m.1-15.1h0m0 2.6h0m.1-16.8h0m.1-4.2h0m0 24.6h0m0-4.1h0m.1 3.5h0m0-33h0m0 16.3h0m.1-9.7h0m.1 23.6h0m0-11.5h0m.1-34.1h0m0 29.8h0m.1 25.5h0m.1 .1h0m0-4.3h0m0-38.5h0m.1 20.5h0m.1 3.7h0m0-12.7h0m.2 0h0m.1-6.9h0m0 24.1h0m.1-26.4h0m0 29.4h0m.1-23.6h0m.1-5.4h0m.1 7.9h0m0 22h0m.1-20h0m.1 20.1h0m.1 3.7h0m.1 3.1h0m.1 .6h0m0 6.5h0m0-40h0m.1-2h0m0-4.6h0m.1-6.3h0m.1 31h0m.1-9.5h0m.2 26.1h0m.1-39.3h0m0 30.6h0m.1-9.7h0m.1-23.2h0m0 37h0m.1-11.8h0m.1-14.1h0m.1-4.9h0m0 4h0m.1 12.9h0m0-20.7h0m.1 10.7h0m.1-11.1h0m0-1.2h0m.1 13h0m.1-17h0m0 14h0m.1-20.5h0m0 11.3h0m.2 13.1h0m0 20.2h0m.1-11.9h0m.2 10.8h0m0-46h0m.1 30.2h0m0-16.7h0m.1 14.9h0m.1-11.5h0m.1 19.9h0m.1-3.5h0m.1 14.2h0m0-36.3h0m.1 12.7h0m.1-7.4h0m0-9.8h0m.1 30.9h0m0-39.7h0m0 5.3h0m.1 25.6h0m0-20.9h0m.1 35h0m.1-53.2h0m0 16.4h0m0 16h0m.1-1.7h0m0 21.6h0m.2-16h0m0-21.8h0m.1-13.3h0m0 35.9h0m.1 12.5h0m.1-42.9h0m0 40.7h0m.1 3.9h0m0-66.9h0m0 56.1h0m.1-17h0m.1 21.3h0m0-30.4h0m0 .1h0m.1 .8h0m0 36.8h0m0-62.3h0m0 23.7h0m.1 11.6h0m.1-10.6h0m0-11.8h0m0 14.5h0m.1 21.6h0m0-21.8h0m.1-25.9h0m0 23.8h0m.1 25.6h0m0-35.7h0m0 12.2h0m.1-9.2h0m0 5.1h0m.1-15.9h0m0 35.8h0m.1-28.9h0m0-8.9h0m0 31h0m.1-20.5h0m0 4.9h0m0-4.2h0m.1 6.8h0m0-1.8h0m0-20h0m.1 29.1h0m0 8.8h0m.1-13.6h0m.1-8.9h0m0-21.1h0m0 26.3h0m.1 7.2h0m0 12.5h0m.1-13.5h0m.1-38.5h0m.1 53.2h0m0-32.4h0m0 12.6h0m0 .1h0m.1 37.1h0m0-42.5h0m.1 16.2h0m0-11.3h0m0-23.6h0m0 38h0m.1 13.5h0m0-28.1h0m0 4.5h0m0-.5h0m0-.9h0m.1-18.3h0m0 38.1h0m.1-21.6h0m0-7.7h0m.1-16.1h0m0 6.8h0m0 18.2h0m0-22.2h0m.1 7.4h0m.1 0h0m0 1.2h0m0 4.2h0m0-21.3h0m.1 57.7h0m.1-4.5h0m0-25.2h0m.1-2.4h0m0 33.2h0m.1-5.3h0m.2-47.3h0m0 42.2h0m0-19.4h0m.1-5.9h0m0-8.1h0m.1-12.8h0m0 23.4h0m0-6.3h0m.1 36.5h0" stroke="#000" fill="none" stroke-linecap="round" stroke-width="3.6"/>
<path d="M744.7 497.2h0m.1-9.5h0m0 5.9h0m0-19.5h0m.1 22.4h0m0-25.7h0m.2 16.2h0m0 10.9h0m.1 9.1h0m0-39.1h0m.1 69.7h0m.2-46.3h0m.1-6.6h0m.1 17.8h0m.1 30.6h0m0-29h0m.1 25.6h0m0-47.3h0m0 17.5h0m.1-.8h0m.1 11.9h0m.1 16.9h0m0-59.4h0m0 53.2h0m.2 5.2h0m0-37.4h0m.1 18.2h0m.1 7.6h0m.1 18.3h0m0-21.2h0m.1 13.5h0m.2-2.3h0m0-9.4h0m.1 15.3h0m0-48.1h0m0 46h0m.1-25.6h0m.1 10.8h0m0-.8h0m.1-20.5h0m0-1.6h0m0 25h0m.1-10.2h0m0-2.8h0m.1 33.8h0m.2-14.6h0m0-5.1h0m.1 11.5h0m.1 26.4h0m.1-23h0m0-7.8h0m.2-16.5h0m.1 27.2h0m.1-30.5h0m0-.1h0m0 16.8h0m.1-21h0m0 7.8h0m0-11.1h0m.1 22.8h0m.1 6.3h0m.2-15.6h0m.1 .5h0m.1-13.2h0m0 19.1h0m.1 1.3h0m.1 5.9h0m.1-6.9h0m.1-1.1h0m0 1.8h0m.1-4.5h0m0 2.6h0m.1 5.5h0m.1-12.2h0m.1 .6h0m.2 7.3h0m0-5.5h0m.1-16.3h0m0 42.3h0m.2-19.4h0m0-3.5h0m.1-8.6h0m0 5.4h0m.1 23.6h0m.1-9.9h0m0-24.9h0m.1 44h0m0-48.8h0m.1 32.4h0m0-24.7h0m.1 20.7h0m0-3h0m.1 7.7h0m.1-.9h0m0-15.2h0m.1 22.2h0m0-31.7h0m.1 19.4h0m.1 24.5h0m0-45.2h0m.1 17.9h0m0-9.8h0m.1 14.2h0m.1 17.9h0m.1 4.6h0m0-13h0m.1-5.9h0m.1-12.8h0m0-5.2h0m.1 28.8h0m0-7.7h0m.1-5.5h0m.1 2.6h0m0-11.2h0m0-16.2h0m.1 34.7h0m0-12.4h0m.1-13.3h0m.1 30.7h0m0-9.9h0m.1-20h0m0 9.5h0m.1-9.7h0m.1 34.3h0m0-11.3h0m.1 7.7h0m0-5.4h0m.1-23h0m.1 23.5h0m0-38.9h0m.1 52.4h0m.2-18.7h0m0-1.2h0m.1-1.4h0m.1 9.9h0m.1 6.2h0m0-44.7h0m.1 17.3h0m.1 29.6h0m.1 3.1h0m.1-8h0m.1-15.1h0m0-7.1h0m.1 .1h0m0-6.7h0m.1 9.3h0m.1-8.6h0m0 4h0m.1-7h0m0 10.6h0m.1-10h0m.1 12.1h0m.1 12.1h0m0 17.6h0m.3-8.5h0m0-14.1h0m.1 .5h0m.1 11.7h0m0-29.4h0m.1 31.7h0m0-1.7h0m.1-13.9h0m.1 13.3h0m0-5.4h0m.1-9.3h0m0-23.8h0m.1 27.9h0m.1-12h0m0 29h0m0-17.4h0m.1-32.4h0m0 30.2h0m.1 18.5h0m.1-3.2h0m0-3.2h0m0 12.1h0m.1-41h0m0 45.9h0m.2-13.5h0m0 .2h0m.1-.3h0m.1-25.9h0m.1 26.2h0m0 .1h0m0-29.1h0m.1 27.6h0m.1-21.2h0m.1 18.2h0m0 3h0m.1 7.5h0m.1-3.6h0m0 0h0m.1-2.4h0m0-18.7h0m.1 23.1h0m0-1.7h0m.1-8.1h0m0 5h0m0 23.2h0m.1-8.1h0m0-46.2h0m0 4.6h0m.2 35.8h0m.1-3h0m0 1.5h0m0-14.3h0m.2 21.3h0m0-19.2h0m.1 6.2h0m0 9.3h0m0-20.3h0m.1 9.3h0m.1 5.8h0m0 6.8h0m0-10.1h0m.1 1h0m0 5.1h0m0-2.4h0m.1-23.2h0m0 28h0m.1-43.9h0m0 24.2h0m.1 20.8h0m0-7h0m0-3.7h0m0-42.1h0m0 37h0m.2 29.9h0m.1 1.7h0m0-73.5h0m0 47.3h0m.1-1.6h0m0-11h0m0 26.4h0m.1-19.6h0m0 17.3h0m0-2.9h0m.1-10.3h0m.1-26.6h0m0 30.9h0m0 8h0m0-12.6h0m.1-33.7h0m0 26.5h0m.1-1.8h0m0 22.4h0m.1-7h0m0-31.7h0m.1 25.6h0m0 5.1h0m.2 18.1h0m0-20.5h0m.1-19.6h0m.1-32.3h0m0 49.2h0m.2-50.5h0m0 57.6h0m.1 11.6h0m0-54.4h0m0 42.9h0m0 2.2h0m.1-33.5h0m.1 4.7h0m0-1.5h0m.1 25.3h0m.1-21h0m0-12.2h0m.1-12.6h0m0 10.2h0m0-.2h0m0 34.8h0m.1-32.1h0m.1 21h0m0 16.8h0m.1-7.8h0m0-23.4h0m0-5.2h0m.2-26.8h0m.1 55.9h0m0-32.7h0m.1 30.1h0m.1-25.4h0m.1 17.2h0m.1 1.4h0m.1-18.1h0m0-14.5h0m.1 40.1h0m0-9.7h0m.1-39.2h0m.1 37h0m.1-41.5h0m.1 22.5h0m0 2.2h0m.1-22.5h0m.1 27.7h0m.1 9.6h0m0-36.4h0m0 16.6h0m.1-17.2h0m0 10.1h0m.1 37.9h0m.1-36.3h0m0-15.8h0m.1 33.3h0m0 22.3h0m0-37.2h0m.1 40.3h0m.1-44.9h0m0-8h0m0 27.8h0m.1 4.6h0m0 3.7h0m.1-54.5h0m0 20.8h0m.1 21.7h0m0-16h0m0 25.6h0m.1 11.8h0m.1-54.3h0m0 26.4h0m.1-14.6h0m.1 8.6h0m0-20.8h0m.1 15h0m0-20.2h0m.1 62.3h0m.1-38.1h0m0-8.4h0m0-3.9h0m.1 3.1h0m0 7.7h0m.1-10.6h0m.2-16.4h0m0 18.1h0m0-2.9h0m0-.7h0m.1 15.1h0m0-6.8h0m0-21.7h0m0-1.1h0m.1 17.8h0m0 2.7h0m.1 12.1h0m.1-17.8h0m0 3.3h0m.1 15.8h0m0-7.3h0m.1 19.8h0m0-21.5h0m0 17.5h0m0-18.7h0m0-24.3h0m0 21.7h0m.1 10.7h0m.1-2.5h0m.1-21.5h0m0 11.2h0m.1 3.4h0m0-26.2h0m.1 24.2h0m0-11.5h0m.2 12.2h0m0 28.2h0m.1-37.2h0m0-7.4h0m.1 24.5h0m0-2.6h0m0 32.2h0m.1-20.2h0m0-20.9h0m0 15.2h0m0-10.7h0m.1 4.7h0m.1 21.5h0m0-38.8h0m0 6.5h0m0 24.4h0m.1-19.3h0m0 17.8h0m.1-40.1h0m0 25.9h0m0-16.8h0m0-.6h0m.1 14.8h0m0-5.9h0m.1 10.8h0m0 3h0m.1-2.3h0m0 56.2h0m.1-29.5h0m0-33.3h0m0-3.9h0m0-5.5h0m.1 29.3h0m0 10.1h0m.1-5.4h0m.1-5.9h0m0-21.6h0m0 4.6h0m.1-13.5h0m0 31.9h0m.1 21.5h0m.1-35.4h0m.1 7.2h0m0 2.6h0m.1-21.4h0m0 32.1h0m.1-19.3h0m0 13.8h0m.1-17.2h0m0 38h0m.1-20.9h0m0-18.7h0m.1 16.7h0m0-7.3h0m.1 15.5h0m.1-9.4h0m0-10.4h0m0-4.7h0m.1 36.3h0m0-27.7h0m.1 32.1h0m.1-26.1h0m0 12.6h0m.1 10.7h0m.1-20.2h0m.1 .7h0m0-14.6h0m.1 18.5h0m0 10.2h0m.1-2.4h0m.1 16.7h0m0-31.8h0m.1-17.2h0m0 17.7h0m.1 6.9h0m0-19.6h0m.1 11h0m0-13.1h0m0 38.6h0m.1-27.9h0m0-7.4h0m.1 14.9h0m.1-13.5h0m0 .7h0m.1 11.8h0m0 12.6h0m.1-5h0m0-25.1h0m.1 12.3h0m0 5.3h0m.1-4.6h0m0-17.9h0m.1 22.8h0m.1 8.5h0m0-11.6h0m.1 7h0m0 7h0m.1-24.1h0m.1-4h0m0 17.1h0m.1 .9h0m0 22.3h0m.1-7.5h0m.1-19.2h0m0 21.3h0m.1-15.7h0m.1 5.7h0m0-17.4h0m.1 2.6h0m0 46.6h0m.1-48.6h0m.1-4.6h0m.1 25.8h0m.1-1.6h0m.2 16.4h0m.1-11.4h0m.1-2.9h0m0 10h0m.3-9.1h0m0 7.3h0m.1-3.5h0m.1-11.4h0m.1-10.5h0m0 15.1h0m.1 8.1h0m.1-28.9h0m.1-5.9h0m.1 50.8h0m0-36.1h0m.1-7.8h0m.1 42.7h0m.1 8.3h0m0-13.6h0m.1 2.1h0m0 6.4h0m.1-57.3h0m0 19.3h0m.2 10.8h0m.1 11.2h0m0 5.2h0m0 5.7h0m.1-26.3h0m0-7.9h0m.1 38.7h0m0-41.1h0m.1-5.6h0m0 34.1h0m.1 10.1h0m0-39.7h0m.1 20.7h0m.1-2.1h0m0-23.8h0m.2 8.8h0m.1 19.7h0m0 19.6h0m0-16.6h0m.1 4.2h0m.1 3.3h0m0-9.2h0m.1 16h0m0 1.5h0m0 1h0m.1-40.8h0m.1 16.5h0m.1 9.1h0m.1 30.1h0m0-23.3h0m.1-1.6h0m0 .5h0m.1 2.5h0m0 18h0m0-6.4h0m.1-23.4h0m.1 8.7h0m0-25.1h0m.1 25.2h0m0-5.6h0m0-6.1h0m.1 1.1h0m.1-10.9h0m0 5h0m.1-9.2h0m0 23.9h0m.1 2.3h0m0 9.2h0m.1-18.6h0m0 5.7h0m.1 25.7h0m0-31.2h0m0 16.5h0m0-19.9h0m.1 22.9h0m0-25.4h0m.1-5.6h0m0 40.8h0m.1-7h0m0-11.6h0m.1 5.8h0m.1 19.4h0m0-16.4h0m.1-3.8h0m0-.6h0m.1 15.2h0m0-7.6h0m0-7.7h0m.1-17.1h0m.1 10.3h0m.1 10.1h0m0-36.8h0m0 52.7h0m0-23.8h0m.1-55h0m0 59.6h0m0 4.1h0m.1 5.5h0m.1-18.1h0m0-23.6h0m.1 19.3h0m0-19.9h0m.1 42.3h0m.1-10.8h0m0-51.4h0m.1 27.7h0m0 31.6h0m0 15.2h0m.1-13.4h0m0-13.9h0m.1 4.1h0m0-6.4h0m.1 7.9h0m0-15.2h0m.1 38.3h0m0-19.5h0m0-11.1h0m0 25.4h0m.1-21.3h0m0-5.4h0m.1 7h0m0 12.1h0m0-.3h0m0-6.1h0m.1 7.8h0m0 9.5h0m0-16.4h0m0 16.3h0m.1-23.9h0m0-3.9h0m0 30h0m0-44.2h0m.1 12.7h0m0 20.2h0m.1-6.2h0m0 9.4h0m0-19h0m.1 11.1h0m0 7.8h0m.1-38.4h0m.1 16.6h0m0 19.9h0m.1-15.2h0m0 24.9h0m0-25.1h0m0 4.1h0m.1-7.1h0m0-22.7h0m0 31.2h0m.1 14.6h0m0-7.6h0m.1 .8h0m0 7.9h0m0-44.1h0m.1 27.4h0m0-10.5h0m.1 .4h0m.1 8.1h0m0-1.9h0m0-6.8h0m.1 26.2h0m0-20.5h0m0-3.1h0m.1-15.2h0m0 18h0m.1-48.2h0m0 34.6h0m0 18.3h0m.1 1.4h0m.1-19.8h0m0 4.1h0m.1 16.9h0m0-9.3h0m.1-2.1h0m.1-20.2h0m0-2.4h0m.1 28.2h0m0 7.3h0m0-38.1h0m.1 41.4h0m0-12.7h0m0 4.1h0m0 3.6h0m.1-24.6h0m0 18.9h0m.1-15.9h0m.1 38.1h0m0-38.7h0m.1 10.8h0m0 13.2h0m0-15.9h0m0 19.1h0m.1-7h0m.1-35.1h0m.1 37.7h0m0-39.4h0m.1 18.8h0m.1 5.6h0m.1-40.3h0m0 24h0m.1 8.7h0m0 2.7h0m.2-1.5h0m.1 3.6h0m.1-14.7h0m.1 19.6h0m.1-25.7h0m.2 30.2h0m0-19.8h0m0 20.8h0m.1-41.5h0m0 29.6h0m.1 2.1h0m.1-17.1h0m.1 29h0m.1-28.1h0m0 31.3h0m.1-5.1h0m0-21.4h0m0 19.6h0m.1-42.7h0m.1 15.2h0m0 28.7h0m.1-19.4h0m0 28.5h0m.1-7.6h0m.1-23.6h0m0-16.1h0m.1-3.9h0m0 5.2h0m.1 1.2h0m.1 7.6h0m0 24.6h0m0-41.2h0m.1 12.7h0m0-19.4h0m0 15.2h0m.1-5.5h0m.1 23.5h0m0-7.8h0m.1 5.3h0m0-17.9h0m.1-4.6h0m.1 7.8h0m0 6.5h0m.1 21.9h0m0 5.5h0m.1-5.9h0m0-39.2h0m.1 13.8h0m0 14h0m.1-25.7h0m0 23.1h0m.1-22.5h0m.1 8.2h0m0 18.2h0m.1-18.2h0m0 31.4h0m.1-15.8h0m0-31.5h0m.1 17.3h0m0 9.5h0m.1-36h0m0 35.1h0m.1-19h0m0-8.8h0m.1 23.2h0m0 15.4h0m.1-37.6h0m.1 15.1h0m0-4.7h0m.1 9.3h0m0-4.3h0m.1-19.8h0m.1 6.7h0m0 25.2h0m.1-26.6h0m0 12.7h0m.1-6.7h0m.1-12.3h0m0 12.3h0m.1-16.6h0m0 47.8h0m0-27.4h0m.1 9.8h0m0-16h0m0-1.6h0m.1 7.2h0m0 17h0m.1 22.9h0m0-46.8h0m.2-8.1h0m.1 3h0m.2 5h0m0-1.4h0m0-7.3h0m0 5.1h0m0 23h0m.1-26.7h0m.1 21.3h0m.1-20.1h0m0 42.4h0m0-54.7h0m.1 36.3h0m0-6.7h0m.1-8.3h0m0 12.8h0m0-22.8h0m.1 10.9h0m0-3h0m.1-12.2h0m0 15.6h0m.2-2.4h0m0-8h0m0 41.9h0m.1-52.3h0m0 14.4h0m0-9.6h0m0 10.1h0m.1-10.9h0m0 43.9h0m.1-46.1h0m.1 34.8h0m0-18.8h0m.1-14h0m0 38.1h0m.1-25.8h0m.1 23.2h0m.1-27.5h0m0 9.6h0m.1-4.8h0m.1-13.3h0m0 .8h0m.1 13.1h0m0 9.8h0m0-12.1h0m.1 7.4h0m0-17.2h0m.1 53.1h0m0-41.3h0m.1-.9h0m0-9.2h0m.1 16.6h0m0-.6h0m.1-8h0m.1 33.9h0m0-34.8h0m0 22.1h0m.1-5h0m0 5.4h0m.1 15.6h0m.1-16.4h0m.1-16.5h0m0 16.2h0m0 20h0m.1-5.9h0m.1 3.7h0m0-36.5h0m.1 12.5h0m.1-2.6h0m.1 28.2h0m0-10.9h0m.1 8.4h0m0-25.7h0m.1-10.4h0m.1 12.2h0m0-2.8h0m.1 38.8h0m0-3.3h0m.1-35.7h0m.1 38.3h0m0-7.8h0m.1-22.5h0m0 1.9h0m.1-16.2h0m.1 44.2h0m0-47.5h0m.1 23.8h0m.1 6h0m0-25h0m.1 33.2h0m0 1.7h0m.1-4.4h0m.1-.8h0m0 3.7h0m.1-7.9h0m0-19h0m.1-17.8h0m.1 27.3h0m0-12.8h0m.1 19.6h0m.1 2.1h0m.1 5.3h0m0-30.9h0m.1 41h0m.1-20.3h0m.1 15.8h0m0-.5h0m.1-15.4h0m0 24.5h0m.1-21.1h0m.1 6.1h0m0-20.4h0m.1 3.4h0m0 12.9h0m.1 .7h0m.1 17.4h0m0-4.4h0m.1-29.8h0m0-.5h0m.1 10.2h0m.1 20.1h0m0-40.9h0m.1 12.1h0m0 0h0m.1 21.6h0m.1 14.3h0m0-16.9h0m.1 12.1h0m0-10.3h0m.1-23.7h0m.1 13.5h0m0 14.2h0m.1-29.5h0m.2 13.5h0m0 26.9h0m.2-29h0m.2 25.5h0m.1-35.7h0m.1 10.3h0m.1 3.3h0m.1-.5h0m0-5.6h0m.1 8.8h0m0-18.2h0m.1 18.1h0m.1 16.1h0m0-27.1h0m.1-16h0m0 12.4h0m.1 27.6h0m.1-21.7h0m0 16.7h0m.1-2h0m0 .3h0m.1-6.8h0m.1-2.1h0m0-7.6h0m.1 37.8h0m0-15h0m.1 16.9h0m.1-32.4h0m0 25.2h0m.1-20.1h0m0 .6h0m.1 4.2h0m.1 10.9h0m.1-12.8h0m.1 12.6h0m.1-2h0m.1-9h0m0-9.8h0m.1-19.6h0m.1 55h0m0-28.1h0m.1 1.4h0m.1 9.4h0m0-18.1h0m.1-8.9h0m0 17.3h0m.2-12.7h0m0-8.9h0m.1 17.7h0m.1 17h0m.1-5.4h0m0-3.1h0m.1 .9h0m.2-7.2h0m.1 20.7h0m0-17.3h0m0-3.4h0m.1 1.1h0m.1 10.2h0m.1 2.5h0m0-51.8h0m.2 57.7h0m.1-7.8h0m.1-22.6h0m.1 23.9h0m0-6.5h0m.1-16.4h0m0 14.4h0m.2 8.1h0m0-15.4h0m.1 12h0m0-19.7h0m.1 7.9h0m.2 19.7h0m0-32.6h0m0 9.4h0m.1 22.2h0m0-10.2h0m.1-2.2h0m0 17.1h0m0 2.9h0m.1 .8h0m0-32h0m.3 9.4h0m0 16.3h0m.1 9.8h0m0-34.8h0m.1 19.4h0m.2-12.6h0m0 14.7h0m.1-8.4h0m.1 11.3h0m0 3.7h0m.1-3.3h0m0 .9h0m0-40.2h0m.1 19.6h0m.1-28.7h0m0 45.2h0m.1-29.3h0m0 10.7h0m0 21h0m.1-20.6h0m0-16.4h0m.1 8.3h0m.1-2.5h0m.1 19.6h0m0 12h0m0-.6h0m0 1.9h0m0-42.5h0m.1 45.6h0m0-4.7h0m.1-1.4h0m0-23h0m0 22.1h0m.1-12h0m0 12.5h0m0-30.4h0m.1 37.5h0m0-.6h0m.1 7.8h0m0-9.9h0m0-26.4h0m.1 7.8h0m0 0h0m.1 13.8h0m.1-.6h0m0-17.9h0m.1 20.7h0m0-19.4h0m.1 9.3h0m0 7.2h0m.1-21.9h0m0 25.4h0m.1-23.2h0m.1-14.8h0m.1 38.1h0m.1-14.4h0m.1-9.1h0m0 19.8h0m.1 .3h0m0-29h0m0 15.2h0m.1-11.6h0m.1-3.9h0m0-13h0m.1 32.5h0m0-60.2h0m.1 48h0m.1-6.6h0m0 2.8h0m.1-2.3h0m0 17h0m.1-10.9h0m.1-23.2h0m0 11.7h0m.1 14.4h0m0-12.2h0m.1 8.8h0m.1 14h0m0-32.5h0m.1 6.9h0m0 22.4h0m.1 1.9h0m.1-25.2h0m0 13.1h0m.1-5.9h0m0-.3h0m.1 22.6h0m.1-16.5h0m0 19.2h0m.1-58.8h0m0 32.4h0m.1 21.3h0m.1 5.7h0m.1-38.1h0m0-2.3h0m.1 4.3h0m.1 5.8h0m0 6.2h0m.1 18.7h0m0-13.2h0m.2-7.7h0m0-16.5h0m0-21.6h0m.1 23.5h0m0 51.9h0m.2-5.1h0m0-3h0m.1-38.7h0m.1-.6h0m.1 51.8h0m.1-39.3h0m.2 10h0m0 3.4h0m.1 5.8h0m.1-21.6h0m0-5.5h0m.1 27.8h0m.2-5.5h0m0-10.2h0m.1 4.8h0m0-45.5h0m0 52.5h0m.1-18.5h0m.1 15.9h0m0-29.6h0m0 12.4h0m.1 14.6h0m0-14.6h0m.1 20.9h0m.1-20.5h0m.1 29.3h0m0-27.4h0m0-9.7h0m.1 7.9h0m.2-27.2h0m.1 14h0m.1 .5h0m0-6.2h0m.1 31.3h0m0-38.2h0m0 48.6h0m.1-34.3h0m0 42.3h0m.1-23h0m0 6.7h0m.1 5h0m0-37.3h0m0 32.4h0m.1-26.2h0m0 32.5h0m.1-35.3h0m0 5.6h0m0-13.8h0m.2 22.8h0m.1-4.2h0m0 23.9h0m.1-40h0m0-.4h0m.1 4.1h0m0-5.3h0m.1 21h0m0-18.3h0m0 28.8h0m0-28.6h0m.2 36.2h0m0-9.2h0m0-50.4h0m.2 21.3h0m0 13.7h0m0-10h0m.1 2.9h0m0 4.9h0m.1-3.2h0m.1 11.6h0m0-17.5h0m.1 26.6h0m0-27.8h0m0 14.6h0m.1 29.3h0m.1-36.1h0m0 25.1h0m0-25.1h0m.1 9h0m0-6.1h0m0-35.1h0m0 25.4h0m.1 1.5h0m0 2.4h0m.1-2.3h0m0 28.4h0m.1-27.5h0m0 2.7h0m.1-26.6h0m0 40.3h0m0-16.7h0m0 7.3h0m.1-2.9h0m0-18h0m.1 5h0m0 9.2h0m.1-18.8h0m0 21.4h0m0-12.7h0m.1 12.4h0m.1 7.8h0m.1-7.3h0m0-7.1h0m0 .3h0m.1-15.8h0m.1 40.6h0m0-22.6h0m0 5.3h0m.1 13h0m.1-23.9h0m0-5.6h0m0 28h0m.1 5h0m0-13.6h0m.1-5.9h0m.1-1.4h0m0 6.6h0m0-8.9h0m.1-9.7h0m0 10.1h0m.2 1.5h0m0 6.7h0m.1-6.2h0m0 32.6h0m.1-28.3h0m.1 8.5h0m.1-13.7h0m0-1.1h0m0 17.6h0m.1 13.6h0m0-51.3h0m.1 17.1h0m0 35.8h0m.1-26.6h0m0 .3h0m.1-14.7h0m0 11.4h0m.1-18.1h0m0 46.6h0m0-27.7h0m0-7.9h0m.1 2.4h0m0-6.4h0m.1 2.9h0m0 2h0m.1 22.5h0m.1 .7h0m0-23.7h0m0 1.3h0m.1 28.2h0m.1-28.3h0m0 .7h0m0 45.9h0m.1-30.4h0m.1-23.4h0m0 21.8h0m.1-9.3h0m.1 13.8h0m0-13.4h0m0 18.4h0m.1-3.4h0m0-15h0m.1 17.1h0m0-2.7h0m.1-10.7h0m0 4.8h0m0 25.1h0m.1-36.1h0m.1 33.2h0m0-21.5h0m.1-9.8h0m.1 4.7h0m0 16.1h0m.1 26.8h0m0-25.1h0m.1 13h0m.1 1.7h0m0-18.6h0m.1 19.5h0m0-46.4h0m0 42.6h0m.1-10.2h0m.1 18.5h0m0-37.2h0m.1 20.7h0m0 2.4h0m.1-17.9h0m.1-2.1h0m0 22.8h0m.1-42.4h0m0 59.1h0m.1 .9h0m.1 7.8h0m0-59.7h0m0 15.4h0m.1 44.2h0m0-16.6h0m0 1.6h0m.1-10.4h0m.1-1.2h0m0 17.9h0m.1-6.8h0m.2-13h0m0 17.1h0m.1-17h0m0 27.4h0m0-20.2h0m.2-8h0m0 24.8h0m0-1.1h0m.1 13.9h0m.1-18.8h0m.1-19.2h0m0-4.1h0m.1 28.9h0m0 1.6h0m0-23.6h0m.1 5.8h0m.1-6.3h0m0 22.7h0m0-5.7h0m.1-10.6h0m.1-3.4h0m.1 6.2h0m0 11h0m.1 1.9h0m0-21.9h0m.1 6.7h0m0-7.6h0m0 22.6h0m.1-15.6h0m0 13h0m0 3.6h0m.1-19.4h0m.1-4.6h0m0 2h0m.1 2.1h0m0 28.6h0m.1-10.2h0m.1-.2h0m0 .5h0m0-34.1h0m0 52.7h0m.1-35.6h0m0 15.8h0m.1-8.9h0m0 14.7h0m.1-10.6h0m0-24.8h0m0 45.3h0m.1-23.8h0m0 6.6h0m0 5h0m0-1.5h0m0-6h0m.1-1h0m0 15.7h0m.1-3.3h0m0-12.6h0m0 12.6h0m.1-25.3h0m.1 14.2h0m.1 4.9h0m0-.1h0m.1-11.3h0m.1 12.4h0m.1-16.9h0m0 2.2h0m.1-3.5h0m0 33.1h0m0-12.6h0m0-16.3h0m.2-20.8h0m0 30.3h0m0-45.4h0m0 52.4h0m.1-17.5h0m.1 10.5h0m.1-42.5h0m.1 44.3h0m0 19.2h0m0-22.9h0m.1 .8h0m.1 4.2h0m0-10.5h0m0-18.6h0m.2 47.2h0m0-15.7h0m0-14.8h0m.1-16.5h0m0 14.6h0m.2 7.2h0m0 17.6h0m.1-8.7h0m0-7.1h0m0 6.8h0m.1 3.3h0m0-.9h0m.1-15.7h0m0 10.5h0m.1-16.8h0m.1 14.7h0m0 6.3h0m0-7.1h0m.1 3h0m.2 18.7h0m0-12.1h0m.1-2.4h0m0-3.3h0m0 8.9h0m0-2.8h0m0 5.5h0m.1-15.3h0m0-15.1h0m.1 22.5h0m0-9h0m.1-5.2h0m0 12.7h0m0-19.3h0m.1 22.2h0m.2-2.3h0m0 5.9h0m0-41.1h0m.1 20.7h0m0-15.4h0m.1 31.5h0m0-22.8h0m.1 17.9h0m0-17h0m.1 14.1h0m0-14.9h0m.1 20.6h0m0-20h0m.2-16.3h0m.1 20.7h0m.1-9.9h0m.1-7.2h0m.1-7.3h0m.1-7.7h0m.1 46.8h0m.1-33.4h0m.1 15.7h0m0 13h0m.1-.8h0m0 9.6h0m.1-55.8h0m0 39h0m.1-21.2h0m0 3.2h0m.2 16.1h0m0 4h0m0 22.8h0m.1-42.2h0m0 37.2h0m.1-39.7h0m.1 19.2h0m0-6.2h0m.1-21.5h0m0 20.6h0m.1-24.6h0m.1-2h0m.1 34.7h0m0-7.8h0m.1-1.5h0m.1-2.3h0m.1 .9h0m0 1.4h0m.1-17.7h0m.1 22.9h0m0-17.2h0m.1-7.1h0m0 17.7h0m.1 19.7h0m.1-13h0m0 6.1h0m.1-27.4h0m0 10.3h0m.1-12h0m.1 35h0m.1-23h0m.2-8.6h0m0 1.3h0m.1 7h0m0-13.6h0m.2 6.5h0m.1 20.9h0m.1-36h0m0 38.2h0m.1-34h0m0 28.6h0m.1-8.1h0m.1-14.8h0m0 4.2h0m.2 10.7h0m.1-35.6h0m0 6.5h0m.1 27.5h0m0-23.9h0m.1 51.1h0m0-42.2h0m.1-14.1h0m0 12.1h0m.1 28.5h0m0-26.6h0m.1 17.8h0m.1-18.5h0m0 20.8h0m.1-15.5h0m0-7h0m.1 22.7h0m.1-4h0" stroke="#000" fill="none" stroke-linecap="round" stroke-width="3.6"/>
<path d="M832.1 527.6h0m.1 5.8h0m0-6.6h0m.1 6.3h0m.1-11.3h0m0-22.6h0m.1 15.7h0m0-1.3h0m.1 4.4h0m.1 10.3h0m0-3.9h0m0-29.6h0m.1 32.8h0m0-25.9h0m.1 35.6h0m.1-26.3h0m0-25.7h0m.1 49.5h0m0-33.7h0m0 28.4h0m.1-5.2h0m0-22.5h0m.1 44.2h0m.1-32.5h0m.1 8.2h0m0-4.1h0m.1 27h0m.1-34.9h0m.1 .2h0m.1 .5h0m.1-6.2h0m0-6.4h0m.1 1.7h0m0 9.5h0m.1-6.9h0m0 5.2h0m.1-.8h0m.1-22.6h0m0-13.1h0m.1 7.8h0m0 42.5h0m0-31.3h0m0 20.1h0m.1-6.9h0m0-21.4h0m.1 31.9h0m0 7.3h0m0-30h0m.1 30.2h0m0-23.6h0m.2 7.8h0m0-11.8h0m0-20.8h0m0 42h0m0-17.4h0m0 1h0m.1 2.8h0m0 16.6h0m0 1.7h0m.1-3.1h0m.1-9.5h0m.1-21.2h0m0-3.8h0m0 2.1h0m0 8.8h0m0 13h0m.1-16.4h0m0 4.6h0m0 5h0m0-14.5h0m.1 .9h0m0 37.3h0m.1-32.7h0m.1 13.5h0m0-26.4h0m.1 20.6h0m0-4.6h0m.1 16.3h0m.1-11.1h0m.1 1h0m0-14.6h0m.1 54.7h0m0-36.4h0m0-1.6h0m.1-.5h0m.1-1.6h0m0 7.1h0m0-13.1h0m0-19.8h0m.1 25.5h0m.1 11.4h0m0-24h0m0 12.7h0m.1 .9h0m.1 2.3h0m0-14.9h0m.1 20h0m0-1.3h0m0-6.8h0m.1 .7h0m0-24.7h0m0 54.2h0m0-26.6h0m0-4.8h0m.1-2.3h0m.1 19.2h0m0-31.6h0m0 13.2h0m.2-9.7h0m0 17.8h0m.1-21.5h0m.1 14.6h0m0-13.6h0m0 34.2h0m.1-19.4h0m.1-19.1h0m0 36.3h0m.1 4.1h0m0-9.8h0m.1 35.2h0m.1-45.8h0m0-2.6h0m0 4.6h0m.1 14.4h0m0-13.1h0m0-7.4h0m.1 3.7h0m.1 14.6h0m0-12.3h0m.1 36.9h0m0 2.9h0m.2-34.3h0m0 2.4h0m.1 18h0m0-12.3h0m.1 27.2h0m.1-4.9h0m0-14.3h0m.1 15.6h0m0-24.3h0m.1 14.7h0m.1-16.9h0m0-4.7h0m.1 10.1h0m.1 12.2h0m0-6.6h0m.1-12.4h0m0 16.6h0m.1 16.3h0m.1-2.5h0m0-33.4h0m.1 7.6h0m0 .9h0m.1 4.3h0m.1 14.4h0m0 5h0m.1-24h0m0 19.5h0m.1 9.7h0m.1-1.6h0m0-13.7h0m.1-13.8h0m0 22.4h0m.1 3.1h0m.1-26.5h0m0-20.1h0m.1 50.6h0m0-14h0m.1-21.9h0m.1 53.3h0m0-36.6h0m.1 19.6h0m0-10h0m.1 8.7h0m.1-17.6h0m0-3.5h0m.2 9.9h0m.1-4.7h0m0-11.3h0m.1 31.9h0m.1-39h0m.1 10.2h0m.1-6.3h0m0 39.7h0m0-29.1h0m.1-14.4h0m.1 .5h0m.1 13.1h0m.1 22.6h0m.1-21h0m0 21.6h0m.1-2.1h0m.1-17.8h0m0 24.2h0m0-4h0m.2-52.1h0m.1 35.4h0m.1 1.5h0m.1-3.4h0m0-26.8h0m.1 38.5h0m0-16.5h0m.1 24.8h0m0-19.8h0m.1 28.2h0m0 .9h0m0-.1h0m.1-24.8h0m0-23.6h0m.1 8.1h0m0 9.9h0m.1-5.3h0m.1-25.6h0m0 8.9h0m.1 22h0m0 13.8h0m.1 9.9h0m0-25.2h0m.1-5.1h0m0-4.6h0m.1 8.5h0m0-2.6h0m.1-.8h0m0 27.2h0m0-.2h0m.1 9.7h0m0-19.6h0m.1-8.7h0m0 39.5h0m0-53h0m.2 20.8h0m0 21.6h0m.1-31.5h0m.1 25.3h0m0-14.9h0m.1 13.8h0m0-36.5h0m.1 46.9h0m0 2.3h0m0-14.8h0m.1-41.8h0m0 37.3h0m0 5.3h0m.1 6.7h0m0 4.8h0m.1 12.2h0m0-20.3h0m.1-3h0m0-18.7h0m.1 3h0m0 .7h0m.1-.2h0m.1 18.7h0m0-1.4h0m0-9.6h0m.1-26.2h0m0 31.3h0m0-33.8h0m.1 37.9h0m0-10.5h0m.1-.9h0m0-3.7h0m.1 2.1h0m0 3.9h0m.1 19h0m.1-33.7h0m0 26.9h0m0-12.6h0m.1-16.2h0m.1 30.2h0m0-25.7h0m0 22.8h0m.1-27.2h0m0 24.9h0m0-2.7h0m.1-1.1h0m0-39.4h0m.1 54.4h0m0-7.8h0m0-8.6h0m.1-19h0m0 37.8h0m.1-19.4h0m0 6.7h0m.1-7.6h0m.1 17.9h0m0-20.3h0m0 5.2h0m.1-6.3h0m.1 10h0m0 18.9h0m0-5.3h0m0-8.7h0m.1-12.6h0m0 16.2h0m0-16.2h0m.1 28.5h0m0-29.7h0m0 2.7h0m.1 3.3h0m0 2.3h0m.1 .5h0m0-29.4h0m.1 30.1h0m0-31.1h0m.1 53.8h0m.1-50.5h0m0 31.7h0m0-11.7h0m.1 20.7h0m0-26.5h0m0-25.1h0m.1 10.7h0m.1 16.4h0m0 37.3h0m.2-17.7h0m0-15.9h0m.1 1h0m0-22.3h0m.1-1.7h0m0 26.6h0m.1-2.9h0m.1 8.9h0m0-38.7h0m.1 33.9h0m.1-13.9h0m0 35.9h0m0-33.3h0m.1 22.2h0m0-48.9h0m0 48h0m.1 14.5h0m.1-2h0m0-.9h0m0 0h0m.1-18.2h0m0-36.6h0m.2 10.4h0m0 24.9h0m0 .9h0m.1-2.7h0m.1-15.3h0m0 19.9h0m0 2.4h0m.1-27.9h0m0 26.7h0m0-2.1h0m.1-6.9h0m.1-34h0m.1 43.3h0m0-6h0m0 9.5h0m.1-10.3h0m0-20.2h0m0 32.7h0m.1-15.3h0m.1-13.8h0m0 13.5h0m.1 3h0m0 3.1h0m0-1.9h0m.1 15.9h0m.1-36.9h0m0 39.3h0m0 9h0m0-38.3h0m.1 7.3h0m0-23.6h0m.1 25.2h0m0-3h0m.1-8.1h0m0-12.3h0m0 52.6h0m.1-29.5h0m0 5.5h0m.1-32.6h0m0 32.5h0m.1-21.9h0m0 19.2h0m.1-33.3h0m0 29.9h0m.1-23.4h0m.1-13.3h0m0 23.8h0m.1 19.6h0m0-6.1h0m.1-32.1h0m.1 29.5h0m0-18.6h0m.1-14.1h0m.1 10.8h0m.1 12.1h0m0 12.3h0m.1-33.9h0m.1 0h0m0 38.3h0m0-9.9h0m.1-24.1h0m.1 29.3h0m0-22.5h0m.1 11.6h0m0 9.5h0m0 3.8h0m.1-28.9h0m.1 5.5h0m.1 14.2h0m0-24.9h0m.1-10.8h0m0 8.4h0m.1 25.3h0m.1 10.6h0m0 4.2h0m0-38.4h0m.1-8.7h0m.1 16.4h0m.1-4.4h0m.3-11.8h0m.1 24.8h0m0-13.8h0m.1 23h0m.1-31h0m0 9.5h0m.1-12.2h0m.1 34.8h0m0-5.5h0m.1-14.6h0m0 26.1h0m0 5.3h0m.1-1.6h0m.1-22.5h0m0 16.8h0m0-32.8h0m.1 1h0m0 3.5h0m.1 32.5h0m.1-49.2h0m0 12.2h0m.1 6.5h0m0 2.5h0m.1 5.4h0m.1-2.5h0m0-.2h0m.1 8.9h0m0-5.8h0m.1-29h0m.1 42.2h0m0-12.7h0m.1-4.6h0m.1-14.8h0m.1 12h0m.1-18.2h0m0 9h0m.1 24.4h0m.1-24.8h0m0-.4h0m.1-8.8h0m0 41.9h0m0-26.7h0m.1-10.1h0m.1 34.8h0m0-7.4h0m.1-13.3h0m0 13.8h0m.2-26.5h0m.1 13.1h0m.2 21.2h0m0-53.9h0m.1 55.7h0m.1 5.9h0m.1-44.8h0m.1 30.5h0m.1-37.9h0m0 63.1h0m.1-33.2h0m.1 15.6h0m.1-6.3h0m0-27.1h0m.1 27h0m0-19.7h0m.1 39.4h0m.1-15.3h0m0-12.2h0m.1-10.8h0m0 20.3h0m.1-16.9h0m.1-10.5h0m.1-2.4h0m0 2.5h0m.1 28h0m0-40h0m.1 2.3h0m0 13.9h0m0 20.1h0m.1-42.9h0m0 30.4h0m.2-5.8h0m.1 .4h0m.2 13.9h0m.1-37.5h0m0 36.3h0m.1-10.7h0m.1 3h0m0-34.3h0m0 61.2h0m.1-18.6h0m0-6.4h0m.1-18.7h0m.1 23.2h0m0-19.1h0m0-7.8h0m.2-6.5h0m0 2.3h0m.1 17.7h0m.1-14.3h0m0-11.5h0m.1 2.6h0m.1 15.1h0m.1-2.5h0m.1 2.5h0m.1-14.4h0m.2 28.3h0m0-38.8h0m0 37.1h0m.1-28.5h0m0 13.7h0m.1 9.4h0m.1-14.3h0m0-17.3h0m0 10.2h0m.1 8.6h0m0 8.7h0m0-22.3h0m.1 12.9h0m.1-9.1h0m.1-.7h0m0 31h0m.1-32.6h0m0 10.7h0m.1-25.3h0m0 28h0m.1-21h0m.1 29.1h0m.1-26.6h0m0 43.7h0m0-44.1h0m0 12.4h0m.1-3.3h0m0 30.3h0m0-28.6h0m.1 14.3h0m.1-29.3h0m.1 20h0m0 2.1h0m0 8.7h0m0-8.4h0m0-4.5h0m0 1.8h0m.2-3.3h0m0-20.9h0m0 38.9h0m.1-9.2h0m0-18.5h0m0-7.9h0m0 .9h0m.1 21h0m0-11.3h0m0 10.2h0m.1 4.9h0m0-5.3h0m.1 .1h0m0-22.1h0m0 11.6h0m0 14h0m0-22.9h0m0 39.4h0m.1-29.3h0m0 16.1h0m.1 28.1h0m0-37.6h0m.1 8.7h0m.1 13.2h0m0-33.1h0m0 17.3h0m.1-23.4h0m0 22.3h0m0-5.6h0m.1-21.4h0m.1 38.6h0m.1 6.8h0m.1-23.5h0m0-9.9h0m.1 15.1h0m.1 26.3h0m0-27.5h0m0-8.4h0m.1 5.5h0m0 46.7h0m.1-35.9h0m0-19.3h0m.1 15.3h0m.2-17.4h0m0 4.1h0m0-1.2h0m0 23.3h0m0 30.4h0m.2-30.7h0m0-14.2h0m.1 16.2h0m.1 14.1h0m.1 2.2h0m.1-31.1h0m.2 44.8h0m.1-50.7h0m0 3.3h0m.1 46.8h0m0 1h0m0-47.1h0m.1 24.1h0m0 21.6h0m0 .4h0m.1-22.3h0m0-24.8h0m.1 6.3h0m0-4.8h0m.2-7.6h0m0 1.4h0m0 52.2h0m0-54.8h0m.2 28.2h0m0-18.6h0m.1-1.5h0m.1 46.1h0m0 4h0m.1-55.6h0m0 27.4h0m.1 28.2h0m0-3.3h0m0 2.2h0m.1-40.9h0m.1-15h0m0-1.2h0m.1 5.7h0m0 51.8h0m0-.6h0m0-44h0m.1 44.5h0m.1-47.2h0m.1 21.1h0m0 22.4h0m.1-41.7h0m0 44.1h0m.2-23.9h0m0-35h0m0 24.8h0m.1 56.8h0m0-20.6h0m.1-46.7h0m.1 16.1h0m.2 18.2h0m0-28.1h0m.1-4.4h0m0-28.4h0m.1 35.9h0m.1 9h0m0 8.3h0m.1 15.6h0m0-19.6h0m.1 20.3h0m0-8.8h0m.1 2.4h0m0 6.3h0m.1 1.8h0m0-10h0m0-8.7h0m.3-25.3h0m0 41.6h0m.1 1.4h0m.1-20.7h0m.2 12.4h0m0 8.2h0m0 0h0m.1-43.3h0m.1 27.6h0m.1-7.9h0m.1 11.9h0m0 7.6h0m.1-42.5h0m.1 46.2h0m0-36h0m.1 39.7h0m0-27.4h0m.1-5.7h0m.1-.8h0m0 23.6h0m.1-2.3h0m0-24.9h0m.1 21.3h0m.1-37.6h0m0 36.1h0m.1-7.9h0m0-4.7h0m.1-3.1h0m.1 9.8h0m0 12.5h0m.1 25.1h0m0-47.3h0m.1 23.4h0m.1-5.2h0m0-16.1h0m.1 10.7h0m0-6.7h0m.1 17h0m.1-33.3h0m0 9.1h0m.1 35.8h0m0-8h0m.1-.5h0m.1 12.2h0m0-18h0m.1 13.6h0m0 18.1h0m.1-48.9h0m.1-9.8h0m0 4.7h0m.1 9.8h0m.1-13h0m0-9.7h0m.1 27.7h0m0 3.5h0m.1-10.2h0m.1 13.3h0m0-8.1h0m.1 4.2h0m0-2.3h0m.1 2.5h0m.1-30.3h0m0 20.8h0m.1-10.2h0m0 40.2h0m.1-19.8h0m.1-29.5h0m0 21.3h0m.1 21.3h0m0-33.3h0m.1-13.2h0m.1 5.6h0m.1 23.4h0m0-24h0m.1-.1h0m.1 20.2h0m0-7.9h0m.1-6.5h0m0 7.5h0m.2-14.8h0m0 17.6h0m.1-16.6h0m.2 5.2h0m0 13.4h0m.1 13.3h0m0-24.6h0m.1 22.2h0m.1-19.9h0m0 11.5h0m.1 5.6h0m0 6.1h0m.1-31h0m.1 .9h0m0 22.2h0m.1-12.5h0m0-3.9h0m.1 12.7h0m.1 14.9h0m0-44.4h0m.1 46.5h0m.1-11h0m0-9.5h0m.1-10.8h0m0 24.5h0m.1-6.4h0m.1 12h0m0-13h0m.1-8.9h0m0 18.3h0m.1-31.2h0m.1 31.3h0m0-4h0m.1-18.1h0m0 22.7h0m.1-28.6h0m.1-17.3h0m0 27.8h0m.1 3.9h0m0-4.3h0m.1-12.1h0m.1 19.1h0m0-9.9h0m.1-3.8h0m.1-10.1h0m.1 38.4h0m0-41.3h0m.1 12.6h0m0-5h0m.2-8.9h0m0 46.7h0m.1-7.3h0m.1-52.1h0m.1 36h0m0 16h0m.1-8.8h0m.1 4h0m.1-1.4h0m0-33.2h0m.1 29h0m0-15h0m.1-1.2h0m.1 24.7h0m0 5.1h0m.1-41.9h0m0 3.2h0m.1 38h0m0-20.6h0m.1-10.4h0m0 22.6h0m.1 9.4h0m.1 .4h0m.1-43h0m0 27.2h0m.1-6.4h0m.1-22h0m.1 11.3h0m0 25.5h0m.1-15.5h0m.1 5.6h0m0-16.1h0m.1 27.6h0m0-19.2h0m.1 .1h0m.1-2.9h0m.1-3h0m.1-7h0m0 .8h0m0 8h0m.1-3.6h0m0 11.3h0m.1 11.5h0m.1-26.6h0m.1 21.7h0m0-28.6h0m0 27.5h0m.1-15.4h0m0-22.6h0m.1 14.5h0m0-6.6h0m.1 6.4h0m0 22.3h0m0-43.1h0m.1 14.8h0m0 38.8h0m0-34.9h0m.1-1.8h0m.1-4h0m0 7.8h0m0 17.1h0m.1 1.6h0m0 .9h0m.1 15.2h0m.1-58.6h0m0 21.7h0m.1 17.8h0m.2-22.6h0m.2 1.2h0m0 32.5h0m.1-34.3h0m.1-.9h0m0-5.6h0m.1 15.5h0m0 32.5h0m0-35h0m.1 25h0m0-35.6h0m.1 7.9h0m.2-3.2h0m0 5.2h0m0 27.4h0m.2-33.6h0m0 30.5h0m.1-23.9h0m0 14.8h0m0 5h0m0-16.2h0m.2 8.4h0m0-7.8h0m.1-7.5h0m0-.5h0m.1-5.7h0m0-5.9h0m.1 27.2h0m0-13.5h0m.1 16.5h0m.1-28.5h0m0-9.1h0m.1 23.2h0m0-10.1h0m0 11.9h0m.1 37.5h0m.1-46.4h0m0 11.3h0m.1 33.2h0m0-44.4h0m0 1.5h0m.1 38.3h0m0-41.5h0m0 10.7h0m.1-18.3h0m.1 31.3h0m0-23.7h0m0 18h0m0-15.9h0m.1 44.4h0m0-34h0m.2-5.5h0m0 42.4h0m.1-48.6h0m.1 47.5h0m0-37.3h0m.1-3.8h0m.1 45.9h0m.1-30.4h0m.1 28.4h0m0-34.4h0m.1-13.7h0m0 45.6h0m0-52.5h0m0 8.9h0m.1 12.1h0m0 11.4h0m.1-.4h0m0-16.9h0m.1 47.2h0m.1-45h0m.2-5.1h0m.1 40.6h0m0-41.1h0m.1-9.5h0m.1 59.8h0m.1-43.6h0m.1-7h0m0 17.2h0m0 2.3h0m.4 6.5h0m.1 6.7h0m0 5.4h0m.1-57.1h0m0 42h0m.1 3.8h0m.1 27.5h0m0-32.2h0m0 25.4h0m.1-10.5h0m0 19.6h0m.1-20.9h0m.1-40.1h0m.3 40.8h0m0-31.8h0m0 19.3h0m.1 7.8h0m.1-7h0m0-2.5h0m.1 10.1h0m0 11.4h0m.1-24.3h0m.1 18.9h0m0-26.5h0m.1 34.7h0m0-4.7h0m0-39.5h0m.1 48.4h0m0-21.1h0m.1-12.5h0m0 23.4h0m.1-23.2h0m.1 1.7h0m.1-27.8h0m.1 82.8h0m0-10.4h0m.1-16.8h0m.1 6.9h0m0-20.5h0m.1-5.7h0m.1 8.2h0m.1 3.1h0m.1 .9h0m0 1.7h0m.1-17.3h0m.1 24.2h0m0-39.5h0m.1 36.8h0m0-11.7h0m.1-29.5h0m.1 20.9h0m0 5.7h0m.1-16.6h0m0 33.5h0m0-35.8h0m.1 3.2h0m0 29.6h0m.1-19.3h0m0-27.4h0m.1 33.9h0m0-30.9h0m.1 28.7h0m.1 18.7h0m0-36h0m.1 35.6h0m0-2.8h0m0-10.3h0m.1 6.2h0m.1 3.1h0m.1-17.8h0m.1 14.2h0m0 9h0m.1-2.4h0m0-10.3h0m0 14.1h0m0-8.4h0m.1 14.8h0m.1-13.2h0m.1-3.5h0m0 3.4h0m.1-1.3h0m0 2.4h0m.1-12.8h0m0 23.2h0m0 3.3h0m.1-1.4h0m0-28.5h0m0-17.5h0m.1 36.7h0m.1-15h0m0-17.5h0m.1 29.8h0m0 6.7h0m.1-17h0m.1-.3h0m.1-6.8h0m0 20.9h0m.1 0h0m0 13.5h0m0-22.8h0m.1 6.3h0m0-11.6h0m.1-23.1h0m0 36.9h0m.1-3.5h0m0 10.6h0m.1 6.7h0m0-50h0m.1 56.9h0m0-45.2h0m0 5.8h0m.1-22.5h0m.2 10h0m0 62.5h0m.1-58.1h0m.1 45.1h0m0-4.9h0m.3-15.1h0m0 3.3h0m.2 14.4h0m0-22.3h0m.1 16.5h0m.1 .3h0m0-6.2h0m.1-12.5h0m0 11.4h0m0-5.1h0m0 4.7h0m0 1.1h0m.1-2.2h0m0 23.7h0m0-6.1h0m0-20.5h0m.2-5h0m.1 8.1h0m0-6.3h0m.1 11.3h0m.1 7.9h0m.1-10.5h0m.2 12.4h0m.1-11.9h0m0-13.7h0m0 17.5h0m0-4.3h0m.1-32.9h0m.1 31.2h0m0-1.7h0m.1-1.6h0m0-4h0m.1 3.1h0m0-7.5h0m.1-18.5h0m0 24.8h0m.1 .5h0m0 13.4h0m.1-1.1h0m.1-8.4h0m0-16.4h0m0 14.8h0m0 6.5h0m.1-20.9h0m.2 27.5h0m0-23.2h0m0 18h0m.1-15.4h0m0-3.7h0m.1-13.9h0m.1 13.5h0m0 26.3h0m0-17.5h0m.1 8.9h0m0 6.3h0m.1-47.1h0m.1 25.1h0m0 7.2h0m.1-5.8h0m0 18.4h0m0 7.4h0m.1-48.8h0m0 34.5h0m.1-3.6h0m0-31.7h0m.1 30.4h0m0 9.4h0m0-5.9h0m.1-14.3h0m0 33.3h0m0-24h0m.1 13.5h0m0-30h0m.1 20.3h0m0-.3h0m.1-50.2h0m.1 47.4h0m0-29.1h0m.1 13.8h0m0 40.2h0m.1-44.3h0m0 35.8h0m.1-46.4h0m0 36h0m0-2.6h0m.1-12.2h0m.1-16.6h0m0 16.8h0m.1-13.1h0m.1 6.6h0m.1-11.8h0m0 21.3h0m.1 10.1h0m0-14h0m0-1.8h0m.1-5.2h0m0 20.8h0m.1-26.2h0m0 22.3h0m0-15.6h0m.1 11.2h0m0 15.9h0m.1-22.7h0m.1-5.2h0m0 25.1h0m.1-3.6h0m0-13.2h0m.1-19.2h0m.1 27.7h0m0-19h0m.2-4h0m.1 .2h0m0 26.6h0m0-41.4h0m.2 19.1h0m0-11.2h0m.3 23.1h0m.1 9.9h0m.1-26.7h0m.1 32.4h0m0-32.5h0m.1-32.6h0m0 28.4h0m.3-3.3h0m0 8.2h0m.1-8h0m.1-14.1h0m.1 21.7h0m.1 23.2h0m.1-20.2h0m.1-10.2h0m0-6.8h0m.1 0h0m.1 28.1h0m0-26.4h0m.1-18.8h0m.1 28.8h0m.1 8.6h0m0-18h0m.1 .9h0m0 15.1h0m.2-23.3h0m0 22.9h0m.1-.7h0m0 5.8h0m.1-13.4h0m.1 3.6h0m0 7.5h0m0 16.4h0m.1-9.7h0m0 31.8h0m.1-13.9h0m.1-15.6h0m0-10.9h0m.1 6.5h0m.1-4.4h0m0 15.6h0m.1-49.8h0m0 32.4h0m.1-18.9h0m.1 18.1h0m0-29.3h0m.1 32.1h0m0-14.5h0m.1 12.1h0m.1 5.8h0m0 16h0m.1-14.3h0m0-29.4h0m.1 39.8h0m.1-13.6h0m0 22.9h0m.1-31.9h0m0-7.7h0m.1 15.4h0m.1-6.9h0m0-7.6h0m.1 5.3h0m0 18.2h0m.1-25.4h0m.1-4.3h0m0-4.3h0m.1 50.9h0m.1-11.7h0m.1-44.8h0m.1 55.7h0m0 9.9h0m.1-35h0m.1 5.6h0m0-19h0m.1 9.1h0m.1-10.5h0m.1 5.2h0m.1-14.7h0m0 13.3h0m.2 3h0m0-1.2h0m.1 6.8h0m.1 9.6h0m0-11.4h0m.1-20.6h0m0-2.5h0m.1 25.1h0m.1-22.1h0m0-18.3h0m0 45.6h0m.1-29.5h0m0 28.7h0m.1-14.1h0m.1 7.2h0m0-19.2h0m.1-9.1h0m0 27.6h0m0-6.6h0m0-33.2h0m.1 43.2h0m.1-16.7h0m0 1.7h0m.1 17.9h0m0 12.4h0m.2-42.8h0m0 1.1h0m.1 41.9h0m0-27.2h0m.1-20.9h0m.1 .8h0m0 36.5h0m.1-32.2h0m0 23.9h0m.1-.3h0m.1-9.8h0m.1-16.4h0m0 32.3h0m.1-14.4h0m.1-32.9h0m.1 37.7h0m0-25.2h0m0 9.6h0m.2 23.9h0m0-2.3h0m.1-22.5h0m0 18.7h0m.1-17.2h0m0-32.6h0m.1 39.5h0m.1-8.5h0m0-11.6h0m0 29.2h0m.2 9.1h0m0-6.4h0m.1-21.7h0m0-21.8h0m.1 25h0m0-22.2h0m.1 19.5h0m0 7.6h0m.1-15.3h0m0-8.6h0m.1-11.6h0m0 55.9h0m0-33.9h0m.1 6.5h0m0-12.5h0m.1 33.2h0m.1 5.7h0m0-38.6h0m0 26.1h0m.1-19.9h0m0-12.3h0m.1 10.8h0m.1 28.5h0m0-42.4h0m.1 19.9h0m.1-8.9h0m0 14.3h0m.1 11.8h0m0-19.3h0m0-3.1h0m0 .4h0m.1-.9h0m0-20.6h0m0 19.9h0m0 7.2h0m0-.7h0m.1-10.5h0m0-22h0m.1 29h0m0 25.5h0m.1-55.7h0m0 25.8h0m0 19.6h0m.1-20.1h0m0-23.9h0m.1 26.6h0m0-1.7h0m0 9.7h0m.1-.3h0m.1-23.3h0m.1 10.3h0m.1 11.6h0m0 7.6h0m0-26h0m.1 14.1h0m.1-20.1h0m0 23.7h0m0-9.7h0m.1 15.4h0m0-22.3h0m0-11.3h0m0 18.9h0m0 31.8h0m.1-27.2h0m0-5.7h0m0 23.8h0m.1 10.1h0m.1-34.9h0m0 7.8h0m.1-11.3h0m0 11.3h0m0 28.7h0m.1-50.7h0m0 19.2h0m.2 15.6h0m0-12.1h0m0 5.5h0m.1-11.6h0m0 .6h0m.2 16.2h0m.1-10.1h0m.1-19.3h0m0 18.2h0m0-3.4h0m0 .6h0m.1 20.4h0m.1 13.8h0m.1-53.5h0m0 18.5h0m0 6.8h0m.1 30.3h0m0-31.5h0m.1-5.2h0m0 36.1h0m.2-43.3h0m0 14h0m.1-2h0m0-.2h0m.1-7.8h0m0 4.8h0m.1 4.8h0m0-22.6h0m.1 21.5h0m.2 1.9h0m0 13.5h0m.1-17.8h0m0-1.3h0m0 14.4h0m.2-27.2h0m.1 27.5h0m0 26h0m.1-23.8h0m.1 6.2h0m0 2.1h0m.1-30.2h0m0 35.3h0m0 2.1h0m.1-19.6h0m.1-3.6h0m0 28.9h0m.1-69.5h0m.1 28.6h0m0-1.1h0m0 12.6h0m.1-1h0m0-6h0m0 55.6h0m.1-37.6h0m.1-10.7h0m0 29.7h0m.1-16.4h0m0 19.9h0m.1-32.2h0m.1 14.7h0m0 21.5h0m.1-22.8h0m.1 19.3h0m.1 3.1h0m0-39.8h0m.1 17.2h0m0-11.9h0m.1 2.5h0m.1 6.4h0m0-17.9h0m.1 33.8h0m0 14.9h0m.1-23.4h0m.1-25.4h0m0 36.1h0m.1 .5h0m0-8.6h0m.1 22.5h0m.1-56.1h0m0 37.8h0m.1-2.6h0m0-30.6h0m.1 26.3h0m.1 6.6h0m0 11.6h0m.1-8.6h0m0 .5h0m.1-34.6h0m0 36h0m.1-5.1h0m0-9.3h0m.1 21.5h0m.1-8.4h0m.1-3.5h0m0-27h0m.2 25.7h0m0 8.7h0m.1-2.6h0m0-26.9h0m.1 14.5h0m.1 16.8h0m.1 25.5h0m.1-35.6h0m.1 3.2h0m0 10h0m.1-4.3h0m0-27h0m.2 4.6h0m.1-4.4h0m0 39.6h0m.1-38.2h0m.1 6.6h0" stroke="#000" fill="none" stroke-linecap="round" stroke-width="3.6"/>
<path d="M920.4 541.3h0m.1 12.4h0m0-10.8h0m.1-24.8h0m.1 33.2h0m0-4.7h0m.1-17.7h0m0 17.2h0m.1-11.2h0m.1-15.9h0m0 28.3h0m.1-6.1h0m.1-22.8h0m.1 6h0m0 24.6h0m.1-4.6h0m0 14.7h0m0-52.2h0m.1 44.6h0m0-6.5h0m.1-6.8h0m0 8.7h0m0-.1h0m.1 4.2h0m0-9.9h0m.1 13.5h0m0-10h0m.1 21.2h0m0-10.2h0m0-13.8h0m.1-12.1h0m.1-8.5h0m0 25.5h0m.1 16.1h0m0-27.7h0m.1 23.4h0m.1-19.7h0m0 .7h0m.1-31.1h0m0 32.3h0m.1 5.1h0m.1-21.1h0m0 39.5h0m0-26.9h0m.1 21.5h0m0-31.4h0m0 21.1h0m0-2.4h0m.1 10.9h0m.1-30.2h0m0 27.3h0m.1-8.8h0m.1-11.8h0m.1 12.3h0m0 5.4h0m.1-10.7h0m0 11.9h0m.1 3.6h0m0-2.9h0m.1-22.6h0m0 18.9h0m.1 4.8h0m0-5.4h0m0-5.2h0m0 6.7h0m.1-3.5h0m0-10.9h0m.1 18.3h0m0-6h0m.1 3.4h0m0 3.1h0m0-18.1h0m.1-.9h0m.1 5.4h0m0 4.3h0m0-17.1h0m.1 22.1h0m0-31.7h0m0 41.5h0m0-7.8h0m0-2.5h0m.1-32.4h0m.1 34.4h0m0 12.7h0m.1-19.5h0m0-5.4h0m0 9.1h0m0 5.7h0m0-17h0m.2 18.6h0m0-23h0m.1 14.4h0m0 9.4h0m0-33.1h0m.1 38.3h0m0-10.1h0m.1-12.8h0m0 20.8h0m0-11.4h0m.1 2.4h0m.1-26.8h0m.1 23.7h0m0-18.1h0m.1 13.3h0m0 6.8h0m.1 1.4h0m0-12h0m.1 8.9h0m0 .6h0m0 .3h0m.1 1.3h0m0-3h0m0 .1h0m0-3.2h0m.1 6.9h0m0 3.1h0m.1-3.9h0m0 17.6h0m0-35h0m0 20.9h0m.1-6.2h0m0 17.4h0m.1-23.1h0m0-8.3h0m.1-19.9h0m0-6.6h0m.1 46.6h0m.1-18.1h0m0 11h0m0-28.2h0m0 32.4h0m.1-3.2h0m0-33.7h0m.1 1.9h0m.1 28.9h0m0-50.4h0m.1 29.2h0m0 52h0m.1-51.8h0m.1-12.3h0m0-19.5h0m.1 55.3h0m0 4h0m0-17.5h0m.1 .9h0m.1-34.3h0m0 33.1h0m.1-4.2h0m0 20.3h0m0 2.3h0m.1-8h0m.1-12h0m0 12.1h0m0-1.6h0m.1-26.2h0m0 17.5h0m.1-18.7h0m.1 17.4h0m0-18.2h0m.1 23.3h0m0 5.3h0m.1 1.6h0m.1-18.6h0m0 11.7h0m.1-19.6h0m.1 2.9h0m0 26.8h0m.1-51.5h0m0 20.6h0m.1 14.7h0m.1-20.3h0m0 21.6h0m.1-14.7h0m0-11.1h0m.1 11.8h0m.1 3.7h0m0-11.6h0m.1-7.7h0m.1 36h0m.1-34.2h0m0-4.6h0m.1 7.2h0m0 2.9h0m.1 29.5h0m.1-41.5h0m0 7.5h0m.1-.8h0m.1-8.7h0m0-1.1h0m0 6.8h0m.1 3.7h0m0 9.9h0m.1 19.4h0m0-23h0m.1-9h0m0-5.4h0m0-11.2h0m.1-14.2h0m0 30.8h0m0 19.1h0m.1-6.7h0m0-9.9h0m.1-13.2h0m.1-8.7h0m.1-6.5h0m0 26.6h0m.1-23.8h0m0 3.6h0m.1 15.4h0m0 12.3h0m0-18.2h0m0-7.2h0m0 18.1h0m0-29.6h0m.1 14.8h0m0 21.9h0m.1-8.3h0m.1-.7h0m0 1.6h0m0 45.8h0m.1-56.7h0m.1 17.3h0m.1-7.4h0m0-10.2h0m.1-22.3h0m.1 24.1h0m0-2h0m.1 26.7h0m.1 11.2h0m.2-32.1h0m0-10.1h0m.1-1.9h0m0 33h0m0-25.4h0m.1 18.1h0m0-20.1h0m0 46.7h0m.1-56.3h0m.1 16.3h0m.1-18.7h0m.2-9.2h0m0 41.1h0m.1-19.3h0m0-7.2h0m0 5h0m.1 9.7h0m0-12.8h0m0 18.5h0m.2 11.2h0m0 11.9h0m.1-38h0m0 1h0m.1 4.9h0m0-20.3h0m0 5.6h0m0 17.7h0m.1 8h0m.1 29.9h0m.1-48.6h0m0-12.2h0m.1 45.7h0m0-35.2h0m0 12.7h0m.1-3.2h0m0-8.2h0m0 14h0m0 36.9h0m.1-38.7h0m.1 32.2h0m.1-39.3h0m0 8.6h0m0 17.2h0m.1-17.5h0m0 17.7h0m.1-21h0m.1 10.2h0m0-8h0m.1 4.9h0m0 8.3h0m0-15.1h0m.1 5.4h0m0-16.5h0m0 29.7h0m.1 9.5h0m.1-39.1h0m0-11.2h0m.1 21h0m0 33.7h0m.1-37.2h0m0-6.5h0m0 38.6h0m.3-11.9h0m.1-10.7h0m0-19.7h0m.1 54.8h0m.2-40.4h0m.1 68.9h0m0-49.7h0m.1-1.2h0m.1-.2h0m.1-24h0m0-6.8h0m0 55h0m.2-8.2h0m0-23.7h0m0-9.5h0m.1 47.5h0m0-35.7h0m.1 13.8h0m.1-50.3h0m0 21.5h0m0-1.1h0m0 26.2h0m.1 3.5h0m0 9.3h0m.1-26.4h0m0-12.4h0m.1 45.9h0m0 1.8h0m.1-22h0m0-28.2h0m0 13h0m.2 21.7h0m0-9.5h0m.1-6.5h0m0-3.7h0m.1 .2h0m0-8.8h0m.1 18.3h0m0-6.3h0m.1 11.8h0m.1 9.5h0m0-.9h0m.1 10.8h0m0-5.1h0m.1-51.6h0m.1 29.5h0m0 27.9h0m.1-11.6h0m0 1.9h0m.1-25.9h0m.1 20.8h0m0-53.6h0m.1 56.9h0m0 5.4h0m.1-23.3h0m.1-4.8h0m0 .2h0m.1 6.5h0m0 16h0m.1-18.1h0m.1-5h0m0 19.1h0m.1-24.1h0m0 32.2h0m.1-4.8h0m.1-24.9h0m0 21.2h0m.1 8h0m0-15.3h0m.1 3.6h0m.1 22h0m0-20.1h0m.1 12h0m0 8.1h0m.1 12.3h0m.1-47.1h0m0 25.9h0m.1 5.8h0m.1-4.3h0m.1-2.5h0m.1-41.1h0m0 45.1h0m.1-10.1h0m.1-2.2h0m0-28.3h0m.1 37.7h0m.1 32h0m0-70h0m.1 47.8h0m0 12.6h0m.1-51.5h0m.1 58.3h0m0-38.8h0m.1 12h0m0-13.5h0m.1-11.2h0m.1 42.5h0m0-28h0m.1-17.1h0m0 12.9h0m.1 24.1h0m.1-18.4h0m0-21.8h0m.1 41.4h0m.1-40.5h0m.1 24.4h0m0-12.9h0m.1 7.1h0m0 9.6h0m.1-19.6h0m.1 6.4h0m0 11.2h0m.1-27.1h0m0 2.9h0m.1 25.1h0m.1-28.4h0m0 11.2h0m.1 8.2h0m0 1.1h0m.1-37.1h0m.1 28.9h0m0-2.3h0m.1 2.5h0m0 4.8h0m.1-24.8h0m.1-9.3h0m.1 26.7h0m0 7.8h0m.1-16.2h0m.1-7.3h0m0 16.8h0m.1 18.9h0m0-35.4h0m.1 24.6h0m.1-30.3h0m0 25.9h0m.1-18.2h0m.1 10.6h0m0 2.5h0m.1-4.5h0m.1 18.5h0m.1-13.7h0m0 24.4h0m.1-31h0m0 33.8h0m0-12.2h0m.1-19.2h0m0 32h0m.1-36h0m0 35.5h0m.1-55h0m0 46.8h0m.1-22.6h0m.1-5h0m0 40.2h0m0-34.3h0m.1 54.2h0m0-32.4h0m.1-14.7h0m.1 7.2h0m0 2.4h0m.1 9.8h0m.1 21.3h0m.1-54.6h0m0 22.4h0m.1 32.2h0m.1-34.7h0m.1 22.7h0m0-17.5h0m.1-26.3h0m.1 38.7h0m.1-5.6h0m.2-3h0m.1-17.7h0m.1 25.3h0m.1 9.4h0m.1-31.8h0m.1 28h0m.1-32.4h0m.1 17.4h0m0-19.6h0m.1-6.7h0m0 40.3h0m.1-41.6h0m.1 47.2h0m0-8.1h0m.1-2.1h0m0-21.9h0m0 21.6h0m.1-13.4h0m0 24.2h0m0-32.7h0m.1 30.9h0m0-12.9h0m.1 2.5h0m0 5.5h0m.1-12.5h0m.1 25.4h0m0-15.3h0m.1-2.9h0m0 20.5h0m.1-19.4h0m0 13.6h0m0-21.4h0m.1 24.1h0m0-28.6h0m.1 11.8h0m0 19h0m0-9.6h0m.1-8.5h0m0 17.8h0m.1-8.5h0m0-13.4h0m0 18.6h0m.1-15.1h0m0 4.8h0m0 1.9h0m.1-11.7h0m.1 5h0m0 17.1h0m.1-10.4h0m0-4.2h0m.1 2.1h0m0-15h0m.1-21.1h0m0 51.6h0m.1-30.4h0m.1-4.7h0m0 24.9h0m0 6.2h0m0-17h0m.1 12.3h0m0-7.9h0m.1-25h0m0 21.7h0m.1 9.4h0m0-30h0m.1-17.6h0m0 44.9h0m0-27.9h0m.2 4.2h0m0 29.4h0m0-33.2h0m.1 4.8h0m.2 17.2h0m0-1.2h0m0-12.6h0m.1 13.6h0m.1-15.5h0m.1-10.6h0m0 20h0m.1 17.4h0m0-4.3h0m.1-18.7h0m0-14.5h0m.1 5.6h0m0 25.3h0m0-40.4h0m.1-1.1h0m.1 22.5h0m0-4.9h0m.1-1.9h0m.1 4.6h0m.1 20h0m0-22.3h0m.1 16.7h0m0-34h0m.1 24.3h0m.1-32.4h0m0 46.3h0m.1-18.3h0m0-32.6h0m0 30.6h0m.1 6.5h0m.1-15.9h0m0 9.1h0m.1 10.8h0m0-7.6h0m.1 13.6h0m.1-6h0m0-24.9h0m.1 26.5h0m0-39h0m.1 27h0m.1-6.3h0m0 11.1h0m.1-6.2h0m0-1.2h0m.2-6.4h0m.1 31.8h0m.1 .4h0m0-40.2h0m.1-7.2h0m0 63.8h0m0-68.8h0m.1 21.1h0m.1 28.2h0m.1-49.1h0m0 22.9h0m.1-17.2h0m.2-8.7h0m.1 54.1h0m.1-48h0m0 8.6h0m0 35.1h0m.1-11.9h0m0-6.1h0m.1-16.6h0m.1 25.8h0m0-34.1h0m0 12.2h0m.1-14.4h0m0 34.9h0m.1-32.4h0m0-8.9h0m.1-1.1h0m0 19.5h0m0-7.2h0m.1 30.9h0m0-7h0m.1-19.6h0m0-9.8h0m.1-2.5h0m0-9.6h0m0 35.7h0m.1-15.4h0m0-8.9h0m0-11.5h0m0 14h0m.1 28.5h0m.1-26.4h0m0 34h0m.1-54.5h0m0 43.4h0m0-26.9h0m0 13.5h0m.1-12.9h0m0-9.7h0m.1 1.5h0m0 21.5h0m.1-12.5h0m0 1.4h0m0-2.3h0m.2-2.2h0m0 21.2h0m.2-27.6h0m.1 .2h0m.1-2.4h0m0 69.9h0m.1-47.7h0m.1-30.6h0m0 13.8h0m.1 3.7h0m0 16.2h0m0-12.6h0m.1-1.8h0m.1 25.7h0m0-27.3h0m.1-6.3h0m0-8.1h0m.1 41.3h0m0-29.2h0m.1 2.5h0m0 14.9h0m.2 1.5h0m.1 13.4h0m.1-32.3h0m0 1.3h0m.1 7.5h0m0-21.4h0m.1 41.3h0m.2-10.8h0m0 11.1h0m.1 19h0m0-50.9h0m0-2.8h0m0 40.9h0m.1 4.9h0m.2-37.8h0m0 12.8h0m0-18h0m0 8.9h0m.1-3.6h0m.1 12.5h0m0 18.6h0m.1-39.5h0m0 30.7h0m.1 30.3h0m.1-34.5h0m0-17h0m0 31.6h0m.1-12.5h0m.1-2.4h0m.1 19.9h0m0-19.7h0m.1 .7h0m0-14.7h0m.1 17.3h0m.1 4.6h0m0-1.1h0m.1-.3h0m.1 16.8h0m0-32.1h0m0-8.5h0m.1 35.7h0m0 2.2h0m.1 32.2h0m.1-90.6h0m0 28.4h0m.1 10.8h0m0 15.4h0m.1 3.6h0m.1-8.2h0m0 9.6h0m.1-34.8h0m0 25.3h0m.1-29.5h0m.1 1h0m0 .8h0m.1 16.9h0m0 39.4h0m.1-31.5h0m.1-18.4h0m0 9.4h0m.1-4.4h0m0-6.2h0m.1 15.9h0m.1-13h0m0 26.8h0m.1-7.4h0m0-13h0m.1 14.6h0m.1 9.4h0m0-19.8h0m.1 9.8h0m0-25.9h0m.1 17.3h0m.1 5.3h0m0 3.5h0m.1 .8h0m0 7.8h0m.1-11.5h0m.1-3.6h0m0 17h0m.1-16.3h0m0 18.5h0m.1-48h0m.1 26.6h0m0-1.9h0m.1-9.6h0m.1-4.1h0m0 2.4h0m.1-4h0m0 50.2h0m.1-52h0m.1 40.6h0m.1-.1h0m0-3.4h0m.1 3h0m.1 5.4h0m0-5.8h0m.1-26.7h0m0-4.1h0m.1 17.5h0m.1-5.9h0m0-2h0m.1-27.1h0m.1 32.1h0m.1 .4h0m0-36.2h0m.1 51.1h0m0-32.5h0m.2 27.3h0m.2 0h0m.1 12.5h0m0-2.4h0m.1-13.4h0m0-30.4h0m.1 44.9h0m.1-1.3h0m0-21.8h0m.1 21.6h0m0-7.6h0m.1-48.3h0m.1 44.8h0m0 16.9h0m.1-35.5h0m0-15.3h0m.1 12.9h0m.1 22.9h0m0-2.4h0m.1-24.8h0m0 29.6h0m.1 1.3h0m.1 4.9h0m0-26.3h0m.1 6.7h0m.1 7.9h0m0-.4h0m.1 5h0m0-23.3h0m.1 28.9h0m0 .2h0m.1 2h0m.1-14.7h0m0-19.7h0m.2 26.3h0m0-42.5h0m0 53.9h0m.1-14.6h0m.1 12.1h0m0 2h0m.1-8.1h0m.1 3.3h0m0-11.6h0m0 15h0m.1-21.7h0m0 18.8h0m0 .4h0m.1 1.6h0m0 1.6h0m0-23.6h0m.1 23h0m0-36.8h0m0 38h0m0-11.4h0m.1 17.5h0m0-24.6h0m.1-16.7h0m0 32.6h0m0-21.4h0m.1 19.9h0m0-7.9h0m.1-9.9h0m0 25.6h0m.1-19h0m0-4.9h0m.1 23.1h0m0 5.6h0m.2-37.4h0m0 29.1h0m0-4.8h0m.1-17.4h0m.1-17.1h0m0 35.1h0m.1-3.5h0m.1-.1h0m0 4.4h0m0-10.1h0m.1 20.3h0m0-4.9h0m.1-18.4h0m0 14.7h0m.1-21.3h0m0 29.5h0m0 .5h0m.1-3.4h0m0-5.4h0m.1 1.4h0m.1-3.1h0m0 9.6h0m.1-24h0m0-.2h0m0 22.8h0m.1-31h0m0 15.4h0m.1 10.5h0m0 12.1h0m.1-26.3h0m0 4h0m.1-15.5h0m0 33.3h0m0-30.2h0m.1 21.1h0m0-19.6h0m0 27.4h0m.1-15.7h0m0 3.5h0m.1 14.5h0m0-12.3h0m0-10.1h0m.1-2.5h0m0 12.3h0m.1-8.5h0m0 14.9h0m.1-4h0m0-18.6h0m0 15.8h0m.1-.2h0m.1-13.1h0m.1 17.6h0m0-20.5h0m0 19.5h0m.1-35.3h0m.1 35.7h0m0-19h0m.1 11.6h0m.1 4h0m.1-31.3h0m.1 29.6h0m0-46h0m.2 54.2h0m0-27.3h0m0 33.7h0m0-16.4h0m.1 36h0m0-77.4h0m.1 39.5h0m.1 6.7h0m0-4.7h0m.1 6.2h0m0 8.9h0m.2-53.7h0m0-4.7h0m.1 15.7h0m.1 16.1h0m0-20h0m.1 19.4h0m0-26.1h0m.1 25.4h0m.1-22.2h0m0 .9h0m.1-6.1h0m0 3.7h0m.1 13.2h0m.1-6h0m0 4.9h0m.1-9.9h0m0-3.9h0m.1 29h0m.1 26h0m0-74.6h0m.1 28.9h0m0-9.7h0m.1 13h0m.1 21h0m0-8.1h0m.1 4h0m0-5h0m.1-19.9h0m.1 26.5h0m0-29.9h0m.1 29.2h0m0-9h0m.1-23.9h0m.1 13.1h0m0-9.6h0m0 13.5h0m.1-10.4h0m0 17.4h0m.1 .4h0m.1 9.9h0m.1-33.7h0m0 16.7h0m.1-14.3h0m.1-2.3h0m.1 23.7h0m0-23.2h0m.1 7.5h0m0-7h0m.1 35.9h0m.2-37.9h0m0 27.4h0m.1-29.1h0m0 17.2h0m0-2.6h0m.1-23.1h0m.1 38h0m0-27.7h0m.3-3.5h0m0 7.4h0m.1 12.6h0m.1 21.1h0m.1-40.8h0m.1 6.8h0m0-8h0m.1 42.3h0m.1-35h0m0-16h0m0 19.1h0m.1 10.2h0m.1 10.6h0m0-27h0m.1 15h0m.1-13.7h0m.1 10.3h0m.1 16.9h0m.1-21.3h0m0-32h0m0 22.5h0m0 34.2h0m.2-15.5h0m0 10.9h0m.1-14.9h0m0-11h0m.1 24.3h0m0-35.9h0m.1 16.2h0m0-15.6h0m.1 33.4h0m0-10h0m.1-11.9h0m.1-6.7h0m0 13.6h0m0-20.2h0m0 19.6h0m.1 14.7h0m0-24.2h0m.1 19.6h0m0-14.9h0m.1 26.2h0m.1-36.7h0m0 27.7h0m.1-.8h0m.1-35.3h0m0 34.7h0m.2 9.1h0m0-60.1h0m0 9.9h0m0 16.4h0m.1 8.7h0m0-18.6h0m0 15.4h0m0-1.3h0m.2 43.2h0m0-15.6h0m.1 2.9h0m0-36.7h0m.1 59.7h0m0-51.1h0m.1-2.1h0m0-6.9h0m.1 6.2h0m0 .9h0m0-21.6h0m0 40.9h0m.1-19.1h0m0 17.3h0m.1-22.7h0m0-25.2h0m0 33.9h0m0 4.2h0m.1-19.8h0m0 15.4h0m0-2.1h0m.1 1.3h0m0 12h0m.1-43.7h0m0 32.6h0m0-5.2h0m.1 25.1h0m0-38.1h0m0 14.9h0m.1-11.8h0m0 24.8h0m.1-3.2h0m.1-36.6h0m0 25.6h0m.1 .9h0m0 30.4h0m.1-.1h0m0-30.3h0m.1-22.1h0m0-7h0m0 33h0m0 23.1h0m.2 2.7h0m0-24.1h0m0-14.8h0m.1 43.1h0m.1-40.4h0m0 16.7h0m.1-5.9h0m0 26.4h0m.1 19.8h0m.1-57.8h0m0 26.5h0m.1-18.6h0m.1 12h0m.1-4.5h0m0-19.1h0m.1 18.5h0m.1-11.4h0m.2 19.2h0m0 7.9h0m.1-6.7h0m.1-4.3h0m0-13.2h0m0 12.9h0m.1-3.9h0m0 8.6h0m.1-19h0m0 15.1h0m.1-21.9h0m0 40.1h0m.1-16.4h0m0-1.7h0m.1 .2h0m.1 4.7h0m0-28.2h0m0 17.2h0m.1 25.7h0m0-24.6h0m.1-9.5h0m.1 33.9h0m0-11.3h0m.1-18.5h0m0-.9h0m0-3.3h0m0 47.6h0m0-23.7h0m.1-22.8h0m0 23.9h0m.1-9.3h0m0-7h0m.1 21.1h0m.1-1.1h0m0-39.9h0m.1 50.3h0m.1-3.9h0m0-25.3h0m.1 7.7h0m.1 29.9h0m0-25h0m.1-18.7h0m0-13.2h0m0 72.9h0m0-29.9h0m.1-38.1h0m.1 40.2h0m0 22.7h0m0-53.4h0m.1-3.6h0m0 23.8h0m.1-14.7h0m0-4.1h0m.1 10.9h0m0-3.1h0m.1-10.5h0m0-6.2h0m0 25.7h0m.1-4.2h0m0-10.2h0m.1 46.5h0m0-35.9h0m.1 27.2h0m.1-23.4h0m.1-10.4h0m.1 33.7h0m.1-5.3h0m0 8.1h0m.1-21.8h0m.1 28.5h0m.1-3.9h0m0-10h0m0 5.6h0m.1-.4h0m0-18.4h0m0-25.2h0m0 2.5h0m.1 47.5h0m0-54.2h0m.1 29.1h0m.1 7.8h0m0 19.5h0m.2-20.4h0m.1 13.4h0m.1 9.2h0m0-13.2h0m.1-14.5h0m0 21.9h0m.1-47.5h0m0 50.6h0m0-13.2h0m.1 15.7h0m0-29.5h0m0-26.1h0m.1 35.9h0m0-11.1h0m.1 10.8h0m0 7.8h0m.1 16h0m0-19.5h0m.1-8.6h0m0 34.7h0m.1-4h0m0-2.6h0m.1-13h0m.1 8.3h0m.1 7.1h0m0-20.2h0m0 10.8h0m.1-12.7h0m.1 1.6h0m0 8.9h0m.1-3.6h0m0 14.3h0m0-11.6h0m.1 8.4h0m.1-10.8h0m0-7.2h0m.2 5.1h0m0 10.2h0m0 2.8h0m.1-12.1h0m0 2.5h0m0-7.6h0m.1 12.8h0m.1-3.7h0m0 1.8h0m.1-3.6h0m0-1.5h0m0 3.6h0m.1 2.9h0m0-34.2h0m.1 28.2h0m0 3.9h0m0-4.7h0m0-1.4h0m.1 16.3h0m0-38.3h0m.2 22.4h0m0 .5h0m.1 24.6h0m0-9h0m.1-11.2h0m0-4.8h0m.1-32.9h0m0 48h0m0-70.4h0m0 63.5h0m.1-20.6h0m0 24.3h0m.1 9.3h0m0-28.1h0m.1-36.7h0m0 44.6h0m0 11.5h0m.1-.8h0m0-10.4h0m0-15.9h0m0 27.2h0m0-40.3h0m0 44.3h0m.1-21.3h0m.1 10.9h0m0-16.3h0m.1-2.5h0m.1 1.7h0m.1 6.1h0m0 .9h0m.1-6.8h0m.1 26h0m0-49.8h0m.1 35.1h0m0 1.4h0m.1 7.8h0m.1-7.4h0m0 9.2h0m0 3.8h0m.1-8.1h0m0-22.3h0m.1 43.9h0m.1-40.6h0m0-3.7h0m.1 11.1h0m0 24.4h0m0-15.4h0m.1 .7h0m.1 23.1h0m0-58.3h0m.1 31.3h0m.1-7.8h0m.1 5h0m0-19.7h0m.1-3.4h0m.1 7.1h0m.1 15.7h0m0 24.4h0m0-32.3h0m.1 4.6h0m0-31.9h0m.1 48.1h0m.1-18.2h0m0-9.6h0m.1-13.4h0m.1 14.2h0m.1-56.3h0m0 81.6h0m.1-25.4h0m0-8.5h0m.2 27.6h0m0-19h0m0-15.1h0m0 39.2h0m.1-42.6h0m0 29h0m.1 8.4h0m.1-4.2h0m0-11.2h0m.1 2.8h0m.1-4.1h0m0-10.6h0m.1-12.1h0m0 4.2h0m.1 10.4h0m.1 2.3h0m0 4.5h0m.1-9.8h0m0-16.2h0m.1 21.8h0m.1 12.5h0m0 6.1h0m0-19.2h0m.1-7.9h0m0 .6h0m.1 21.7h0m.1-33.6h0m0 13.2h0m.1 8.8h0m0 13.2h0m.1-8.6h0m.1-22.7h0m0-2.4h0m.1-5.3h0m0 18.5h0m.1 13.9h0m.1-1.9h0m0-6.2h0m.1-10.9h0m0 11.2h0m.1-20.2h0m.1-3.8h0m.1 1h0m0 33.2h0m.1-26.6h0m.1 23.6h0m0-31.3h0m0 18.5h0m.1-17.4h0m.1-1h0m.1 34.2h0m0-23.3h0m.1 .9h0m0 13.9h0m.1-32.6h0m0 22.4h0m.1 10h0m0-15.7h0m.1 6.1h0m0 14.6h0m.1-26.2h0m.1-1h0m0 2.4h0m.1-3.1h0m.1 35.3h0m0-41.7h0m.1 .3h0m0 47.8h0m.1-24.1h0m.1-6.5h0m0 15.1h0m.1-31.2h0m0 5.6h0m.1 12.6h0m.1-14.6h0m0 3.3h0m.1 5h0m0-5.3h0m.1-1h0m0-9.1h0m.1-1.1h0m0 4.2h0m.1 17.5h0m0-8.3h0m.1 16.2h0m.1-3.5h0m0 10.6h0m.1-5.8h0m0 3.1h0m.1-22.5h0m.1 3.2h0m0 14.9h0m.1-32.2h0m0 4.7h0m0 5.6h0m0 1.1h0m.1-3.9h0m0-2.2h0m.1 5.6h0m.1 20.7h0m0-54.1h0m.1 31.3h0m.1 15.2h0m0-27.9h0m0 6h0m.1 34.7h0m.1-8.3h0m.1-25.2h0m0 48.7h0m.1-33.7h0m0-10.1h0m0-3.9h0m.1 11.5h0m.1 13.1h0m0-13.4h0m.1 25.6h0m0-17.8h0m.1 4h0m.1-16.4h0m0 .8h0m.1-24.6h0m0 17.8h0m.1 18.2h0m.1-1.8h0m0 15.8h0m.1-30.3h0m0-4.2h0m.1 15.5h0m0-14.4h0m0 23.3h0m.1 35.1h0m0-27.8h0m.1-43.5h0m.1 13.3h0m0 32.7h0m0-46.1h0m0 18.7h0m.1 15.5h0m.1-30.9h0m0 33h0m0-35.9h0m.1 28.5h0m0-6.9h0m.1-1.7h0m0 30.8h0m.1-28.6h0m.1 15.3h0m0-23.6h0m.1 2.6h0m0-3.9h0m.1 15.5h0m.1-6.1h0m0-18.1h0m0 12.5h0m.1 13.3h0m.1-26.9h0m0 14.5h0m.1 6.5h0m.1-13h0m0 4.3h0m0-2.4h0m.1-1.3h0m.1 12.5h0m.1 8.3h0m0-17.9h0m.1-10.1h0m0 31.5h0m.1 5.9h0m0-39h0m0 32h0m.1-19.3h0m0 28.8h0m.1-33.4h0m0 7.9h0m.1 .2h0m0 2.5h0m0-8h0m0-6.4h0m.1-18.8h0m.1 26.5h0m0 13.1h0m.1 14.1h0m.1 .4h0m0-22.6h0m.1-31.3h0m0 54.2h0m0-6.1h0m.1-35.8h0m0 27.3h0m.2 13.1h0m0-33.7h0m.1-19.2h0m0 23.9h0m0-2.9h0m.2 3.3h0m0-7.6h0m.1 1.2h0m0 12.4h0m0-3.4h0m.1-8.5h0m0 12.5h0m.1 4.9h0m0-5.7h0m.1 1.5h0m0 9h0m0 5.1h0m.1-31.6h0m0 13.6h0m.1 32.1h0m.1-20.6h0m0 2.7h0m.1-16.4h0m.1 34.2h0m.1-46.7h0m0 14.4h0m0-1.5h0m.1 4.3h0m0-19.6h0" stroke="#000" fill="none" stroke-linecap="round" stroke-width="3.6"/>
<path d="M1004 503.2h0m.1 5.5h0m0-1.9h0m.1 7.4h0m0-9h0m.1-15.4h0m0 12h0m.1-16.8h0m0 34.1h0m0-17.5h0m.1 13.1h0m0-9.2h0m.2 25.2h0m0-20.8h0m0-21.7h0m.1 11.5h0m0 61.8h0m0-79.3h0m0 1.7h0m.2-7.8h0m0 75.8h0m.1-40.9h0m.1 21.5h0m.1-22.6h0m0-13.9h0m.1 4.9h0m.1 9.4h0m0 14.2h0m.1 1h0m.2 1.2h0m.1-3.1h0m.1-4.3h0m.1 4.9h0m0-25.8h0m.1 43.9h0m.1-22.9h0m.1 0h0m0 7.3h0m.1 1.9h0m0-36.9h0m.5 13.4h0m0 10.2h0m.2 25.9h0m.1-44.4h0m0 37.9h0m.1 9.6h0m0-15.3h0m.1 11.5h0m.1-19.6h0m0 1.8h0m.1 19.1h0m0 .9h0m.1-32.9h0m.1-.7h0m.1 40.3h0m.1-42.5h0m0 3.3h0m.1 15.9h0m0 10.6h0m.1-4.8h0m.1 13.7h0m0-9.7h0m.1-16.5h0m0 5h0m.1-25.4h0m.1 44.6h0m0 2.3h0m.1-24.1h0m0 8.3h0m.1 5.6h0m.1-21.3h0m0 4.6h0m.1 2.8h0m.1 2.5h0m.1 15.2h0m0-24.9h0m.1 25.6h0m0-32.7h0m.1 .1h0m.1 31.4h0m0-28h0m.1-.3h0m0 14.6h0m.1 .8h0m.1-18h0m0-2.6h0m.1 60h0m0-50.2h0m.1 4.5h0m.1-18.2h0m0 10.7h0m.1 12.5h0m0-15.9h0m.1 15h0m.1-20.7h0m0-19h0m.1 46.1h0m.1-16.2h0m.1 22h0m0-1.5h0m.1 15.6h0m0-40.2h0m.2 15.5h0m.2 6.7h0m.1-4.9h0m0 20.8h0m0 24.2h0m.1-56.1h0m.1 .7h0m0 .2h0m.1-24.8h0m.1 34.3h0m.1-.2h0m0-8.7h0m.1 25.1h0m0-.9h0m.1-25.8h0m.1 10.6h0m0 28.8h0m.1-36h0m0 24.7h0m0-10.6h0m.1-21.9h0m0 40.4h0m.1-28h0m0 23.2h0m.1-7.4h0m0-13h0m.1-6.4h0m.1 14.6h0m0 5.7h0m.1-8.8h0m0-16h0m.1 8.7h0m.1 19.3h0m0 4.4h0m.1-4.1h0m0 16.1h0m.1-20.1h0m.1 6.1h0m0 8h0m.1-25.9h0m0 13.5h0m.2 7.1h0m0-9.5h0m.1 17h0m0-36.9h0m0 33.5h0m.1 .2h0m.1-11h0m0 5.9h0m0 20.5h0m.1-40h0m0 25.8h0m.1-17.3h0m0 17.8h0m0-10.2h0m0-.6h0m.1-9.1h0m.1 14.8h0m0 17h0m.1-2.1h0m.1-29.7h0m0 1.7h0m.1 16.2h0m.1 7.1h0m0-14.8h0m.1 10.9h0m0-17.1h0m.1-1.3h0m0 14.4h0m0-3.8h0m.1-3.7h0m0 19.7h0m0 7.8h0m.1-26.8h0m.1-4.7h0m.1-1.4h0m.1 8.6h0m0-4.7h0m0-35.7h0m.1 53.9h0m0-13.4h0m0 15.3h0m0 12.7h0m0-25.7h0m.1 6.2h0m0-36.9h0m0 56.6h0m0-52.8h0m.1 25.8h0m0 6.6h0m.1-.3h0m0-31.7h0m.1 48.5h0m0-19.2h0m.1-26.1h0m.1 27.1h0m0 13h0m.1 2.8h0m0-7.1h0m.1-7.7h0m0 6.5h0m0-48.6h0m.1-11h0m.1 49.4h0m0 8.9h0m0-17h0m0-26.9h0m0 39.7h0m.1-8.4h0m0-10h0m.1 6.9h0m.1 5.1h0m0-6h0m0 11h0m.1-6.7h0m0-11.7h0m.1 17.6h0m0-4.5h0m0-3.1h0m0-27.9h0m0 27.9h0m.1-6.3h0m0 4.4h0m.1 28.3h0m0-40.7h0m.1 25.8h0m.2-1.8h0m0-20.2h0m0 15.4h0m0 23.4h0m.1-51.9h0m0 30.1h0m0-2.4h0m.1-27.6h0m0 48.6h0m0-14.8h0m.1-17.1h0m.1 16h0m0-30.2h0m.1 25.3h0m0-13h0m0 14.9h0m0 24h0m.1-59.1h0m0 33.9h0m.1 1.7h0m.1 .8h0m0-29.2h0m.1-17.4h0m.1 52.5h0m0-11.8h0m.1-15h0m.3 31.2h0m0-19.7h0m.1 8.9h0m.1-5h0m.1-27.7h0m.1 .6h0m.1 29.6h0m0-16.6h0m0 18.2h0m.1-9.1h0m0-12.5h0m.1 31.5h0m.1-30.9h0m0-7h0m.1 24.1h0m0-9.9h0m0 9.9h0m0-36.1h0m.1 49.7h0m0-20.6h0m.1-8.8h0m0 30.6h0m0-10.1h0m.1-8.9h0m0 .6h0m.2 13.8h0m0-35.6h0m.1 14.7h0m0 18.4h0m.1-27h0m.1-8.6h0m.1 2.1h0m.1 20.5h0m.1-.1h0m0 22.9h0m.2-43h0m0 20.6h0m.1-38.2h0m0 19.4h0m.1-4.5h0m.1 .3h0m0 2h0m.1-5.4h0m0 11.8h0m.1-1.2h0m.1-21.1h0m.1 44.9h0m0-40.2h0m0 35.7h0m0-23.5h0m.1 31.3h0m0-23.2h0m.2 11.5h0m0-26.5h0m0-15.7h0m.1 6.3h0m.1 21.4h0m0 2.7h0m.1 15h0m.1-52.8h0m.1 16.5h0m0 3.9h0m.1-4.7h0m.1 38.4h0m.1-28.3h0m0-16.7h0m.1 11.9h0m0 36.3h0m.2 4.9h0m.2-11.3h0m.1-20.5h0m0-3.7h0m.1 26.7h0m.1-18.7h0m0 .2h0m.1 18.7h0m0 4.5h0m.1-32.4h0m.1 24.7h0m0-15h0m.1-20.6h0m0 27.9h0m.1 8.2h0m.1-21h0m0-4.7h0m.1 5.3h0m0 22.3h0m.2-.8h0m0-15.2h0m.1-30.9h0m0 27.4h0m.1-12h0m.1 16.2h0m0 11.9h0m.1-26.8h0m0-1.5h0m.1 22.6h0m.1-34.8h0m0-9.6h0m0 46.2h0m.1 16.7h0m0-29.7h0m.1-28.1h0m.1 3.6h0m.1 7.5h0m0-7h0m0 20.3h0m.1-16.3h0m.1 6.4h0m0-15.8h0m0 14.7h0m.1 5.4h0m0 16.3h0m.1-25.2h0m.1 12.7h0m0-.2h0m0-33.4h0m.2 29.4h0m0 14.1h0m0-35.3h0m.1 23.9h0m0-17.5h0m0-3h0m.1 20.6h0m.1-25h0m0 31.7h0m.1 0h0m0-13.6h0m.1 20.8h0m0-38.1h0m.1 12.8h0m0-14.3h0m0 30.7h0m.1-3h0m0 23.2h0m.1-39.7h0m0-14.1h0m.1 21.7h0m0-6h0m0-6h0m.1 22.3h0m.2 6.8h0m0 8h0m.1 .4h0m0-41.8h0m0 36.2h0m.1-12h0m.1 2.5h0m.1 14.7h0m.1-38.7h0m.1-13.6h0m0 17.7h0m.1 10.6h0m.1-13.2h0m.1 29.2h0m0-31.6h0m0 .7h0m0-13.1h0m0-3.8h0m0 16.5h0m.1 15.6h0m0-7.7h0m.1 32.6h0m.2-6.7h0m.1-41.1h0m0 9.3h0m.1 22.3h0m.1 16.4h0m.1-56.8h0m0 20h0m0 23.7h0m.1-45.5h0m0 45.8h0m.1-21.5h0m.1-.7h0m0 15.7h0m.1-36.3h0m0 13.8h0m0 12.9h0m.1-11.5h0m0-3.9h0m.1 7.9h0m0 8h0m.1 26.8h0m0-41h0m0-7.9h0m0 13.3h0m.1-15.7h0m0 13h0m.1 42.6h0m0-48.5h0m.1-4.8h0m0 14.1h0m0-24h0m.2 29.7h0m0-23.2h0m0 25.9h0m.1-30.3h0m.1 5.2h0m0 1.8h0m0 39.4h0m.1-37.7h0m0 37.4h0m.1-51.7h0m0 23.2h0m0-2h0m.2 26.3h0m0-26.7h0m.1 40.5h0m.1-31.5h0m0-16.5h0m.1 13.7h0m0 11.1h0m.1-12.4h0m0-7.6h0m0 33.8h0m.2-8.5h0m.2 15h0m.1-22.1h0m0-8.3h0m0 19.2h0m.1-8.5h0m0 11.8h0m.1-13.7h0m.1-2.5h0m.1 2.6h0m0-6h0m.2-3.2h0m0-4.6h0m0 13.1h0m.2 2h0m0 4.1h0m.1-14h0m0 14.8h0m.1-19.5h0m0 4.2h0m.1 11.7h0m0-30.3h0m.1 28.7h0m0 6.1h0m.1 34.1h0m0-55.4h0m.1 1.6h0m0-4.1h0m.1 14h0m0 11.1h0m.1-8.6h0m.1 18.7h0m.1-55.1h0m0 15.4h0m0 55.8h0m.1-46.7h0m0-5.9h0m.1 40.6h0m.1-20h0m0 35.2h0m.1-48.9h0m0 1.6h0m.1 9.6h0m.1 4.5h0m0 27.6h0m0-47.3h0m.1 7.4h0m0-10.7h0m.1 44.2h0m0 .5h0m.1-34.1h0m0 29.1h0m.1-18.6h0m0 29.7h0m.1 2.2h0m.1-2.4h0m0-30.3h0m0 12.6h0m.1 18.1h0m.1 4.5h0m.1-43.4h0m0 22.1h0m.1-21h0m.1-28.2h0m0 40.4h0m.1-.9h0m.1 17.7h0m0-20.6h0m.1 30.1h0m0 12.3h0m0-12h0m0-5.2h0m.1-21.5h0m.1-14h0m0 1.2h0m0 39.5h0m.1-1.2h0m0-15.4h0m0 7.5h0m.1-27.1h0m.1 21.3h0m0 17.8h0m0-4.9h0m.1-15h0m0-10.9h0m.1 21.9h0m.1 15.2h0m.1-28.3h0m.2 8.2h0m.1 .5h0m.1-1.9h0m.1-.6h0m.1 34.8h0m.1-14.3h0m0-7.5h0m0-1.6h0m0 5.3h0m.1 6h0m0-20h0m.1-5.3h0m0 21.1h0m0-12.6h0m.1 10.1h0m.1 2.2h0m.1-9h0m0 2.4h0m0-9.2h0m.2 .2h0m0 24.5h0m0-11.2h0m.1-40.2h0m.1 41.4h0m0 4.9h0m.1-17.9h0m.1 13.1h0m0-33.6h0m.3 32.6h0m0-25.4h0m0 29.5h0m.1-25h0m0-24.4h0m.1 25.2h0m.2 12.5h0m0-14.4h0m.1-12.9h0m0 23.1h0m.1 11.2h0m0-6.9h0m.1-7.5h0m.1-27.7h0m.1 42.2h0m0-33.9h0m.1 3.1h0m.1 30.8h0m0-18.1h0m.2 6.5h0m0 7.9h0m0-25.6h0m.1 31.4h0m0-25.3h0m.1 3.9h0m.1-24.3h0m.1 38.3h0m0-36.2h0m.1 14.1h0m.1-12.1h0m0 15.2h0m0 19.9h0m.1-30.4h0m0 26.1h0m.1-28.7h0m.1 4.2h0m0 34.3h0m0-26.5h0m.1-12h0m0-1.9h0m.1 3.4h0m.1 12.1h0m0 15.5h0m.1 11.7h0m0-14.8h0m.1 3.4h0m.1-39.4h0m0 21.1h0m.1 1.6h0m.1 2.5h0m0 13.6h0m.1-31.1h0m0 28.6h0m.1-53.3h0m.1 61.5h0m0-49.8h0m.1 34.5h0m0 1.6h0m.1-5.1h0m0 19.5h0m.1 10.6h0m0-55.6h0m.1-3.8h0m0 15.5h0m.1-2.7h0m.1-12.2h0m0 35.1h0m.1-27.8h0m0-13.8h0m.1 26.1h0m.1-11.6h0m0 22.7h0m.1-1.5h0m0 19.5h0m.1-30.5h0m.1 1.3h0m0-10.9h0m.1 20.6h0m0-12.8h0m.1 6.9h0m.1 1.2h0m0 44.5h0m.1-31.6h0m0-18.3h0m.1 .9h0m.1 12.6h0m0-19.8h0m.1-27.2h0m0 45.6h0m.1-25.4h0m.1 14.8h0m0 17.6h0m.1-12.3h0m0 6.7h0m.1-7.2h0m.1-1.4h0m0-22.7h0m0 24.4h0m.1-5.6h0m.2 9.4h0m.1 35.2h0m.1-28.6h0m0-21.1h0m.1-.9h0m.1 16.3h0m.1-8.8h0m0-1.2h0m.1-31.6h0m0 14.3h0m.1 63.4h0m.1-32.3h0m0-60.1h0m.1 24.6h0m0 50.2h0m.1-43.5h0m.1 23.4h0m0-12.4h0m.1 20.1h0m0-6.3h0m.1-5h0m0-44.8h0m.1 28.1h0m0 2.1h0m.1-9.9h0m0-10.4h0m0 63.8h0m.1-24.1h0m.1-7.7h0m0 13h0m.1-39.4h0m.1-13.8h0m.1 18.6h0m0 12.1h0m.1-16.2h0m0 13.3h0m.1-5.9h0m0-8.5h0m.1 5.1h0m0 10.1h0m0-12.9h0m.1 10.3h0m0 4.2h0m.2-10.5h0m0-7.9h0m0 9h0m.1 14.4h0m.1-22.8h0m.1 2h0m0-9.1h0m0 16.1h0m.1-6h0m.1 5.4h0m0-12h0m.1 29.5h0m0-17h0m0-21h0m.1 19.9h0m.1-6.8h0m0 7.4h0m.1-5.7h0m0 5h0m0-32.9h0m0 44.2h0m.2-12.7h0m0 19h0m0-37.3h0m0 16.8h0m.1-20.7h0m.1 4.3h0m.1 20.2h0m0-21.3h0m0 19.6h0m.1 8.7h0m.1-23.5h0m0 11.9h0m.1-6.6h0m0 22.4h0m0 12.7h0m0-24.8h0m.1-12.1h0m0-4.9h0m0-1.3h0m0 27h0m.1 20.2h0m0-46.6h0m0 11.9h0m.1 23.9h0m0-18.3h0m0 4.4h0m0-8.5h0m0 .8h0m.1-19.9h0m0 21.9h0m0-24h0m.1 14.2h0m.1-3h0m.1-8.2h0m0 25.6h0m0 .6h0m.2-20.4h0m0 42.9h0m0-17h0m.1-13.7h0m0-26.1h0m.1 50h0m.2-3h0m0-19.4h0m0 10.9h0m.1-11.6h0m0-10.9h0m.1 10.4h0m0-4.3h0m0-20.8h0m0 25.3h0m0-2.9h0m0-1.2h0m.1 8h0m0 31.6h0m0-43.1h0m.1 41.6h0m0-42.2h0m.1 14.2h0m0-23.4h0m0 20.9h0m0 6h0m.1-4.4h0m.1 .3h0m0-8.9h0m.1-6.7h0m0-20h0m.1 37.2h0m0-5.1h0m.1-14h0m0 8.8h0m0-8.5h0m.1 35.3h0m0-50.7h0m0 33.1h0m.1-2.3h0m0 30h0m.1 3.1h0m.1-49.5h0m0 22.1h0m0 6.8h0m.1 12.3h0m.1-21.2h0m0-1.1h0m0 42.2h0m.1-13.1h0m0-21.3h0m.1 1.4h0m0-30.2h0m.1 41.4h0m0-25.5h0m0 3.4h0m.1 1.2h0m0 26.8h0m.1 6.6h0m0-37.6h0m.1 4.6h0m0 30.7h0m.1-39.9h0m.1 33.3h0m.1-22.6h0m0-19.6h0m.1 18.9h0m0-7.5h0m0 23.7h0m.1 35.4h0m.1-45.6h0m.1 19.3h0m0-10.4h0m.1-26.2h0m.1 44.7h0m0-41.8h0m.1 20h0m0 13.6h0m.1 16.6h0m.1-50.4h0m0-15.7h0m.1 59.3h0m.1-6.6h0m0-31.3h0m.1 9.7h0m0-1h0m.1 5.8h0m.1-22.1h0m0 41.8h0m0-24.5h0m.1-14.3h0m0 15.4h0m0 12.3h0m.1-49.7h0m.1 28.8h0m0 34.6h0m0-55.9h0m.1 55.3h0m.1-31h0m.1 27h0m.1-20.6h0m0-6.3h0m.1 42.2h0m0-56.3h0m.1 8.3h0m0 46.5h0m.1-43.8h0m0-8.1h0m.1 11.1h0m.1 6.1h0m0 9.2h0m.1-7.5h0m0-11.5h0m.1-1.6h0m.1 22.6h0m0-22.1h0m.1 47.8h0m0-14.7h0m0-26.7h0m.1 31.1h0m.1-51.4h0m0 33.1h0m.1-7.9h0m0 6.7h0m.1-14.8h0m.1 29.1h0m0-28.4h0m.1-9.7h0m0 35.6h0m0-3.9h0m.1 10.1h0m.1-13.6h0m0-2.6h0m.1 24.8h0m0-20.6h0m.1-11.2h0m.1 20.8h0m0-19.1h0m.1 3.6h0m0 26.2h0m.1-19.8h0m0-14.3h0m.1 19.8h0m0 2.2h0m.1-14.7h0m.1 6.2h0m0 8.1h0m.1-27.6h0m0-1.2h0m.1 2.3h0m.1 46.3h0m0-31.3h0m.1-25.7h0m0 53h0m0-7.5h0m.1-23.1h0m.1-5.9h0m0 39.3h0m.1-30.9h0m0 1.1h0m.1-4.6h0m.1 24.7h0m0 8.7h0m.1-43.8h0m0-.3h0m.1 .9h0m.1 5.5h0m0 33h0m.1-26.7h0m0 4.1h0m.1 22.8h0m0-35.6h0m.1 22.5h0m0 16.7h0m0-23.4h0m.1-1h0m0 24.8h0m0-14.9h0m.1-19.3h0m0 31.5h0m.1-3h0m0-16.8h0m.1 17.4h0m0 .7h0m.2-35.5h0m0 35.9h0m.1 4h0m0 12.1h0m.1-42.3h0m.1 29.9h0m0-19.9h0m.2-5.7h0m.1 43.4h0m.2-41.8h0m0 19.8h0m.1-21.5h0m.2 11.1h0m0 27.8h0m0 12.3h0m0-27.3h0m.1 5.9h0m0 18.8h0m0-54.1h0m0 53.4h0m.1-6.3h0m.1-42.2h0m.1 50.3h0m0-17.8h0m0 .2h0m.1-32.6h0m.1 26.9h0m0 12.7h0m0-1.4h0m0-17.4h0m0 16.9h0m.2 13.2h0m0-18.6h0m.1 22.7h0m0-9.9h0m0-16.3h0m.1-14.5h0m0 11.3h0m0-24.3h0m0 47.6h0m.1-25h0m0 25.3h0m.1-26.9h0m0 18.8h0m.1-29.3h0m0 15.2h0m.1-6.2h0m0-4.8h0m0 14h0m.1-6.7h0m0 19h0m.1-2.9h0m0 13h0m0-28.2h0m.1-2.9h0m0 19.8h0m.1-11.1h0m.1 3h0m0-6.1h0m0-5.9h0m.1 3.2h0m.1-11.4h0m.1 9.2h0m.1 3.9h0m0 .8h0m.1-10.4h0m0-13.1h0m.1 24.4h0m.1-18.5h0m0 32.4h0m.1 4.1h0m0-10.4h0m0-26.7h0m.1 42.9h0m0-15.8h0m.1-3.2h0m.1 5.2h0m0 11.2h0m0-31.8h0m0 4.4h0m.1-15.1h0m.1 18.1h0m0 12.9h0m.1-20.5h0m0 34.6h0m0-36h0m.1-.5h0m0 16.6h0m.1 .5h0m0-7.3h0m.1-21.4h0m0 30.3h0m0-11.8h0m.1 11.5h0m.1-11.8h0m.1-14.5h0m0 32h0m0-.9h0m.1-6.3h0m0-15.9h0m.1 7.1h0m0 12.8h0m0-31.8h0m.1 21.5h0m0 .3h0m0 3.7h0m0 5.1h0m.1-6.2h0m.1-13.4h0m0 2.1h0m.1 3.4h0m0 6.7h0m.1-18.6h0m.1 26.2h0m0-1h0m.1-7.1h0m.1-34.3h0m.1 9.8h0m0 31.6h0m0 11.9h0m.1-45.8h0m0-2.7h0m.2 34.8h0m.1-5.7h0m.1-41.7h0m0 69.8h0m.1-40.1h0m.2-11.6h0m0 7.9h0m.1 20h0m0-10.8h0m.1-35.2h0m0 42.9h0m.1-37.4h0m0 4.6h0m.1 28h0m.1-21.3h0m0 37.8h0m0-17.9h0m.1-18.6h0m0 6.4h0m.1-7.3h0m.1 5.1h0m.1-13.7h0m.1 3.5h0m.1-4.7h0m.1-1.3h0m0 4.8h0m.1-15.9h0m.1 17.9h0m.1 6.7h0m0 16.5h0m.1-34.6h0m0 15.9h0m.1 2.6h0m.1-24.7h0m.1 21.1h0m0 33h0m0-34.4h0m.1-18.2h0m.1 44.7h0m0-6.9h0m0-4.4h0m.1-24.2h0m0 9h0m.1 8.8h0m.1-5.2h0m0-23.6h0m.1 32.6h0m0-11.2h0m.1 4.8h0m.1 9.4h0m0-20h0m.1 11.9h0m.1 10.6h0m0-38h0m.1 .7h0m0 32.1h0m.1-16h0m.1 28.9h0m0-33.2h0m.1 21.8h0m0-21.5h0m.1-15.9h0m.1 13.3h0m0 26.3h0m.1-25h0m0 15.6h0m.1 .9h0m.1-15.5h0m0 4.3h0m.1-2h0m0 11h0m.1 7.3h0m.1-9.8h0m0-9.3h0m.1-16.8h0m0 30.8h0m.1-24.4h0m.1 5.3h0m0-31.2h0m.1 62.5h0m0-12h0m.1 20.3h0m.1-30.3h0m0 30h0m.1-25.8h0m0 3.6h0m.1-.2h0m.1-20h0m0 7.6h0m.1-.7h0m0-.5h0m.1 1.5h0m.1-7h0m.1-5.6h0m0 9.6h0m.1-7.8h0m.1 17.2h0m0-9.9h0m.1 24.5h0m0-28.8h0m.1 13.6h0m0 27h0m.1-33.1h0m0 13.4h0m.1 5.9h0m.1 16.7h0m0-22.8h0m.1 14.3h0m0-1.2h0m.1-7.9h0m.1 7.6h0m0 2.2h0m.1-12.4h0m0-1.4h0m.1 9.4h0m.1-8.5h0m0-12.2h0m.1 6.1h0m0-15.6h0m.1 38.8h0m.1-36.2h0m0-2h0m.1-15.3h0m0 26.3h0m.3-8.1h0m.1 35.2h0m.1-37.8h0m.1-10.5h0m.1 50.6h0m.1-.2h0m0-31.1h0m.1 15.1h0m0 9.5h0m.1-14.1h0m.1-8.4h0m0 21.6h0m.1-11.4h0m0-11.8h0m.1 10.8h0m.1 4.1h0m0-11.1h0m.1 16.8h0m0-22.7h0m.1 18.2h0m.1-40h0m0 14.5h0m.1 26.2h0m.1-14.5h0m0-7.6h0m.1-21h0m.1 44h0m0-38.4h0m.1-4.9h0m.1 37h0m.1 10.8h0m.1-8.2h0m.2-.4h0m.1 13.7h0m0-14.7h0m.1-45.3h0m0 18.4h0m.1 23.1h0m.1-11.7h0m.1-23.6h0m0 10.9h0m.1-.1h0m.1 7.2h0m0-3h0m.1 4.7h0m0-4.2h0m.1-17.2h0m0 1.2h0m.1-5.7h0m.2 27.4h0m.1-13.6h0m0 30.3h0m.1-28.4h0m0-16h0m0 39.8h0m.1-39.4h0m0 38.3h0m0-39.8h0m.1 6.8h0m0 7.1h0m.1-.5h0m.1-12.9h0m0 46.4h0m0-31.9h0m.1 19h0m0 5h0m0-29.4h0m.2 14.8h0m0-13h0m0 .1h0m.1 25.9h0m0-23h0m.1 10.3h0m0-21.4h0m.1 9.2h0m0-4.9h0m.1 3.1h0m0 28.1h0m.1-21.6h0m.1-4.7h0m0 .9h0m0-17h0m0 26.4h0m.1-8.9h0m0 5.7h0m.1-10h0m0 8.8h0m0-1.9h0m.1 5.9h0m.1-13.5h0m0-4.9h0m.1-13.4h0m0-3.7h0m0 23.4h0m0-18.7h0m0 11.8h0m.1 28.5h0m0-24.4h0m0 7.9h0m.1-8.4h0m.1 1.6h0m0-11.4h0m0 16.5h0m.1-27.1h0m0 38.7h0m.1-5.9h0m.1-14h0m0-19.1h0m.1 23.5h0m.1 14.8h0m.2 2.8h0m0-17.7h0m0 19.6h0m.1-28.4h0m0 42.9h0m.2-62.6h0m0 69.6h0m.1-7.4h0m0-18.9h0m.1-1.2h0m.1 27.5h0m0-10.1h0m.1-15.4h0m0 11.1h0m.1-36.6h0m.1 12.6h0m.1 17.7h0m.1 7h0m0-28.6h0m.1 26.3h0m0-18h0m0 17.3h0m.1 3.3h0m.1 17.6h0m0-31.2h0m0-11.5h0m.1 16.4h0m0 30.6h0m.1-47.1h0m.1 28.9h0m0 16.7h0m.1-19.5h0m0-25.7h0m.1 58.2h0m.1-31.6h0m.1 32.2h0m0-36.5h0m.1 2.5h0m.3-5.4h0m0 25.8h0m.1-26.3h0m.1 51.7h0m0-57.3h0m.1 32.7h0m0-37.2h0m.1 3.3h0m0-6.3h0m.1 38.5h0m.1 2.4h0m0-44h0m.1 27.7h0m0-15.1h0m0 31.4h0m.1 9.7h0m0-13.8h0m0 14.6h0m.1-56.6h0m.1 46.3h0m0-1h0m0-5.3h0m.1-9.7h0m0 8.4h0m.1-.8h0m.1 4.7h0m0-.4h0m.1 7.8h0m0-31.2h0m0 37.1h0m.1-2.9h0m0-1.1h0m.1-5.8h0m0-35.4h0m0 13.9h0m.1 34.4h0m0 8.7h0m0-13h0m.1-26.3h0m0-2.6h0m0 21.3h0m.1 6.5h0m.1-6.2h0m.1-29.8h0m0 33.5h0m0-11.4h0m.1-28.9h0m0 35.7h0m.2 12.5h0m.1-5.1h0m0-32.5h0m0 24h0m0 21.4h0m.1-20.2h0m.1-5.4h0m0-18.3h0m.1 25.1h0m.1 21.5h0m.1-23.1h0m.1-2.9h0m0-3.1h0m.1-12.5h0m0 35.7h0m0 1.5h0m.1-21.8h0m.1 8.6h0m.1-4.3h0m0-10.7h0m.1 2.3h0m0 9.4h0m0 15h0m.1-14.1h0m0-1.5h0m.1-18.4h0m.1 9.9h0m0 6.9h0m0-8.9h0m.1-20.6h0m.2 23.2h0m0 16.6h0m0-17.4h0m.1 13.9h0m0-34.7h0m0 32.3h0m.1 .2h0m.1-.4h0m.1-8.8h0m0 3.8h0m.1 .7h0m0 1.7h0m0 .1h0m.1-16.1h0m0 32.8h0m0-18.3h0m.1 5.3h0m0-33.4h0m.1 19.1h0m0 11.2h0m.1-12.3h0m.1 18.9h0m.1 17.9h0m.1-34.8h0m.1 19.2h0m0-22h0m.1-22.8h0m.1-8.8h0m0 37.5h0m.1-7.6h0m.1 10.7h0m0 5.1h0m.1-10.5h0m.2-21.4h0m.1 26.2h0m.1-12.7h0m.1 2.5h0m0 13.2h0m.1 .7h0m0-22.7h0m.1 23.6h0m0 2.6h0m.1-17.5h0m0 14.5h0m.1 2.4h0m0-7.9h0m.1-30.1h0m.1 11.5h0m0 18.5h0m.1 7.1h0m0-14.9h0m.1 5h0m0 5.1h0m.1 7h0m.1-17.8h0m.1-19.4h0m.1 4.2h0m.1 33.3h0m0 1.4h0" stroke="#000" fill="none" stroke-linecap="round" stroke-width="3.6"/>
<path d="M1090.9 533.8h0m0-4.2h0m0 14.3h0m.1 7.9h0m0-33.7h0m0 19.3h0m.1 9.9h0m.1 4.7h0m0 .5h0m.1-2.3h0m0 8.1h0m0-5.8h0m0-12.7h0m.1 13.7h0m.2-1.7h0m.1-8.2h0m0 4.7h0m0 1.9h0m.1-6.1h0m0-4.9h0m.1-10.1h0m0-12.8h0m.2 5.6h0m0 20.6h0m.1 3.5h0m0 9.7h0m0-10.6h0m0-30.5h0m.1 17.9h0m.2 19h0m0-20.4h0m.1 14h0m0-5.7h0m.1-17.4h0m0 11.9h0m0 21.1h0m.1-31.3h0m0 23h0m0 11.7h0m.1-3.8h0m0-1h0m.1 1.9h0m0 1.5h0m0-46.1h0m.1 14.9h0m0 20.8h0m.1-59.2h0m0 44.3h0m.1 15.5h0m0-20.4h0m0-3h0m0-22.7h0m.1 49.6h0m0-5h0m.1-46.5h0m.1 35.7h0m0-24.7h0m.1 21.3h0m.1 5.3h0m0 9.1h0m0-4h0m.1-45.7h0m0 7.7h0m.1 3h0m.1 13.4h0m0-14.5h0m.1 40.9h0m0-8.6h0m0-13.2h0m.1 5.6h0m0 15.9h0m.1-44.7h0m0 14.8h0m.1 16.7h0m0-11.4h0m0-24.7h0m.1 8.1h0m.1 40.6h0m0-17.5h0m0-25.4h0m0 36.3h0m.1 20h0m0-19.2h0m.2-29.2h0m0 9h0m.1-22.6h0m.1 40.6h0m.1 0h0m0-32h0m.1 24h0m0-46.7h0m.1 32.9h0m.1-4.8h0m0 33.3h0m0-15.1h0m0-47.1h0m.1 9.2h0m0 8.3h0m.1-1.6h0m0 12.7h0m.1 20h0m0-44.9h0m0 47.7h0m0-41h0m.1 35.3h0m0-25h0m.1-8.3h0m.1 23.3h0m0 .6h0m.1-12.8h0m0 10.4h0m.2 23.1h0m0-31.7h0m.1 6.8h0m0 18.1h0m.1 1.9h0m0-33.1h0m.1 14.8h0m0 6.5h0m.1-30.5h0m.1 18.2h0m0-9.2h0m0 8.6h0m.2 18h0m.1-21.6h0m0 7.9h0m.1 17.4h0m.1-12h0m0-31.5h0m0 14.8h0m0-23h0m.2 35.1h0m0-17.1h0m.1 1.3h0m0 47.6h0m.1-28.7h0m0-20.7h0m.1-7.5h0m0 30.3h0m0-.6h0m.1-.8h0m.1-8.5h0m0-14.7h0m.1-14.6h0m0 14.6h0m.1 25.6h0m.1-9.7h0m.2-10h0m0 24.1h0m0-53.5h0m.1 30.8h0m0-3.8h0m.1 17.8h0m0-16.8h0m.1-5h0m0 19.5h0m.1 4.8h0m.1-23.7h0m.1-8.9h0m0 6.7h0m0 13.8h0m.1 28.7h0m0-45.9h0m.1 18.7h0m0-8.3h0m0-22.6h0m0 20.1h0m.1-18h0m0 28.4h0m0-33.5h0m.1 5h0m0-8.1h0m0 27.1h0m.1 3.7h0m.1 5.8h0m0 17.3h0m.1-.9h0m0-38.8h0m0 12h0m0 6.6h0m.1-16.6h0m0 21.1h0m.1-9h0m0 18.6h0m0-1.5h0m0-21.4h0m.1-20.6h0m0 67.5h0m.1-48.3h0m0 6h0m.1-23.4h0m0 3.1h0m0 15.5h0m.1 3.2h0m0 13.3h0m.1-32.4h0m.1 52.8h0m.1-10.3h0m0-12.3h0m.1-4.3h0m.2 31.7h0m.1-54.3h0m.1 28.1h0m.1 5.8h0m0-25.7h0m0-2.8h0m0 47.1h0m.1-11.2h0m.1-18.2h0m.1-13.3h0m0 55.4h0m.1-63.1h0m0 3.1h0m0 .4h0m.1 25.2h0m.1 4.1h0m.2-18h0m0-14h0m0 13.6h0m.1-25.6h0m.1 27.9h0m0-22.4h0m0 25.2h0m0-11.1h0m.1-9.7h0m0 46h0m.1 13.1h0m0-53.6h0m0 17.2h0m.1-4.1h0m0-29.8h0m0 22.6h0m.1 14.8h0m0 13.1h0m.1 13.6h0m0-57.2h0m.1 57h0m0-33.9h0m.1 .3h0m.2 7.5h0m0-9.5h0m0 2.3h0m.1-13.1h0m.1 19.2h0m.1 2.8h0m0 18.2h0m.1-30.5h0m0 26h0m.2-20.3h0m0-20.5h0m0 24.2h0m.1-8.7h0m.1-18.3h0m.1 17.7h0m0 6.1h0m.1-10.3h0m0 28.8h0m0 1.7h0m.2 11.1h0m0 5.9h0m.1-42.3h0m0 37.6h0m.1-23.5h0m.1-1.4h0m0-7.4h0m0-3.6h0m.1 39h0m0-5h0m.1 11.2h0m.1-39h0m.1-1.8h0m0 14.2h0m.1 16.1h0m.1 8.3h0m0-27.7h0m.1 5.8h0m0-24.8h0m0 2.6h0m0 33.7h0m.1 .5h0m0-44.9h0m.1 56.9h0m0-10.4h0m.1 3.1h0m0-26.8h0m.1-3.7h0m.1 4.4h0m0 33.2h0m.1-20.4h0m.1 12.1h0m.1-2.9h0m0-9.6h0m.1-14.5h0m.1 28.2h0m0-45.3h0m0 5h0m.1 15.9h0m0 11.5h0m.1 18.7h0m0-53.4h0m.1 37.9h0m0 7.8h0m.1 10.7h0m0-2.3h0m.1-12.7h0m.1-1.3h0m0-11.5h0m.1-21h0m0 9.3h0m.1 2.5h0m.1-33.7h0m0 44.3h0m.1 22.1h0m0-36.5h0m0 13h0m.1-3.7h0m.1 26.6h0m0-39.4h0m.1 9.7h0m0 12.3h0m.1-22.1h0m.1 .6h0m0 .2h0m.1 40.1h0m0-12.4h0m.1 6.3h0m.1-12.1h0m0-9.7h0m.1-23.7h0m0-9h0m.1 66.5h0m0-25.5h0m.1-10h0m0 20h0m.1 11.3h0m0-39.6h0m0-17.4h0m0 53.8h0m.1-31.1h0m.1 33.5h0m0-6.1h0m.1-13.9h0m.1 7h0m0 10.1h0m0-27.5h0m.1 17.7h0m0-11.6h0m.1-28.2h0m.1 38h0m0 11.4h0m0-34.3h0m.2 44.9h0m0-4.7h0m.1-13.3h0m0-10.6h0m.1-19.8h0m0 43.3h0m0-4.9h0m.1-6.4h0m.1 7.7h0m0-18.4h0m0 32.1h0m.1-17.6h0m0 4.7h0m.1 7.6h0m.1-29.5h0m.1-.7h0m0 18.5h0m.1-12.3h0m.1 8.7h0m0 15.9h0m0-5.6h0m.1 .6h0m0 5.1h0m.1-.9h0m.1-36.1h0m0 17.5h0m.1-5h0m0 8.5h0m.1 9.7h0m0-12.8h0m.2 .6h0m0 15.3h0m0-33.2h0m.1 26.5h0m0 1h0m.1-5.2h0m0-33.3h0m.1 46.7h0m0-8.9h0m.1-1.4h0m.1 4.6h0m.1-1.8h0m0-46h0m0 64.5h0m0-19.6h0m0 8.5h0m.2-18.1h0m0 18.1h0m0-21.4h0m.1 22.3h0m.1-17.4h0m0 12.9h0m.1-30.4h0m0 3.2h0m.1 24.6h0m.1-9.2h0m0 13h0m0-18.7h0m.1 30.3h0m0-45.4h0m.1 15.2h0m.1 2.8h0m0 9.9h0m.2-.2h0m.1-22.5h0m.1 22.7h0m0-3h0m.1 25.4h0m0-23.3h0m0 3.6h0m.1-3.5h0m0-27.2h0m.1 5.6h0m0 24.4h0m.1 19.8h0m.1-42.8h0m0-3.2h0m.1 14.6h0m0-1.1h0m.1-15.1h0m.1 8.8h0m0-12.8h0m.1 31.8h0m0-30.4h0m0 22.5h0m.1 4.6h0m0-22.5h0m.1 28.7h0m0-29h0m.1 13.5h0m0-33.6h0m0 22.4h0m.1-27h0m.1 49.5h0m.1-21.4h0m0-19.4h0m.1 47.2h0m0-20h0m.1 4.6h0m0 9.5h0m0 5.1h0m.1-48.4h0m0 13.8h0m.1 4.7h0m0-12.1h0m.1-22.8h0m0 62.2h0m.1-18.3h0m.1-12.1h0m0-3h0m.1 1h0m0-5.3h0m.1 17.4h0m.1 3.7h0m0-14.2h0m.1 2.2h0m0-6.8h0m.1-7h0m.1 43.4h0m0-21.3h0m.1 4.7h0m0-32.9h0m.1 35.5h0m.1-6.8h0m0-29h0m0-9.8h0m0 26.1h0m.1 20.7h0m0-34.3h0m.1 37.2h0m.1-41.7h0m0 10.8h0m.1 27.2h0m.1-21.8h0m.1 9.1h0m0-32.5h0m0 33.6h0m.1 13.4h0m0-32.8h0m.1 32.6h0m.1-18.6h0m0 15.3h0m.1-31.9h0m0 16.4h0m.1-15.7h0m.1-1.8h0m0-12.6h0m0 6.5h0m0 22.8h0m.1-16.8h0m0-5.7h0m0-3.7h0m.1 2.7h0m0-15.6h0m.1 31.6h0m.1-8.8h0m.1 27.4h0m.1-28.8h0m0-11.4h0m0-6.4h0m.1 51.3h0m0-51h0m.1 4.9h0m0 2.2h0m0 32.8h0m.1-16.8h0m.1-36h0m.1 62.3h0m.1-38.9h0m0 2.3h0m0-8.2h0m.1-.8h0m0 3h0m0-12.7h0m0 23.2h0m.1 .9h0m0-16.5h0m0-5.2h0m0 24.9h0m.1 2.6h0m0-19h0m0 10h0m.1 .6h0m.1-.4h0m.1 4.4h0m0 16.1h0m0 4.2h0m.1-5.7h0m0-24.4h0m0 3.9h0m.1 22.4h0m0-27h0m0-4h0m.1 9.5h0m0-1.1h0m.1-5.8h0m0 18.9h0m.1-1.8h0m0-25h0m0 6h0m0 16.7h0m0-14.7h0m.1-4h0m0 3h0m0 29.9h0m.1-26h0m.2 3.3h0m0-.5h0m0 6.3h0m.1 10.6h0m0-10.6h0m.1 .2h0m.1-2.7h0m0-11.2h0m0 13.7h0m.1-22.9h0m0 21.3h0m0 14.2h0m.2-23.7h0m0 23.1h0m.1-13.8h0m0 11.5h0m.1-23.7h0m0 26.9h0m.1-15.4h0m0 14.7h0m.1-14.1h0m0 20.2h0m.1-15h0m0 33.6h0m.1-63.6h0m.1 21.7h0m0 20.9h0m.1-18.4h0m0-7.4h0m.1-13.9h0m0 51.7h0m.1-16h0m0-14.5h0m0-11h0m0 9.1h0m.1 1.1h0m0 28.4h0m.1-28.5h0m.1 23.8h0m0-4.9h0m.1-1.3h0m0-18.3h0m0 23.5h0m.1 22.4h0m.1-5.7h0m0-11h0m.1 14.8h0m0-60.2h0m0 8.9h0m0 5.8h0m.1-3.7h0m.1 22.4h0m0 12.8h0m.1-18.1h0m0 17.3h0m.1-3.1h0m.1-27.4h0m0 15.4h0m.1 .2h0m0 1.7h0m.1 9.2h0m.1-13.9h0m0 8.9h0m.1-16.3h0m0 .3h0m0-6.8h0m.2 15.4h0m0 10.1h0m.1-15.1h0m.1 27.3h0m.1-2.4h0m0-4.3h0m.1-42h0m0 15.9h0m.1 6.8h0m.1 1.7h0m0 15.8h0m.1-21.2h0m.1 2.1h0m0 12.7h0m.1-6.7h0m0 23.2h0m.1-18.8h0m.1-21.8h0m0 25.1h0m.1-6.6h0m0 4.4h0m.1-3.9h0m.1 31.7h0m0-11.5h0m.1 3.8h0m0-24.1h0m.1-6.9h0m.1 30.6h0m0-36.1h0m.1-5.6h0m.1 9h0m.1 15.7h0m0 3.8h0m.1 36.8h0m0-63.9h0m.1 22.4h0m.2 .6h0m.1-6.8h0m.1 25.5h0m0-33.3h0m.1 5h0m0-14.2h0m.1 22.5h0m.1 21.6h0m0-9.7h0m.1-7.3h0m0 19.4h0m.1 7.1h0m.1-49.1h0m0-1.1h0m.1 14.5h0m0 21.8h0m.1-40.2h0m.1 1h0m0 41.3h0m.1-33.7h0m.1 22.2h0m0-7.6h0m.1 14.7h0m0-5.2h0m.1 21h0m0-15.1h0m.1-8.6h0m0 14.2h0m.1-12.7h0m.1-30.7h0m.1 39.4h0m0-36.2h0m.1 63.6h0m0-40.6h0m.1 12.5h0m.1 14.3h0m0-35.3h0m.1-2.2h0m0 .1h0m.2 15.6h0m0-18.3h0m.1 4.2h0m0 14.5h0m.1 11.7h0m.1-43.7h0m0 27.8h0m.1-20.8h0m0 14.7h0m.1 8.1h0m.1 13h0m0-23.3h0m.1 19.5h0m0-33.8h0m.1 23.7h0m.1-7.3h0m0 27.6h0m.1-27.6h0m0-12.2h0m.1 44.4h0m.1-23h0m0 12.6h0m.1 8.7h0m0-44h0m.1 17.2h0m.1 28.2h0m0-19.9h0m.1-19h0m.1 36.1h0m0-43h0m.1 10.4h0m0 32.1h0m.3 15.6h0m0-57.6h0m.1 50.7h0m0-7.1h0m.1-.9h0m.2 7.6h0m.1-47.2h0m0 37.5h0m.1 11.4h0m0-12.5h0m0-36.5h0m.1 42.1h0m.1-55h0m0 53.3h0m0-5.5h0m.2 1.4h0m0 9.1h0m.1-3.7h0m0-42.8h0m.1 27.7h0m0 9.4h0m.1 19.7h0m.1-8h0m0-11.2h0m0 2.8h0m.1-1.9h0m.1-7.9h0m.1-1.4h0m0 13.1h0m0-1.5h0m0-7.9h0m.1 13.1h0m0 6h0m0-25.3h0m.1 31.5h0m.1-30.5h0m.1 13.1h0m0-8.6h0m.1 7h0m0-12.6h0m.1 33.4h0m.1 1.4h0m.1-10.4h0m0-48.7h0m.1 53.4h0m0-54.7h0m.1 44.8h0m.1-32.5h0m.2 30.5h0m.1-26.2h0m0 39.6h0m0-16h0m.1 30.5h0m0-45.1h0m.1 7.8h0m0 18.2h0m0-15.4h0m.1 1.1h0m0 17.9h0m.1-15.8h0m0 4.4h0m0-4.5h0m0-4.9h0m.2-12.2h0m0 14.3h0m.1-24.3h0m0-2.1h0m.1 44.7h0m0-10.8h0m0 15.3h0m0-17.6h0m.1-38.7h0m0 27.2h0m.1-20.6h0m0 27.2h0m.2-20.4h0m0 30.1h0m.1-21.4h0m0 4.4h0m.1 8.8h0m0 10.7h0m.1-11.2h0m.1-5.5h0m0 5.6h0m0 4.1h0m.1-4.2h0m0-10.9h0m.1-1.4h0m.1-1.4h0m0 2.5h0m0 12.2h0m.1-9.1h0m0 17.1h0m.1-10h0m0-14.2h0m.1-15.6h0m0 31.8h0m.1-7.2h0m.1-4.6h0m0 15.2h0m0 .7h0m0-9.5h0m.1 15.1h0m0-3.6h0m0-14.2h0m.2-6.9h0m0 16.2h0m0 0h0m.1-2.3h0m.1 6.2h0m.1-52.3h0m.1 21h0m.1 16.9h0m0 11h0m0-30.4h0m.1-6.6h0m.1 43h0m.1-4.9h0m0-22.4h0m.1 16.2h0m0-23.8h0m.1 34.6h0m0-2.8h0m.1-38.1h0m0 24.2h0m.1-3.8h0m.1 16.8h0m.1-18.4h0m0 29.2h0m.1-14.8h0m0-8h0m0 5.2h0m.1-13.5h0m.1-.9h0m0 17.2h0m0-2.5h0m0-18.1h0m.1 31.8h0m0-9.2h0m.1-30.6h0m.1 10h0m0-4.4h0m.1-37.2h0m0 58.6h0m.1-33.3h0m.1-1.5h0m0 52.5h0m.1-24.3h0m0-2.4h0m.1-28.1h0m.1-1.2h0m.1 6.2h0m.2 8.2h0m0 24.2h0m0-22h0m.1 8h0m.1 4.4h0m0-25.5h0m.1 19.7h0m0-3.2h0m.1-22.6h0m.1 13.9h0m0-22.8h0m.1 5.6h0m0 8.7h0m.1 18h0m.1-2.6h0m0 43.5h0m.1-40.9h0m0-2.8h0m.1 5.6h0m.1 22h0m0-.9h0m.1-27.6h0m.2 19.9h0m0-5.9h0m.1-7h0m0-27.8h0m.1 19.1h0m.1 10.1h0m.1-14.5h0m.1 20.9h0m.1-3.9h0m0-5h0m.1-23h0m0 29h0m.1-.8h0m.1-5.6h0m0 14.7h0m0-38.4h0m.1 9.7h0m0 5.4h0m.1 .4h0m.1 17.4h0m0-37.9h0m0 37.4h0m.1-12.8h0m0 8.9h0m.1-22.6h0m.1-.8h0m0 16.2h0m.1-18.1h0m0 55.4h0m.2-59h0m0 7.4h0m.1 45.4h0m.1-43.5h0m.1 8.9h0m0-22.7h0m0 4.8h0m.1 37.4h0m.1-30.2h0m0 4.4h0m.1 3.1h0m0 2.4h0m.1-23.1h0m.1 10.2h0m0-2.8h0m.1-.6h0m.1-1.3h0m.1-12.5h0m0 71.4h0m.1-27.4h0m.1-55.6h0m.1 21.9h0m0 34.9h0m.1-5.3h0m0-39.9h0m.2-12.6h0m0 41.6h0m.1-20.8h0m0 20.4h0m.1 15.8h0m.1 15.4h0m.1-25.5h0m0 9.7h0m.2 1.6h0m0-18.3h0m.2-20.6h0m.2 25h0m.1-10.2h0m.1-2.3h0m0 19.6h0m.1-23.3h0m0-.4h0m.2 .8h0m0-5.5h0m0-8.6h0m.1 13.1h0m.1 20.6h0m.1-18.4h0m0 2.9h0m0-8.6h0m.1 25.2h0m0-30.1h0m.1-4.9h0m0 32.4h0m.1-26h0m0 6h0m.1-3.4h0m.1-.2h0m.1-.9h0m0-4h0m.1 4.2h0m0 .6h0m0 10.3h0m0-17h0m.1 38.8h0m0-40.8h0m0 28.1h0m.1-18.6h0m0 4.8h0m0-7.6h0m0 22.6h0m.1-33h0m0-8.5h0m.1 60.3h0m0-59.1h0m.1 6.8h0m0 6.4h0m0 15.7h0m.1-26.2h0m0 41.1h0m.1-48.4h0m0 21.1h0m0 .7h0m0 23.3h0m.1 11.5h0m.1-35.8h0m0-18.5h0m.1 15.6h0m0 19.6h0m0-9.7h0m.1-12h0m0 40.5h0m.1-53.2h0m0 8.4h0m0 4.4h0m.1 15.2h0m0 14.6h0m.1 1.7h0m.1-29.8h0m0 24.8h0m.1-18.6h0m0-2.1h0m0 3.3h0m0-3.3h0m.1 34.8h0m0-11.6h0m.1-21h0m0-27.1h0m.1 25.8h0m0 35.8h0m.1-35.9h0m0-17.7h0m.1 14.5h0m0-16.7h0m0 29.7h0m.1 23.9h0m0-19.9h0m.1-7.6h0m.1 6.9h0m0-33.1h0m0 22h0m.1-6h0m0 42.6h0m0-50.2h0m0 2.8h0m0 18.3h0m.1-7.8h0m0-28.3h0m.1 46.5h0m0-7.9h0m.1-11.4h0m0-3.6h0m0 6h0m.1-10.5h0m0 62.8h0m0-69.6h0m.2 15.1h0m0-11.3h0m0 11.1h0m.1 12.8h0m.1-21.7h0m0 32.6h0m0-26.6h0m.1 21.3h0m0-29.3h0m.1 9.5h0m.1 28.8h0m0 8.1h0m.1-22.1h0m0 .3h0m.1-14.2h0m.1-15.4h0m0 44.2h0m.1-28.8h0m0 13.4h0m0-15.6h0m0 33.4h0m.1-27.3h0m.1 36.2h0m0-21.8h0m.1 15.5h0m.1-38.7h0m.1 10.3h0m.1 36h0m.1-25.5h0m0-18.4h0m.1-3.3h0m0 23.1h0m.1 2.7h0m.1 9.7h0m.1-17h0m.1 8.8h0m.1-36.8h0m0 29.3h0m.2 4.8h0m.1 39.2h0m0-33.5h0m0-.6h0m.1-4.4h0m0 27.7h0m.2-17h0m0 4.3h0m.1-14.9h0m0 26.7h0m.1-1.7h0m.1-10.6h0m0-39h0m0 48.3h0m0-2.4h0m.1-21.6h0m0 13.5h0m.1-36.6h0m0 46.7h0m0 8.1h0m.1-7.5h0m0 7.4h0m0-7.6h0m.1 10.7h0m0-21.9h0m.2 7h0m0 3.8h0m.1 10.8h0m0-35.9h0m.1 25.8h0m0-26.6h0m.1 12.6h0m0 16.4h0m0-12.6h0m.1 29.1h0m.1-30.9h0m0 13.7h0m.1 6.5h0m0-9.5h0m.1 1.1h0m0-6h0m0 14.9h0m0-8.2h0m.2-11.7h0m0 22.4h0m0-2.2h0m0 4.5h0m.1-41.9h0m.1 34.3h0m0 2.7h0m.1-6.1h0m0 32.1h0m0-39.3h0m0 15.1h0m.1-6.7h0m0 15.6h0m0-32.8h0m.1-22.4h0m0 38.6h0m0 7.6h0m.1 .2h0m0-15h0m0 10.6h0m.2-30.1h0m0 34.5h0m0-9.6h0m.1-9.4h0m0 28.8h0m0-22.2h0m.1-3.5h0m.1 15.5h0m0-15h0m.1 8.1h0m.1 1.8h0m.1-3.4h0m0-4.1h0m.1-22.3h0m0 34.8h0m0-3.1h0m.1-5.4h0m0-.4h0m.1-23.4h0m0 31.4h0m.1-1.6h0m0 3.3h0m0-4.6h0m.1 4.8h0m0-36.7h0m.1-10.3h0m0 21.6h0m.1-2.5h0m0 28.6h0m.1-17.5h0m.1 0h0m0 7.4h0m.1 6.6h0m0-29.6h0m0 21.6h0m0-2.7h0m.2-3.8h0m0-.3h0m.1-7.5h0m0 10.5h0m.1 4.3h0m.1 3.8h0m.2 3.6h0m0-37.6h0m0 29h0m.1-32.6h0m.1 9.6h0m.1 37h0m.1-37h0m0-7.6h0m.1 33.1h0m.1-21.2h0m0 44h0m.1-56.9h0m.1-6.2h0m.1 31.9h0m0-18.1h0m.1 29.1h0m0-28.4h0m.1-6h0m.1-1.4h0m0 5.6h0m.1 26.9h0m0-30.2h0m.1-.6h0m.1 13.2h0m0-27.8h0m.1 13.9h0m0 21.5h0m.1 10.4h0m0-6.7h0m.1 4.5h0m0-34.4h0m0 29.4h0m.1-11.1h0m0 11.2h0m.1-32.3h0m.1 29.9h0m0 .1h0m.1-5.8h0m0 13.2h0m0-8.5h0m.1-3.1h0m.1-4.2h0m0 .2h0m.1-26.7h0m0 9.1h0m.1-7.7h0m.1 21.8h0m0 24.8h0m0-42.2h0m.1 13.3h0m0-20.7h0m.1 44.3h0m0-32.1h0m.1 13.9h0m.1-20.9h0m0 55.4h0m.2-12.7h0m.1-9h0m.1-15.6h0m0-15.1h0m.1 6.8h0m.1 33.5h0m0 3h0m.1-3.5h0m0 9.1h0m.1-46.1h0m.1 19.7h0m.1-16.5h0m0-23.8h0m.1 59.9h0m.1-9h0m.1-37h0m0 14.6h0m0 33.7h0m0-2h0m.1-16.3h0m.1-25h0m.1 35.8h0m0 10.8h0m0-43.7h0m.1 37h0m0-1.7h0m0 4.9h0m0-1.7h0m.1 12.5h0m.1-35.3h0m0-26.7h0m.1 45.6h0m0 .7h0m.1-19.9h0m.1-13.1h0m0 8.4h0m.1-33.2h0m0 59h0m.1-2.4h0m0-.8h0m.1-7.4h0m0-6.7h0m.1 12.8h0m0-19.6h0m0 21.5h0m0-.3h0m0 19.2h0m.1-23.2h0m.1 11.5h0m0-44.3h0m.1 6.3h0m.1 39h0m.1 1h0m0-24.3h0m.1 15h0m0-40.2h0m0 35.7h0m.1-24.3h0m0 26.5h0m.1-36.3h0m0 7.5h0m.1 34h0m0-3.1h0m.1-12.1h0m0 18.6h0m0-14.3h0m.3-35.9h0m.1 1.8h0m.1 20.1h0m.1 13h0m0-1.4h0m.2 .1h0m.1-34.2h0m0 49.1h0m.1-23h0m.1-28.7h0m.1 1.8h0m0-9.2h0m0 57h0m.1-46.6h0m.1 42.8h0m0 5.4h0m.1 17.5h0m.1-52.7h0m.1 25h0m.1-50.6h0m0 27.1h0m.1-7.9h0m.1 .7h0m.1 .8h0m0 14.8h0m.1-9.4h0m0 .3h0m.1 15.8h0m.1-30.4h0m0 5.1h0m0 23.7h0m.1 3.7h0m0-30.7h0m.1 36.2h0m.1-5.8h0m0 8.2h0m.1-12.4h0m.2-18.4h0m0-23.8h0m.1 73.3h0m.1-32.6h0m0-17.7h0m.1 6.4h0m0-20.9h0m.2 24.6h0m0-14.4h0m.1 2.8h0m.1-15.1h0m0-4.5h0m0-20.2h0m.1 53.7h0m0-19.6h0m0 7.9h0m.1 5.5h0m0-18.4h0m0-9.6h0m.1 24.7h0m0-22.4h0m.1 27.1h0m0-3.6h0m.1 23.6h0m0-49.1h0m0 18.6h0m.1-19.2h0m.1 15.7h0m.1 6.7h0m0-5h0m.1-12.4h0m.1 1.2h0m0 9.2h0m0-4.2h0m.1-2.3h0m0 13.5h0m.1-24.9h0m0 31.6h0m0-16.2h0m.1-22.4h0m0 34.5h0m0-44.8h0m.1 34.9h0m0-1.4h0m0 3.4h0m.1-21.3h0m.1 22.5h0m0-8h0m0-9.4h0m.1 15.6h0m0-5.9h0m.1 2.4h0m.1 34.2h0m.1-63.2h0m0 19.1h0m0 6.7h0m.1-30.5h0m0 28.2h0m0-17.7h0m.1 30.2h0m0 7h0m0-19.2h0m.1-16.8h0m0 39h0m.1 9.5h0m0 4.2h0m.1-21.4h0m.1-19.8h0m.1 21.4h0m0-5.1h0m.1-1.7h0m.2 1.4h0m0 32.5h0m0-46.9h0m.1-3.8h0m0 1.3h0m.1 9.3h0m.1-30h0m0 14.8h0m0 2h0m0 16.2h0m0 1.7h0m0-8.8h0m.1 28h0m0-15.2h0m.1-5.8h0m0 27.1h0m.1-52.6h0m0 17.6h0m.1-3.1h0m.1 32.6h0m0-24.4h0m0-20.6h0m.1 39.8h0m0-23.7h0m0 1.4h0m0 24h0m.1-4.1h0m.1-28.2h0m.1 19.2h0m0 5.1h0m.1-11.2h0m0 32.5h0m.1-31.4h0m.1 42.8h0m0-3.5h0m.1-16.7h0m0-17.1h0m.2-3.2h0m0-3.3h0m0-1.1h0m0 2.3h0m.1 1.4h0m0 8.6h0m0 .4h0m.1 7.4h0m0-21.6h0m.1 14.4h0m.1 .5h0m.1 3.4h0m0 15.7h0m.1-2.4h0m0-10.3h0m.2 21.4h0m.1 10.9h0m0-31.9h0m.1 2.4h0m.1 6.1h0m0-31.5h0" stroke="#000" fill="none" stroke-linecap="round" stroke-width="3.6"/>
<path d="M1174 503.1h0m.1 16.8h0m.1-8.2h0m.1 16.9h0m.1-18.4h0m.1-4.7h0m.1 34.4h0m.1-3.4h0m0-12.2h0m.1-4.8h0m.1-13.8h0m0 21.9h0m.1 7.1h0m0-11.2h0m.1-9.5h0m.1-17.6h0m0 39.8h0m.1-25.6h0m0-2.3h0m.1 21.1h0m.1-13.3h0m0 26.6h0m.1-.9h0m0-22.7h0m.1 17.8h0m.1-26.7h0m0 1.7h0m.1 2.2h0m0 28.6h0m.1 5.2h0m.1-5.4h0m0-22.8h0m.1 6.1h0m0 16.5h0m.2-5.5h0m0-10.7h0m.2-23.7h0m0 22.8h0m.1 17.4h0m.1-19.5h0m.1 24.6h0m0-.5h0m0-50.1h0m.1 29.9h0m.1-7.9h0m.1 30.8h0m0-7.5h0m.3-32.9h0m0 13.4h0m.1-12.2h0m0 11.8h0m.1-.3h0m.1 6.1h0m0 13.1h0m.1-5.8h0m0 13.6h0m0-43h0m.1 42.8h0m0-39h0m.1 1.7h0m.1 6.8h0m0 38.3h0m.1-13.8h0m0 4.9h0m.1-41.6h0m.1 3.6h0m0 8.4h0m.1-7.6h0m.1-.9h0m.1 19.8h0m0-17.8h0m.2 6.2h0m0 18.9h0m0 9.2h0m.1-14.2h0m0 3.3h0m.1-46.1h0m.1 40.8h0m0 19.4h0m.1-18.2h0m0-6.3h0m.1 23h0m.1 1.4h0m0-4h0m0-.9h0m0 1.2h0m0-13.9h0m.1-3.3h0m.1 21h0m0-6.3h0m0-25.4h0m.1 34.5h0m0-16.3h0m.1 21.1h0m.1-23.1h0m0 13.7h0m0-13.3h0m.1 9.5h0m0 17.9h0m0-26.5h0m.1 30.9h0m0-22h0m.1-9.1h0m0 3.5h0m.1 7h0m0-24.2h0m0 43.9h0m0-44.7h0m.1 15.1h0m.1 7.2h0m0 3.4h0m0 13.2h0m0-13.8h0m.1-11.5h0m0 21.7h0m.1-23.2h0m.1-1.7h0m0 3.1h0m.1-13h0m.2 34.2h0m0 5.2h0m.1-41.2h0m0 42.1h0m0 .3h0m0-35.4h0m.2-14.9h0m.1 8.4h0m.1 28.2h0m0-16h0m.1 15.1h0m.1-8.2h0m.1 7.8h0m0 10.2h0m.2-10.4h0m.1 23.1h0m0-7.3h0m.1-12.9h0m0 15.1h0m.1-13.7h0m0 21.8h0m.1-36.3h0m0 26.3h0m0-17.8h0m.1 11.9h0m0-10.2h0m.1 2.5h0m0-.2h0m.1-17.2h0m0 17.2h0m.1 11.5h0m0-4.1h0m0-52.3h0m.1 34.5h0m.1 22.9h0m.1-8.4h0m.1-29.9h0m.1 15.2h0m0 22.6h0m.1-31h0m0 21.5h0m0 5.8h0m0-13.2h0m.1 15.2h0m.1-15h0m0 17.1h0m0-12.9h0m.1 21.1h0m0-47.5h0m.1 35h0m0-21.7h0m0 15.8h0m0 3.2h0m.1 4.3h0m0 13.4h0m0-14.9h0m0-13.9h0m.1 6.2h0m.1-3.5h0m0 9.3h0m0-9.6h0m.1 3.8h0m0 12.6h0m0-17.3h0m0-1.5h0m.1 9.8h0m0-34.9h0m.1 27.4h0m0-15h0m.1 24.9h0m0-32.3h0m.1 21.4h0m0-15.1h0m0 32.9h0m0-8h0m.1 4.4h0m0-9.9h0m.1-9h0m0 7.7h0m0 1.6h0m.1 4.8h0m0-13.4h0m.1-6.8h0m.1 4.1h0m0 29.1h0m0-20h0m0 .4h0m.1 6.3h0m0-3.7h0m.1-8.9h0m.1 24.7h0m0-12.2h0m.1 .5h0m.1 6.5h0m.1-7.7h0m0-7h0m0 10h0m.1-38.1h0m.1 17.4h0m0 14h0m0-1.4h0m.1 23.9h0m0-28.8h0m0-2.5h0m.1 .4h0m.1-6.9h0m.1 8.4h0m0 2.5h0m.3 9.1h0m.1-49.2h0m.1 44.6h0m.1-24.8h0m.1 14.7h0m.1-22.1h0m0 8.8h0m.1-16.3h0m0 11.6h0m.1 24.1h0m0-.6h0m0-1.1h0m.1 5h0m0-22.8h0m.1-10.4h0m0 36.4h0m.1-6.7h0m.1-3.8h0m0-15.7h0m.1 8.2h0m0-14h0m.1 2.6h0m.1 13.3h0m0-55.6h0m.1 51.7h0m0-6.8h0m.1-14.3h0m.1 41.8h0m0-41.1h0m.1-1.1h0m.1 3.1h0m0 18h0m.1 3.4h0m0-10.5h0m.1-3h0m.1 32.3h0m0-38.8h0m.1 5.1h0m0 14.7h0m.1-14.8h0m.1 10.9h0m0-24.1h0m.1 18.8h0m0-19.3h0m.1 3.9h0m.1 30.8h0m0-10.3h0m.1-26.3h0m0 18.5h0m.1-8.6h0m.1 28.4h0m0-25h0m.1 .1h0m0 22.7h0m.1-21.9h0m.1 1.8h0m0-21.1h0m.1-3.7h0m0 29h0m.1-8.2h0m.1 25.9h0m0-19.6h0m.1 0h0m0-10.9h0m.1 22.2h0m.1-9.6h0m.1-2.5h0m.1 12.1h0m.1 21.1h0m.2-30.2h0m.1-21.1h0m0 18.5h0m.1 14h0m0 .1h0m.1-3.9h0m.1-7.2h0m0-35.2h0m.1 43.2h0m.1-28.5h0m0 9.3h0m.1 3.3h0m0 10.6h0m.1-9.6h0m.1 30.2h0m0-27.4h0m.1-18.8h0m0 65.4h0m.2-33.3h0m0-34.2h0m.1 30.7h0m0-34.8h0m.1 3.2h0m.1 13.4h0m0 7.5h0m.1 24h0m0-29.8h0m.1 7.3h0m.1 9.8h0m0-17.3h0m.1 29.2h0m.1-36.6h0m.1-4.5h0m.1 4.1h0m0-6.2h0m0-2.7h0m.1 11.1h0m.1 1h0m0-4.9h0m.1-6.2h0m0 17.2h0m.1-7.3h0m.1 23.3h0m0-1.6h0m.1-36.4h0m0 18.4h0m0-8.7h0m.1 8.5h0m.1-12.2h0m0 35.5h0m.1-29.9h0m0-9.4h0m.1 23.2h0m.1 21.9h0m0-24.3h0m.2 3h0m.1-1.3h0m0 5.2h0m.1-24.9h0m.1 .2h0m0 12.3h0m.1-.2h0m0-.2h0m.1-14.5h0m.1 36.7h0m0-35.1h0m0 22.6h0m.1-6.2h0m0-4h0m.1 20.2h0m.1-15.5h0m.1-4.3h0m0-3.8h0m.1 20.7h0m.1-40.3h0m0 12.5h0m.1 11.3h0m0-11.4h0m0-16h0m0 22.7h0m.1-25.9h0m0 43.7h0m.1-34.4h0m0 9.1h0m.1-17.6h0m0 33h0m.1-15h0m.1 16.2h0m0 19.6h0m.1-29.3h0m0-16.7h0m.1 13.6h0m.1-2.9h0m0 5.4h0m0-26h0m.1 21.1h0m0-2.7h0m0-12.7h0m0 11.2h0m0-12.1h0m.1 .1h0m0 21.9h0m.1 15h0m0-18.7h0m0-11.7h0m.1 22h0m.1-43h0m0 18.1h0m0-3h0m.1 5.9h0m0-20.1h0m.1 20.4h0m0 14.5h0m0-8.6h0m.1 3.6h0m0-30h0m.1 25.4h0m0 9.9h0m0-4.2h0m0-2.9h0m.1 30.3h0m0-25.7h0m.1 21.6h0m0-9.1h0m0-16.6h0m.1-8.4h0m0 31.9h0m.1-43.7h0m.1 10.9h0m0 2.4h0m0-.9h0m.1 45.7h0m.2-33.3h0m.1-14.3h0m0-2h0m0 6.3h0m.1 7.5h0m.1 4.3h0m0-33.8h0m0 3.5h0m0 23.8h0m.1-13.4h0m0 21.3h0m0-14.3h0m.2 5h0m0 2.6h0m.1 .7h0m0 2.3h0m0-7.1h0m0-20.7h0m.1 47.2h0m0-25.7h0m.1 29.4h0m0-45.4h0m.1 10.9h0m0 41.5h0m0-36.6h0m.1-17h0m0 34.9h0m0-16.7h0m.1 5.5h0m0-1.3h0m0 .8h0m0 9.2h0m0-11.5h0m.2-1.1h0m0 9.1h0m.1 3h0m0-9.4h0m.1-2.3h0m0 25.3h0m0-28.9h0m.1 16.3h0m0-12.6h0m.1 23.9h0m.1-32.7h0m0 22.6h0m.1 9.4h0m.1 10.3h0m.1-34.4h0m0 23.2h0m0-31.9h0m.1-.9h0m.1 37.3h0m0 4.5h0m.1-40.9h0m.1 34.3h0m0 16.7h0m.1-43.7h0m0 62.9h0m.1-44.5h0m.1 2.8h0m.1 2.9h0m0-15.6h0m.1 9.5h0m0-22.1h0m.1 56.2h0m0-42.4h0m.2 27.3h0m.1-.1h0m0-41h0m.1 33.3h0m.1 39.9h0m.1-67.7h0m0 11h0m.2 9.1h0m.1-5.1h0m0 36.4h0m.1-16.8h0m.1-19.3h0m.1-.4h0m.1 5h0m0 52h0m.3-27.4h0m.1 3.9h0m0-38.7h0m.1 4.5h0m0 10.7h0m.1 6.3h0m.1 12.2h0m.1-17.1h0m0 12.2h0m.1-5h0m.1-5.1h0m0-16h0m0 38.5h0m.1-1.2h0m0-33.6h0m.2 46.3h0m0-24.6h0m.1 3.3h0m0 8.6h0m.1-36.8h0m0 38.2h0m0 .8h0m.1-6.4h0m0 14.9h0m.1-28.5h0m0-10.9h0m.1 12h0m0 17.6h0m.1-22.8h0m0 7.4h0m.1 5.7h0m.1 16.8h0m0-6.4h0m0 2.4h0m.1-8.3h0m0-9.7h0m0 9.1h0m0-2.9h0m.1 6.9h0m0-29.5h0m0 9.7h0m.1 1.8h0m.1 8.6h0m0 18.8h0m0-1.6h0m.1-21.3h0m0-2.4h0m.1 8.4h0m.1-1.3h0m0 7.1h0m0 2.2h0m0-18.9h0m.1 .1h0m0 18.2h0m0-18.6h0m.1 20.5h0m0-33.7h0m.1 34.1h0m0-2.8h0m.1-28.6h0m.1 31.1h0m.1-9.8h0m0 11h0m0 12.5h0m0-17.3h0m.1-17.8h0m0 6.6h0m.1 11h0m.1-1.2h0m0 16.2h0m.1-15.9h0m.1 8.4h0m0-6.9h0m0-2h0m0 6.6h0m.1-23.6h0m0 16.2h0m0-5.3h0m.2 36.7h0m0-42.2h0m0-31.7h0m.1 31.6h0m0 .1h0m.3-2.4h0m0 21.6h0m0-25.6h0m.1 24.6h0m.1-20.9h0m0 15.6h0m.2-17.9h0m.2-.2h0m.1-1.3h0m.1-19.3h0m0 39.9h0m.1-36.5h0m.1-2.1h0m.1-1.3h0m0 33.4h0m.1-8.4h0m0 8.6h0m.1-20.3h0m.1 5h0m0-13h0m0 31.6h0m.1-23.1h0m0-2h0m.1 13.8h0m.1 5.6h0m.1-29.3h0m.2-.4h0m.1 13h0m.1 38.4h0m.2-38.9h0m.1 1.8h0m0 27.4h0m.1-21.1h0m.1 14.3h0m.1-30.9h0m0 23.5h0m.1 5.7h0m0 4.1h0m.1-15h0m.1-13.2h0m0-14.6h0m0 5.7h0m.1 36.1h0m0-4.3h0m.2 2.4h0m0-34.6h0m.1 35.5h0m0-14.3h0m.1-42.8h0m.1 62h0m.1-36.7h0m.1 2.7h0m.1 15.1h0m0-4.1h0m.1 4.3h0m.2 14h0m.1-35.6h0m0 4.9h0m.3 13.5h0m0 26.7h0m.1-31.4h0m.1-17.3h0m0-6.9h0m.1 42.2h0m0-38.5h0m.1 18.5h0m.1-9.4h0m0 12.8h0m.1-8.6h0m0-15.1h0m.1 34h0m0-23.2h0m.1-5.1h0m0 32.5h0m.1-25.2h0m.1-23h0m0 28h0m.1-22.2h0m0 23.1h0m.1-30.2h0m.1-8h0m0 53.3h0m.1-28h0m0-12.6h0m.1 1.2h0m.1 18.9h0m0-4h0m.1-12.1h0m0-13.3h0m.1 34.4h0m.1 3.6h0m0-12h0m.1-13.2h0m0-4.4h0m.1 14.6h0m0-11.2h0m.1 19.6h0m0 10.7h0m.1-30.3h0m.1 27.8h0m0-29.4h0m.1 16.1h0m0 7.4h0m.1-7.4h0m0-11.1h0m.1 27.6h0m.1 2.5h0m0-45.5h0m0 5.4h0m.1 7.9h0m0-5.7h0m.1 7.4h0m0-4.6h0m0 26.2h0m0-17.6h0m0-24.5h0m.2 21.6h0m0 15.1h0m.1-39.4h0m.1 8.3h0m.1 7.7h0m.1-1.3h0m.1-2.9h0m0 24.7h0m.1-39.3h0m0 11.3h0m0 2h0m.2 7h0m0 52.7h0m.1-22.3h0m.1-27.8h0m0 19.2h0m0-12.4h0m.1 1.8h0m0-29.5h0m0 8.4h0m0 43h0m0-38.9h0m.1 8.2h0m.1 1.8h0m0 31.3h0m0-30.1h0m.1 30.5h0m0-41.1h0m0 6.7h0m0 4.4h0m.2-4.3h0m0-8.1h0m0-6.5h0m0 28h0m.1-.5h0m0-26.4h0m0 21.6h0m0-24h0m0 29.9h0m.2 18.7h0m0-41.8h0m.1 18.6h0m.2-22.8h0m.1 19.2h0m0-10.8h0m0 4.4h0m0-.3h0m.1 47.1h0m.1-39.3h0m0 7.9h0m0-25.5h0m0-3.8h0m.1 22.4h0m0-14.7h0m0 77.2h0m.1-84.1h0m0 21h0m.1-1.4h0m0-16h0m.3 9h0m.1 25.3h0m.1-1.9h0m0-40h0m.1 39.5h0m.1-21.1h0m.1 7.3h0m0-14.5h0m.1 23h0m0-18h0m.2 66.2h0m0-73.7h0m0 17.6h0m.1-29.5h0m0 18.8h0m0 20.2h0m.1-23h0m0 12.4h0m0 16.7h0m.1-1.7h0m0 3.2h0m.1-19.1h0m.1 3.6h0m.1 30.1h0m0-30.9h0m.1-4.6h0m0 6.7h0m.1-16.6h0m0 4.4h0m.1 35.2h0m0-57.6h0m0 11.4h0m.1 48.9h0m0-43.1h0m.1 18.1h0m.1 23h0m0-39.1h0m.1-9.6h0m0 35.1h0m.1-16h0m.2 14h0m.1-19.5h0m.1 38.9h0m0-43.7h0m0 18.2h0m.1-13.3h0m.1 30.3h0m.1-1.9h0m0-26.7h0m.1 28.5h0m0-20h0m.1-8.6h0m.1 6.9h0m0 1.5h0m.1 1.1h0m0 8.7h0m.1-22.5h0m0 3.7h0m0 36.6h0m.1-31.4h0m0-22.6h0m0 60.6h0m.1-33.4h0m.1 11.4h0m0-1.2h0m.1 11.3h0m0-4.4h0m0-20.3h0m.2 19.1h0m0-4.8h0m.1-6.6h0m0-1.4h0m.1-25.2h0m.1 17.8h0m0-9.9h0m0 9h0m.1 5.1h0m0-12.6h0m.1 1.7h0m0 10.5h0m.1 23.2h0m0 26.3h0m.1-13.6h0m0-5.7h0m.1 7.1h0m.1-3.8h0m0-7h0m.1-32.5h0m.1 35.2h0m.1 12.9h0m0-56.4h0m0 22h0m.1 24h0m0-8.7h0m.1-1.3h0m.1 25h0m0-33.6h0m.1 12h0m0-28.4h0m.1-5.4h0m.1 11h0m0 2.9h0m.1-11.8h0m0 35.6h0m.1-16.4h0m.1 .5h0m0-12.6h0m.1 24.5h0m0-3.8h0m.1-9.4h0m.1-15.6h0m0-1.9h0m.1 36.4h0m0-31.4h0m.1 11.4h0m.1 1.1h0m0 4.6h0m.1 6.1h0m.1-30.8h0m0 19.2h0m.1 1.8h0m0 32.9h0m.1-31.6h0m.1 11.7h0m0-25.7h0m.1 11.3h0m0-13.9h0m.1 5.3h0m.1 17.4h0m0-22.9h0m.1-3.2h0m0 63.2h0m.1-52.5h0m.1 17.6h0m0-9.3h0m.1 2.8h0m0 10.5h0m.1-2.3h0m.1-29.4h0m0 18.3h0m.1 36.7h0m0-35.2h0m.1-20.2h0m.1 15.2h0m0 39.7h0m.1-16.8h0m0-20.2h0m.1-18.8h0m.1 25.9h0m0 9.4h0m.1-54.4h0m0 .3h0m.1 38.4h0m.1 6.2h0m0 3h0m.1-6.7h0m.1-13.5h0m.1 26h0m.1-27.2h0m0 15h0m.1 32.4h0m0-30h0m0 27.5h0m.1-43.2h0m0 29.8h0m.1-28.6h0m.1 19.2h0m0 27.7h0m.1-27.5h0m0 4.1h0m.1 18.5h0m.1-2.3h0m0 15.1h0m.1-17h0m.1-10.5h0m0 18.2h0m.1-40.3h0m0 37.3h0m0-28.1h0m0 31.9h0m.1-8.4h0m.1-1.6h0m.1-37.7h0m0 40.5h0m0-7h0m.1 2.9h0m0-12.7h0m.1 20.4h0m0 10.1h0m.1-29.1h0m0 12.1h0m.1-15.9h0m.1 6.2h0m.1 11.7h0m0 12.5h0m.1-23.2h0m0 24.7h0m0-8.1h0m.1-2.5h0m.1-36.1h0m0 35.1h0m.1-41.7h0m0 17.4h0m.1 47.6h0m.1-28.6h0m0 .2h0m.1 17.2h0m0-55.6h0m.1 59.2h0m0-21.1h0m.2 7.6h0m0-32.2h0m0 54.8h0m0-49.8h0m.2 51.7h0m0-29.3h0m0 6.3h0m0-6.4h0m.1-8.4h0m.1 6.5h0m0-6.1h0m.1 9.1h0m.1 3.2h0m0 11.4h0m0-21.3h0m0 23.6h0m.1-4.4h0m0-40.7h0m.1 37.6h0m0-13.2h0m.1-7h0m.1 16.2h0m0-5h0m.1 5.6h0m.1 1.1h0m0 7.7h0m.1-10.3h0m0-6h0m.1 4h0m0-18.8h0m.1 12.7h0m0 5h0m.1-12.9h0m0-19.5h0m.1 21.4h0m0 7.1h0m.1-15.3h0m.1 19.7h0m0 0h0m.1 .8h0m0-5.3h0m0 16.9h0m0-12.4h0m0-1.2h0m.1-3.1h0m0 4.5h0m.1 1.8h0m0-3.9h0m0-30.7h0m.1-14.6h0m0 52.8h0m0-35h0m.2 28.9h0m.1-2.6h0m0-20.7h0m.1-12.7h0m.1 10h0m0 24.3h0m.2-5.5h0m.1-28.3h0m.1 11h0m0 13.8h0m.2-5.7h0m0-29.1h0m0 17.5h0m.1 13.9h0m.1-29.3h0m0 15h0m.1 2h0m0-5h0m.1 27.3h0m.1-8.8h0m0-23.3h0m.1 18h0m0-17h0m.1 47.4h0m.1-2.1h0m0-38.6h0m.1-15.7h0m0 7.5h0m0-14.4h0m.1 12.7h0m.1 36.7h0m.1-28.7h0m0 29.6h0m.2-42h0m0 20.1h0m.1-28h0m0 10.6h0m.1-3.5h0m.1 2.9h0m0-11.2h0m.1 6.6h0m0 19.1h0m.1 6.2h0m.1-19.9h0m0 22.4h0m.1 39.2h0m0-43.9h0m.1-19.2h0m.1-16.5h0m0-2.9h0m.1 26.7h0m.3 13.4h0m0-38.5h0m.1 35.5h0m.1-36.7h0m0 27.4h0m.1 10.3h0m.1-14.7h0m.1-.7h0m0-20.8h0m.1 21.2h0m0-32.9h0m.1 24.3h0m0-6.2h0m.1 28.8h0m.1-24.2h0m0-10.8h0m.1-12.6h0m0 27h0m.1 25.2h0m0-43.7h0m.1 19h0m0-15.4h0m.1 8.2h0m0-6.1h0m0 10.1h0m.1-16.9h0m0 36.7h0m.1-42.1h0m0 9.2h0m.1 9.9h0m0 14.9h0m0-16.5h0m0-29.6h0m.1 21.5h0m0 17.4h0m0-23.3h0m0-2.2h0m.1 34.7h0m0-45.1h0m.1 42.5h0m0-19.6h0m0-11.7h0m0-.3h0m.2 14.9h0m0 3.1h0m.1 5.1h0m0-12.8h0m.1 1.8h0m0 7.8h0m0 7.3h0m.1-11.8h0m.1-2.3h0m0 3.1h0m.1-22.9h0m0 12.8h0m0 4.2h0m0-.4h0m0 5.9h0m.2 41h0m.1-40.2h0m0 4.2h0m0-11.1h0m0 20h0m.1-19.1h0m.1 35.6h0m.1-1.1h0m0-30.7h0m0 14.9h0m.1-13.8h0m.1 1.6h0m0 6.4h0m0-11.6h0m0 2.7h0m0 28.3h0m.1 11.4h0m.1-12.1h0m0 10.9h0m0-34h0m.1-9.5h0m1.7 57.8h0m0 14.4h0m0 36.8h0m.1-51h0m0 22.6h0m.1-9.8h0m0 42.4h0m.1-9h0m0-38.1h0m0 24.3h0m.1 18.8h0m0 11.1h0m0 4.8h0m.1-28.4h0m0 23.9h0m.1-24.3h0m.1 .9h0m0-51h0m.1 19h0m0 52.7h0m.1-7.2h0m0-33.3h0m0 31.8h0m0-24.4h0m.1 35.4h0m0-55.1h0m0-.6h0m0 35.7h0m.1-26.8h0m0 42.7h0m.1 6h0m0-49.7h0m0 18.8h0m.1 23.9h0m.1-16.8h0m0 51.4h0m0-81.6h0m.1 9.4h0m.1-8.3h0m.1 36.4h0m0 27.5h0m.1-32.1h0m0-1.3h0m.1-29.5h0m.1 53.3h0m.2 .9h0m0-38.2h0m0 2.1h0m.1-10.5h0m0 23.3h0m0 52.8h0m.1-49.6h0m.1-3.7h0m0-25.3h0m0 43.3h0m0 25.9h0m.2-28.1h0m0 2.1h0m.1-35.4h0m.1 20.9h0m.1-26.7h0m0-8.2h0m.1 57.9h0m.2-30.8h0m0 35h0m0-8.3h0m.1-7.1h0m0-21.6h0m0 5h0m0 12.1h0m.1-20.2h0m.1 28.9h0m.1-14.4h0m0-13.4h0m0 25.6h0m0-49.9h0m0 32.9h0m.1-30.5h0m0 43.8h0m0-54.6h0m.1 43h0m.1-16h0m.1 10.8h0m0-32.6h0m0 32h0m.1-3.2h0m0 7.1h0m0-24.9h0m0 11.9h0m.1 20.5h0m0-48.3h0m.1 11.1h0m0 60.7h0m0-41.1h0m.3-44.5h0m0 49.9h0m0-28.5h0m.1 36.2h0m0-8.3h0m0 4.9h0m.1-.5h0m.1-11.7h0m0-18h0m.1-5.1h0m0 9.5h0m.1-14.1h0m0 50.5h0m.1 7.6h0m0-36.3h0m.1-13.3h0m0 14.2h0m.1 1.1h0m0-4.7h0m.1-20.3h0m0 18.8h0m0 28.4h0m0-12.6h0m.1-24.5h0m0 29.3h0m0-35.4h0m0 22.5h0m.1-4h0m.1-7.9h0m0 15.3h0m0-8.1h0m0 40.1h0m.1-20.7h0m.1-51.9h0m0 63.8h0m0-41.3h0m.1 24.3h0m0-10.1h0m0 38.4h0m0-7.6h0m.1-49.5h0m0 .7h0m0 20.9h0m.1-13h0m.1 29.8h0m0-12.1h0m.1-27.4h0m.1 63.8h0m0-60h0m.1 52.8h0m.1-63.8h0m.1 66.4h0m0-15.1h0m0-10.9h0m.1-16.1h0m0 26.8h0m.2-41h0m0 69.3h0m.1-16.9h0m0-53.4h0m.1 23h0m0-16.3h0m0 53.5h0m0-37.5h0m0 30.7h0m.1-32.3h0m0 14.3h0m.2 25.5h0m0-8.8h0m0 10.2h0m.1 0h0m0-54.9h0m0 48.1h0m.1-24.7h0m0 4.3h0m.1 29h0m0-62.4h0m0 22.3h0m0 26.4h0m.3 19.3h0m0-50.7h0m.1-2.5h0m.2 15h0m0 26.7h0m0-51.4h0m.2 18.4h0m.1 15.7h0m0-2.9h0m0-30.1h0m.1-2h0m0 32h0m0 44.6h0m0-76.3h0m.1 19.4h0m0 28.1h0m.1-20.2h0m0-7.5h0m0 22.9h0m0-35.3h0m0 12.7h0m.2 57.3h0m.1-64.8h0m.1 33.6h0m0 3.4h0m0-48h0m.1 16.4h0m.1 30.1h0m0 26.9h0m.1-20.2h0m.1-59.3h0m.2 28.9h0m0-9.8h0m.1 3.4h0m0 18.6h0m.1-42.9h0m0 15.4h0m.1 27.1h0m0 11.3h0m0-39.4h0m0 12.7h0m.1-4.9h0m0 27.1h0m0 2.5h0m.2-12.2h0m.1-26.7h0m0 3.9h0m.1 6h0m0-1.2h0m0 32.9h0m.1-61h0m.1 8.3h0m0 1.4h0m0-2.1h0m.2 28.2h0m.2-13h0m0 19.1h0m.2-35.9h0m.1-5.2h0m0 30.1h0m.1-19.4h0m0-6.6h0m0-7.5h0m0 35.9h0m.1-53.9h0m0 56.5h0m.2-35.9h0m0 34.2h0m.1 6.6h0m0-35.2h0m0 39.8h0m.1-26.1h0m.1-6.8h0m.1 25.5h0m0-1h0m.1 47.2h0m.1-53h0m0-27.9h0m.2 80.3h0m0-75.4h0m0 49h0m.1 17.9h0m0-61.1h0m0 73.6h0m.1-59.9h0m0 10.8h0m.1-23.7h0m0 12.3h0m0-2.1h0m.1 34h0m.2-19.2h0m.1 24.8h0m.1-55.8h0m0 31.3h0m.1 2.4h0m.1-31h0m0 51.8h0m.1-53.9h0m.1 13.7h0m0 36.1h0m.1-40.1h0m.1-12.8h0m.1 25.7h0m.1-2.7h0m0 45.6h0m.2-65.5h0m0-3.6h0m0 41.9h0m0-16.7h0m0-22.9h0m.1 8.5h0m0-7.7h0m.1 24.4h0m0-.1h0m0-1.1h0m.1 12.9h0m0-7.5h0m0-23.9h0m0 14.8h0m.1-4h0m0 22.5h0m.1 11.9h0m.1-52.5h0m.1 20.7h0m0 1.1h0m.1-32.6h0m0 2.6h0m0 14h0m0 14.9h0m.1-55h0m.2 3.1h0m0 44.4h0m0 .8h0m0-6.6h0m.1-6.5h0m0 3.6h0m.1 46.9h0m.1-52h0m.3 36.4h0m0 8.6h0m.1 11.4h0m0-40.7h0m.2 1.9h0m0-7.4h0m.1 5.6h0m0 14.2h0m.1 48h0m0-71.7h0m0 33.7h0m.1-2.5h0m0-53.8h0m0 50.4h0m.1 6.4h0m.1-29.9h0m0 26.1h0m0 34.1h0m0-61.1h0m.2 10.2h0m0 7.8h0m0-5.3h0m.1-12.2h0m.1 28.8h0m.1 13.9h0m0-62.7h0m0-6.1h0m.1 88.9h0m0-25.2h0m.1-63.9h0" stroke="#000" fill="none" stroke-linecap="round" stroke-width="3.6"/>
<path d="M1260.8 585.3h0m0-23.6h0m0 50.7h0m0-3.5h0m0-54.9h0m.1 18.4h0m0 47.4h0m0-79.3h0m.1 45.3h0m0-7.5h0m0-4.4h0m.1 28.8h0m0-43.6h0m.1 12.4h0m0 41.2h0m.1-12.4h0m0-66.6h0m0 73.8h0m0-39.7h0m.1 14.9h0m0 17.2h0m.1-13.2h0m0-17h0m.1 5.8h0m0-13.7h0m0-30.3h0m.1 49.1h0m0-27.5h0m0 17.5h0m0 43.7h0m.1-13.3h0m0-15.4h0m.1-3.2h0m.1 11.9h0m.1-9.4h0m.1-37.8h0m0 28.2h0m0 13.3h0m.1-33.8h0m0 27h0m0-22.2h0m.1 9.5h0m0-22.1h0m.1 6.8h0m.1 .4h0m0 7.5h0m.1 5.4h0m0-10.2h0m.2 .6h0m0 11.5h0m0-12.2h0m.1 .9h0m.1-5.1h0m.1-13.3h0m0 38h0m.1-1.2h0m0 14h0m.1-39.9h0m.1 37h0m0-32.2h0m0 52.5h0m0-43.6h0m.1 15.9h0m0 10.5h0m.1 13.4h0m.2 23.1h0m0 .6h0m.1-67.5h0m.1 43.9h0m.1-54.7h0m.1 27.7h0m0 15.4h0m.1-26.5h0m.1 29.6h0m0-3.5h0m0 .4h0m.1-16.2h0m0 12.4h0m.1-17.6h0m.1 8.2h0m0 39.5h0m.1-55.6h0m0 18h0m0-1.7h0m.3-7.4h0m0 52.6h0m0-58.8h0m0 14.8h0m.2-8.2h0m.1 66.8h0m0-77.3h0m0 12.4h0m.1 48.9h0m0-26.9h0m.1-20.4h0m0-8h0m0 14.4h0m.1 62.4h0m.1-55.7h0m0-24h0m0 53.7h0m0-39.5h0m0-24.6h0m0 17.3h0m0-6.8h0m0 32h0m.1-21.8h0m0 18.1h0m.1 17.1h0m.2 17.6h0m0-41.4h0m.1-29.2h0m.2 36h0m0-32.2h0m0-19h0m.1 46.1h0m0-7.7h0m.1-1.9h0m0 7.2h0m0-5.6h0m.1-.7h0m0 14.4h0m0-38.9h0m.1 36.2h0m.1-3.4h0m0-14h0m.1 8.5h0m.1 23.8h0m.1 6.4h0m0-42.2h0m0 13.1h0m.2-15.5h0m0 15.4h0m.1-1.1h0m0 .3h0m.1-26h0m0 22.1h0m.1 34.4h0m.1-12.9h0m0-47.5h0m0 32.8h0m0-18.3h0m.1 21.2h0m.1-22.3h0m0-9.5h0m.1-4.3h0m0 46.9h0m.2 13h0m0-77.4h0m.1 25.5h0m0 10.6h0m.1 13.2h0m0-9.2h0m0 33.6h0m0-57.1h0m.1 20.5h0m0 7.7h0m0-20.5h0m0 17.4h0m.2 4h0m0 13.1h0m0-39.1h0m.2-.5h0m0-33.3h0m.1 49.6h0m.2 11.4h0m0-43.9h0m.1 54.5h0m0-38.2h0m.2 8.2h0m0 2.3h0m0 7.5h0m.1-16.9h0m0-1h0m0 .3h0m0 12.5h0m.1 17.9h0m0-2.2h0m0-26h0m0 25.9h0m0 4.4h0m.1-1.5h0m0 6.4h0m.1-37.8h0m.1-.8h0m0 6.3h0m0-36.3h0m.1 65.1h0m0-30.4h0m0-26.7h0m.1 80.4h0m0-69.4h0m.1 19.6h0m0 17.9h0m0-6h0m0-1.8h0m0-28.7h0m0 65.1h0m.1-19.5h0m.1-33.8h0m.1 43.6h0m0-15.3h0m.1 7.7h0m0 26.3h0m0-14.5h0m.1-3.5h0m0-.9h0m0-30.9h0m.1 1h0m0 16.5h0m0-17.1h0m.1 36.2h0m.1-46.4h0m.6 8.3h0m0 12h0m0-32.6h0m0 36.5h0m.1 18h0m0-39.5h0m0 77.2h0m0-13.7h0m.1-51.2h0m0-.2h0m0 40.5h0m.3-48.9h0m0-1.7h0m.1-1.6h0m0-29.9h0m.1 91.4h0m.1-47h0m.2-8.8h0m0 6.2h0m.1-5.8h0m.1-13.5h0m.1 20.9h0m.2-7.7h0m.2-26.8h0m.1 9h0m.1 7.7h0m.3-19.3h0m0 21.1h0m.2 35.3h0m.1-38.8h0m0 19.7h0m.1-41.9h0m.1 84.4h0m0-94.9h0m.1 45.7h0m.2-6.1h0m0-26.2h0m0 55.2h0m0-63.6h0m.1 31.2h0m0 28.6h0m.1 16.2h0m.1-22.5h0m0 26.2h0m0-58.9h0m0 2.4h0m.1 21.2h0m0-11h0m0 59.8h0m0-68.4h0m.1-11.4h0m0 47.4h0m0 18.4h0m.1-41.7h0m.1 14.1h0m0-7.1h0m0 16.9h0m0-26.8h0m.2 64.7h0m0-58.7h0m.1 13.3h0m.1-14.5h0m0 43.3h0m.2-11.8h0m0-11.3h0m0-51.7h0m.1 25.4h0m0 18.5h0m0 63.4h0m.1-25.6h0m0-43.5h0m.1 3h0m.1-38.3h0m0-9.9h0m0 37.7h0m0 11.8h0m0 4.3h0m.1-44.8h0m0 36.2h0m0 15.2h0m.1 28.4h0m.2-57.1h0m.1-10.1h0m0-9.7h0m.1 13.5h0m0 24.6h0m.1-5.7h0m0-43.5h0m0 53.2h0m.1-28.4h0m0 30.3h0m0-20h0m0-6.7h0m.1 6.6h0m.1 43.2h0m.1-34.8h0m0 9.4h0m.1-50.2h0m0 41.1h0m.3-19.2h0m0 32.5h0m0-27.3h0m0-4.6h0m0 19.8h0m0-40.7h0m.1 14.5h0m0 47.8h0m0-17.2h0m.1-66.7h0m0 37.7h0m0 25.1h0m0 .1h0m.1-32.5h0m0 35.1h0m.1-12h0m0 10.2h0m0-37.4h0m.1 27.9h0m.1-8h0m0 14.6h0m0 4.9h0m.2 7.3h0m0 4.4h0m.1-38.4h0m0 51.6h0m.2-24.6h0m.1 15.6h0m.1 16.5h0m.2-53.5h0m0 20.6h0m.2-28.9h0m0 5.7h0m0 14.3h0m0 16.5h0m.2-48h0m0 10.4h0m0 15.6h0m.1 60.6h0m0-62.4h0m.1-15.2h0m0 11.6h0m0 41.7h0m0-24.5h0m.1 11.9h0m0-.5h0m.1-15.2h0m.1 23.4h0m0-1.3h0m0 18.2h0m0-37.8h0m.1-13.5h0m0 57.2h0m.1-51.4h0m0 28.4h0m.1 20.1h0m0-6.5h0m0-15.6h0m0-36.1h0m0 5.7h0m0 13.3h0m0-3.5h0m.1 2.7h0m0-6.1h0m.1 38.6h0m0-19.8h0m0 30.6h0m.1-58.6h0m.1 10.4h0m.1-3.8h0m0-2.8h0m0 25.5h0m.1-20.8h0m0 24.9h0m.1-38.8h0m0-.9h0m.1-5.5h0m0-21.6h0m0 40.2h0m.1-23.9h0m0 22.7h0m.1-6.9h0m0 17.7h0m0-6.4h0m.1 24.9h0m0-65.7h0m.2 27.4h0m0 20.9h0m.1 10.5h0m.2 42.7h0m0-98.4h0m.2 3.3h0m0-8.9h0m.1 62.8h0m0-18.4h0m0-40.5h0m.1 66.6h0m.2-25.6h0m0 30h0m0-32.1h0m.1-18.9h0m.1 52.1h0m0-50.7h0m0 9.3h0m.1 34.6h0m0-83.1h0m.1 44.4h0m0-47.3h0m.3 79.4h0m0-8.1h0m.1-28.7h0m.1 19.8h0m.2-42.7h0m.1 33.2h0m0-5.9h0m.1 10.9h0m.3-35.6h0m.1-4.8h0m0 59.5h0m.1-15.2h0m0-18.2h0m.1-16.4h0m0 45.6h0m.1-20h0m0-3.5h0m.1 7.6h0m0-24.4h0m.1-8.2h0m0-19.7h0m.1 71.7h0m0-22.5h0m0-44h0m.1 54.8h0m0-21h0m.1 18.6h0m.1-30.5h0m0 18.9h0m0-4h0m0 9.2h0m.1 40.7h0m0-29.9h0m.1-40.2h0m.1 29.4h0m.1-18.9h0m.1 4h0m.1-24.2h0m0 89.2h0m.1-37.6h0m.1-10.7h0m0 10.8h0m.1 11.5h0m0-29.2h0m.1-28.4h0m0 45.7h0m.1-1.8h0m.1-29.6h0m0 30.5h0m.1-36.1h0m0 1.7h0m.1 25.5h0m.2 3.1h0m0 16h0m.2 1.2h0m0 51.4h0m0-97.6h0m0 55.7h0m.1-26h0m.1-1.8h0m0-8.8h0m0 80.7h0m0-58.5h0m0-11.8h0m.1 13.7h0m0-22.9h0m.2-10.6h0m0 15.7h0m0 26.7h0m0-31.2h0m.1 27.1h0m.1-19.4h0m0 11.3h0m.1 9.6h0m0-12.1h0m.1-41.3h0m.1 58.5h0m.1-63.3h0m.1-9.9h0m0 47.3h0m0-35.8h0m0 33.4h0m.1 13h0m0-.4h0m0-16.8h0m.1 21.9h0m.1 18.4h0m0-8.7h0m0-66.5h0m.1 102h0m0-54.2h0m.1-43.2h0m.1 24.6h0m0 16.4h0m0 12.2h0m.1-22.3h0m0 14.3h0m.2-8h0m.1 7.9h0m.1-9.4h0m0 9.9h0m.1-9.3h0m0-57.5h0m.1 15.6h0m0 8.7h0m.1 40.3h0m0-42.4h0m0 40.5h0m.1-54.5h0m0 6h0m.3 53.8h0m0-37h0m0 62.8h0m.1-44.2h0m0-23.4h0m.2 .2h0m0 76.7h0m.1-54.9h0m0 8.6h0m.1 9.5h0m.1 3.1h0m0-16.3h0m.1 .2h0m.3-30.6h0m0 47h0m.2-18.4h0m0 3.3h0m0-13.4h0m0-13h0m.1 46.2h0m0-10.4h0m0 11.5h0m0-18.4h0m.1-6.5h0m.1-4.2h0m.1 29.9h0m.1-18.8h0m0 20.7h0m.2-26.7h0m.1 8.4h0m0-23.9h0m0 38.7h0m0-2.3h0m.1 16.1h0m0-9.2h0m.1-51.6h0m0 19.6h0m.1-6.2h0m0 1.3h0m0 18.1h0m0 5h0m.1 53h0m0-97.2h0m.2 49.7h0m.1 30.9h0m.1-36.3h0m0-23.9h0m.1-17.4h0m0 49.1h0m.1-79.6h0m0-.5h0m0 23.1h0m0 4.2h0m0 24h0m0 13.8h0m0-60.8h0m.1 59.4h0m0 25.1h0m.1-58h0m0 30.5h0m0-11.2h0m.1-3.2h0m0-4.3h0m.1 22.2h0m0-7.6h0m0 10.7h0m.1-5h0m.1-31.9h0m0 55.5h0m.1-6.4h0m.1-13.3h0m.1-29h0m.2 35.9h0m0-36.3h0m0-8.1h0m.1 44.9h0m0-36.3h0m0 18.9h0m.3 9.7h0m0 25.2h0m0-19.9h0m.1-24h0m0 19.2h0m0 17.8h0m.1 50.1h0m.2-71.8h0m0 25.4h0m0-6.8h0m.2-41h0m0 24.7h0m.1 10.2h0m0 14.8h0m.1-53.3h0m0 48.8h0m0 6.2h0m0 15h0m.1-69.2h0m.1 7.2h0m.1-8.7h0m.1 32.7h0m0-26.8h0m.2 5.9h0m0 12.8h0m0 7.8h0m.1-46.7h0m.1 2.6h0m0 18.4h0m0-13.8h0m.1 34.8h0m.1-11.8h0m.1-37.2h0m0 20h0m0 19.8h0m0-29.3h0m.1 40.7h0m.2 .3h0m0-4.2h0m.1-11.5h0m0-2.8h0m0 5.9h0m0-40h0m.1 69.1h0m0-37.6h0m.1 26.9h0m.2-2.9h0m0 9h0m0-34h0m.1 30.1h0m.1-30.9h0m0-.4h0m.1 36.8h0m0-51.9h0m0 52.9h0m.1-30.9h0m0 18.6h0m0-9.2h0m.2 9h0m0-17.7h0m0 15.6h0m0-33.8h0m0-6.4h0m.1 1.2h0m.2 16.8h0m0-23.8h0m0 48.1h0m0-49.5h0m0 52.7h0m0-3.3h0m0-21.5h0m.1-14.6h0m0-.4h0m.1-38.7h0m0-.6h0m.1 17.7h0m0 79h0m.1-20.5h0m0-24.1h0m0 9.5h0m.1 9.7h0m.1-28.8h0m0-2.6h0m.1 25h0m0-26.4h0m0 14.2h0m.1 7h0m0 13.8h0m0-22.2h0m0 33.9h0m.1 3h0m0-36.5h0m0-10.7h0m0 39.3h0m0-10.5h0m0 2.4h0m.1-11.1h0m0-23.2h0m.1 46.7h0m.1-22.8h0m0 26.7h0m0-7.3h0m0-38.3h0m0 37.6h0m.1 8.2h0m0-4.4h0m0 3.2h0m.1-16.5h0m0-26.5h0m0 29.1h0m.1 16.1h0m.1-48.5h0m0 45.3h0m.1-58.1h0m0 60.6h0m.1 1.6h0m0 19.2h0m0-54.1h0m.1-26.5h0m.1 21.2h0m0 27.7h0m.1 16.3h0m.1 33.1h0m0-32.6h0m.1-25.8h0m.2 46.9h0m0-49.2h0m.1 27h0m0-54.7h0m.1 14.1h0m.1-17.1h0m.1 18.4h0m0 44.9h0m0-15.8h0m0 8.1h0m.1-38.6h0m0 12h0m.1-18.2h0m0 20.5h0m.1 9.4h0m.2 15.5h0m0-51.5h0m0 17.9h0m0 82.9h0m.1-81h0m0-6.3h0m0 42.1h0m.1-53.5h0m0 41.2h0m.1-11.1h0m0-1.8h0" stroke="#000" fill="none" stroke-linecap="round" stroke-width="3.6"/>
<path d="M173.2 463.1h0m24.1-6.2h0m47.4 7.7h0m36 122.7h0m131.3-123h0m1.6-1h0m34.8 118.6h0m48.4-1.3h0m77-116.2h0m2.6-1.4h0m183 118.3h0m54.7-120.1h0m50.6 1.1h0m29.8 120h0m83.8-120.3h0m59.7 118.3h0m23.8 1.5h0m155.7-125.1h0m-1037.2 139.5h0m9 28.1h0m240-5.6h0m214.4 16.8h0m101.6 28.1h0m50-44.9h0m16 5.6h0m194-28.1h0m18 0h0m26-12.9h0m36 12.9h0m68 67.4h0m97.4-9h0m-1077.7-214.6h0m-4 6h0m3 10h0m4-4h0m1 6h0m-3 3h0m20 0h0m4-4h0m27 7h0m19-3h0m4-10h0m47 4h0m71 5h0m167-12h0m-26 15h0m67-8h0m75 5h0m26-7h0m160 2h0m30 0h0m0 9h0m71-14h0m-5 13h0m48-1h0m3 2h0m19-5h0m23 3h0m24-5h0m51-11h0m68 8h0m24 4h0m25 1h0m0 4h0m-1004.5 117.7h0m.3 3h0m.7 1.9h0m-1 3h0m0 11.9h0m39.5-5.5h0m8-15h0m0 5h0m16 0h0m4 7h0m42-11h0m5 5h0m1 6h0m37 5h0m13-15h0m68 3h0m1 5h0m47-5h0m1-2h0m30-4h0m9 13h0m31-4h0m5-9h0m44 5h0m1 2h0m47-7h0m0 6h0m0 10h0m21-2h0m0-15h0m47 0h0m0 8h0m30-4h0m69-2h0m20-1h0m1 11h0m1 5h0m4-15h0m42-2h0m2 6h0m-3 5h0m122-9h0m2 5h0m-1 6h0m31-12h0m14 0h0m0 6h0m121-4h0m1-2h0" stroke="#ffa500" fill="none" stroke-linecap="round" stroke-width="3.6"/>
<path d="M319.3 660.5l2.9 0l-2.9 4.7l-2.9-4.7zM340.3 660.5l2.9 0l-2.9 4.7l-2.9-4.7zM403.3 660.5l2.9 0l-2.9 4.7l-2.9-4.7zM504.3 660.5l2.9 0l-2.9 4.7l-2.9-4.7zM625.3 660.5l2.9 0l-2.9 4.7l-2.9-4.7zM649.2 660.5l2.9 0l-2.9 4.7l-2.9-4.7zM674.3 660.5l2.9 0l-2.9 4.7l-2.9-4.7zM747.3 660.5l2.9 0l-2.9 4.7l-2.9-4.7zM755.3 660.5l2.9 0l-2.9 4.7l-2.9-4.7zM948.3 660.5l2.9 0l-2.9 4.7l-2.9-4.7zM979.3 660.5l2.9 0l-2.9 4.7l-2.9-4.7zM1155.3 660.5l2.9 0l-2.9 4.7l-2.9-4.7zM1256.3 660.5l2.9 0l-2.9 4.7l-2.9-4.7zM1267.3 660.5l2.9 0l-2.9 4.7l-2.9-4.7z" fill="#ffa500"/>
<rect x="105.5" y="499.1" width="1255.8" height="48.6" fill="#f00" fill-opacity=".1"/>
<rect x="162.4" y="499.1" width="1078.8" height="43.6" fill="#ffa500" fill-opacity=".1"/>
<rect x="1241.2" y="547" width="62.1" height="50.7" fill="#ffa500" fill-opacity=".1"/>
<path d="M105.5 522.9H1361.3" stroke="#f00" stroke-width="2.08"/>
<path d="M162.4 521.4H1241.2 M1241.2 572.4H1303.3" stroke="#ffa500" stroke-width="2.78"/>
</g>
<path d="M162 37.46V321M1241 37.46V321M1302.9 37.46V321" stroke="#800080" stroke-width="2.08" stroke-dasharray="2.08 3.42" fill="none"/>
<path d="M162 382.46V666M1241 382.46V666M1302.9 382.46V666" stroke="#800080" stroke-width="2.08" stroke-dasharray="2.08 3.42" fill="none"/>
<g clip-path="url(#c3)">
<path d="M105.5 758.5H1485.5M105.5 791.5H1485.5M105.5 823.5H1485.5M105.5 856.5H1485.5M105.5 889.5H1485.5M105.5 921.5H1485.5M105.5 957.5H1485.5M105.5 983.5H1485.5M105.5 1009.5H1485.5" stroke="#b0b0b0" stroke-width="1.11" stroke-dasharray="1.11 1.83" fill="none"/>
<path d="M162.9 1010.1L162.9 1006.2L163.9 1006.0L164.9 1005.9L165.9 1005.9L166.9 1005.7L167.9 1005.5L168.9 1005.6L169.9 1006.0L170.9 1006.4L171.9 1006.5L172.9 1006.5L173.9 1006.4L174.9 1006.3L175.9 1006.1L176.9 1006.0L177.9 1005.8L178.9 1006.0L179.9 1006.4L180.9 1006.6L181.9 1006.3L182.9 1005.8L183.9 1005.6L184.9 1005.6L185.9 1005.8L186.9 1005.8L187.9 1005.6L188.9 1005.4L189.9 1005.5L190.9 1005.7L191.9 1005.7L192.9 1005.8L193.9 1006.0L194.9 1006.0L195.9 1006.1L196.9 1006.0L197.9 1005.7L198.9 1005.4L199.9 1005.6L200.9 1006.0L201.9 1006.3L202.9 1006.3L203.9 1006.1L204.9 1006.0L205.9 1006.1L206.9 1006.4L207.9 1006.4L208.9 1006.2L209.9 1006.1L210.9 1006.0L211.9 1006.0L212.9 1006.0L213.9 1005.8L214.9 1005.8L215.9 1005.9L216.9 1006.1L217.9 1006.1L218.9 1006.0L219.9 1006.0L220.9 1006.0L221.9 1005.9L222.9 1005.8L223.9 1005.7L224.9 1005.7L225.9 1005.7L226.9 1005.8L227.9 1006.0L228.9 1006.1L229.9 1006.1L230.9 1006.0L231.9 1005.9L232.9 1005.9L233.9 1006.1L234.9 1006.2L235.9 1006.1L236.9 1006.0L237.9 1005.8L238.9 1005.7L239.9 1005.8L240.9 1006.2L241.9 1006.4L242.9 1006.3L243.9 1005.9L244.9 1005.7L245.9 1005.6L246.9 1005.6L247.9 1005.5L248.9 1005.3L249.9 1005.3L250.9 1005.5L251.9 1005.7L252.9 1005.8L253.9 1005.8L254.9 1005.8L255.9 1005.9L256.9 1006.0L257.9 1006.1L258.9 1006.2L259.9 1006.1L260.9 1005.8L261.9 1005.7L262.9 1005.9L263.9 1005.9L264.9 1005.8L265.9 1005.8L266.9 1005.8L267.9 1005.8L268.9 1005.7L269.9 1005.5L270.9 1005.3L271.9 1005.3L272.9 1005.6L273.9 1005.8L274.9 1005.9L275.9 1005.8L276.9 1005.6L277.9 1005.4L278.9 1005.5L279.9 1005.6L280.9 1005.8L281.9 1006.2L282.9 1006.4L283.9 1006.3L284.9 1005.9L285.9 1005.7L286.9 1005.8L287.9 1006.1L288.9 1006.3L289.9 1006.3L290.9 1006.2L291.9 1006.0L292.9 1005.9L293.9 1005.9L294.9 1005.9L295.9 1006.1L296.9 1006.3L297.9 1006.4L298.9 1006.1L299.9 1005.7L300.9 1005.6L301.9 1005.8L302.9 1006.0L303.9 1005.9L304.9 1005.8L305.9 1005.8L306.9 1005.9L307.9 1005.9L308.9 1006.0L309.9 1005.9L310.9 1006.0L311.9 1006.1L312.9 1006.0L313.9 1005.8L314.9 1005.8L315.9 1005.8L316.9 1005.9L317.9 1005.9L318.9 1005.7L319.9 1005.4L320.9 1005.2L321.9 1005.3L322.9 1005.8L323.9 1006.1L324.9 1006.1L325.9 1005.9L326.9 1005.9L327.9 1006.1L328.9 1006.3L329.9 1006.2L330.9 1005.8L331.9 1005.6L332.9 1005.6L333.9 1005.7L334.9 1005.8L335.9 1006.0L336.9 1006.3L337.9 1006.3L338.9 1006.2L339.9 1006.0L340.9 1005.9L341.9 1005.9L342.9 1006.1L343.9 1006.4L344.9 1006.6L345.9 1006.6L346.9 1006.3L347.9 1006.0L348.9 1005.7L349.9 1005.6L350.9 1005.7L351.9 1005.9L352.9 1006.0L353.9 1005.9L354.9 1005.9L355.9 1005.9L356.9 1005.7L357.9 1005.5L358.9 1005.4L359.9 1005.3L360.9 1005.2L361.9 1005.4L362.9 1005.7L363.9 1005.8L364.9 1005.7L365.9 1005.8L366.9 1006.0L367.9 1006.0L368.9 1005.9L369.9 1005.6L370.9 1005.4L371.9 1005.5L372.9 1005.9L373.9 1006.4L374.9 1006.4L375.9 1005.9L376.9 1005.5L377.9 1005.4L378.9 1005.5L379.9 1005.7L380.9 1005.9L381.9 1005.9L382.9 1005.8L383.9 1005.6L384.9 1005.5L385.9 1005.5L386.9 1005.6L387.9 1005.8L388.9 1005.9L389.9 1005.8L390.9 1005.9L391.9 1006.1L392.9 1006.2L393.9 1005.9L394.9 1005.7L395.9 1005.5L396.9 1005.5L397.9 1005.5L398.9 1005.6L399.9 1005.8L400.9 1006.1L401.9 1006.2L402.9 1006.3L403.9 1006.5L404.9 1006.4L405.9 1006.2L406.9 1006.0L407.9 1006.0L408.9 1005.9L409.9 1005.8L410.9 1005.8L411.9 1006.1L412.9 1006.4L413.9 1006.4L414.9 1006.1L415.9 1005.8L416.9 1005.6L417.9 1005.7L418.9 1005.9L419.9 1006.0L420.9 1006.1L421.9 1006.2L422.9 1006.2L423.9 1006.0L424.9 1005.8L425.9 1006.0L426.9 1006.5L427.9 1006.6L428.9 1006.6L429.9 1006.4L430.9 1006.1L431.9 1005.8L432.9 1005.7L433.9 1005.6L434.9 1005.7L435.9 1005.9L436.9 1006.0L437.9 1006.0L438.9 1006.0L439.9 1006.3L440.9 1006.6L441.9 1006.6L442.9 1006.6L443.9 1006.5L444.9 1006.2L445.9 1006.1L446.9 1006.3L447.9 1006.4L448.9 1006.2L449.9 1005.9L450.9 1005.7L451.9 1005.4L452.9 1005.4L453.9 1005.6L454.9 1006.0L455.9 1006.4L456.9 1006.5L457.9 1006.3L458.9 1005.8L459.9 1005.5L460.9 1005.6L461.9 1005.9L462.9 1005.9L463.9 1005.8L464.9 1005.7L465.9 1005.8L466.9 1005.8L467.9 1005.8L468.9 1005.7L469.9 1005.7L470.9 1005.9L471.9 1006.2L472.9 1006.5L473.9 1006.3L474.9 1005.9L475.9 1005.6L476.9 1005.6L477.9 1005.6L478.9 1005.7L479.9 1005.5L480.9 1005.4L481.9 1005.4L482.9 1005.7L483.9 1005.9L484.9 1005.9L485.9 1005.8L486.9 1005.8L487.9 1005.9L488.9 1005.9L489.9 1005.9L490.9 1005.7L491.9 1005.7L492.9 1005.9L493.9 1006.0L494.9 1006.0L495.9 1006.2L496.9 1006.3L497.9 1006.2L498.9 1005.7L499.9 1005.2L500.9 1005.1L501.9 1005.4L502.9 1005.6L503.9 1005.5L504.9 1005.5L505.9 1005.7L506.9 1006.0L507.9 1006.0L508.9 1006.0L509.9 1005.9L510.9 1005.9L511.9 1005.9L512.9 1005.9L513.9 1005.9L514.9 1006.0L515.9 1006.1L516.9 1006.2L517.9 1006.2L518.9 1006.1L519.9 1006.1L520.9 1005.9L521.9 1005.9L522.9 1006.1L523.9 1006.2L524.9 1006.1L525.9 1006.1L526.9 1006.0L527.9 1005.8L528.9 1005.5L529.9 1005.6L530.9 1005.8L531.9 1006.0L532.9 1006.2L533.9 1006.3L534.9 1006.1L535.9 1005.8L536.9 1005.4L537.9 1005.4L538.9 1005.6L539.9 1006.0L540.9 1006.2L541.9 1006.3L542.9 1006.3L543.9 1006.0L544.9 1005.6L545.9 1005.5L546.9 1005.7L547.9 1006.2L548.9 1006.6L549.9 1006.6L550.9 1006.4L551.9 1006.1L552.9 1005.9L553.9 1005.7L554.9 1005.6L555.9 1005.6L556.9 1005.8L557.9 1005.9L558.9 1006.1L559.9 1006.0L560.9 1005.6L561.9 1005.4L562.9 1005.4L563.9 1005.5L564.9 1005.5L565.9 1005.6L566.9 1005.8L567.9 1006.2L568.9 1006.4L569.9 1006.4L570.9 1006.2L571.9 1005.9L572.9 1005.6L573.9 1005.8L574.9 1006.2L575.9 1006.1L576.9 1005.8L577.9 1005.5L578.9 1005.6L579.9 1005.8L580.9 1005.7L581.9 1005.4L582.9 1005.3L583.9 1005.4L584.9 1005.5L585.9 1005.4L586.9 1005.3L587.9 1005.3L588.9 1005.6L589.9 1005.8L590.9 1005.8L591.9 1005.8L592.9 1005.8L593.9 1005.9L594.9 1006.1L595.9 1006.3L596.9 1006.4L597.9 1006.5L598.9 1006.3L599.9 1006.0L600.9 1005.9L601.9 1006.0L602.9 1006.0L603.9 1005.8L604.9 1005.7L605.9 1005.7L606.9 1005.9L607.9 1006.2L608.9 1006.2L609.9 1006.1L610.9 1005.8L611.9 1005.4L612.9 1005.4L613.9 1005.6L614.9 1005.8L615.9 1006.0L616.9 1006.1L617.9 1006.2L618.9 1006.4L619.9 1006.6L620.9 1006.3L621.9 1005.6L622.9 1005.4L623.9 1005.6L624.9 1005.9L625.9 1005.8L626.9 1005.6L627.9 1005.6L628.9 1005.8L629.9 1005.9L630.9 1005.8L631.9 1005.7L632.9 1005.7L633.9 1005.6L634.9 1005.6L635.9 1005.6L636.9 1005.6L637.9 1005.5L638.9 1005.7L639.9 1006.0L640.9 1006.3L641.9 1006.3L642.9 1006.1L643.9 1006.0L644.9 1005.8L645.9 1005.6L646.9 1005.5L647.9 1005.7L648.9 1006.1L649.9 1006.4L650.9 1006.5L651.9 1006.3L652.9 1006.0L653.9 1005.8L654.9 1005.9L655.9 1006.1L656.9 1006.1L657.9 1006.1L658.9 1006.2L659.9 1006.4L660.9 1006.4L661.9 1006.3L662.9 1006.0L663.9 1005.9L664.9 1005.8L665.9 1005.8L666.9 1005.9L667.9 1005.8L668.9 1005.6L669.9 1005.5L670.9 1005.7L671.9 1005.9L672.9 1006.0L673.9 1006.1L674.9 1006.2L675.9 1006.1L676.9 1005.8L677.9 1005.6L678.9 1005.7L679.9 1005.9L680.9 1005.9L681.9 1005.9L682.9 1005.9L683.9 1005.9L684.9 1006.0L685.9 1006.2L686.9 1006.2L687.9 1006.0L688.9 1005.9L689.9 1006.0L690.9 1005.9L691.9 1005.8L692.9 1005.8L693.9 1006.0L694.9 1006.2L695.9 1006.3L696.9 1006.2L697.9 1005.7L698.9 1005.5L699.9 1005.8L700.9 1006.2L701.9 1006.5L702.9 1006.5L703.9 1006.2L704.9 1006.0L705.9 1006.1L706.9 1006.4L707.9 1006.5L708.9 1006.5L709.9 1006.4L710.9 1006.3L711.9 1006.1L712.9 1005.9L713.9 1005.6L714.9 1005.7L715.9 1005.9L716.9 1006.0L717.9 1005.9L718.9 1005.6L719.9 1005.5L720.9 1005.6L721.9 1005.7L722.9 1005.8L723.9 1005.9L724.9 1005.9L725.9 1005.8L726.9 1005.7L727.9 1005.7L728.9 1005.9L729.9 1006.0L730.9 1006.0L731.9 1005.6L732.9 1005.4L733.9 1005.5L734.9 1005.8L735.9 1005.9L736.9 1006.1L737.9 1006.1L738.9 1005.9L739.9 1005.6L740.9 1005.5L741.9 1005.7L742.9 1006.0L743.9 1006.2L744.9 1006.1L745.9 1006.1L746.9 1006.4L747.9 1006.6L748.9 1006.2L749.9 1005.5L750.9 1005.1L751.9 1005.1L752.9 1005.3L753.9 1005.4L754.9 1005.6L755.9 1005.7L756.9 1005.8L757.9 1005.9L758.9 1006.1L759.9 1005.9L760.9 1005.6L761.9 1005.6L762.9 1005.7L763.9 1005.6L764.9 1005.3L765.9 1005.2L766.9 1005.5L767.9 1005.8L768.9 1006.1L769.9 1006.2L770.9 1006.1L771.9 1005.8L772.9 1005.5L773.9 1005.4L774.9 1005.4L775.9 1005.4L776.9 1005.1L777.9 1004.8L778.9 1004.8L779.9 1005.2L780.9 1005.9L781.9 1006.2L782.9 1006.3L783.9 1006.3L784.9 1006.3L785.9 1005.9L786.9 1005.4L787.9 1005.2L788.9 1005.3L789.9 1005.4L790.9 1005.5L791.9 1005.8L792.9 1006.1L793.9 1006.4L794.9 1006.1L795.9 1005.7L796.9 1005.7L797.9 1005.8L798.9 1006.0L799.9 1006.0L800.9 1005.9L801.9 1005.6L802.9 1005.5L803.9 1005.8L804.9 1006.2L805.9 1006.2L806.9 1005.9L807.9 1005.6L808.9 1005.5L809.9 1005.4L810.9 1005.5L811.9 1005.8L812.9 1006.1L813.9 1006.1L814.9 1006.1L815.9 1006.0L816.9 1006.0L817.9 1006.0L818.9 1005.9L819.9 1006.0L820.9 1006.1L821.9 1006.0L822.9 1005.9L823.9 1006.0L824.9 1006.0L825.9 1005.9L826.9 1005.8L827.9 1005.7L828.9 1005.6L829.9 1005.6L830.9 1005.6L831.9 1005.6L832.9 1005.5L833.9 1005.2L834.9 1005.1L835.9 1005.1L836.9 1005.2L837.9 1005.2L838.9 1005.1L839.9 1004.9L840.9 1004.9L841.9 1005.0L842.9 1005.1L843.9 1005.1L844.9 1005.3L845.9 1005.6L846.9 1005.9L847.9 1006.3L848.9 1006.6L849.9 1006.6L850.9 1006.6L851.9 1006.4L852.9 1006.0L853.9 1005.7L854.9 1005.6L855.9 1005.7L856.9 1005.9L857.9 1006.0L858.9 1006.0L859.9 1006.0L860.9 1005.9L861.9 1005.7L862.9 1005.6L863.9 1005.9L864.9 1006.3L865.9 1006.3L866.9 1006.2L867.9 1006.1L868.9 1006.2L869.9 1006.4L870.9 1006.2L871.9 1006.1L872.9 1006.0L873.9 1005.8L874.9 1005.9L875.9 1006.1L876.9 1006.2L877.9 1006.2L878.9 1006.2L879.9 1006.2L880.9 1006.4L881.9 1006.3L882.9 1006.1L883.9 1005.9L884.9 1005.7L885.9 1005.7L886.9 1005.8L887.9 1005.9L888.9 1006.0L889.9 1006.1L890.9 1006.0L891.9 1006.0L892.9 1006.0L893.9 1006.1L894.9 1006.1L895.9 1006.2L896.9 1006.6L897.9 1006.6L898.9 1006.6L899.9 1006.0L900.9 1005.4L901.9 1005.3L902.9 1005.6L903.9 1005.8L904.9 1006.1L905.9 1006.5L906.9 1006.6L907.9 1006.6L908.9 1006.4L909.9 1006.0L910.9 1005.7L911.9 1005.4L912.9 1005.4L913.9 1005.8L914.9 1006.1L915.9 1005.8L916.9 1005.5L917.9 1005.6L918.9 1006.2L919.9 1006.4L920.9 1006.2L921.9 1005.7L922.9 1005.3L923.9 1005.4L924.9 1005.8L925.9 1006.0L926.9 1006.1L927.9 1006.1L928.9 1006.4L929.9 1006.5L930.9 1006.4L931.9 1006.2L932.9 1006.1L933.9 1006.2L934.9 1006.3L935.9 1006.2L936.9 1006.1L937.9 1006.1L938.9 1005.9L939.9 1005.6L940.9 1005.3L941.9 1005.2L942.9 1005.2L943.9 1005.3L944.9 1005.4L945.9 1005.5L946.9 1005.5L947.9 1005.6L948.9 1005.5L949.9 1005.4L950.9 1005.4L951.9 1005.6L952.9 1005.9L953.9 1005.9L954.9 1005.7L955.9 1005.8L956.9 1005.7L957.9 1005.4L958.9 1005.5L959.9 1005.8L960.9 1006.0L961.9 1005.9L962.9 1005.7L963.9 1005.7L964.9 1005.8L965.9 1005.9L966.9 1006.2L967.9 1006.3L968.9 1006.1L969.9 1005.9L970.9 1005.9L971.9 1005.9L972.9 1005.8L973.9 1005.6L974.9 1005.5L975.9 1005.8L976.9 1006.1L977.9 1006.2L978.9 1005.9L979.9 1005.6L980.9 1005.6L981.9 1005.9L982.9 1005.9L983.9 1005.6L984.9 1005.5L985.9 1005.8L986.9 1006.1L987.9 1006.3L988.9 1006.4L989.9 1006.2L990.9 1005.9L991.9 1005.8L992.9 1006.0L993.9 1006.1L994.9 1006.1L995.9 1006.1L996.9 1006.2L997.9 1006.3L998.9 1006.4L999.9 1006.4L1000.9 1006.3L1001.9 1006.2L1002.9 1006.1L1003.9 1006.2L1004.9 1006.5L1005.9 1006.6L1006.9 1006.3L1007.9 1005.9L1008.9 1005.6L1009.9 1005.6L1010.9 1005.6L1011.9 1005.7L1012.9 1005.8L1013.9 1006.0L1014.9 1006.1L1015.9 1005.8L1016.9 1005.6L1017.9 1005.6L1018.9 1005.7L1019.9 1005.9L1020.9 1006.0L1021.9 1005.9L1022.9 1005.8L1023.9 1005.9L1024.9 1006.0L1025.9 1006.2L1026.9 1006.6L1027.9 1006.6L1028.9 1006.6L1029.9 1006.5L1030.9 1006.0L1031.9 1005.7L1032.9 1005.8L1033.9 1006.2L1034.9 1006.3L1035.9 1006.3L1036.9 1006.2L1037.9 1006.0L1038.9 1005.8L1039.9 1005.8L1040.9 1005.8L1041.9 1005.9L1042.9 1006.3L1043.9 1006.6L1044.9 1006.5L1045.9 1006.2L1046.9 1006.1L1047.9 1006.2L1048.9 1006.3L1049.9 1006.3L1050.9 1006.4L1051.9 1006.5L1052.9 1006.5L1053.9 1006.3L1054.9 1006.0L1055.9 1005.8L1056.9 1005.7L1057.9 1005.4L1058.9 1005.2L1059.9 1005.2L1060.9 1005.6L1061.9 1005.9L1062.9 1005.8L1063.9 1005.5L1064.9 1005.2L1065.9 1004.9L1066.9 1004.8L1067.9 1005.0L1068.9 1005.5L1069.9 1005.8L1070.9 1006.0L1071.9 1006.1L1072.9 1006.2L1073.9 1006.4L1074.9 1006.3L1075.9 1006.0L1076.9 1005.9L1077.9 1005.9L1078.9 1005.8L1079.9 1005.6L1080.9 1005.5L1081.9 1005.5L1082.9 1005.7L1083.9 1006.0L1084.9 1006.1L1085.9 1006.1L1086.9 1005.9L1087.9 1005.7L1088.9 1005.6L1089.9 1005.7L1090.9 1005.9L1091.9 1005.8L1092.9 1005.6L1093.9 1005.4L1094.9 1005.3L1095.9 1005.3L1096.9 1005.5L1097.9 1005.6L1098.9 1005.5L1099.9 1005.4L1100.9 1005.3L1101.9 1005.6L1102.9 1006.0L1103.9 1006.2L1104.9 1006.1L1105.9 1005.6L1106.9 1005.2L1107.9 1005.0L1108.9 1005.2L1109.9 1005.3L1110.9 1005.6L1111.9 1006.0L1112.9 1006.5L1113.9 1006.6L1114.9 1006.6L1115.9 1006.6L1116.9 1006.4L1117.9 1006.4L1118.9 1006.4L1119.9 1006.4L1120.9 1006.3L1121.9 1006.1L1122.9 1005.9L1123.9 1005.9L1124.9 1006.0L1125.9 1006.2L1126.9 1006.3L1127.9 1006.4L1128.9 1006.4L1129.9 1006.2L1130.9 1006.1L1131.9 1005.9L1132.9 1005.7L1133.9 1005.6L1134.9 1005.5L1135.9 1005.4L1136.9 1005.4L1137.9 1005.7L1138.9 1005.9L1139.9 1006.1L1140.9 1006.3L1141.9 1006.6L1142.9 1006.6L1143.9 1006.6L1144.9 1006.2L1145.9 1005.6L1146.9 1005.3L1147.9 1005.3L1148.9 1005.7L1149.9 1006.1L1150.9 1006.1L1151.9 1006.0L1152.9 1005.9L1153.9 1005.9L1154.9 1005.9L1155.9 1006.0L1156.9 1006.2L1157.9 1006.3L1158.9 1006.4L1159.9 1006.4L1160.9 1006.4L1161.9 1006.1L1162.9 1005.9L1163.9 1005.8L1164.9 1005.8L1165.9 1005.7L1166.9 1005.8L1167.9 1006.0L1168.9 1006.2L1169.9 1006.3L1170.9 1006.3L1171.9 1006.2L1172.9 1006.3L1173.9 1006.3L1174.9 1006.0L1175.9 1005.6L1176.9 1005.6L1177.9 1005.9L1178.9 1006.2L1179.9 1006.2L1180.9 1005.8L1181.9 1005.6L1182.9 1005.7L1183.9 1005.8L1184.9 1006.0L1185.9 1006.2L1186.9 1006.2L1187.9 1006.1L1188.9 1006.1L1189.9 1006.2L1190.9 1006.0L1191.9 1005.8L1192.9 1005.8L1193.9 1005.8L1194.9 1005.9L1195.9 1006.1L1196.9 1006.3L1197.9 1006.2L1198.9 1006.0L1199.9 1006.1L1200.9 1006.4L1201.9 1006.6L1202.9 1006.6L1203.9 1006.4L1204.9 1006.3L1205.9 1006.2L1206.9 1006.2L1207.9 1006.2L1208.9 1006.2L1209.9 1006.0L1210.9 1005.7L1211.9 1005.5L1212.9 1005.5L1213.9 1005.5L1214.9 1005.6L1215.9 1005.9L1216.9 1005.9L1217.9 1005.8L1218.9 1005.8L1219.9 1005.7L1220.9 1005.8L1221.9 1006.0L1222.9 1006.3L1223.9 1006.5L1224.9 1006.4L1225.9 1006.2L1226.9 1006.3L1227.9 1006.5L1228.9 1006.6L1229.9 1006.4L1230.9 1005.8L1231.9 1005.5L1232.9 1005.5L1233.9 1005.8L1234.9 1005.9L1235.9 1005.8L1236.9 1005.8L1237.9 1005.8L1238.9 1006.0L1239.9 1006.3L1240.9 1006.5L1240.9 1010.1L1239.9 1010.1L1238.9 1010.4L1237.9 1010.8L1236.9 1010.9L1235.9 1010.2L1234.9 1009.5L1233.9 1009.3L1232.9 1009.7L1231.9 1010.2L1230.9 1010.4L1229.9 1010.4L1228.9 1010.1L1227.9 1009.3L1226.9 1008.9L1225.9 1008.9L1224.9 1008.9L1223.9 1009.7L1222.9 1010.6L1221.9 1011.1L1220.9 1011.2L1219.9 1011.1L1218.9 1010.3L1217.9 1009.1L1216.9 1008.9L1215.9 1008.9L1214.9 1008.9L1213.9 1008.9L1212.9 1009.2L1211.9 1009.3L1210.9 1009.3L1209.9 1009.2L1208.9 1009.3L1207.9 1009.6L1206.9 1010.3L1205.9 1011.1L1204.9 1011.2L1203.9 1011.2L1202.9 1011.2L1201.9 1011.2L1200.9 1011.2L1199.9 1011.0L1198.9 1010.5L1197.9 1010.2L1196.9 1010.1L1195.9 1010.0L1194.9 1009.7L1193.9 1009.3L1192.9 1009.0L1191.9 1009.1L1190.9 1009.5L1189.9 1009.9L1188.9 1010.0L1187.9 1009.7L1186.9 1009.2L1185.9 1008.9L1184.9 1008.9L1183.9 1009.0L1182.9 1009.4L1181.9 1009.7L1180.9 1009.9L1179.9 1010.0L1178.9 1010.1L1177.9 1010.1L1176.9 1009.8L1175.9 1009.4L1174.9 1009.3L1173.9 1009.6L1172.9 1010.4L1171.9 1011.2L1170.9 1011.2L1169.9 1011.2L1168.9 1010.8L1167.9 1010.2L1166.9 1009.9L1165.9 1009.9L1164.9 1009.8L1163.9 1009.8L1162.9 1009.7L1161.9 1009.6L1160.9 1009.6L1159.9 1010.0L1158.9 1010.3L1157.9 1010.4L1156.9 1010.4L1155.9 1010.2L1154.9 1010.1L1153.9 1010.3L1152.9 1010.7L1151.9 1011.2L1150.9 1011.2L1149.9 1011.2L1148.9 1011.0L1147.9 1010.7L1146.9 1010.6L1145.9 1010.6L1144.9 1010.5L1143.9 1010.6L1142.9 1010.9L1141.9 1010.9L1140.9 1010.6L1139.9 1010.4L1138.9 1010.4L1137.9 1010.6L1136.9 1010.8L1135.9 1011.0L1134.9 1011.2L1133.9 1010.9L1132.9 1009.8L1131.9 1008.9L1130.9 1008.9L1129.9 1008.9L1128.9 1008.9L1127.9 1009.4L1126.9 1010.2L1125.9 1010.5L1124.9 1010.4L1123.9 1010.2L1122.9 1010.3L1121.9 1010.8L1120.9 1011.2L1119.9 1011.2L1118.9 1011.2L1117.9 1011.2L1116.9 1011.2L1115.9 1011.2L1114.9 1011.2L1113.9 1011.2L1112.9 1011.2L1111.9 1010.8L1110.9 1010.5L1109.9 1010.8L1108.9 1011.2L1107.9 1011.2L1106.9 1011.2L1105.9 1011.2L1104.9 1011.2L1103.9 1010.8L1102.9 1009.7L1101.9 1008.9L1100.9 1008.9L1099.9 1008.9L1098.9 1009.1L1097.9 1009.7L1096.9 1010.0L1095.9 1010.2L1094.9 1010.0L1093.9 1009.6L1092.9 1009.2L1091.9 1009.2L1090.9 1009.5L1089.9 1010.1L1088.9 1010.5L1087.9 1010.6L1086.9 1010.2L1085.9 1009.2L1084.9 1008.9L1083.9 1008.9L1082.9 1008.9L1081.9 1008.9L1080.9 1008.9L1079.9 1008.9L1078.9 1009.3L1077.9 1009.6L1076.9 1009.7L1075.9 1009.7L1074.9 1009.9L1073.9 1010.7L1072.9 1011.2L1071.9 1011.2L1070.9 1010.8L1069.9 1009.3L1068.9 1008.9L1067.9 1008.9L1066.9 1008.9L1065.9 1009.6L1064.9 1010.1L1063.9 1010.0L1062.9 1009.6L1061.9 1009.2L1060.9 1008.9L1059.9 1008.9L1058.9 1008.9L1057.9 1008.9L1056.9 1009.1L1055.9 1010.1L1054.9 1010.8L1053.9 1011.0L1052.9 1011.1L1051.9 1011.2L1050.9 1011.2L1049.9 1011.2L1048.9 1011.2L1047.9 1011.2L1046.9 1011.2L1045.9 1010.7L1044.9 1010.6L1043.9 1010.7L1042.9 1010.7L1041.9 1010.5L1040.9 1010.3L1039.9 1010.4L1038.9 1010.7L1037.9 1010.9L1036.9 1011.0L1035.9 1011.0L1034.9 1011.0L1033.9 1011.1L1032.9 1010.9L1031.9 1010.4L1030.9 1010.0L1029.9 1009.8L1028.9 1010.2L1027.9 1010.8L1026.9 1011.1L1025.9 1011.0L1024.9 1010.5L1023.9 1010.1L1022.9 1009.8L1021.9 1009.9L1020.9 1010.4L1019.9 1011.2L1018.9 1011.2L1017.9 1011.2L1016.9 1010.6L1015.9 1009.7L1014.9 1009.5L1013.9 1009.8L1012.9 1010.2L1011.9 1010.4L1010.9 1010.4L1009.9 1010.6L1008.9 1011.0L1007.9 1011.2L1006.9 1011.2L1005.9 1011.2L1004.9 1011.2L1003.9 1011.2L1002.9 1010.7L1001.9 1010.7L1000.9 1010.9L999.9 1010.9L998.9 1010.8L997.9 1010.4L996.9 1009.5L995.9 1008.9L994.9 1008.9L993.9 1009.1L992.9 1009.7L991.9 1009.9L990.9 1010.1L989.9 1010.5L988.9 1010.9L987.9 1010.9L986.9 1010.5L985.9 1010.0L984.9 1009.7L983.9 1009.8L982.9 1010.1L981.9 1010.5L980.9 1010.9L979.9 1011.2L978.9 1011.2L977.9 1011.2L976.9 1010.5L975.9 1010.2L974.9 1010.5L973.9 1011.2L972.9 1011.2L971.9 1011.2L970.9 1011.2L969.9 1011.2L968.9 1011.0L967.9 1010.5L966.9 1010.0L965.9 1009.8L964.9 1010.0L963.9 1009.8L962.9 1008.9L961.9 1008.9L960.9 1008.9L959.9 1008.9L958.9 1009.2L957.9 1010.2L956.9 1010.3L955.9 1010.2L954.9 1010.3L953.9 1010.8L952.9 1011.2L951.9 1011.2L950.9 1011.2L949.9 1010.8L948.9 1010.5L947.9 1010.5L946.9 1010.5L945.9 1010.1L944.9 1009.3L943.9 1008.9L942.9 1008.9L941.9 1009.5L940.9 1010.5L939.9 1011.2L938.9 1011.2L937.9 1011.2L936.9 1010.5L935.9 1009.8L934.9 1010.0L933.9 1011.0L932.9 1011.2L931.9 1011.2L930.9 1011.2L929.9 1011.1L928.9 1010.5L927.9 1010.2L926.9 1010.0L925.9 1010.0L924.9 1010.3L923.9 1011.2L922.9 1011.2L921.9 1011.2L920.9 1011.2L919.9 1011.2L918.9 1010.9L917.9 1010.3L916.9 1010.3L915.9 1010.7L914.9 1011.1L913.9 1011.2L912.9 1010.8L911.9 1010.0L910.9 1009.3L909.9 1008.9L908.9 1008.9L907.9 1009.0L906.9 1009.4L905.9 1009.9L904.9 1010.2L903.9 1010.1L902.9 1009.7L901.9 1009.3L900.9 1009.2L899.9 1009.5L898.9 1010.0L897.9 1010.5L896.9 1010.3L895.9 1009.7L894.9 1009.3L893.9 1009.1L892.9 1009.0L891.9 1009.1L890.9 1009.4L889.9 1009.7L888.9 1010.0L887.9 1010.3L886.9 1010.5L885.9 1010.6L884.9 1010.5L883.9 1010.3L882.9 1010.0L881.9 1009.7L880.9 1009.5L879.9 1009.5L878.9 1009.8L877.9 1010.2L876.9 1010.6L875.9 1010.9L874.9 1010.9L873.9 1010.6L872.9 1010.3L871.9 1009.9L870.9 1009.7L869.9 1009.4L868.9 1009.1L867.9 1008.9L866.9 1008.9L865.9 1008.9L864.9 1008.9L863.9 1008.9L862.9 1008.9L861.9 1008.9L860.9 1008.9L859.9 1009.4L858.9 1010.3L857.9 1011.1L856.9 1011.2L855.9 1011.2L854.9 1011.0L853.9 1010.9L852.9 1011.2L851.9 1011.2L850.9 1011.2L849.9 1010.9L848.9 1010.7L847.9 1010.9L846.9 1011.2L845.9 1011.2L844.9 1010.7L843.9 1009.9L842.9 1009.3L841.9 1009.1L840.9 1009.0L839.9 1009.1L838.9 1009.7L837.9 1010.4L836.9 1010.9L835.9 1011.2L834.9 1011.2L833.9 1011.2L832.9 1010.9L831.9 1010.7L830.9 1010.8L829.9 1011.0L828.9 1011.0L827.9 1010.7L826.9 1010.5L825.9 1010.6L824.9 1010.7L823.9 1010.5L822.9 1009.8L821.9 1009.4L820.9 1009.6L819.9 1010.2L818.9 1010.7L817.9 1010.7L816.9 1010.0L815.9 1009.2L814.9 1008.9L813.9 1009.1L812.9 1009.7L811.9 1010.3L810.9 1010.7L809.9 1010.7L808.9 1010.4L807.9 1009.9L806.9 1009.5L805.9 1009.6L804.9 1010.0L803.9 1010.4L802.9 1010.7L801.9 1010.8L800.9 1010.8L799.9 1010.5L798.9 1009.9L797.9 1009.4L796.9 1009.1L795.9 1009.3L794.9 1009.6L793.9 1009.6L792.9 1009.6L791.9 1009.9L790.9 1010.4L789.9 1010.8L788.9 1010.8L787.9 1010.4L786.9 1009.8L785.9 1009.3L784.9 1009.2L783.9 1009.4L782.9 1009.2L781.9 1008.9L780.9 1008.9L779.9 1009.3L778.9 1010.2L777.9 1010.9L776.9 1011.2L775.9 1010.8L774.9 1010.1L773.9 1009.7L772.9 1009.6L771.9 1009.8L770.9 1010.3L769.9 1010.6L768.9 1010.5L767.9 1010.3L766.9 1010.4L765.9 1010.7L764.9 1010.9L763.9 1010.9L762.9 1011.0L761.9 1011.1L760.9 1011.0L759.9 1010.8L758.9 1010.6L757.9 1010.7L756.9 1010.9L755.9 1010.6L754.9 1009.9L753.9 1009.2L752.9 1008.9L751.9 1008.9L750.9 1008.9L749.9 1008.9L748.9 1009.2L747.9 1009.5L746.9 1009.6L745.9 1009.3L744.9 1008.9L743.9 1008.9L742.9 1008.9L741.9 1008.9L740.9 1008.9L739.9 1008.9L738.9 1008.9L737.9 1008.9L736.9 1009.0L735.9 1009.4L734.9 1009.7L733.9 1010.1L732.9 1010.5L731.9 1010.7L730.9 1010.8L729.9 1010.9L728.9 1010.8L727.9 1010.4L726.9 1010.2L725.9 1010.5L724.9 1011.1L723.9 1011.2L722.9 1011.1L721.9 1010.4L720.9 1009.8L719.9 1009.4L718.9 1009.5L717.9 1010.2L716.9 1010.9L715.9 1011.2L714.9 1011.2L713.9 1011.2L712.9 1011.2L711.9 1011.1L710.9 1010.8L709.9 1010.4L708.9 1010.0L707.9 1009.4L706.9 1008.9L705.9 1008.9L704.9 1008.9L703.9 1009.2L702.9 1010.2L701.9 1010.9L700.9 1011.2L699.9 1011.2L698.9 1011.2L697.9 1011.2L696.9 1011.2L695.9 1011.2L694.9 1011.2L693.9 1011.2L692.9 1011.2L691.9 1011.2L690.9 1010.8L689.9 1010.3L688.9 1009.8L687.9 1009.2L686.9 1008.9L685.9 1008.9L684.9 1008.9L683.9 1008.9L682.9 1009.2L681.9 1009.4L680.9 1009.1L679.9 1008.9L678.9 1008.9L677.9 1009.2L676.9 1009.6L675.9 1009.9L674.9 1009.8L673.9 1009.6L672.9 1009.5L671.9 1009.6L670.9 1009.9L669.9 1010.5L668.9 1011.2L667.9 1011.2L666.9 1011.2L665.9 1011.2L664.9 1011.2L663.9 1011.2L662.9 1011.2L661.9 1011.2L660.9 1011.2L659.9 1010.6L658.9 1009.9L657.9 1009.8L656.9 1010.0L655.9 1010.4L654.9 1010.7L653.9 1010.7L652.9 1010.5L651.9 1010.5L650.9 1011.0L649.9 1011.2L648.9 1011.2L647.9 1010.7L646.9 1009.5L645.9 1008.9L644.9 1008.9L643.9 1009.1L642.9 1009.3L641.9 1009.3L640.9 1009.2L639.9 1009.4L638.9 1009.6L637.9 1009.4L636.9 1008.9L635.9 1008.9L634.9 1008.9L633.9 1009.2L632.9 1009.1L631.9 1008.9L630.9 1008.9L629.9 1008.9L628.9 1009.4L627.9 1009.9L626.9 1009.7L625.9 1009.2L624.9 1008.9L623.9 1009.0L622.9 1009.6L621.9 1010.0L620.9 1010.0L619.9 1009.8L618.9 1009.8L617.9 1009.8L616.9 1009.6L615.9 1009.1L614.9 1008.9L613.9 1008.9L612.9 1009.0L611.9 1009.2L610.9 1009.6L609.9 1009.8L608.9 1009.8L607.9 1009.8L606.9 1009.9L605.9 1010.1L604.9 1010.1L603.9 1010.1L602.9 1010.0L601.9 1009.6L600.9 1009.3L599.9 1009.4L598.9 1009.7L597.9 1009.9L596.9 1009.8L595.9 1009.4L594.9 1009.3L593.9 1009.8L592.9 1010.6L591.9 1011.2L590.9 1011.2L589.9 1010.9L588.9 1010.2L587.9 1009.6L586.9 1009.4L585.9 1009.3L584.9 1009.0L583.9 1008.9L582.9 1008.9L581.9 1009.1L580.9 1009.4L579.9 1009.6L578.9 1010.0L577.9 1010.8L576.9 1011.2L575.9 1011.2L574.9 1011.2L573.9 1011.2L572.9 1011.2L571.9 1011.2L570.9 1011.2L569.9 1011.2L568.9 1011.2L567.9 1011.2L566.9 1011.2L565.9 1011.0L564.9 1010.5L563.9 1010.5L562.9 1010.5L561.9 1010.3L560.9 1009.8L559.9 1009.5L558.9 1009.3L557.9 1009.5L556.9 1010.1L555.9 1010.9L554.9 1011.2L553.9 1011.2L552.9 1011.2L551.9 1011.2L550.9 1011.2L549.9 1011.2L548.9 1011.2L547.9 1011.2L546.9 1011.2L545.9 1011.2L544.9 1011.2L543.9 1011.2L542.9 1011.2L541.9 1011.2L540.9 1011.2L539.9 1011.0L538.9 1010.6L537.9 1010.6L536.9 1010.8L535.9 1010.7L534.9 1010.1L533.9 1009.7L532.9 1009.8L531.9 1010.2L530.9 1010.6L529.9 1010.9L528.9 1010.6L527.9 1010.3L526.9 1010.2L525.9 1010.5L524.9 1010.6L523.9 1010.6L522.9 1010.7L521.9 1010.9L520.9 1010.8L519.9 1010.1L518.9 1009.1L517.9 1008.9L516.9 1008.9L515.9 1008.9L514.9 1008.9L513.9 1009.1L512.9 1009.7L511.9 1010.4L510.9 1011.0L509.9 1011.2L508.9 1011.0L507.9 1010.5L506.9 1010.0L505.9 1009.6L504.9 1009.7L503.9 1010.3L502.9 1011.0L501.9 1011.2L500.9 1011.2L499.9 1011.2L498.9 1011.2L497.9 1011.2L496.9 1011.2L495.9 1011.2L494.9 1011.2L493.9 1011.2L492.9 1011.2L491.9 1011.2L490.9 1011.2L489.9 1011.2L488.9 1010.7L487.9 1010.4L486.9 1010.1L485.9 1009.8L484.9 1009.4L483.9 1009.0L482.9 1008.9L481.9 1008.9L480.9 1009.0L479.9 1009.4L478.9 1009.9L477.9 1010.1L476.9 1010.3L475.9 1010.9L474.9 1011.2L473.9 1011.2L472.9 1011.2L471.9 1009.9L470.9 1008.9L469.9 1008.9L468.9 1008.9L467.9 1008.9L466.9 1008.9L465.9 1008.9L464.9 1008.9L463.9 1008.9L462.9 1009.3L461.9 1009.8L460.9 1010.0L459.9 1010.5L458.9 1011.2L457.9 1011.2L456.9 1011.2L455.9 1011.2L454.9 1011.2L453.9 1011.0L452.9 1010.3L451.9 1009.9L450.9 1009.9L449.9 1010.0L448.9 1009.9L447.9 1009.7L446.9 1009.6L445.9 1010.0L444.9 1010.9L443.9 1011.2L442.9 1011.2L441.9 1011.2L440.9 1010.9L439.9 1010.8L438.9 1011.1L437.9 1011.1L436.9 1010.8L435.9 1010.4L434.9 1010.0L433.9 1009.8L432.9 1009.6L431.9 1009.7L430.9 1009.8L429.9 1009.8L428.9 1009.4L427.9 1008.9L426.9 1008.9L425.9 1009.0L424.9 1009.7L423.9 1010.3L422.9 1010.2L421.9 1009.5L420.9 1008.9L419.9 1008.9L418.9 1008.9L417.9 1009.6L416.9 1010.6L415.9 1011.1L414.9 1011.1L413.9 1010.8L412.9 1010.7L411.9 1011.1L410.9 1011.2L409.9 1011.2L408.9 1011.2L407.9 1011.2L406.9 1011.2L405.9 1011.2L404.9 1011.0L403.9 1010.1L402.9 1009.6L401.9 1009.6L400.9 1009.8L399.9 1009.9L398.9 1009.8L397.9 1009.9L396.9 1010.4L395.9 1010.7L394.9 1010.3L393.9 1009.5L392.9 1008.9L391.9 1008.9L390.9 1008.9L389.9 1009.5L388.9 1010.3L387.9 1010.5L386.9 1010.1L385.9 1009.7L384.9 1009.6L383.9 1010.0L382.9 1010.5L381.9 1010.8L380.9 1010.7L379.9 1010.5L378.9 1010.3L377.9 1010.2L376.9 1010.1L375.9 1010.1L374.9 1009.8L373.9 1009.4L372.9 1009.2L371.9 1009.4L370.9 1009.7L369.9 1010.0L368.9 1010.2L367.9 1010.2L366.9 1010.0L365.9 1009.6L364.9 1009.3L363.9 1009.5L362.9 1009.9L361.9 1010.2L360.9 1010.2L359.9 1010.0L358.9 1010.2L357.9 1010.8L356.9 1011.2L355.9 1011.2L354.9 1011.2L353.9 1011.2L352.9 1011.0L351.9 1010.7L350.9 1010.4L349.9 1009.8L348.9 1009.2L347.9 1008.9L346.9 1009.1L345.9 1009.5L344.9 1009.7L343.9 1009.8L342.9 1009.9L341.9 1009.9L340.9 1009.7L339.9 1009.5L338.9 1009.3L337.9 1009.2L336.9 1009.1L335.9 1009.2L334.9 1009.2L333.9 1009.2L332.9 1008.9L331.9 1008.9L330.9 1008.9L329.9 1008.9L328.9 1008.9L327.9 1009.2L326.9 1010.6L325.9 1011.2L324.9 1011.2L323.9 1011.2L322.9 1011.2L321.9 1010.9L320.9 1010.9L319.9 1011.0L318.9 1010.9L317.9 1010.3L316.9 1009.6L315.9 1009.1L314.9 1008.9L313.9 1008.9L312.9 1008.9L311.9 1008.9L310.9 1008.9L309.9 1008.9L308.9 1008.9L307.9 1008.9L306.9 1008.9L305.9 1010.0L304.9 1010.7L303.9 1010.8L302.9 1010.7L301.9 1010.6L300.9 1010.7L299.9 1010.8L298.9 1011.1L297.9 1011.2L296.9 1011.2L295.9 1011.0L294.9 1010.9L293.9 1011.2L292.9 1011.2L291.9 1011.2L290.9 1011.2L289.9 1011.0L288.9 1009.8L287.9 1008.9L286.9 1008.9L285.9 1009.2L284.9 1010.0L283.9 1010.6L282.9 1011.0L281.9 1011.1L280.9 1011.2L279.9 1011.2L278.9 1011.2L277.9 1011.2L276.9 1011.2L275.9 1011.2L274.9 1010.8L273.9 1010.6L272.9 1010.6L271.9 1011.0L270.9 1011.2L269.9 1011.2L268.9 1011.2L267.9 1011.2L266.9 1010.1L265.9 1009.1L264.9 1008.9L263.9 1008.9L262.9 1008.9L261.9 1009.4L260.9 1010.0L259.9 1010.0L258.9 1009.8L257.9 1009.3L256.9 1008.9L255.9 1008.9L254.9 1008.9L253.9 1008.9L252.9 1009.3L251.9 1010.0L250.9 1010.9L249.9 1011.2L248.9 1011.2L247.9 1011.2L246.9 1011.2L245.9 1011.2L244.9 1011.2L243.9 1010.6L242.9 1009.9L241.9 1009.5L240.9 1009.6L239.9 1009.9L238.9 1010.1L237.9 1009.8L236.9 1009.4L235.9 1009.3L234.9 1009.9L233.9 1010.9L232.9 1011.2L231.9 1011.2L230.9 1011.0L229.9 1011.1L228.9 1011.2L227.9 1011.2L226.9 1011.0L225.9 1010.1L224.9 1009.2L223.9 1008.9L222.9 1008.9L221.9 1008.9L220.9 1008.9L219.9 1009.1L218.9 1009.4L217.9 1009.7L216.9 1009.9L215.9 1010.0L214.9 1010.4L213.9 1011.2L212.9 1011.2L211.9 1011.2L210.9 1011.2L209.9 1010.2L208.9 1009.3L207.9 1008.9L206.9 1008.9L205.9 1008.9L204.9 1009.2L203.9 1009.7L202.9 1010.1L201.9 1010.2L200.9 1010.1L199.9 1009.8L198.9 1009.6L197.9 1009.6L196.9 1009.8L195.9 1010.2L194.9 1010.6L193.9 1010.8L192.9 1010.7L191.9 1010.4L190.9 1010.2L189.9 1010.9L188.9 1011.2L187.9 1011.2L186.9 1011.2L185.9 1011.2L184.9 1011.2L183.9 1009.5L182.9 1008.9L181.9 1008.9L180.9 1009.3L179.9 1010.3L178.9 1010.8L177.9 1011.0L176.9 1011.1L175.9 1010.9L174.9 1010.1L173.9 1009.4L172.9 1009.4L171.9 1009.9L170.9 1010.4L169.9 1010.7L168.9 1011.0L167.9 1011.2L166.9 1011.2L165.9 1011.2L164.9 1011.2L163.9 1010.7L162.9 1010.1zM1241.2 1011L1241.2 1004.5L1242.2 1002.1L1243.2 1001.7L1244.2 1002.2L1245.2 1003.2L1246.2 1003.9L1247.2 1004.4L1248.2 1004.6L1249.2 1004.6L1250.2 1003.6L1251.2 1002.5L1252.2 1002.2L1253.2 1003.0L1254.2 1003.7L1255.2 1003.5L1256.2 1003.3L1257.2 1003.8L1258.2 1004.0L1259.2 1003.5L1260.2 1002.5L1261.2 1001.9L1262.2 1002.0L1263.2 1002.6L1264.2 1003.3L1265.2 1004.1L1266.2 1004.6L1267.2 1004.6L1268.2 1004.6L1269.2 1003.8L1270.2 1003.6L1271.2 1003.3L1272.2 1003.0L1273.2 1003.1L1274.2 1003.6L1275.2 1003.7L1276.2 1003.8L1277.2 1004.0L1278.2 1003.6L1279.2 1003.4L1280.2 1003.7L1281.2 1003.8L1282.2 1002.9L1283.2 1001.8L1284.2 1001.8L1285.2 1003.1L1286.2 1004.1L1287.2 1004.0L1288.2 1003.7L1289.2 1003.6L1290.2 1003.0L1291.2 1002.2L1292.2 1001.9L1293.2 1002.3L1294.2 1003.0L1295.2 1003.5L1296.2 1002.9L1297.2 1001.9L1298.2 1001.6L1299.2 1002.5L1300.2 1003.2L1301.2 1002.3L1302.2 1001.4L1303.2 1004.5L1303.3 1011z" fill="#000"/>
<path d="M319.3 1002.3h0m21 1h0m63-4h0m101 4h0m121-5h0m354-2h0m-232 7.2h0" stroke="#000" fill="none" stroke-linecap="round" stroke-width="2.6"/>
<path d="M649.3 990h0m25 2.3h0m481.1-3.1h0" stroke="#f00" fill="none" stroke-linecap="round" stroke-width="2.6"/>
<path d="M175.35 790.55h1.9v1.9h-1.9zM343.35 790.55h1.9v1.9h-1.9zM510.35 790.55h1.9v1.9h-1.9zM577.75 790.55h1.9v1.9h-1.9zM678.35 790.55h1.9v1.9h-1.9zM745.35 790.55h1.9v1.9h-1.9zM912.75 790.55h1.9v1.9h-1.9zM1013.35 790.55h1.9v1.9h-1.9zM1081.05 790.55h1.9v1.9h-1.9zM1147.65 790.55h1.9v1.9h-1.9z" stroke="#000" stroke-width="1.3" fill="#fff"/>
<path d="M171.25 856.5a1.05 1.05 0 1 0 2.1 0a1.05 1.05 0 1 0-2.1 0zM318.25 856.5a1.05 1.05 0 1 0 2.1 0a1.05 1.05 0 1 0-2.1 0zM339.25 856.5a1.05 1.05 0 1 0 2.1 0a1.05 1.05 0 1 0-2.1 0zM402.95 856.5a1.05 1.05 0 1 0 2.1 0a1.05 1.05 0 1 0-2.1 0zM406.25 856.5a1.05 1.05 0 1 0 2.1 0a1.05 1.05 0 1 0-2.1 0zM439.25 856.5a1.05 1.05 0 1 0 2.1 0a1.05 1.05 0 1 0-2.1 0zM503.95 856.5a1.05 1.05 0 1 0 2.1 0a1.05 1.05 0 1 0-2.1 0zM506.65 856.5a1.05 1.05 0 1 0 2.1 0a1.05 1.05 0 1 0-2.1 0zM573.25 856.5a1.05 1.05 0 1 0 2.1 0a1.05 1.05 0 1 0-2.1 0zM624.25 856.5a1.05 1.05 0 1 0 2.1 0a1.05 1.05 0 1 0-2.1 0zM649.25 856.5a1.05 1.05 0 1 0 2.1 0a1.05 1.05 0 1 0-2.1 0zM673.25 856.5a1.05 1.05 0 1 0 2.1 0a1.05 1.05 0 1 0-2.1 0zM674.65 856.5a1.05 1.05 0 1 0 2.1 0a1.05 1.05 0 1 0-2.1 0zM741.25 856.5a1.05 1.05 0 1 0 2.1 0a1.05 1.05 0 1 0-2.1 0zM754.25 856.5a1.05 1.05 0 1 0 2.1 0a1.05 1.05 0 1 0-2.1 0zM808.65 856.5a1.05 1.05 0 1 0 2.1 0a1.05 1.05 0 1 0-2.1 0zM810.25 856.5a1.05 1.05 0 1 0 2.1 0a1.05 1.05 0 1 0-2.1 0zM842.25 856.5a1.05 1.05 0 1 0 2.1 0a1.05 1.05 0 1 0-2.1 0zM909.25 856.5a1.05 1.05 0 1 0 2.1 0a1.05 1.05 0 1 0-2.1 0zM947.25 856.5a1.05 1.05 0 1 0 2.1 0a1.05 1.05 0 1 0-2.1 0zM976.25 856.5a1.05 1.05 0 1 0 2.1 0a1.05 1.05 0 1 0-2.1 0zM978.25 856.5a1.05 1.05 0 1 0 2.1 0a1.05 1.05 0 1 0-2.1 0zM1009.25 856.5a1.05 1.05 0 1 0 2.1 0a1.05 1.05 0 1 0-2.1 0zM1076.25 856.5a1.05 1.05 0 1 0 2.1 0a1.05 1.05 0 1 0-2.1 0zM1077.65 856.5a1.05 1.05 0 1 0 2.1 0a1.05 1.05 0 1 0-2.1 0zM1143.35 856.5a1.05 1.05 0 1 0 2.1 0a1.05 1.05 0 1 0-2.1 0zM1152.35 856.5a1.05 1.05 0 1 0 2.1 0a1.05 1.05 0 1 0-2.1 0zM1154.35 856.5a1.05 1.05 0 1 0 2.1 0a1.05 1.05 0 1 0-2.1 0zM1248.55 856.5a1.05 1.05 0 1 0 2.1 0a1.05 1.05 0 1 0-2.1 0zM1257.65 856.5a1.05 1.05 0 1 0 2.1 0a1.05 1.05 0 1 0-2.1 0zM1271.25 856.5a1.05 1.05 0 1 0 2.1 0a1.05 1.05 0 1 0-2.1 0z" stroke="#000" stroke-width="1.2" fill="#000" fill-opacity=".6"/>
<path d="M171.25 889.5a1.05 1.05 0 1 0 2.1 0a1.05 1.05 0 1 0-2.1 0zM318.25 889.5a1.05 1.05 0 1 0 2.1 0a1.05 1.05 0 1 0-2.1 0zM339.25 889.5a1.05 1.05 0 1 0 2.1 0a1.05 1.05 0 1 0-2.1 0zM402.95 889.5a1.05 1.05 0 1 0 2.1 0a1.05 1.05 0 1 0-2.1 0zM406.25 889.5a1.05 1.05 0 1 0 2.1 0a1.05 1.05 0 1 0-2.1 0zM439.25 889.5a1.05 1.05 0 1 0 2.1 0a1.05 1.05 0 1 0-2.1 0zM503.95 889.5a1.05 1.05 0 1 0 2.1 0a1.05 1.05 0 1 0-2.1 0zM506.65 889.5a1.05 1.05 0 1 0 2.1 0a1.05 1.05 0 1 0-2.1 0zM573.25 889.5a1.05 1.05 0 1 0 2.1 0a1.05 1.05 0 1 0-2.1 0zM624.25 889.5a1.05 1.05 0 1 0 2.1 0a1.05 1.05 0 1 0-2.1 0zM649.25 889.5a1.05 1.05 0 1 0 2.1 0a1.05 1.05 0 1 0-2.1 0zM673.25 889.5a1.05 1.05 0 1 0 2.1 0a1.05 1.05 0 1 0-2.1 0zM674.65 889.5a1.05 1.05 0 1 0 2.1 0a1.05 1.05 0 1 0-2.1 0zM741.25 889.5a1.05 1.05 0 1 0 2.1 0a1.05 1.05 0 1 0-2.1 0zM754.25 889.5a1.05 1.05 0 1 0 2.1 0a1.05 1.05 0 1 0-2.1 0zM808.65 889.5a1.05 1.05 0 1 0 2.1 0a1.05 1.05 0 1 0-2.1 0zM810.25 889.5a1.05 1.05 0 1 0 2.1 0a1.05 1.05 0 1 0-2.1 0zM842.25 889.5a1.05 1.05 0 1 0 2.1 0a1.05 1.05 0 1 0-2.1 0zM909.25 889.5a1.05 1.05 0 1 0 2.1 0a1.05 1.05 0 1 0-2.1 0zM947.25 889.5a1.05 1.05 0 1 0 2.1 0a1.05 1.05 0 1 0-2.1 0zM976.25 889.5a1.05 1.05 0 1 0 2.1 0a1.05 1.05 0 1 0-2.1 0zM978.25 889.5a1.05 1.05 0 1 0 2.1 0a1.05 1.05 0 1 0-2.1 0zM1009.25 889.5a1.05 1.05 0 1 0 2.1 0a1.05 1.05 0 1 0-2.1 0zM1076.25 889.5a1.05 1.05 0 1 0 2.1 0a1.05 1.05 0 1 0-2.1 0zM1077.65 889.5a1.05 1.05 0 1 0 2.1 0a1.05 1.05 0 1 0-2.1 0zM1143.35 889.5a1.05 1.05 0 1 0 2.1 0a1.05 1.05 0 1 0-2.1 0zM1152.35 889.5a1.05 1.05 0 1 0 2.1 0a1.05 1.05 0 1 0-2.1 0zM1154.35 889.5a1.05 1.05 0 1 0 2.1 0a1.05 1.05 0 1 0-2.1 0zM1248.55 889.5a1.05 1.05 0 1 0 2.1 0a1.05 1.05 0 1 0-2.1 0zM1257.65 889.5a1.05 1.05 0 1 0 2.1 0a1.05 1.05 0 1 0-2.1 0zM1271.25 889.5a1.05 1.05 0 1 0 2.1 0a1.05 1.05 0 1 0-2.1 0zM1302.15 889.5a1.05 1.05 0 1 0 2.1 0a1.05 1.05 0 1 0-2.1 0z" stroke="#000" stroke-width="1.2" fill="#000" fill-opacity=".6"/>
<path d="M1239.9 758.5a1.3 1.3 0 1 0 2.6 0a1.3 1.3 0 1 0-2.6 0z" stroke="#000" fill="#000" fill-opacity=".45"/>
<path d="M172.3 955.7l1.6 2.9h-3.2zM175.3 955.7l1.6 2.9h-3.2zM176.7 955.7l1.6 2.9h-3.2zM319.3 955.7l1.6 2.9h-3.2zM340.3 955.7l1.6 2.9h-3.2zM342.3 955.7l1.6 2.9h-3.2zM345 955.7l1.6 2.9h-3.2zM404 955.7l1.6 2.9h-3.2zM407.3 955.7l1.6 2.9h-3.2zM440.3 955.7l1.6 2.9h-3.2zM504.3 955.7l1.6 2.9h-3.2zM506.7 955.7l1.6 2.9h-3.2zM509.3 955.7l1.6 2.9h-3.2zM512 955.7l1.6 2.9h-3.2zM574.3 955.7l1.6 2.9h-3.2zM577.7 955.7l1.6 2.9h-3.2zM579.3 955.7l1.6 2.9h-3.2zM625.3 955.7l1.6 2.9h-3.2zM649 955.7l1.6 2.9h-3.2zM650.3 955.7l1.6 2.9h-3.2zM674.3 955.7l1.6 2.9h-3.2zM676.7 955.7l1.6 2.9h-3.2zM679.7 955.7l1.6 2.9h-3.2zM742.3 955.7l1.6 2.9h-3.2zM744.7 955.7l1.6 2.9h-3.2zM746.7 955.7l1.6 2.9h-3.2zM755.3 955.7l1.6 2.9h-3.2zM809.7 955.7l1.6 2.9h-3.2zM811.3 955.7l1.6 2.9h-3.2zM843.3 955.7l1.6 2.9h-3.2zM910.3 955.7l1.6 2.9h-3.2zM912.3 955.7l1.6 2.9h-3.2zM914 955.7l1.6 2.9h-3.2zM948.3 955.7l1.6 2.9h-3.2zM977.3 955.7l1.6 2.9h-3.2zM979.3 955.7l1.6 2.9h-3.2zM1010.3 955.7l1.6 2.9h-3.2zM1012.7 955.7l1.6 2.9h-3.2zM1014.7 955.7l1.6 2.9h-3.2zM1077.3 955.7l1.6 2.9h-3.2zM1080 955.7l1.6 2.9h-3.2zM1082.3 955.7l1.6 2.9h-3.2zM1144.4 955.7l1.6 2.9h-3.2zM1148.6 955.7l1.6 2.9h-3.2zM1153.4 955.7l1.6 2.9h-3.2zM1155.4 955.7l1.6 2.9h-3.2zM1241.2 955.7l1.6 2.9h-3.2zM1249.6 955.7l1.6 2.9h-3.2zM1258.7 955.7l1.6 2.9h-3.2zM1272.3 955.7l1.6 2.9h-3.2zM1303.2 955.7l1.6 2.9h-3.2z" stroke="#f00" stroke-width=".9" fill="#f00" fill-opacity=".55" stroke-linejoin="round"/>
</g>
<path d="M105.5 954.5H1485.5" stroke="#000" stroke-width="1.1"/>
<path d="M162 725.76V1011M1241 725.76V1011M1302.9 725.76V1011" stroke="#800080" stroke-width="2.08" stroke-dasharray="2.08 3.42" fill="none"/>
<rect x="105.5" y="35.5" width="1380" height="286" fill="none" stroke="#000" stroke-width="1.1"/>
<rect x="105.5" y="380.5" width="1380" height="286" fill="none" stroke="#000" stroke-width="1.1"/>
<rect x="105.5" y="725.5" width="1380" height="286" fill="none" stroke="#000" stroke-width="1.1"/>
<path d="M162.5 321.5v4.9M333.5 321.5v4.9M505.5 321.5v4.9M677.5 321.5v4.9M848.5 321.5v4.9M1020.5 321.5v4.9M1191.5 321.5v4.9M1363.5 321.5v4.9M162.5 666.5v4.9M333.5 666.5v4.9M505.5 666.5v4.9M677.5 666.5v4.9M848.5 666.5v4.9M1020.5 666.5v4.9M1191.5 666.5v4.9M1363.5 666.5v4.9M162.5 1011.5v4.9M333.5 1011.5v4.9M505.5 1011.5v4.9M677.5 1011.5v4.9M848.5 1011.5v4.9M1020.5 1011.5v4.9M1191.5 1011.5v4.9M1363.5 1011.5v4.9M105.5 58.5h-4.9M105.5 95.5h-4.9M105.5 131.5h-4.9M105.5 168.5h-4.9M105.5 205.5h-4.9M105.5 241.5h-4.9M105.5 278.5h-4.9M105.5 315.5h-4.9M105.5 393.5h-4.9M105.5 434.5h-4.9M105.5 475.5h-4.9M105.5 517.5h-4.9M105.5 558.5h-4.9M105.5 599.5h-4.9M105.5 640.5h-4.9M105.5 758.5h-4.9M105.5 791.5h-4.9M105.5 823.5h-4.9M105.5 856.5h-4.9M105.5 889.5h-4.9M105.5 921.5h-4.9M105.5 957.5h-4.9M105.5 983.5h-4.9M105.5 1009.5h-4.9" stroke="#000" stroke-width="1.1" fill="none"/>
<path d="M105.5 970.5h-2.8M105.5 996.5h-2.8" stroke="#000" stroke-width=".85" fill="none"/>
<g font-family="Liberation Sans, sans-serif" fill="#000" font-kerning="none" style="font-kerning:none;opacity:.999">
<text x="157.93" y="342.3" font-size="14.2" textLength="8.06" lengthAdjust="spacingAndGlyphs">0</text>
<text x="315.52" y="342.3" font-size="14.2" textLength="34.81" lengthAdjust="spacingAndGlyphs">2500</text>
<text x="487.40" y="342.3" font-size="14.2" textLength="34.82" lengthAdjust="spacingAndGlyphs">5000</text>
<text x="659.56" y="342.3" font-size="14.2" textLength="34.52" lengthAdjust="spacingAndGlyphs">7500</text>
<text x="825.97" y="342.3" font-size="14.2" textLength="43.46" lengthAdjust="spacingAndGlyphs">10000</text>
<text x="997.97" y="342.3" font-size="14.2" textLength="43.46" lengthAdjust="spacingAndGlyphs">12500</text>
<text x="1168.97" y="342.3" font-size="14.2" textLength="43.46" lengthAdjust="spacingAndGlyphs">15000</text>
<text x="1340.97" y="342.3" font-size="14.2" textLength="43.46" lengthAdjust="spacingAndGlyphs">17500</text>
<text x="157.93" y="687.3" font-size="14.2" textLength="8.06" lengthAdjust="spacingAndGlyphs">0</text>
<text x="315.52" y="687.3" font-size="14.2" textLength="34.81" lengthAdjust="spacingAndGlyphs">2500</text>
<text x="487.40" y="687.3" font-size="14.2" textLength="34.82" lengthAdjust="spacingAndGlyphs">5000</text>
<text x="659.56" y="687.3" font-size="14.2" textLength="34.52" lengthAdjust="spacingAndGlyphs">7500</text>
<text x="825.97" y="687.3" font-size="14.2" textLength="43.46" lengthAdjust="spacingAndGlyphs">10000</text>
<text x="997.97" y="687.3" font-size="14.2" textLength="43.46" lengthAdjust="spacingAndGlyphs">12500</text>
<text x="1168.97" y="687.3" font-size="14.2" textLength="43.46" lengthAdjust="spacingAndGlyphs">15000</text>
<text x="1340.97" y="687.3" font-size="14.2" textLength="43.46" lengthAdjust="spacingAndGlyphs">17500</text>
<text x="157.93" y="1032.3" font-size="14.2" textLength="8.06" lengthAdjust="spacingAndGlyphs">0</text>
<text x="315.52" y="1032.3" font-size="14.2" textLength="34.81" lengthAdjust="spacingAndGlyphs">2500</text>
<text x="487.40" y="1032.3" font-size="14.2" textLength="34.82" lengthAdjust="spacingAndGlyphs">5000</text>
<text x="659.56" y="1032.3" font-size="14.2" textLength="34.52" lengthAdjust="spacingAndGlyphs">7500</text>
<text x="825.97" y="1032.3" font-size="14.2" textLength="43.46" lengthAdjust="spacingAndGlyphs">10000</text>
<text x="997.97" y="1032.3" font-size="14.2" textLength="43.46" lengthAdjust="spacingAndGlyphs">12500</text>
<text x="1168.97" y="1032.3" font-size="14.2" textLength="43.46" lengthAdjust="spacingAndGlyphs">15000</text>
<text x="1340.97" y="1032.3" font-size="14.2" textLength="43.46" lengthAdjust="spacingAndGlyphs">17500</text>
<text x="73.34" y="63.8" font-size="14.2" textLength="21.79" lengthAdjust="spacingAndGlyphs">9.0</text>
<text x="73.55" y="100.8" font-size="14.2" textLength="21.72" lengthAdjust="spacingAndGlyphs">8.9</text>
<text x="73.53" y="136.8" font-size="14.2" textLength="21.70" lengthAdjust="spacingAndGlyphs">8.8</text>
<text x="73.78" y="173.8" font-size="14.2" textLength="21.42" lengthAdjust="spacingAndGlyphs">8.7</text>
<text x="73.45" y="210.8" font-size="14.2" textLength="21.82" lengthAdjust="spacingAndGlyphs">8.6</text>
<text x="73.82" y="246.8" font-size="14.2" textLength="21.14" lengthAdjust="spacingAndGlyphs">8.5</text>
<text x="73.37" y="283.8" font-size="14.2" textLength="21.41" lengthAdjust="spacingAndGlyphs">8.4</text>
<text x="73.70" y="320.8" font-size="14.2" textLength="21.51" lengthAdjust="spacingAndGlyphs">8.3</text>
<text x="64.98" y="398.8" font-size="14.2" textLength="30.13" lengthAdjust="spacingAndGlyphs">9.02</text>
<text x="64.50" y="439.8" font-size="14.2" textLength="30.44" lengthAdjust="spacingAndGlyphs">9.00</text>
<text x="64.69" y="480.8" font-size="14.2" textLength="30.48" lengthAdjust="spacingAndGlyphs">8.98</text>
<text x="64.62" y="522.8" font-size="14.2" textLength="30.40" lengthAdjust="spacingAndGlyphs">8.96</text>
<text x="64.53" y="563.8" font-size="14.2" textLength="30.26" lengthAdjust="spacingAndGlyphs">8.94</text>
<text x="65.15" y="604.8" font-size="14.2" textLength="30.09" lengthAdjust="spacingAndGlyphs">8.92</text>
<text x="64.66" y="645.8" font-size="14.2" textLength="30.38" lengthAdjust="spacingAndGlyphs">8.90</text>
<text x="16.80" y="763.8" font-size="14.2" textLength="78.71" lengthAdjust="spacingAndGlyphs">not Kalman</text>
<text x="32.36" y="796.8" font-size="14.2" textLength="62.62" lengthAdjust="spacingAndGlyphs">not track</text>
<text x="27.02" y="828.8" font-size="14.2" textLength="68.99" lengthAdjust="spacingAndGlyphs">Sat. pixel.</text>
<text x="38.34" y="861.8" font-size="14.2" textLength="57.61" lengthAdjust="spacingAndGlyphs">Ion. rad.</text>
<text x="52.06" y="894.8" font-size="14.2" textLength="43.29" lengthAdjust="spacingAndGlyphs">dr &gt; 5</text>
<text x="13.76" y="926.8" font-size="14.2" textLength="81.54" lengthAdjust="spacingAndGlyphs">OBS not OK</text>
<text x="78.11" y="962.8" font-size="14.2" textLength="16.79" lengthAdjust="spacingAndGlyphs">10</text>
<text x="87.04" y="988.8" font-size="14.2" textLength="7.95" lengthAdjust="spacingAndGlyphs">5</text>
<text x="86.88" y="1014.8" font-size="14.2" textLength="8.06" lengthAdjust="spacingAndGlyphs">0</text>
<text x="696.08" y="27" font-size="17" textLength="197.09" lengthAdjust="spacingAndGlyphs">AGASC ID 335947592.0</text>
<text x="706.89" y="372.1" font-size="17" textLength="175.71" lengthAdjust="spacingAndGlyphs">Magnitude Estimates</text>
<text transform="translate(69 983.5) rotate(-90)" font-size="14.2" text-anchor="middle" textLength="14.6" lengthAdjust="spacingAndGlyphs">dr</text>
</g>
<g font-family="Liberation Sans, sans-serif" fill="#000" font-kerning="none" style="font-kerning:none;opacity:.999">
<rect x="1361.3" y="42.4" width="117.5" height="26.8" rx="2.6" fill="#fff" fill-opacity=".8" stroke="#ccc" stroke-width="1.1"/>
<path d="M1366.2 53.7H1396" stroke="#008000" stroke-width="2.08"/>
<text x="1406.70" y="58.7" font-size="14.2" textLength="30.50" lengthAdjust="spacingAndGlyphs">mag</text>
<text x="1437.51" y="60.8" font-size="10.4" textLength="34.36" lengthAdjust="spacingAndGlyphs" font-style="italic">AGASC</text>
<rect x="1348.5" y="247.3" width="130.3" height="67.2" rx="2.6" fill="#fff" fill-opacity=".8" stroke="#ccc" stroke-width="1.1"/>
<circle cx="1367.6" cy="260.6" r="2.1" fill="#f00"/>
<circle cx="1367.6" cy="281.4" r="2.1" fill="#ffa500"/>
<circle cx="1367.6" cy="302.3" r="2.1" fill="#000"/>
<text x="1391.71" y="264.1" font-size="14.2" textLength="47.79" lengthAdjust="spacingAndGlyphs">not OK</text>
<text x="1392.46" y="285" font-size="14.2" textLength="79.64" lengthAdjust="spacingAndGlyphs">Highlighted</text>
<text x="1393.04" y="305.9" font-size="14.2" textLength="20.88" lengthAdjust="spacingAndGlyphs">OK</text>
<rect x="1365.3" y="387.4" width="113.5" height="48" rx="2.6" fill="#fff" fill-opacity=".8" stroke="#ccc" stroke-width="1.1"/>
<path d="M1369.4 399.4H1399.6" stroke="#ffa500" stroke-width="2.78"/><path d="M1369.4 422H1399.2" stroke="#f00" stroke-width="2.08"/>
<text x="1409.40" y="404" font-size="14.2" textLength="30.50" lengthAdjust="spacingAndGlyphs">mag</text>
<text x="1439.48" y="406.1" font-size="10.4" textLength="32.35" lengthAdjust="spacingAndGlyphs" font-style="italic">OBSID</text>
<text x="1408.80" y="426.7" font-size="14.2" textLength="30.50" lengthAdjust="spacingAndGlyphs">mag</text>
<rect x="1348.5" y="613.2" width="130.3" height="46.2" rx="2.6" fill="#fff" fill-opacity=".8" stroke="#ccc" stroke-width="1.1"/>
<circle cx="1367.6" cy="626.5" r="2.1" fill="#ffa500"/>
<circle cx="1367.6" cy="647.4" r="2.1" fill="#000"/>
<text x="1392.46" y="630" font-size="14.2" textLength="79.64" lengthAdjust="spacingAndGlyphs">Highlighted</text>
<text x="1393.04" y="650.9" font-size="14.2" textLength="20.88" lengthAdjust="spacingAndGlyphs">OK</text>
</g>
</svg>
</body></html>
